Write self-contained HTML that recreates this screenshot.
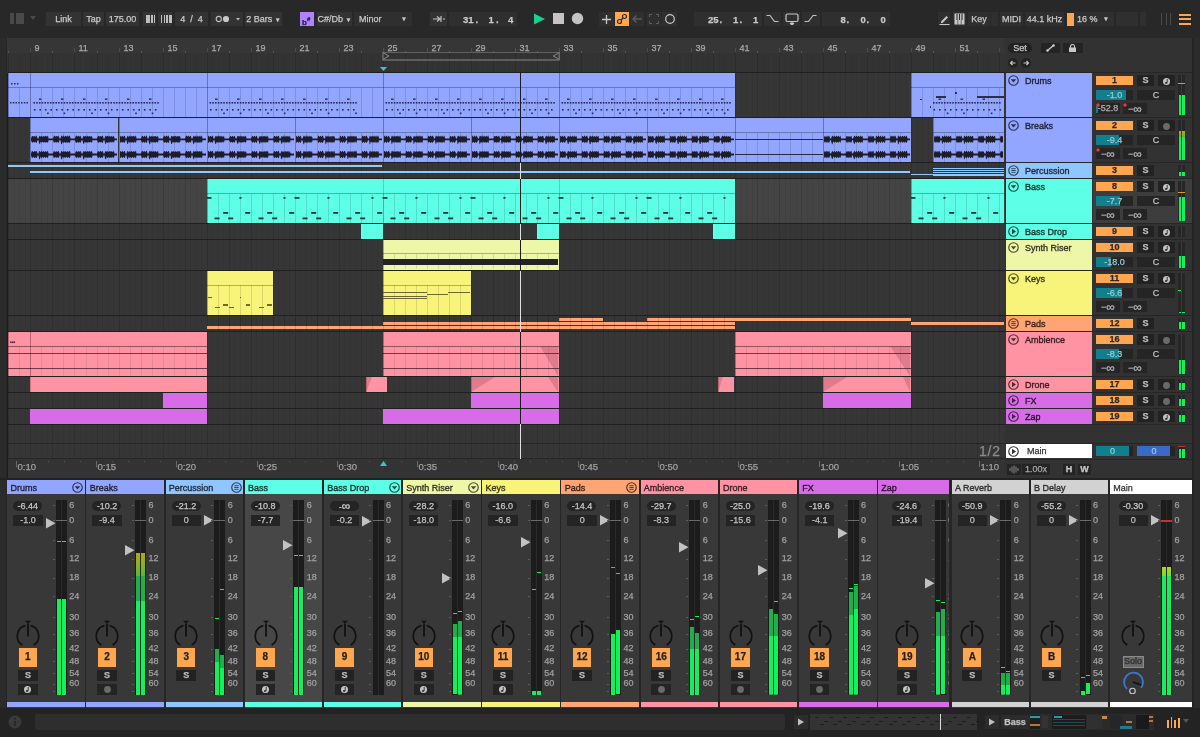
<!DOCTYPE html><html><head><meta charset="utf-8"><style>
html,body{margin:0;padding:0;width:1200px;height:737px;overflow:hidden;background:#1d1d1d;font-family:"Liberation Sans",sans-serif;}
#r{position:relative;width:1200px;height:737px;overflow:hidden}
#r>div,#r>span{position:absolute;box-sizing:border-box;white-space:nowrap}
#r>span{line-height:11px}
#r{-webkit-font-smoothing:antialiased;will-change:transform;-webkit-text-stroke:0.25px currentColor}
</style></head><body><div id="r">
<div style="left:0px;top:0px;width:1200px;height:38px;background:#282828;"></div>
<div style="left:10px;top:13px;width:4px;height:11px;background:#4a4a4a;"></div>
<div style="left:16px;top:13px;width:8px;height:11px;background:#4a4a4a;"></div>
<svg style="position:absolute;left:30px;top:16px" width="6" height="4"><path d="M0 0H6L3 4Z" fill="#4a4a4a"/></svg>
<div style="left:46px;top:12px;width:35px;height:14px;background:#333333;color:#c9c9c9;font-size:9px;line-height:14px;text-align:center;">Link</div>
<div style="left:83px;top:12px;width:21px;height:14px;background:#333333;color:#c9c9c9;font-size:9px;line-height:14px;text-align:center;">Tap</div>
<div style="left:106px;top:12px;width:33px;height:14px;background:#333333;color:#c9c9c9;font-size:9px;line-height:14px;text-align:center;">175.00</div>
<div style="left:143px;top:12px;width:13px;height:14px;background:#333333;color:#c9c9c9;font-size:9px;line-height:14px;text-align:center;"></div>
<div style="left:158px;top:12px;width:14px;height:14px;background:#333333;color:#c9c9c9;font-size:9px;line-height:14px;text-align:center;"></div>
<div style="left:146.0px;top:15px;width:3px;height:8px;background:#bdbdbd;"></div>
<div style="left:161.0px;top:15px;width:1.4px;height:8px;background:#bdbdbd;"></div>
<div style="left:148.6px;top:15px;width:1.4px;height:8px;background:#bdbdbd;"></div>
<div style="left:163.6px;top:15px;width:1.4px;height:8px;background:#bdbdbd;"></div>
<div style="left:151.2px;top:15px;width:1.4px;height:8px;background:#bdbdbd;"></div>
<div style="left:166.2px;top:15px;width:1.4px;height:8px;background:#bdbdbd;"></div>
<div style="left:153.8px;top:15px;width:1.4px;height:8px;background:#bdbdbd;"></div>
<div style="left:168.8px;top:15px;width:3px;height:8px;background:#bdbdbd;"></div>
<div style="left:175px;top:12px;width:33px;height:14px;background:#333333;color:#c9c9c9;font-size:9px;line-height:14px;text-align:center;">4 &nbsp;/ &nbsp;4</div>
<div style="left:211px;top:12px;width:32px;height:14px;background:#333333;color:#c9c9c9;font-size:9px;line-height:14px;text-align:center;"></div>
<svg style="position:absolute;left:215px;top:14px" width="26" height="10"><circle cx="3.8" cy="5" r="2.6" fill="none" stroke="#bdbdbd" stroke-width="1.1"/><circle cx="11" cy="5" r="3.1" fill="#c8c8c8"/><path d="M21 4H25L23 6.5Z" fill="#bdbdbd"/></svg>
<div style="left:245px;top:12px;width:37px;height:14px;background:#333333;color:#c9c9c9;font-size:9px;line-height:14px;text-align:center;">2 Bars <span style="font-size:6px">&#9660;</span></div>
<div style="left:300px;top:12px;width:14px;height:14px;background:#b084ff;"></div>
<span style="left:302px;top:14px;color:#2a1a40;font-size:8px;font-weight:bold;line-height:10px">b<sup style="font-size:6px">#</sup></span>
<div style="left:317px;top:12px;width:35px;height:14px;background:#333333;color:#c9c9c9;font-size:9px;line-height:14px;text-align:center;">C#/Db <span style="font-size:6px">&#9660;</span></div>
<div style="left:354px;top:12px;width:58px;height:14px;background:#2f2f2f;color:#c9c9c9;font-size:9px;line-height:14px;text-align:center;"><span style="position:absolute;left:5px">Minor</span><span style="position:absolute;right:5px;font-size:6px">&#9660;</span></div>
<div style="left:430px;top:12px;width:17px;height:14px;background:#333333;color:#c9c9c9;font-size:9px;line-height:14px;text-align:center;"></div>
<svg style="position:absolute;left:432px;top:15px" width="14" height="8"><path d="M1 4H7M5 1.5L8 4L5 6.5M9 1V7M11 4H13" stroke="#c0c0c0" stroke-width="1.2" fill="none"/></svg>
<div style="left:449px;top:12px;width:68px;height:14px;background:#2f2f2f;color:#c9c9c9;font-size:9px;line-height:14px;text-align:center;"></div>
<span style="left:463px;top:14px;color:#c9c9c9;font-size:9.5px;font-weight:bold;line-height:11px">31</span>
<span style="left:475.5px;top:14px;color:#c9c9c9;font-size:9.5px;font-weight:bold;line-height:11px">.</span>
<span style="left:488.5px;top:14px;color:#c9c9c9;font-size:9.5px;font-weight:bold;line-height:11px">1</span>
<span style="left:496px;top:14px;color:#c9c9c9;font-size:9.5px;font-weight:bold;line-height:11px">.</span>
<span style="left:508px;top:14px;color:#c9c9c9;font-size:9.5px;font-weight:bold;line-height:11px">4</span>
<svg style="position:absolute;left:533px;top:13px" width="13" height="12"><path d="M1 0.5L12 6L1 11.5Z" fill="#1bd08a"/></svg>
<div style="left:553px;top:13px;width:11px;height:11px;background:#c4c4c4;"></div>
<svg style="position:absolute;left:571px;top:12px" width="13" height="13"><circle cx="6.5" cy="6.5" r="5.7" fill="#c4c4c4"/></svg>
<div style="left:599px;top:12px;width:15px;height:14px;background:#2f2f2f;color:#c9c9c9;font-size:9px;line-height:14px;text-align:center;"></div>
<svg style="position:absolute;left:601px;top:14px" width="11" height="11"><path d="M5.5 1V10M1 5.5H10" stroke="#c8c8c8" stroke-width="1.3"/></svg>
<div style="left:615px;top:12px;width:14px;height:14px;background:#ffa64f;color:#c9c9c9;font-size:9px;line-height:14px;text-align:center;"></div>
<svg style="position:absolute;left:616px;top:13px" width="12" height="12"><circle cx="3.5" cy="8.5" r="2" fill="none" stroke="#2a2a2a" stroke-width="1.2"/><circle cx="8.5" cy="3.5" r="2" fill="none" stroke="#2a2a2a" stroke-width="1.2"/><path d="M5 7L7 5" stroke="#2a2a2a" stroke-width="1.2"/></svg>
<div style="left:630px;top:12px;width:14px;height:14px;background:#2f2f2f;color:#c9c9c9;font-size:9px;line-height:14px;text-align:center;"></div>
<svg style="position:absolute;left:632px;top:14px" width="11" height="10"><path d="M1 5H10M4.5 1.5L1 5L4.5 8.5" stroke="#5a5a5a" stroke-width="1.4" fill="none"/></svg>
<div style="left:647px;top:12px;width:14px;height:14px;background:#2f2f2f;color:#c9c9c9;font-size:9px;line-height:14px;text-align:center;"></div>
<svg style="position:absolute;left:649px;top:14px" width="10" height="10"><path d="M0.5 3V0.5H3M7 0.5H9.5V3M9.5 7V9.5H7M3 9.5H0.5V7" stroke="#5a5a5a" stroke-width="1.1" fill="none"/></svg>
<div style="left:662px;top:12px;width:15px;height:14px;background:#2f2f2f;color:#c9c9c9;font-size:9px;line-height:14px;text-align:center;"></div>
<svg style="position:absolute;left:664px;top:13px" width="12" height="12"><circle cx="6" cy="6" r="4.3" fill="none" stroke="#c8c8c8" stroke-width="1.2"/></svg>
<div style="left:694px;top:12px;width:68px;height:14px;background:#2f2f2f;color:#c9c9c9;font-size:9px;line-height:14px;text-align:center;"></div>
<span style="left:708px;top:14px;color:#c9c9c9;font-size:9.5px;font-weight:bold;line-height:11px">25</span>
<span style="left:719.5px;top:14px;color:#c9c9c9;font-size:9.5px;font-weight:bold;line-height:11px">.</span>
<span style="left:733px;top:14px;color:#c9c9c9;font-size:9.5px;font-weight:bold;line-height:11px">1</span>
<span style="left:739.5px;top:14px;color:#c9c9c9;font-size:9.5px;font-weight:bold;line-height:11px">.</span>
<span style="left:753px;top:14px;color:#c9c9c9;font-size:9.5px;font-weight:bold;line-height:11px">1</span>
<div style="left:764px;top:12px;width:17px;height:14px;background:#2f2f2f;color:#c9c9c9;font-size:9px;line-height:14px;text-align:center;"></div>
<svg style="position:absolute;left:766px;top:14px" width="13" height="9"><path d="M0.5 1.5H4L8.5 7.5H12.5" stroke="#c0c0c0" stroke-width="1.2" fill="none"/></svg>
<div style="left:783px;top:12px;width:17px;height:14px;background:#2f2f2f;color:#c9c9c9;font-size:9px;line-height:14px;text-align:center;"></div>
<svg style="position:absolute;left:785px;top:13px" width="14" height="12"><rect x="1" y="1" width="12" height="7.5" rx="1.5" fill="none" stroke="#c8c8c8" stroke-width="1.2"/><path d="M7 8V11.5M5 10L7 12L9 10" stroke="#c8c8c8" stroke-width="1.2" fill="#c8c8c8"/></svg>
<div style="left:802px;top:12px;width:18px;height:14px;background:#2f2f2f;color:#c9c9c9;font-size:9px;line-height:14px;text-align:center;"></div>
<svg style="position:absolute;left:804px;top:14px" width="13" height="9"><path d="M0.5 7.5H4.5L9 1.5H12.5" stroke="#c0c0c0" stroke-width="1.2" fill="none"/></svg>
<div style="left:822px;top:12px;width:68px;height:14px;background:#2f2f2f;color:#c9c9c9;font-size:9px;line-height:14px;text-align:center;"></div>
<span style="left:840.5px;top:14px;color:#c9c9c9;font-size:9.5px;font-weight:bold;line-height:11px">8</span>
<span style="left:846.5px;top:14px;color:#c9c9c9;font-size:9.5px;font-weight:bold;line-height:11px">.</span>
<span style="left:860.5px;top:14px;color:#c9c9c9;font-size:9.5px;font-weight:bold;line-height:11px">0</span>
<span style="left:866.5px;top:14px;color:#c9c9c9;font-size:9.5px;font-weight:bold;line-height:11px">.</span>
<span style="left:880.5px;top:14px;color:#c9c9c9;font-size:9.5px;font-weight:bold;line-height:11px">0</span>
<div style="left:938px;top:12px;width:12px;height:14px;background:#2f2f2f;color:#c9c9c9;font-size:9px;line-height:14px;text-align:center;"></div>
<svg style="position:absolute;left:939px;top:13px" width="11" height="12"><path d="M2 8.5L7.5 3L9 4.5L3.5 10H2Z" fill="#c8c8c8"/><path d="M0.5 11.5H10.5" stroke="#c8c8c8" stroke-width="1"/></svg>
<div style="left:953px;top:12px;width:13px;height:14px;background:#2f2f2f;color:#c9c9c9;font-size:9px;line-height:14px;text-align:center;"></div>
<svg style="position:absolute;left:954px;top:13px" width="11" height="12"><rect x="0.5" y="0.5" width="10" height="11" fill="#c8c8c8"/><path d="M3 1V7M5.5 1V7M8 1V7" stroke="#2a2a2a" stroke-width="1.1"/><path d="M3.8 7V11.5M7.2 7V11.5" stroke="#2a2a2a" stroke-width="0.6"/></svg>
<div style="left:968px;top:12px;width:22px;height:14px;background:#2f2f2f;color:#c9c9c9;font-size:9px;line-height:14px;text-align:center;">Key</div>
<div style="left:991px;top:12px;width:7px;height:14px;background:#2f2f2f;color:#c9c9c9;font-size:9px;line-height:14px;text-align:center;"></div>
<div style="left:1000px;top:12px;width:23px;height:14px;background:#2f2f2f;color:#c9c9c9;font-size:9px;line-height:14px;text-align:center;">MIDI</div>
<div style="left:1025px;top:12px;width:39px;height:14px;background:#2f2f2f;color:#c9c9c9;font-size:9px;line-height:14px;text-align:center;">44.1 kHz</div>
<div style="left:1067px;top:13px;width:6.5px;height:12.5px;background:#ffa64f;"></div>
<div style="left:1074px;top:12px;width:40px;height:14px;background:#2f2f2f;color:#c9c9c9;font-size:9px;line-height:14px;text-align:center;"><span style="position:absolute;left:3px">16 %</span><span style="position:absolute;right:5px;font-size:6px">&#9660;</span></div>
<div style="left:1116px;top:12px;width:22px;height:14px;background:#2f2f2f;color:#c9c9c9;font-size:9px;line-height:14px;text-align:center;"></div>
<div style="left:1140px;top:12px;width:6px;height:14px;background:#2f2f2f;color:#c9c9c9;font-size:9px;line-height:14px;text-align:center;"></div>
<div style="left:1161.0px;top:13px;width:1px;height:12px;background:#4a4a4a;"></div>
<div style="left:1165.5px;top:13px;width:1px;height:12px;background:#4a4a4a;"></div>
<div style="left:1170.0px;top:13px;width:1px;height:12px;background:#4a4a4a;"></div>
<div style="left:1179px;top:13.5px;width:12px;height:2px;background:#ffa64f;"></div>
<div style="left:1179px;top:18.3px;width:12px;height:2px;background:#ffa64f;"></div>
<div style="left:1179px;top:23.1px;width:12px;height:2px;background:#ffa64f;"></div>
<div style="left:0px;top:38px;width:7px;height:672px;background:#2b2b2b;"></div>
<div style="left:5.5px;top:38px;width:1.5px;height:672px;background:#262626;"></div>
<div style="left:0px;top:710px;width:1200px;height:27px;background:#232323;"></div>
<div style="left:7px;top:38px;width:998px;height:35px;background:#333333;"></div>
<div style="left:7px;top:38px;width:998px;height:15px;background:#363636;"></div>
<div style="left:8px;top:53px;width:1px;height:19px;background:#2c2c2c;"></div>
<div style="left:14px;top:53px;width:1px;height:19px;background:#313131;"></div>
<div style="left:19px;top:53px;width:1px;height:19px;background:#313131;"></div>
<div style="left:25px;top:53px;width:1px;height:19px;background:#313131;"></div>
<div style="left:30px;top:53px;width:1px;height:19px;background:#2c2c2c;"></div>
<div style="left:36px;top:53px;width:1px;height:19px;background:#313131;"></div>
<div style="left:41px;top:53px;width:1px;height:19px;background:#313131;"></div>
<div style="left:47px;top:53px;width:1px;height:19px;background:#313131;"></div>
<div style="left:52px;top:53px;width:1px;height:19px;background:#2c2c2c;"></div>
<div style="left:58px;top:53px;width:1px;height:19px;background:#313131;"></div>
<div style="left:63px;top:53px;width:1px;height:19px;background:#313131;"></div>
<div style="left:69px;top:53px;width:1px;height:19px;background:#313131;"></div>
<div style="left:74px;top:53px;width:1px;height:19px;background:#2c2c2c;"></div>
<div style="left:80px;top:53px;width:1px;height:19px;background:#313131;"></div>
<div style="left:86px;top:53px;width:1px;height:19px;background:#313131;"></div>
<div style="left:91px;top:53px;width:1px;height:19px;background:#313131;"></div>
<div style="left:97px;top:53px;width:1px;height:19px;background:#2c2c2c;"></div>
<div style="left:102px;top:53px;width:1px;height:19px;background:#313131;"></div>
<div style="left:108px;top:53px;width:1px;height:19px;background:#313131;"></div>
<div style="left:113px;top:53px;width:1px;height:19px;background:#313131;"></div>
<div style="left:119px;top:53px;width:1px;height:19px;background:#2c2c2c;"></div>
<div style="left:124px;top:53px;width:1px;height:19px;background:#313131;"></div>
<div style="left:130px;top:53px;width:1px;height:19px;background:#313131;"></div>
<div style="left:135px;top:53px;width:1px;height:19px;background:#313131;"></div>
<div style="left:141px;top:53px;width:1px;height:19px;background:#2c2c2c;"></div>
<div style="left:146px;top:53px;width:1px;height:19px;background:#313131;"></div>
<div style="left:152px;top:53px;width:1px;height:19px;background:#313131;"></div>
<div style="left:157px;top:53px;width:1px;height:19px;background:#313131;"></div>
<div style="left:163px;top:53px;width:1px;height:19px;background:#2c2c2c;"></div>
<div style="left:168px;top:53px;width:1px;height:19px;background:#313131;"></div>
<div style="left:174px;top:53px;width:1px;height:19px;background:#313131;"></div>
<div style="left:179px;top:53px;width:1px;height:19px;background:#313131;"></div>
<div style="left:185px;top:53px;width:1px;height:19px;background:#2c2c2c;"></div>
<div style="left:190px;top:53px;width:1px;height:19px;background:#313131;"></div>
<div style="left:196px;top:53px;width:1px;height:19px;background:#313131;"></div>
<div style="left:201px;top:53px;width:1px;height:19px;background:#313131;"></div>
<div style="left:207px;top:53px;width:1px;height:19px;background:#2c2c2c;"></div>
<div style="left:212px;top:53px;width:1px;height:19px;background:#313131;"></div>
<div style="left:218px;top:53px;width:1px;height:19px;background:#313131;"></div>
<div style="left:223px;top:53px;width:1px;height:19px;background:#313131;"></div>
<div style="left:229px;top:53px;width:1px;height:19px;background:#2c2c2c;"></div>
<div style="left:234px;top:53px;width:1px;height:19px;background:#313131;"></div>
<div style="left:240px;top:53px;width:1px;height:19px;background:#313131;"></div>
<div style="left:245px;top:53px;width:1px;height:19px;background:#313131;"></div>
<div style="left:251px;top:53px;width:1px;height:19px;background:#2c2c2c;"></div>
<div style="left:256px;top:53px;width:1px;height:19px;background:#313131;"></div>
<div style="left:262px;top:53px;width:1px;height:19px;background:#313131;"></div>
<div style="left:267px;top:53px;width:1px;height:19px;background:#313131;"></div>
<div style="left:273px;top:53px;width:1px;height:19px;background:#2c2c2c;"></div>
<div style="left:278px;top:53px;width:1px;height:19px;background:#313131;"></div>
<div style="left:284px;top:53px;width:1px;height:19px;background:#313131;"></div>
<div style="left:289px;top:53px;width:1px;height:19px;background:#313131;"></div>
<div style="left:295px;top:53px;width:1px;height:19px;background:#2c2c2c;"></div>
<div style="left:300px;top:53px;width:1px;height:19px;background:#313131;"></div>
<div style="left:306px;top:53px;width:1px;height:19px;background:#313131;"></div>
<div style="left:311px;top:53px;width:1px;height:19px;background:#313131;"></div>
<div style="left:317px;top:53px;width:1px;height:19px;background:#2c2c2c;"></div>
<div style="left:322px;top:53px;width:1px;height:19px;background:#313131;"></div>
<div style="left:328px;top:53px;width:1px;height:19px;background:#313131;"></div>
<div style="left:333px;top:53px;width:1px;height:19px;background:#313131;"></div>
<div style="left:339px;top:53px;width:1px;height:19px;background:#2c2c2c;"></div>
<div style="left:344px;top:53px;width:1px;height:19px;background:#313131;"></div>
<div style="left:350px;top:53px;width:1px;height:19px;background:#313131;"></div>
<div style="left:355px;top:53px;width:1px;height:19px;background:#313131;"></div>
<div style="left:361px;top:53px;width:1px;height:19px;background:#2c2c2c;"></div>
<div style="left:366px;top:53px;width:1px;height:19px;background:#313131;"></div>
<div style="left:372px;top:53px;width:1px;height:19px;background:#313131;"></div>
<div style="left:377px;top:53px;width:1px;height:19px;background:#313131;"></div>
<div style="left:383px;top:53px;width:1px;height:19px;background:#2c2c2c;"></div>
<div style="left:388px;top:53px;width:1px;height:19px;background:#313131;"></div>
<div style="left:394px;top:53px;width:1px;height:19px;background:#313131;"></div>
<div style="left:399px;top:53px;width:1px;height:19px;background:#313131;"></div>
<div style="left:405px;top:53px;width:1px;height:19px;background:#2c2c2c;"></div>
<div style="left:410px;top:53px;width:1px;height:19px;background:#313131;"></div>
<div style="left:416px;top:53px;width:1px;height:19px;background:#313131;"></div>
<div style="left:421px;top:53px;width:1px;height:19px;background:#313131;"></div>
<div style="left:427px;top:53px;width:1px;height:19px;background:#2c2c2c;"></div>
<div style="left:432px;top:53px;width:1px;height:19px;background:#313131;"></div>
<div style="left:438px;top:53px;width:1px;height:19px;background:#313131;"></div>
<div style="left:443px;top:53px;width:1px;height:19px;background:#313131;"></div>
<div style="left:449px;top:53px;width:1px;height:19px;background:#2c2c2c;"></div>
<div style="left:454px;top:53px;width:1px;height:19px;background:#313131;"></div>
<div style="left:460px;top:53px;width:1px;height:19px;background:#313131;"></div>
<div style="left:465px;top:53px;width:1px;height:19px;background:#313131;"></div>
<div style="left:471px;top:53px;width:1px;height:19px;background:#2c2c2c;"></div>
<div style="left:476px;top:53px;width:1px;height:19px;background:#313131;"></div>
<div style="left:482px;top:53px;width:1px;height:19px;background:#313131;"></div>
<div style="left:487px;top:53px;width:1px;height:19px;background:#313131;"></div>
<div style="left:493px;top:53px;width:1px;height:19px;background:#2c2c2c;"></div>
<div style="left:498px;top:53px;width:1px;height:19px;background:#313131;"></div>
<div style="left:504px;top:53px;width:1px;height:19px;background:#313131;"></div>
<div style="left:509px;top:53px;width:1px;height:19px;background:#313131;"></div>
<div style="left:515px;top:53px;width:1px;height:19px;background:#2c2c2c;"></div>
<div style="left:520px;top:53px;width:1px;height:19px;background:#313131;"></div>
<div style="left:526px;top:53px;width:1px;height:19px;background:#313131;"></div>
<div style="left:531px;top:53px;width:1px;height:19px;background:#313131;"></div>
<div style="left:537px;top:53px;width:1px;height:19px;background:#2c2c2c;"></div>
<div style="left:542px;top:53px;width:1px;height:19px;background:#313131;"></div>
<div style="left:548px;top:53px;width:1px;height:19px;background:#313131;"></div>
<div style="left:553px;top:53px;width:1px;height:19px;background:#313131;"></div>
<div style="left:559px;top:53px;width:1px;height:19px;background:#2c2c2c;"></div>
<div style="left:564px;top:53px;width:1px;height:19px;background:#313131;"></div>
<div style="left:570px;top:53px;width:1px;height:19px;background:#313131;"></div>
<div style="left:575px;top:53px;width:1px;height:19px;background:#313131;"></div>
<div style="left:581px;top:53px;width:1px;height:19px;background:#2c2c2c;"></div>
<div style="left:586px;top:53px;width:1px;height:19px;background:#313131;"></div>
<div style="left:592px;top:53px;width:1px;height:19px;background:#313131;"></div>
<div style="left:597px;top:53px;width:1px;height:19px;background:#313131;"></div>
<div style="left:603px;top:53px;width:1px;height:19px;background:#2c2c2c;"></div>
<div style="left:608px;top:53px;width:1px;height:19px;background:#313131;"></div>
<div style="left:614px;top:53px;width:1px;height:19px;background:#313131;"></div>
<div style="left:619px;top:53px;width:1px;height:19px;background:#313131;"></div>
<div style="left:625px;top:53px;width:1px;height:19px;background:#2c2c2c;"></div>
<div style="left:630px;top:53px;width:1px;height:19px;background:#313131;"></div>
<div style="left:636px;top:53px;width:1px;height:19px;background:#313131;"></div>
<div style="left:642px;top:53px;width:1px;height:19px;background:#313131;"></div>
<div style="left:647px;top:53px;width:1px;height:19px;background:#2c2c2c;"></div>
<div style="left:653px;top:53px;width:1px;height:19px;background:#313131;"></div>
<div style="left:658px;top:53px;width:1px;height:19px;background:#313131;"></div>
<div style="left:664px;top:53px;width:1px;height:19px;background:#313131;"></div>
<div style="left:669px;top:53px;width:1px;height:19px;background:#2c2c2c;"></div>
<div style="left:675px;top:53px;width:1px;height:19px;background:#313131;"></div>
<div style="left:680px;top:53px;width:1px;height:19px;background:#313131;"></div>
<div style="left:686px;top:53px;width:1px;height:19px;background:#313131;"></div>
<div style="left:691px;top:53px;width:1px;height:19px;background:#2c2c2c;"></div>
<div style="left:697px;top:53px;width:1px;height:19px;background:#313131;"></div>
<div style="left:702px;top:53px;width:1px;height:19px;background:#313131;"></div>
<div style="left:708px;top:53px;width:1px;height:19px;background:#313131;"></div>
<div style="left:713px;top:53px;width:1px;height:19px;background:#2c2c2c;"></div>
<div style="left:719px;top:53px;width:1px;height:19px;background:#313131;"></div>
<div style="left:724px;top:53px;width:1px;height:19px;background:#313131;"></div>
<div style="left:730px;top:53px;width:1px;height:19px;background:#313131;"></div>
<div style="left:735px;top:53px;width:1px;height:19px;background:#2c2c2c;"></div>
<div style="left:741px;top:53px;width:1px;height:19px;background:#313131;"></div>
<div style="left:746px;top:53px;width:1px;height:19px;background:#313131;"></div>
<div style="left:752px;top:53px;width:1px;height:19px;background:#313131;"></div>
<div style="left:757px;top:53px;width:1px;height:19px;background:#2c2c2c;"></div>
<div style="left:763px;top:53px;width:1px;height:19px;background:#313131;"></div>
<div style="left:768px;top:53px;width:1px;height:19px;background:#313131;"></div>
<div style="left:774px;top:53px;width:1px;height:19px;background:#313131;"></div>
<div style="left:779px;top:53px;width:1px;height:19px;background:#2c2c2c;"></div>
<div style="left:785px;top:53px;width:1px;height:19px;background:#313131;"></div>
<div style="left:790px;top:53px;width:1px;height:19px;background:#313131;"></div>
<div style="left:796px;top:53px;width:1px;height:19px;background:#313131;"></div>
<div style="left:801px;top:53px;width:1px;height:19px;background:#2c2c2c;"></div>
<div style="left:807px;top:53px;width:1px;height:19px;background:#313131;"></div>
<div style="left:812px;top:53px;width:1px;height:19px;background:#313131;"></div>
<div style="left:818px;top:53px;width:1px;height:19px;background:#313131;"></div>
<div style="left:823px;top:53px;width:1px;height:19px;background:#2c2c2c;"></div>
<div style="left:829px;top:53px;width:1px;height:19px;background:#313131;"></div>
<div style="left:834px;top:53px;width:1px;height:19px;background:#313131;"></div>
<div style="left:840px;top:53px;width:1px;height:19px;background:#313131;"></div>
<div style="left:845px;top:53px;width:1px;height:19px;background:#2c2c2c;"></div>
<div style="left:851px;top:53px;width:1px;height:19px;background:#313131;"></div>
<div style="left:856px;top:53px;width:1px;height:19px;background:#313131;"></div>
<div style="left:862px;top:53px;width:1px;height:19px;background:#313131;"></div>
<div style="left:867px;top:53px;width:1px;height:19px;background:#2c2c2c;"></div>
<div style="left:873px;top:53px;width:1px;height:19px;background:#313131;"></div>
<div style="left:878px;top:53px;width:1px;height:19px;background:#313131;"></div>
<div style="left:884px;top:53px;width:1px;height:19px;background:#313131;"></div>
<div style="left:889px;top:53px;width:1px;height:19px;background:#2c2c2c;"></div>
<div style="left:895px;top:53px;width:1px;height:19px;background:#313131;"></div>
<div style="left:900px;top:53px;width:1px;height:19px;background:#313131;"></div>
<div style="left:906px;top:53px;width:1px;height:19px;background:#313131;"></div>
<div style="left:911px;top:53px;width:1px;height:19px;background:#2c2c2c;"></div>
<div style="left:917px;top:53px;width:1px;height:19px;background:#313131;"></div>
<div style="left:922px;top:53px;width:1px;height:19px;background:#313131;"></div>
<div style="left:928px;top:53px;width:1px;height:19px;background:#313131;"></div>
<div style="left:933px;top:53px;width:1px;height:19px;background:#2c2c2c;"></div>
<div style="left:939px;top:53px;width:1px;height:19px;background:#313131;"></div>
<div style="left:944px;top:53px;width:1px;height:19px;background:#313131;"></div>
<div style="left:950px;top:53px;width:1px;height:19px;background:#313131;"></div>
<div style="left:955px;top:53px;width:1px;height:19px;background:#2c2c2c;"></div>
<div style="left:961px;top:53px;width:1px;height:19px;background:#313131;"></div>
<div style="left:966px;top:53px;width:1px;height:19px;background:#313131;"></div>
<div style="left:972px;top:53px;width:1px;height:19px;background:#313131;"></div>
<div style="left:977px;top:53px;width:1px;height:19px;background:#2c2c2c;"></div>
<div style="left:983px;top:53px;width:1px;height:19px;background:#313131;"></div>
<div style="left:988px;top:53px;width:1px;height:19px;background:#313131;"></div>
<div style="left:994px;top:53px;width:1px;height:19px;background:#313131;"></div>
<div style="left:999px;top:53px;width:1px;height:19px;background:#2c2c2c;"></div>
<div style="left:30px;top:47.5px;width:1px;height:4px;background:#4e4e4e;"></div>
<span style="left:34.5px;top:43px;color:#a8a8a8;font-size:9px;">9</span>
<div style="left:74px;top:47.5px;width:1px;height:4px;background:#4e4e4e;"></div>
<span style="left:78.5px;top:43px;color:#a8a8a8;font-size:9px;">11</span>
<div style="left:119px;top:47.5px;width:1px;height:4px;background:#4e4e4e;"></div>
<span style="left:123.5px;top:43px;color:#a8a8a8;font-size:9px;">13</span>
<div style="left:163px;top:47.5px;width:1px;height:4px;background:#4e4e4e;"></div>
<span style="left:167.5px;top:43px;color:#a8a8a8;font-size:9px;">15</span>
<div style="left:207px;top:47.5px;width:1px;height:4px;background:#4e4e4e;"></div>
<span style="left:211.5px;top:43px;color:#a8a8a8;font-size:9px;">17</span>
<div style="left:251px;top:47.5px;width:1px;height:4px;background:#4e4e4e;"></div>
<span style="left:255.5px;top:43px;color:#a8a8a8;font-size:9px;">19</span>
<div style="left:295px;top:47.5px;width:1px;height:4px;background:#4e4e4e;"></div>
<span style="left:299.5px;top:43px;color:#a8a8a8;font-size:9px;">21</span>
<div style="left:339px;top:47.5px;width:1px;height:4px;background:#4e4e4e;"></div>
<span style="left:343.5px;top:43px;color:#a8a8a8;font-size:9px;">23</span>
<div style="left:383px;top:47.5px;width:1px;height:4px;background:#4e4e4e;"></div>
<span style="left:387.5px;top:43px;color:#a8a8a8;font-size:9px;">25</span>
<div style="left:427px;top:47.5px;width:1px;height:4px;background:#4e4e4e;"></div>
<span style="left:431.5px;top:43px;color:#a8a8a8;font-size:9px;">27</span>
<div style="left:471px;top:47.5px;width:1px;height:4px;background:#4e4e4e;"></div>
<span style="left:475.5px;top:43px;color:#a8a8a8;font-size:9px;">29</span>
<div style="left:515px;top:47.5px;width:1px;height:4px;background:#4e4e4e;"></div>
<span style="left:519.5px;top:43px;color:#a8a8a8;font-size:9px;">31</span>
<div style="left:559px;top:47.5px;width:1px;height:4px;background:#4e4e4e;"></div>
<span style="left:563.5px;top:43px;color:#a8a8a8;font-size:9px;">33</span>
<div style="left:603px;top:47.5px;width:1px;height:4px;background:#4e4e4e;"></div>
<span style="left:607.5px;top:43px;color:#a8a8a8;font-size:9px;">35</span>
<div style="left:647px;top:47.5px;width:1px;height:4px;background:#4e4e4e;"></div>
<span style="left:651.5px;top:43px;color:#a8a8a8;font-size:9px;">37</span>
<div style="left:691px;top:47.5px;width:1px;height:4px;background:#4e4e4e;"></div>
<span style="left:695.5px;top:43px;color:#a8a8a8;font-size:9px;">39</span>
<div style="left:735px;top:47.5px;width:1px;height:4px;background:#4e4e4e;"></div>
<span style="left:739.5px;top:43px;color:#a8a8a8;font-size:9px;">41</span>
<div style="left:779px;top:47.5px;width:1px;height:4px;background:#4e4e4e;"></div>
<span style="left:783.5px;top:43px;color:#a8a8a8;font-size:9px;">43</span>
<div style="left:823px;top:47.5px;width:1px;height:4px;background:#4e4e4e;"></div>
<span style="left:827.5px;top:43px;color:#a8a8a8;font-size:9px;">45</span>
<div style="left:867px;top:47.5px;width:1px;height:4px;background:#4e4e4e;"></div>
<span style="left:871.5px;top:43px;color:#a8a8a8;font-size:9px;">47</span>
<div style="left:911px;top:47.5px;width:1px;height:4px;background:#4e4e4e;"></div>
<span style="left:915.5px;top:43px;color:#a8a8a8;font-size:9px;">49</span>
<div style="left:955px;top:47.5px;width:1px;height:4px;background:#4e4e4e;"></div>
<span style="left:959.5px;top:43px;color:#a8a8a8;font-size:9px;">51</span>
<div style="left:999px;top:47.5px;width:1px;height:4px;background:#4e4e4e;"></div>
<div style="left:8px;top:51px;width:1px;height:2px;background:#555555;"></div>
<div style="left:52px;top:51px;width:1px;height:2px;background:#555555;"></div>
<div style="left:97px;top:51px;width:1px;height:2px;background:#555555;"></div>
<div style="left:141px;top:51px;width:1px;height:2px;background:#555555;"></div>
<div style="left:185px;top:51px;width:1px;height:2px;background:#555555;"></div>
<div style="left:229px;top:51px;width:1px;height:2px;background:#555555;"></div>
<div style="left:273px;top:51px;width:1px;height:2px;background:#555555;"></div>
<div style="left:317px;top:51px;width:1px;height:2px;background:#555555;"></div>
<div style="left:361px;top:51px;width:1px;height:2px;background:#555555;"></div>
<div style="left:405px;top:51px;width:1px;height:2px;background:#555555;"></div>
<div style="left:449px;top:51px;width:1px;height:2px;background:#555555;"></div>
<div style="left:493px;top:51px;width:1px;height:2px;background:#555555;"></div>
<div style="left:537px;top:51px;width:1px;height:2px;background:#555555;"></div>
<div style="left:581px;top:51px;width:1px;height:2px;background:#555555;"></div>
<div style="left:625px;top:51px;width:1px;height:2px;background:#555555;"></div>
<div style="left:669px;top:51px;width:1px;height:2px;background:#555555;"></div>
<div style="left:713px;top:51px;width:1px;height:2px;background:#555555;"></div>
<div style="left:757px;top:51px;width:1px;height:2px;background:#555555;"></div>
<div style="left:801px;top:51px;width:1px;height:2px;background:#555555;"></div>
<div style="left:845px;top:51px;width:1px;height:2px;background:#555555;"></div>
<div style="left:889px;top:51px;width:1px;height:2px;background:#555555;"></div>
<div style="left:933px;top:51px;width:1px;height:2px;background:#555555;"></div>
<div style="left:977px;top:51px;width:1px;height:2px;background:#555555;"></div>
<svg style="position:absolute;left:381.77px;top:52px" width="179.16000000000008" height="10"><rect x="1" y="0" width="176.16000000000008" height="8" fill="none" stroke="#8a8a8a" stroke-width="1"/><path d="M1.5 1L7 4L1.5 7" fill="none" stroke="#8a8a8a" stroke-width="1"/><path d="M176.66000000000008 1L171.16000000000008 4L176.66000000000008 7" fill="none" stroke="#8a8a8a" stroke-width="1"/></svg>
<svg style="position:absolute;left:379.77px;top:67px" width="7" height="5"><path d="M0 0H7L3.5 4Z" fill="#39c6d0"/></svg>
<div style="left:8px;top:73px;width:997px;height:386px;background:#363636;"></div>
<div style="left:8px;top:179px;width:997px;height:44px;background:#444444;"></div>
<div style="left:8px;top:73px;width:1px;height:386px;background:rgba(0,0,0,0.13);"></div>
<div style="left:14px;top:73px;width:1px;height:386px;background:rgba(0,0,0,0.05);"></div>
<div style="left:19px;top:73px;width:1px;height:386px;background:rgba(0,0,0,0.05);"></div>
<div style="left:25px;top:73px;width:1px;height:386px;background:rgba(0,0,0,0.05);"></div>
<div style="left:30px;top:73px;width:1px;height:386px;background:rgba(0,0,0,0.13);"></div>
<div style="left:36px;top:73px;width:1px;height:386px;background:rgba(0,0,0,0.05);"></div>
<div style="left:41px;top:73px;width:1px;height:386px;background:rgba(0,0,0,0.05);"></div>
<div style="left:47px;top:73px;width:1px;height:386px;background:rgba(0,0,0,0.05);"></div>
<div style="left:52px;top:73px;width:1px;height:386px;background:rgba(0,0,0,0.13);"></div>
<div style="left:58px;top:73px;width:1px;height:386px;background:rgba(0,0,0,0.05);"></div>
<div style="left:63px;top:73px;width:1px;height:386px;background:rgba(0,0,0,0.05);"></div>
<div style="left:69px;top:73px;width:1px;height:386px;background:rgba(0,0,0,0.05);"></div>
<div style="left:74px;top:73px;width:1px;height:386px;background:rgba(0,0,0,0.13);"></div>
<div style="left:80px;top:73px;width:1px;height:386px;background:rgba(0,0,0,0.05);"></div>
<div style="left:86px;top:73px;width:1px;height:386px;background:rgba(0,0,0,0.05);"></div>
<div style="left:91px;top:73px;width:1px;height:386px;background:rgba(0,0,0,0.05);"></div>
<div style="left:97px;top:73px;width:1px;height:386px;background:rgba(0,0,0,0.13);"></div>
<div style="left:102px;top:73px;width:1px;height:386px;background:rgba(0,0,0,0.05);"></div>
<div style="left:108px;top:73px;width:1px;height:386px;background:rgba(0,0,0,0.05);"></div>
<div style="left:113px;top:73px;width:1px;height:386px;background:rgba(0,0,0,0.05);"></div>
<div style="left:119px;top:73px;width:1px;height:386px;background:rgba(0,0,0,0.13);"></div>
<div style="left:124px;top:73px;width:1px;height:386px;background:rgba(0,0,0,0.05);"></div>
<div style="left:130px;top:73px;width:1px;height:386px;background:rgba(0,0,0,0.05);"></div>
<div style="left:135px;top:73px;width:1px;height:386px;background:rgba(0,0,0,0.05);"></div>
<div style="left:141px;top:73px;width:1px;height:386px;background:rgba(0,0,0,0.13);"></div>
<div style="left:146px;top:73px;width:1px;height:386px;background:rgba(0,0,0,0.05);"></div>
<div style="left:152px;top:73px;width:1px;height:386px;background:rgba(0,0,0,0.05);"></div>
<div style="left:157px;top:73px;width:1px;height:386px;background:rgba(0,0,0,0.05);"></div>
<div style="left:163px;top:73px;width:1px;height:386px;background:rgba(0,0,0,0.13);"></div>
<div style="left:168px;top:73px;width:1px;height:386px;background:rgba(0,0,0,0.05);"></div>
<div style="left:174px;top:73px;width:1px;height:386px;background:rgba(0,0,0,0.05);"></div>
<div style="left:179px;top:73px;width:1px;height:386px;background:rgba(0,0,0,0.05);"></div>
<div style="left:185px;top:73px;width:1px;height:386px;background:rgba(0,0,0,0.13);"></div>
<div style="left:190px;top:73px;width:1px;height:386px;background:rgba(0,0,0,0.05);"></div>
<div style="left:196px;top:73px;width:1px;height:386px;background:rgba(0,0,0,0.05);"></div>
<div style="left:201px;top:73px;width:1px;height:386px;background:rgba(0,0,0,0.05);"></div>
<div style="left:207px;top:73px;width:1px;height:386px;background:rgba(0,0,0,0.13);"></div>
<div style="left:212px;top:73px;width:1px;height:386px;background:rgba(0,0,0,0.05);"></div>
<div style="left:218px;top:73px;width:1px;height:386px;background:rgba(0,0,0,0.05);"></div>
<div style="left:223px;top:73px;width:1px;height:386px;background:rgba(0,0,0,0.05);"></div>
<div style="left:229px;top:73px;width:1px;height:386px;background:rgba(0,0,0,0.13);"></div>
<div style="left:234px;top:73px;width:1px;height:386px;background:rgba(0,0,0,0.05);"></div>
<div style="left:240px;top:73px;width:1px;height:386px;background:rgba(0,0,0,0.05);"></div>
<div style="left:245px;top:73px;width:1px;height:386px;background:rgba(0,0,0,0.05);"></div>
<div style="left:251px;top:73px;width:1px;height:386px;background:rgba(0,0,0,0.13);"></div>
<div style="left:256px;top:73px;width:1px;height:386px;background:rgba(0,0,0,0.05);"></div>
<div style="left:262px;top:73px;width:1px;height:386px;background:rgba(0,0,0,0.05);"></div>
<div style="left:267px;top:73px;width:1px;height:386px;background:rgba(0,0,0,0.05);"></div>
<div style="left:273px;top:73px;width:1px;height:386px;background:rgba(0,0,0,0.13);"></div>
<div style="left:278px;top:73px;width:1px;height:386px;background:rgba(0,0,0,0.05);"></div>
<div style="left:284px;top:73px;width:1px;height:386px;background:rgba(0,0,0,0.05);"></div>
<div style="left:289px;top:73px;width:1px;height:386px;background:rgba(0,0,0,0.05);"></div>
<div style="left:295px;top:73px;width:1px;height:386px;background:rgba(0,0,0,0.13);"></div>
<div style="left:300px;top:73px;width:1px;height:386px;background:rgba(0,0,0,0.05);"></div>
<div style="left:306px;top:73px;width:1px;height:386px;background:rgba(0,0,0,0.05);"></div>
<div style="left:311px;top:73px;width:1px;height:386px;background:rgba(0,0,0,0.05);"></div>
<div style="left:317px;top:73px;width:1px;height:386px;background:rgba(0,0,0,0.13);"></div>
<div style="left:322px;top:73px;width:1px;height:386px;background:rgba(0,0,0,0.05);"></div>
<div style="left:328px;top:73px;width:1px;height:386px;background:rgba(0,0,0,0.05);"></div>
<div style="left:333px;top:73px;width:1px;height:386px;background:rgba(0,0,0,0.05);"></div>
<div style="left:339px;top:73px;width:1px;height:386px;background:rgba(0,0,0,0.13);"></div>
<div style="left:344px;top:73px;width:1px;height:386px;background:rgba(0,0,0,0.05);"></div>
<div style="left:350px;top:73px;width:1px;height:386px;background:rgba(0,0,0,0.05);"></div>
<div style="left:355px;top:73px;width:1px;height:386px;background:rgba(0,0,0,0.05);"></div>
<div style="left:361px;top:73px;width:1px;height:386px;background:rgba(0,0,0,0.13);"></div>
<div style="left:366px;top:73px;width:1px;height:386px;background:rgba(0,0,0,0.05);"></div>
<div style="left:372px;top:73px;width:1px;height:386px;background:rgba(0,0,0,0.05);"></div>
<div style="left:377px;top:73px;width:1px;height:386px;background:rgba(0,0,0,0.05);"></div>
<div style="left:383px;top:73px;width:1px;height:386px;background:rgba(0,0,0,0.13);"></div>
<div style="left:388px;top:73px;width:1px;height:386px;background:rgba(0,0,0,0.05);"></div>
<div style="left:394px;top:73px;width:1px;height:386px;background:rgba(0,0,0,0.05);"></div>
<div style="left:399px;top:73px;width:1px;height:386px;background:rgba(0,0,0,0.05);"></div>
<div style="left:405px;top:73px;width:1px;height:386px;background:rgba(0,0,0,0.13);"></div>
<div style="left:410px;top:73px;width:1px;height:386px;background:rgba(0,0,0,0.05);"></div>
<div style="left:416px;top:73px;width:1px;height:386px;background:rgba(0,0,0,0.05);"></div>
<div style="left:421px;top:73px;width:1px;height:386px;background:rgba(0,0,0,0.05);"></div>
<div style="left:427px;top:73px;width:1px;height:386px;background:rgba(0,0,0,0.13);"></div>
<div style="left:432px;top:73px;width:1px;height:386px;background:rgba(0,0,0,0.05);"></div>
<div style="left:438px;top:73px;width:1px;height:386px;background:rgba(0,0,0,0.05);"></div>
<div style="left:443px;top:73px;width:1px;height:386px;background:rgba(0,0,0,0.05);"></div>
<div style="left:449px;top:73px;width:1px;height:386px;background:rgba(0,0,0,0.13);"></div>
<div style="left:454px;top:73px;width:1px;height:386px;background:rgba(0,0,0,0.05);"></div>
<div style="left:460px;top:73px;width:1px;height:386px;background:rgba(0,0,0,0.05);"></div>
<div style="left:465px;top:73px;width:1px;height:386px;background:rgba(0,0,0,0.05);"></div>
<div style="left:471px;top:73px;width:1px;height:386px;background:rgba(0,0,0,0.13);"></div>
<div style="left:476px;top:73px;width:1px;height:386px;background:rgba(0,0,0,0.05);"></div>
<div style="left:482px;top:73px;width:1px;height:386px;background:rgba(0,0,0,0.05);"></div>
<div style="left:487px;top:73px;width:1px;height:386px;background:rgba(0,0,0,0.05);"></div>
<div style="left:493px;top:73px;width:1px;height:386px;background:rgba(0,0,0,0.13);"></div>
<div style="left:498px;top:73px;width:1px;height:386px;background:rgba(0,0,0,0.05);"></div>
<div style="left:504px;top:73px;width:1px;height:386px;background:rgba(0,0,0,0.05);"></div>
<div style="left:509px;top:73px;width:1px;height:386px;background:rgba(0,0,0,0.05);"></div>
<div style="left:515px;top:73px;width:1px;height:386px;background:rgba(0,0,0,0.13);"></div>
<div style="left:520px;top:73px;width:1px;height:386px;background:rgba(0,0,0,0.05);"></div>
<div style="left:526px;top:73px;width:1px;height:386px;background:rgba(0,0,0,0.05);"></div>
<div style="left:531px;top:73px;width:1px;height:386px;background:rgba(0,0,0,0.05);"></div>
<div style="left:537px;top:73px;width:1px;height:386px;background:rgba(0,0,0,0.13);"></div>
<div style="left:542px;top:73px;width:1px;height:386px;background:rgba(0,0,0,0.05);"></div>
<div style="left:548px;top:73px;width:1px;height:386px;background:rgba(0,0,0,0.05);"></div>
<div style="left:553px;top:73px;width:1px;height:386px;background:rgba(0,0,0,0.05);"></div>
<div style="left:559px;top:73px;width:1px;height:386px;background:rgba(0,0,0,0.13);"></div>
<div style="left:564px;top:73px;width:1px;height:386px;background:rgba(0,0,0,0.05);"></div>
<div style="left:570px;top:73px;width:1px;height:386px;background:rgba(0,0,0,0.05);"></div>
<div style="left:575px;top:73px;width:1px;height:386px;background:rgba(0,0,0,0.05);"></div>
<div style="left:581px;top:73px;width:1px;height:386px;background:rgba(0,0,0,0.13);"></div>
<div style="left:586px;top:73px;width:1px;height:386px;background:rgba(0,0,0,0.05);"></div>
<div style="left:592px;top:73px;width:1px;height:386px;background:rgba(0,0,0,0.05);"></div>
<div style="left:597px;top:73px;width:1px;height:386px;background:rgba(0,0,0,0.05);"></div>
<div style="left:603px;top:73px;width:1px;height:386px;background:rgba(0,0,0,0.13);"></div>
<div style="left:608px;top:73px;width:1px;height:386px;background:rgba(0,0,0,0.05);"></div>
<div style="left:614px;top:73px;width:1px;height:386px;background:rgba(0,0,0,0.05);"></div>
<div style="left:619px;top:73px;width:1px;height:386px;background:rgba(0,0,0,0.05);"></div>
<div style="left:625px;top:73px;width:1px;height:386px;background:rgba(0,0,0,0.13);"></div>
<div style="left:630px;top:73px;width:1px;height:386px;background:rgba(0,0,0,0.05);"></div>
<div style="left:636px;top:73px;width:1px;height:386px;background:rgba(0,0,0,0.05);"></div>
<div style="left:642px;top:73px;width:1px;height:386px;background:rgba(0,0,0,0.05);"></div>
<div style="left:647px;top:73px;width:1px;height:386px;background:rgba(0,0,0,0.13);"></div>
<div style="left:653px;top:73px;width:1px;height:386px;background:rgba(0,0,0,0.05);"></div>
<div style="left:658px;top:73px;width:1px;height:386px;background:rgba(0,0,0,0.05);"></div>
<div style="left:664px;top:73px;width:1px;height:386px;background:rgba(0,0,0,0.05);"></div>
<div style="left:669px;top:73px;width:1px;height:386px;background:rgba(0,0,0,0.13);"></div>
<div style="left:675px;top:73px;width:1px;height:386px;background:rgba(0,0,0,0.05);"></div>
<div style="left:680px;top:73px;width:1px;height:386px;background:rgba(0,0,0,0.05);"></div>
<div style="left:686px;top:73px;width:1px;height:386px;background:rgba(0,0,0,0.05);"></div>
<div style="left:691px;top:73px;width:1px;height:386px;background:rgba(0,0,0,0.13);"></div>
<div style="left:697px;top:73px;width:1px;height:386px;background:rgba(0,0,0,0.05);"></div>
<div style="left:702px;top:73px;width:1px;height:386px;background:rgba(0,0,0,0.05);"></div>
<div style="left:708px;top:73px;width:1px;height:386px;background:rgba(0,0,0,0.05);"></div>
<div style="left:713px;top:73px;width:1px;height:386px;background:rgba(0,0,0,0.13);"></div>
<div style="left:719px;top:73px;width:1px;height:386px;background:rgba(0,0,0,0.05);"></div>
<div style="left:724px;top:73px;width:1px;height:386px;background:rgba(0,0,0,0.05);"></div>
<div style="left:730px;top:73px;width:1px;height:386px;background:rgba(0,0,0,0.05);"></div>
<div style="left:735px;top:73px;width:1px;height:386px;background:rgba(0,0,0,0.13);"></div>
<div style="left:741px;top:73px;width:1px;height:386px;background:rgba(0,0,0,0.05);"></div>
<div style="left:746px;top:73px;width:1px;height:386px;background:rgba(0,0,0,0.05);"></div>
<div style="left:752px;top:73px;width:1px;height:386px;background:rgba(0,0,0,0.05);"></div>
<div style="left:757px;top:73px;width:1px;height:386px;background:rgba(0,0,0,0.13);"></div>
<div style="left:763px;top:73px;width:1px;height:386px;background:rgba(0,0,0,0.05);"></div>
<div style="left:768px;top:73px;width:1px;height:386px;background:rgba(0,0,0,0.05);"></div>
<div style="left:774px;top:73px;width:1px;height:386px;background:rgba(0,0,0,0.05);"></div>
<div style="left:779px;top:73px;width:1px;height:386px;background:rgba(0,0,0,0.13);"></div>
<div style="left:785px;top:73px;width:1px;height:386px;background:rgba(0,0,0,0.05);"></div>
<div style="left:790px;top:73px;width:1px;height:386px;background:rgba(0,0,0,0.05);"></div>
<div style="left:796px;top:73px;width:1px;height:386px;background:rgba(0,0,0,0.05);"></div>
<div style="left:801px;top:73px;width:1px;height:386px;background:rgba(0,0,0,0.13);"></div>
<div style="left:807px;top:73px;width:1px;height:386px;background:rgba(0,0,0,0.05);"></div>
<div style="left:812px;top:73px;width:1px;height:386px;background:rgba(0,0,0,0.05);"></div>
<div style="left:818px;top:73px;width:1px;height:386px;background:rgba(0,0,0,0.05);"></div>
<div style="left:823px;top:73px;width:1px;height:386px;background:rgba(0,0,0,0.13);"></div>
<div style="left:829px;top:73px;width:1px;height:386px;background:rgba(0,0,0,0.05);"></div>
<div style="left:834px;top:73px;width:1px;height:386px;background:rgba(0,0,0,0.05);"></div>
<div style="left:840px;top:73px;width:1px;height:386px;background:rgba(0,0,0,0.05);"></div>
<div style="left:845px;top:73px;width:1px;height:386px;background:rgba(0,0,0,0.13);"></div>
<div style="left:851px;top:73px;width:1px;height:386px;background:rgba(0,0,0,0.05);"></div>
<div style="left:856px;top:73px;width:1px;height:386px;background:rgba(0,0,0,0.05);"></div>
<div style="left:862px;top:73px;width:1px;height:386px;background:rgba(0,0,0,0.05);"></div>
<div style="left:867px;top:73px;width:1px;height:386px;background:rgba(0,0,0,0.13);"></div>
<div style="left:873px;top:73px;width:1px;height:386px;background:rgba(0,0,0,0.05);"></div>
<div style="left:878px;top:73px;width:1px;height:386px;background:rgba(0,0,0,0.05);"></div>
<div style="left:884px;top:73px;width:1px;height:386px;background:rgba(0,0,0,0.05);"></div>
<div style="left:889px;top:73px;width:1px;height:386px;background:rgba(0,0,0,0.13);"></div>
<div style="left:895px;top:73px;width:1px;height:386px;background:rgba(0,0,0,0.05);"></div>
<div style="left:900px;top:73px;width:1px;height:386px;background:rgba(0,0,0,0.05);"></div>
<div style="left:906px;top:73px;width:1px;height:386px;background:rgba(0,0,0,0.05);"></div>
<div style="left:911px;top:73px;width:1px;height:386px;background:rgba(0,0,0,0.13);"></div>
<div style="left:917px;top:73px;width:1px;height:386px;background:rgba(0,0,0,0.05);"></div>
<div style="left:922px;top:73px;width:1px;height:386px;background:rgba(0,0,0,0.05);"></div>
<div style="left:928px;top:73px;width:1px;height:386px;background:rgba(0,0,0,0.05);"></div>
<div style="left:933px;top:73px;width:1px;height:386px;background:rgba(0,0,0,0.13);"></div>
<div style="left:939px;top:73px;width:1px;height:386px;background:rgba(0,0,0,0.05);"></div>
<div style="left:944px;top:73px;width:1px;height:386px;background:rgba(0,0,0,0.05);"></div>
<div style="left:950px;top:73px;width:1px;height:386px;background:rgba(0,0,0,0.05);"></div>
<div style="left:955px;top:73px;width:1px;height:386px;background:rgba(0,0,0,0.13);"></div>
<div style="left:961px;top:73px;width:1px;height:386px;background:rgba(0,0,0,0.05);"></div>
<div style="left:966px;top:73px;width:1px;height:386px;background:rgba(0,0,0,0.05);"></div>
<div style="left:972px;top:73px;width:1px;height:386px;background:rgba(0,0,0,0.05);"></div>
<div style="left:977px;top:73px;width:1px;height:386px;background:rgba(0,0,0,0.13);"></div>
<div style="left:983px;top:73px;width:1px;height:386px;background:rgba(0,0,0,0.05);"></div>
<div style="left:988px;top:73px;width:1px;height:386px;background:rgba(0,0,0,0.05);"></div>
<div style="left:994px;top:73px;width:1px;height:386px;background:rgba(0,0,0,0.05);"></div>
<div style="left:999px;top:73px;width:1px;height:386px;background:rgba(0,0,0,0.13);"></div>
<div style="left:8px;top:117px;width:997px;height:1px;background:#262626;"></div>
<div style="left:8px;top:162px;width:997px;height:1px;background:#262626;"></div>
<div style="left:8px;top:178px;width:997px;height:1px;background:#262626;"></div>
<div style="left:8px;top:223px;width:997px;height:1px;background:#262626;"></div>
<div style="left:8px;top:239px;width:997px;height:1px;background:#262626;"></div>
<div style="left:8px;top:270px;width:997px;height:1px;background:#262626;"></div>
<div style="left:8px;top:315px;width:997px;height:1px;background:#262626;"></div>
<div style="left:8px;top:331px;width:997px;height:1px;background:#262626;"></div>
<div style="left:8px;top:376px;width:997px;height:1px;background:#262626;"></div>
<div style="left:8px;top:392px;width:997px;height:1px;background:#262626;"></div>
<div style="left:8px;top:408px;width:997px;height:1px;background:#262626;"></div>
<div style="left:8px;top:424px;width:997px;height:1px;background:#262626;"></div>
<div style="left:8px;top:72px;width:997px;height:1px;background:#262626;"></div>
<div style="left:8px;top:443px;width:997px;height:1px;background:#262626;"></div>
<div style="left:8px;top:458px;width:997px;height:1px;background:#262626;"></div>
<div style="left:8px;top:73px;width:22px;height:44px;background:#92a6ff;"></div>
<div style="left:8px;top:87px;width:22px;height:1px;background:rgba(0,0,0,0.28);"></div>
<div style="left:8px;top:73px;width:1px;height:44px;background:rgba(0,0,0,0.3);"></div>
<div style="left:19px;top:88px;width:1px;height:29px;background:rgba(0,0,0,0.13);"></div>
<svg style="position:absolute;left:8px;top:73px" width="22" height="44" fill="#2a2e4c"><rect x="2.0" y="29" width="1.5" height="1.5"/><rect x="4.8" y="29" width="1.5" height="1.5"/><rect x="7.5" y="29" width="1.5" height="1.5"/><rect x="10.2" y="29" width="1.5" height="1.5"/><rect x="13.0" y="29" width="1.5" height="1.5"/><rect x="15.8" y="29" width="1.5" height="1.5"/><rect x="18.5" y="29" width="1.5" height="1.5"/><rect x="3" y="10" width="1.5" height="1.5"/><rect x="6" y="10" width="1.5" height="1.5"/><rect x="9" y="10" width="1.5" height="1.5"/></svg>
<div style="left:30px;top:73px;width:177px;height:44px;background:#92a6ff;"></div>
<div style="left:30px;top:87px;width:177px;height:1px;background:rgba(0,0,0,0.28);"></div>
<div style="left:30px;top:73px;width:1px;height:44px;background:rgba(0,0,0,0.3);"></div>
<div style="left:41px;top:88px;width:1px;height:29px;background:rgba(0,0,0,0.13);"></div>
<div style="left:52px;top:88px;width:1px;height:29px;background:rgba(0,0,0,0.13);"></div>
<div style="left:63px;top:88px;width:1px;height:29px;background:rgba(0,0,0,0.13);"></div>
<div style="left:74px;top:88px;width:1px;height:29px;background:rgba(0,0,0,0.13);"></div>
<div style="left:86px;top:88px;width:1px;height:29px;background:rgba(0,0,0,0.13);"></div>
<div style="left:97px;top:88px;width:1px;height:29px;background:rgba(0,0,0,0.13);"></div>
<div style="left:108px;top:88px;width:1px;height:29px;background:rgba(0,0,0,0.13);"></div>
<div style="left:119px;top:88px;width:1px;height:29px;background:rgba(0,0,0,0.13);"></div>
<div style="left:130px;top:88px;width:1px;height:29px;background:rgba(0,0,0,0.13);"></div>
<div style="left:141px;top:88px;width:1px;height:29px;background:rgba(0,0,0,0.13);"></div>
<div style="left:152px;top:88px;width:1px;height:29px;background:rgba(0,0,0,0.13);"></div>
<div style="left:163px;top:88px;width:1px;height:29px;background:rgba(0,0,0,0.13);"></div>
<div style="left:174px;top:88px;width:1px;height:29px;background:rgba(0,0,0,0.13);"></div>
<div style="left:185px;top:88px;width:1px;height:29px;background:rgba(0,0,0,0.13);"></div>
<div style="left:196px;top:88px;width:1px;height:29px;background:rgba(0,0,0,0.13);"></div>
<svg style="position:absolute;left:30px;top:73px" width="177" height="44" fill="#2a2e4c"><rect x="3.4" y="29" width="1.6" height="1.6"/><rect x="3.9" y="36" width="1.6" height="1.6"/><rect x="6.1" y="29" width="1.6" height="1.6"/><rect x="8.9" y="29" width="1.6" height="1.6"/><rect x="9.4" y="36" width="1.6" height="1.6"/><rect x="8.9" y="25.5" width="2.6" height="1.4"/><rect x="11.6" y="29" width="1.6" height="1.6"/><rect x="14.4" y="29" width="1.6" height="1.6"/><rect x="14.9" y="36" width="1.6" height="1.6"/><rect x="17.1" y="29" width="1.6" height="1.6"/><rect x="17.1" y="39.5" width="1.6" height="1.6"/><rect x="19.9" y="29" width="1.6" height="1.6"/><rect x="20.4" y="36" width="1.6" height="1.6"/><rect x="22.6" y="29" width="1.6" height="1.6"/><rect x="25.4" y="29" width="1.6" height="1.6"/><rect x="25.9" y="36" width="1.6" height="1.6"/><rect x="28.1" y="29" width="1.6" height="1.6"/><rect x="30.9" y="29" width="1.6" height="1.6"/><rect x="31.4" y="36" width="1.6" height="1.6"/><rect x="30.9" y="25.5" width="2.6" height="1.4"/><rect x="33.6" y="29" width="1.6" height="1.6"/><rect x="33.6" y="39.5" width="1.6" height="1.6"/><rect x="36.4" y="29" width="1.6" height="1.6"/><rect x="36.9" y="36" width="1.6" height="1.6"/><rect x="39.2" y="29" width="1.6" height="1.6"/><rect x="41.9" y="29" width="1.6" height="1.6"/><rect x="42.4" y="36" width="1.6" height="1.6"/><rect x="44.7" y="29" width="1.6" height="1.6"/><rect x="47.4" y="29" width="1.6" height="1.6"/><rect x="47.9" y="36" width="1.6" height="1.6"/><rect x="50.2" y="29" width="1.6" height="1.6"/><rect x="52.9" y="29" width="1.6" height="1.6"/><rect x="53.4" y="36" width="1.6" height="1.6"/><rect x="52.9" y="25.5" width="2.6" height="1.4"/><rect x="55.7" y="29" width="1.6" height="1.6"/><rect x="58.4" y="29" width="1.6" height="1.6"/><rect x="58.9" y="36" width="1.6" height="1.6"/><rect x="61.2" y="29" width="1.6" height="1.6"/><rect x="61.2" y="39.5" width="1.6" height="1.6"/><rect x="63.9" y="29" width="1.6" height="1.6"/><rect x="64.4" y="36" width="1.6" height="1.6"/><rect x="66.7" y="29" width="1.6" height="1.6"/><rect x="69.4" y="29" width="1.6" height="1.6"/><rect x="69.9" y="36" width="1.6" height="1.6"/><rect x="72.2" y="29" width="1.6" height="1.6"/><rect x="74.9" y="29" width="1.6" height="1.6"/><rect x="75.4" y="36" width="1.6" height="1.6"/><rect x="74.9" y="25.5" width="2.6" height="1.4"/><rect x="77.7" y="29" width="1.6" height="1.6"/><rect x="77.7" y="39.5" width="1.6" height="1.6"/><rect x="80.4" y="29" width="1.6" height="1.6"/><rect x="80.9" y="36" width="1.6" height="1.6"/><rect x="83.2" y="29" width="1.6" height="1.6"/><rect x="85.9" y="29" width="1.6" height="1.6"/><rect x="86.4" y="36" width="1.6" height="1.6"/><rect x="88.7" y="29" width="1.6" height="1.6"/><rect x="91.4" y="29" width="1.6" height="1.6"/><rect x="91.9" y="36" width="1.6" height="1.6"/><rect x="94.2" y="29" width="1.6" height="1.6"/><rect x="96.9" y="29" width="1.6" height="1.6"/><rect x="97.4" y="36" width="1.6" height="1.6"/><rect x="96.9" y="25.5" width="2.6" height="1.4"/><rect x="99.7" y="29" width="1.6" height="1.6"/><rect x="102.4" y="29" width="1.6" height="1.6"/><rect x="102.9" y="36" width="1.6" height="1.6"/><rect x="105.2" y="29" width="1.6" height="1.6"/><rect x="105.2" y="39.5" width="1.6" height="1.6"/><rect x="107.9" y="29" width="1.6" height="1.6"/><rect x="108.4" y="36" width="1.6" height="1.6"/><rect x="110.7" y="29" width="1.6" height="1.6"/><rect x="113.4" y="29" width="1.6" height="1.6"/><rect x="113.9" y="36" width="1.6" height="1.6"/><rect x="116.2" y="29" width="1.6" height="1.6"/><rect x="118.9" y="29" width="1.6" height="1.6"/><rect x="119.4" y="36" width="1.6" height="1.6"/><rect x="118.9" y="25.5" width="2.6" height="1.4"/><rect x="121.7" y="29" width="1.6" height="1.6"/><rect x="121.7" y="39.5" width="1.6" height="1.6"/><rect x="124.4" y="29" width="1.6" height="1.6"/><rect x="124.9" y="36" width="1.6" height="1.6"/><rect x="127.2" y="29" width="1.6" height="1.6"/></svg>
<div style="left:207px;top:73px;width:176px;height:44px;background:#92a6ff;"></div>
<div style="left:207px;top:87px;width:176px;height:1px;background:rgba(0,0,0,0.28);"></div>
<div style="left:207px;top:73px;width:1px;height:44px;background:rgba(0,0,0,0.3);"></div>
<div style="left:218px;top:88px;width:1px;height:29px;background:rgba(0,0,0,0.13);"></div>
<div style="left:229px;top:88px;width:1px;height:29px;background:rgba(0,0,0,0.13);"></div>
<div style="left:240px;top:88px;width:1px;height:29px;background:rgba(0,0,0,0.13);"></div>
<div style="left:251px;top:88px;width:1px;height:29px;background:rgba(0,0,0,0.13);"></div>
<div style="left:262px;top:88px;width:1px;height:29px;background:rgba(0,0,0,0.13);"></div>
<div style="left:273px;top:88px;width:1px;height:29px;background:rgba(0,0,0,0.13);"></div>
<div style="left:284px;top:88px;width:1px;height:29px;background:rgba(0,0,0,0.13);"></div>
<div style="left:295px;top:88px;width:1px;height:29px;background:rgba(0,0,0,0.13);"></div>
<div style="left:306px;top:88px;width:1px;height:29px;background:rgba(0,0,0,0.13);"></div>
<div style="left:317px;top:88px;width:1px;height:29px;background:rgba(0,0,0,0.13);"></div>
<div style="left:328px;top:88px;width:1px;height:29px;background:rgba(0,0,0,0.13);"></div>
<div style="left:339px;top:88px;width:1px;height:29px;background:rgba(0,0,0,0.13);"></div>
<div style="left:350px;top:88px;width:1px;height:29px;background:rgba(0,0,0,0.13);"></div>
<div style="left:361px;top:88px;width:1px;height:29px;background:rgba(0,0,0,0.13);"></div>
<div style="left:372px;top:88px;width:1px;height:29px;background:rgba(0,0,0,0.13);"></div>
<svg style="position:absolute;left:207px;top:73px" width="176" height="44" fill="#2a2e4c"><rect x="2.5" y="29" width="1.6" height="1.6"/><rect x="3.0" y="36" width="1.6" height="1.6"/><rect x="5.2" y="29" width="1.6" height="1.6"/><rect x="8.0" y="29" width="1.6" height="1.6"/><rect x="8.5" y="36" width="1.6" height="1.6"/><rect x="8.0" y="25.5" width="2.6" height="1.4"/><rect x="10.8" y="29" width="1.6" height="1.6"/><rect x="13.5" y="29" width="1.6" height="1.6"/><rect x="14.0" y="36" width="1.6" height="1.6"/><rect x="16.2" y="29" width="1.6" height="1.6"/><rect x="16.2" y="39.5" width="1.6" height="1.6"/><rect x="19.0" y="29" width="1.6" height="1.6"/><rect x="19.5" y="36" width="1.6" height="1.6"/><rect x="21.8" y="29" width="1.6" height="1.6"/><rect x="24.5" y="29" width="1.6" height="1.6"/><rect x="25.0" y="36" width="1.6" height="1.6"/><rect x="27.2" y="29" width="1.6" height="1.6"/><rect x="30.0" y="29" width="1.6" height="1.6"/><rect x="30.5" y="36" width="1.6" height="1.6"/><rect x="30.0" y="25.5" width="2.6" height="1.4"/><rect x="32.8" y="29" width="1.6" height="1.6"/><rect x="32.8" y="39.5" width="1.6" height="1.6"/><rect x="35.5" y="29" width="1.6" height="1.6"/><rect x="36.0" y="36" width="1.6" height="1.6"/><rect x="38.2" y="29" width="1.6" height="1.6"/><rect x="41.0" y="29" width="1.6" height="1.6"/><rect x="41.5" y="36" width="1.6" height="1.6"/><rect x="43.8" y="29" width="1.6" height="1.6"/><rect x="46.5" y="29" width="1.6" height="1.6"/><rect x="47.0" y="36" width="1.6" height="1.6"/><rect x="49.2" y="29" width="1.6" height="1.6"/><rect x="52.0" y="29" width="1.6" height="1.6"/><rect x="52.5" y="36" width="1.6" height="1.6"/><rect x="52.0" y="25.5" width="2.6" height="1.4"/><rect x="54.8" y="29" width="1.6" height="1.6"/><rect x="57.5" y="29" width="1.6" height="1.6"/><rect x="58.0" y="36" width="1.6" height="1.6"/><rect x="60.2" y="29" width="1.6" height="1.6"/><rect x="60.2" y="39.5" width="1.6" height="1.6"/><rect x="63.0" y="29" width="1.6" height="1.6"/><rect x="63.5" y="36" width="1.6" height="1.6"/><rect x="65.8" y="29" width="1.6" height="1.6"/><rect x="68.5" y="29" width="1.6" height="1.6"/><rect x="69.0" y="36" width="1.6" height="1.6"/><rect x="71.2" y="29" width="1.6" height="1.6"/><rect x="74.0" y="29" width="1.6" height="1.6"/><rect x="74.5" y="36" width="1.6" height="1.6"/><rect x="74.0" y="25.5" width="2.6" height="1.4"/><rect x="76.8" y="29" width="1.6" height="1.6"/><rect x="76.8" y="39.5" width="1.6" height="1.6"/><rect x="79.5" y="29" width="1.6" height="1.6"/><rect x="80.0" y="36" width="1.6" height="1.6"/><rect x="82.2" y="29" width="1.6" height="1.6"/><rect x="85.0" y="29" width="1.6" height="1.6"/><rect x="85.5" y="36" width="1.6" height="1.6"/><rect x="87.8" y="29" width="1.6" height="1.6"/><rect x="90.5" y="29" width="1.6" height="1.6"/><rect x="91.0" y="36" width="1.6" height="1.6"/><rect x="93.2" y="29" width="1.6" height="1.6"/><rect x="96.0" y="29" width="1.6" height="1.6"/><rect x="96.5" y="36" width="1.6" height="1.6"/><rect x="96.0" y="25.5" width="2.6" height="1.4"/><rect x="98.8" y="29" width="1.6" height="1.6"/><rect x="101.5" y="29" width="1.6" height="1.6"/><rect x="102.0" y="36" width="1.6" height="1.6"/><rect x="104.2" y="29" width="1.6" height="1.6"/><rect x="104.2" y="39.5" width="1.6" height="1.6"/><rect x="107.0" y="29" width="1.6" height="1.6"/><rect x="107.5" y="36" width="1.6" height="1.6"/><rect x="109.8" y="29" width="1.6" height="1.6"/><rect x="112.5" y="29" width="1.6" height="1.6"/><rect x="113.0" y="36" width="1.6" height="1.6"/><rect x="115.2" y="29" width="1.6" height="1.6"/><rect x="118.0" y="29" width="1.6" height="1.6"/><rect x="118.5" y="36" width="1.6" height="1.6"/><rect x="118.0" y="25.5" width="2.6" height="1.4"/><rect x="120.8" y="29" width="1.6" height="1.6"/><rect x="120.8" y="39.5" width="1.6" height="1.6"/><rect x="123.5" y="29" width="1.6" height="1.6"/><rect x="124.0" y="36" width="1.6" height="1.6"/><rect x="126.2" y="29" width="1.6" height="1.6"/><rect x="129.0" y="29" width="1.6" height="1.6"/><rect x="129.5" y="36" width="1.6" height="1.6"/><rect x="131.8" y="29" width="1.6" height="1.6"/><rect x="134.5" y="29" width="1.6" height="1.6"/><rect x="135.0" y="36" width="1.6" height="1.6"/><rect x="137.2" y="29" width="1.6" height="1.6"/><rect x="140.0" y="29" width="1.6" height="1.6"/><rect x="140.5" y="36" width="1.6" height="1.6"/><rect x="140.0" y="25.5" width="2.6" height="1.4"/><rect x="142.8" y="29" width="1.6" height="1.6"/><rect x="145.5" y="29" width="1.6" height="1.6"/><rect x="146.0" y="36" width="1.6" height="1.6"/><rect x="148.2" y="29" width="1.6" height="1.6"/><rect x="148.2" y="39.5" width="1.6" height="1.6"/></svg>
<div style="left:383px;top:73px;width:176px;height:44px;background:#92a6ff;"></div>
<div style="left:383px;top:87px;width:176px;height:1px;background:rgba(0,0,0,0.28);"></div>
<div style="left:383px;top:73px;width:1px;height:44px;background:rgba(0,0,0,0.3);"></div>
<div style="left:394px;top:88px;width:1px;height:29px;background:rgba(0,0,0,0.13);"></div>
<div style="left:405px;top:88px;width:1px;height:29px;background:rgba(0,0,0,0.13);"></div>
<div style="left:416px;top:88px;width:1px;height:29px;background:rgba(0,0,0,0.13);"></div>
<div style="left:427px;top:88px;width:1px;height:29px;background:rgba(0,0,0,0.13);"></div>
<div style="left:438px;top:88px;width:1px;height:29px;background:rgba(0,0,0,0.13);"></div>
<div style="left:449px;top:88px;width:1px;height:29px;background:rgba(0,0,0,0.13);"></div>
<div style="left:460px;top:88px;width:1px;height:29px;background:rgba(0,0,0,0.13);"></div>
<div style="left:471px;top:88px;width:1px;height:29px;background:rgba(0,0,0,0.13);"></div>
<div style="left:482px;top:88px;width:1px;height:29px;background:rgba(0,0,0,0.13);"></div>
<div style="left:493px;top:88px;width:1px;height:29px;background:rgba(0,0,0,0.13);"></div>
<div style="left:504px;top:88px;width:1px;height:29px;background:rgba(0,0,0,0.13);"></div>
<div style="left:515px;top:88px;width:1px;height:29px;background:rgba(0,0,0,0.13);"></div>
<div style="left:526px;top:88px;width:1px;height:29px;background:rgba(0,0,0,0.13);"></div>
<div style="left:537px;top:88px;width:1px;height:29px;background:rgba(0,0,0,0.13);"></div>
<div style="left:548px;top:88px;width:1px;height:29px;background:rgba(0,0,0,0.13);"></div>
<svg style="position:absolute;left:383px;top:73px" width="176" height="44" fill="#2a2e4c"><rect x="2.5" y="29" width="1.6" height="1.6"/><rect x="3.0" y="36" width="1.6" height="1.6"/><rect x="5.2" y="29" width="1.6" height="1.6"/><rect x="8.0" y="29" width="1.6" height="1.6"/><rect x="8.5" y="36" width="1.6" height="1.6"/><rect x="8.0" y="25.5" width="2.6" height="1.4"/><rect x="10.8" y="29" width="1.6" height="1.6"/><rect x="13.5" y="29" width="1.6" height="1.6"/><rect x="14.0" y="36" width="1.6" height="1.6"/><rect x="16.2" y="29" width="1.6" height="1.6"/><rect x="16.2" y="39.5" width="1.6" height="1.6"/><rect x="19.0" y="29" width="1.6" height="1.6"/><rect x="19.5" y="36" width="1.6" height="1.6"/><rect x="21.8" y="29" width="1.6" height="1.6"/><rect x="24.5" y="29" width="1.6" height="1.6"/><rect x="25.0" y="36" width="1.6" height="1.6"/><rect x="27.2" y="29" width="1.6" height="1.6"/><rect x="30.0" y="29" width="1.6" height="1.6"/><rect x="30.5" y="36" width="1.6" height="1.6"/><rect x="30.0" y="25.5" width="2.6" height="1.4"/><rect x="32.8" y="29" width="1.6" height="1.6"/><rect x="32.8" y="39.5" width="1.6" height="1.6"/><rect x="35.5" y="29" width="1.6" height="1.6"/><rect x="36.0" y="36" width="1.6" height="1.6"/><rect x="38.2" y="29" width="1.6" height="1.6"/><rect x="41.0" y="29" width="1.6" height="1.6"/><rect x="41.5" y="36" width="1.6" height="1.6"/><rect x="43.8" y="29" width="1.6" height="1.6"/><rect x="46.5" y="29" width="1.6" height="1.6"/><rect x="47.0" y="36" width="1.6" height="1.6"/><rect x="49.2" y="29" width="1.6" height="1.6"/><rect x="52.0" y="29" width="1.6" height="1.6"/><rect x="52.5" y="36" width="1.6" height="1.6"/><rect x="52.0" y="25.5" width="2.6" height="1.4"/><rect x="54.8" y="29" width="1.6" height="1.6"/><rect x="57.5" y="29" width="1.6" height="1.6"/><rect x="58.0" y="36" width="1.6" height="1.6"/><rect x="60.2" y="29" width="1.6" height="1.6"/><rect x="60.2" y="39.5" width="1.6" height="1.6"/><rect x="63.0" y="29" width="1.6" height="1.6"/><rect x="63.5" y="36" width="1.6" height="1.6"/><rect x="65.8" y="29" width="1.6" height="1.6"/><rect x="68.5" y="29" width="1.6" height="1.6"/><rect x="69.0" y="36" width="1.6" height="1.6"/><rect x="71.2" y="29" width="1.6" height="1.6"/><rect x="74.0" y="29" width="1.6" height="1.6"/><rect x="74.5" y="36" width="1.6" height="1.6"/><rect x="74.0" y="25.5" width="2.6" height="1.4"/><rect x="76.8" y="29" width="1.6" height="1.6"/><rect x="76.8" y="39.5" width="1.6" height="1.6"/><rect x="79.5" y="29" width="1.6" height="1.6"/><rect x="80.0" y="36" width="1.6" height="1.6"/><rect x="82.2" y="29" width="1.6" height="1.6"/><rect x="85.0" y="29" width="1.6" height="1.6"/><rect x="85.5" y="36" width="1.6" height="1.6"/><rect x="87.8" y="29" width="1.6" height="1.6"/><rect x="90.5" y="29" width="1.6" height="1.6"/><rect x="91.0" y="36" width="1.6" height="1.6"/><rect x="93.2" y="29" width="1.6" height="1.6"/><rect x="96.0" y="29" width="1.6" height="1.6"/><rect x="96.5" y="36" width="1.6" height="1.6"/><rect x="96.0" y="25.5" width="2.6" height="1.4"/><rect x="98.8" y="29" width="1.6" height="1.6"/><rect x="101.5" y="29" width="1.6" height="1.6"/><rect x="102.0" y="36" width="1.6" height="1.6"/><rect x="104.2" y="29" width="1.6" height="1.6"/><rect x="104.2" y="39.5" width="1.6" height="1.6"/><rect x="107.0" y="29" width="1.6" height="1.6"/><rect x="107.5" y="36" width="1.6" height="1.6"/><rect x="109.8" y="29" width="1.6" height="1.6"/><rect x="112.5" y="29" width="1.6" height="1.6"/><rect x="113.0" y="36" width="1.6" height="1.6"/><rect x="115.2" y="29" width="1.6" height="1.6"/><rect x="118.0" y="29" width="1.6" height="1.6"/><rect x="118.5" y="36" width="1.6" height="1.6"/><rect x="118.0" y="25.5" width="2.6" height="1.4"/><rect x="120.8" y="29" width="1.6" height="1.6"/><rect x="120.8" y="39.5" width="1.6" height="1.6"/><rect x="123.5" y="29" width="1.6" height="1.6"/><rect x="124.0" y="36" width="1.6" height="1.6"/><rect x="126.2" y="29" width="1.6" height="1.6"/><rect x="129.0" y="29" width="1.6" height="1.6"/><rect x="129.5" y="36" width="1.6" height="1.6"/><rect x="131.8" y="29" width="1.6" height="1.6"/><rect x="134.5" y="29" width="1.6" height="1.6"/><rect x="135.0" y="36" width="1.6" height="1.6"/><rect x="137.2" y="29" width="1.6" height="1.6"/><rect x="140.0" y="29" width="1.6" height="1.6"/><rect x="140.5" y="36" width="1.6" height="1.6"/><rect x="140.0" y="25.5" width="2.6" height="1.4"/><rect x="142.8" y="29" width="1.6" height="1.6"/><rect x="145.5" y="29" width="1.6" height="1.6"/><rect x="146.0" y="36" width="1.6" height="1.6"/><rect x="148.2" y="29" width="1.6" height="1.6"/><rect x="148.2" y="39.5" width="1.6" height="1.6"/><rect x="151.0" y="29" width="1.6" height="1.6"/><rect x="151.5" y="36" width="1.6" height="1.6"/><rect x="153.8" y="29" width="1.6" height="1.6"/><rect x="156.5" y="29" width="1.6" height="1.6"/><rect x="157.0" y="36" width="1.6" height="1.6"/><rect x="159.2" y="29" width="1.6" height="1.6"/><rect x="162.0" y="29" width="1.6" height="1.6"/><rect x="162.5" y="36" width="1.6" height="1.6"/><rect x="162.0" y="25.5" width="2.6" height="1.4"/><rect x="164.8" y="29" width="1.6" height="1.6"/><rect x="164.8" y="39.5" width="1.6" height="1.6"/><rect x="167.5" y="29" width="1.6" height="1.6"/><rect x="168.0" y="36" width="1.6" height="1.6"/><rect x="170.2" y="29" width="1.6" height="1.6"/></svg>
<div style="left:559px;top:73px;width:176px;height:44px;background:#92a6ff;"></div>
<div style="left:559px;top:87px;width:176px;height:1px;background:rgba(0,0,0,0.28);"></div>
<div style="left:559px;top:73px;width:1px;height:44px;background:rgba(0,0,0,0.3);"></div>
<div style="left:570px;top:88px;width:1px;height:29px;background:rgba(0,0,0,0.13);"></div>
<div style="left:581px;top:88px;width:1px;height:29px;background:rgba(0,0,0,0.13);"></div>
<div style="left:592px;top:88px;width:1px;height:29px;background:rgba(0,0,0,0.13);"></div>
<div style="left:603px;top:88px;width:1px;height:29px;background:rgba(0,0,0,0.13);"></div>
<div style="left:614px;top:88px;width:1px;height:29px;background:rgba(0,0,0,0.13);"></div>
<div style="left:625px;top:88px;width:1px;height:29px;background:rgba(0,0,0,0.13);"></div>
<div style="left:636px;top:88px;width:1px;height:29px;background:rgba(0,0,0,0.13);"></div>
<div style="left:647px;top:88px;width:1px;height:29px;background:rgba(0,0,0,0.13);"></div>
<div style="left:658px;top:88px;width:1px;height:29px;background:rgba(0,0,0,0.13);"></div>
<div style="left:669px;top:88px;width:1px;height:29px;background:rgba(0,0,0,0.13);"></div>
<div style="left:680px;top:88px;width:1px;height:29px;background:rgba(0,0,0,0.13);"></div>
<div style="left:691px;top:88px;width:1px;height:29px;background:rgba(0,0,0,0.13);"></div>
<div style="left:702px;top:88px;width:1px;height:29px;background:rgba(0,0,0,0.13);"></div>
<div style="left:713px;top:88px;width:1px;height:29px;background:rgba(0,0,0,0.13);"></div>
<div style="left:724px;top:88px;width:1px;height:29px;background:rgba(0,0,0,0.13);"></div>
<svg style="position:absolute;left:559px;top:73px" width="176" height="44" fill="#2a2e4c"><rect x="2.5" y="29" width="1.6" height="1.6"/><rect x="3.0" y="36" width="1.6" height="1.6"/><rect x="5.2" y="29" width="1.6" height="1.6"/><rect x="8.0" y="29" width="1.6" height="1.6"/><rect x="8.5" y="36" width="1.6" height="1.6"/><rect x="8.0" y="25.5" width="2.6" height="1.4"/><rect x="10.8" y="29" width="1.6" height="1.6"/><rect x="13.5" y="29" width="1.6" height="1.6"/><rect x="14.0" y="36" width="1.6" height="1.6"/><rect x="16.2" y="29" width="1.6" height="1.6"/><rect x="16.2" y="39.5" width="1.6" height="1.6"/><rect x="19.0" y="29" width="1.6" height="1.6"/><rect x="19.5" y="36" width="1.6" height="1.6"/><rect x="21.8" y="29" width="1.6" height="1.6"/><rect x="24.5" y="29" width="1.6" height="1.6"/><rect x="25.0" y="36" width="1.6" height="1.6"/><rect x="27.2" y="29" width="1.6" height="1.6"/><rect x="30.0" y="29" width="1.6" height="1.6"/><rect x="30.5" y="36" width="1.6" height="1.6"/><rect x="30.0" y="25.5" width="2.6" height="1.4"/><rect x="32.8" y="29" width="1.6" height="1.6"/><rect x="32.8" y="39.5" width="1.6" height="1.6"/><rect x="35.5" y="29" width="1.6" height="1.6"/><rect x="36.0" y="36" width="1.6" height="1.6"/><rect x="38.2" y="29" width="1.6" height="1.6"/><rect x="41.0" y="29" width="1.6" height="1.6"/><rect x="41.5" y="36" width="1.6" height="1.6"/><rect x="43.8" y="29" width="1.6" height="1.6"/><rect x="46.5" y="29" width="1.6" height="1.6"/><rect x="47.0" y="36" width="1.6" height="1.6"/><rect x="49.2" y="29" width="1.6" height="1.6"/><rect x="52.0" y="29" width="1.6" height="1.6"/><rect x="52.5" y="36" width="1.6" height="1.6"/><rect x="52.0" y="25.5" width="2.6" height="1.4"/><rect x="54.8" y="29" width="1.6" height="1.6"/><rect x="57.5" y="29" width="1.6" height="1.6"/><rect x="58.0" y="36" width="1.6" height="1.6"/><rect x="60.2" y="29" width="1.6" height="1.6"/><rect x="60.2" y="39.5" width="1.6" height="1.6"/><rect x="63.0" y="29" width="1.6" height="1.6"/><rect x="63.5" y="36" width="1.6" height="1.6"/><rect x="65.8" y="29" width="1.6" height="1.6"/><rect x="68.5" y="29" width="1.6" height="1.6"/><rect x="69.0" y="36" width="1.6" height="1.6"/><rect x="71.2" y="29" width="1.6" height="1.6"/><rect x="74.0" y="29" width="1.6" height="1.6"/><rect x="74.5" y="36" width="1.6" height="1.6"/><rect x="74.0" y="25.5" width="2.6" height="1.4"/><rect x="76.8" y="29" width="1.6" height="1.6"/><rect x="76.8" y="39.5" width="1.6" height="1.6"/><rect x="79.5" y="29" width="1.6" height="1.6"/><rect x="80.0" y="36" width="1.6" height="1.6"/><rect x="82.2" y="29" width="1.6" height="1.6"/><rect x="85.0" y="29" width="1.6" height="1.6"/><rect x="85.5" y="36" width="1.6" height="1.6"/><rect x="87.8" y="29" width="1.6" height="1.6"/><rect x="90.5" y="29" width="1.6" height="1.6"/><rect x="91.0" y="36" width="1.6" height="1.6"/><rect x="93.2" y="29" width="1.6" height="1.6"/><rect x="96.0" y="29" width="1.6" height="1.6"/><rect x="96.5" y="36" width="1.6" height="1.6"/><rect x="96.0" y="25.5" width="2.6" height="1.4"/><rect x="98.8" y="29" width="1.6" height="1.6"/><rect x="101.5" y="29" width="1.6" height="1.6"/><rect x="102.0" y="36" width="1.6" height="1.6"/><rect x="104.2" y="29" width="1.6" height="1.6"/><rect x="104.2" y="39.5" width="1.6" height="1.6"/><rect x="107.0" y="29" width="1.6" height="1.6"/><rect x="107.5" y="36" width="1.6" height="1.6"/><rect x="109.8" y="29" width="1.6" height="1.6"/><rect x="112.5" y="29" width="1.6" height="1.6"/><rect x="113.0" y="36" width="1.6" height="1.6"/><rect x="115.2" y="29" width="1.6" height="1.6"/><rect x="118.0" y="29" width="1.6" height="1.6"/><rect x="118.5" y="36" width="1.6" height="1.6"/><rect x="118.0" y="25.5" width="2.6" height="1.4"/><rect x="120.8" y="29" width="1.6" height="1.6"/><rect x="120.8" y="39.5" width="1.6" height="1.6"/><rect x="123.5" y="29" width="1.6" height="1.6"/><rect x="124.0" y="36" width="1.6" height="1.6"/><rect x="126.2" y="29" width="1.6" height="1.6"/><rect x="129.0" y="29" width="1.6" height="1.6"/><rect x="129.5" y="36" width="1.6" height="1.6"/><rect x="131.8" y="29" width="1.6" height="1.6"/><rect x="134.5" y="29" width="1.6" height="1.6"/><rect x="135.0" y="36" width="1.6" height="1.6"/><rect x="137.2" y="29" width="1.6" height="1.6"/><rect x="140.0" y="29" width="1.6" height="1.6"/><rect x="140.5" y="36" width="1.6" height="1.6"/><rect x="140.0" y="25.5" width="2.6" height="1.4"/><rect x="142.8" y="29" width="1.6" height="1.6"/><rect x="145.5" y="29" width="1.6" height="1.6"/><rect x="146.0" y="36" width="1.6" height="1.6"/><rect x="148.2" y="29" width="1.6" height="1.6"/><rect x="148.2" y="39.5" width="1.6" height="1.6"/><rect x="151.0" y="29" width="1.6" height="1.6"/><rect x="151.5" y="36" width="1.6" height="1.6"/><rect x="153.8" y="29" width="1.6" height="1.6"/><rect x="156.5" y="29" width="1.6" height="1.6"/><rect x="157.0" y="36" width="1.6" height="1.6"/><rect x="159.2" y="29" width="1.6" height="1.6"/><rect x="162.0" y="29" width="1.6" height="1.6"/><rect x="162.5" y="36" width="1.6" height="1.6"/><rect x="162.0" y="25.5" width="2.6" height="1.4"/><rect x="164.8" y="29" width="1.6" height="1.6"/><rect x="164.8" y="39.5" width="1.6" height="1.6"/><rect x="167.5" y="29" width="1.6" height="1.6"/><rect x="168.0" y="36" width="1.6" height="1.6"/><rect x="170.2" y="29" width="1.6" height="1.6"/></svg>
<div style="left:911px;top:73px;width:93px;height:44px;background:#92a6ff;"></div>
<div style="left:911px;top:87px;width:93px;height:1px;background:rgba(0,0,0,0.28);"></div>
<div style="left:911px;top:73px;width:1px;height:44px;background:rgba(0,0,0,0.3);"></div>
<div style="left:922px;top:88px;width:1px;height:29px;background:rgba(0,0,0,0.13);"></div>
<div style="left:933px;top:88px;width:1px;height:29px;background:rgba(0,0,0,0.13);"></div>
<div style="left:944px;top:88px;width:1px;height:29px;background:rgba(0,0,0,0.13);"></div>
<div style="left:955px;top:88px;width:1px;height:29px;background:rgba(0,0,0,0.13);"></div>
<div style="left:966px;top:88px;width:1px;height:29px;background:rgba(0,0,0,0.13);"></div>
<div style="left:977px;top:88px;width:1px;height:29px;background:rgba(0,0,0,0.13);"></div>
<div style="left:988px;top:88px;width:1px;height:29px;background:rgba(0,0,0,0.13);"></div>
<div style="left:999px;top:88px;width:1px;height:29px;background:rgba(0,0,0,0.13);"></div>
<svg style="position:absolute;left:911px;top:73px" width="93" height="44" fill="#2a2e4c"><rect x="22.0" y="29" width="1.6" height="1.6"/><rect x="22.5" y="36" width="1.6" height="1.6"/><rect x="24.8" y="29" width="1.6" height="1.6"/><rect x="27.5" y="29" width="1.6" height="1.6"/><rect x="28.0" y="36" width="1.6" height="1.6"/><rect x="27.5" y="25.5" width="2.6" height="1.4"/><rect x="30.2" y="29" width="1.6" height="1.6"/><rect x="33.0" y="29" width="1.6" height="1.6"/><rect x="33.5" y="36" width="1.6" height="1.6"/><rect x="35.8" y="29" width="1.6" height="1.6"/><rect x="35.8" y="39.5" width="1.6" height="1.6"/><rect x="38.5" y="29" width="1.6" height="1.6"/><rect x="39.0" y="36" width="1.6" height="1.6"/><rect x="41.2" y="29" width="1.6" height="1.6"/><rect x="44.0" y="29" width="1.6" height="1.6"/><rect x="44.5" y="36" width="1.6" height="1.6"/><rect x="46.8" y="29" width="1.6" height="1.6"/><rect x="49.5" y="29" width="1.6" height="1.6"/><rect x="50.0" y="36" width="1.6" height="1.6"/><rect x="49.5" y="25.5" width="2.6" height="1.4"/><rect x="52.2" y="29" width="1.6" height="1.6"/><rect x="52.2" y="39.5" width="1.6" height="1.6"/><rect x="55.0" y="29" width="1.6" height="1.6"/><rect x="55.5" y="36" width="1.6" height="1.6"/><rect x="57.8" y="29" width="1.6" height="1.6"/><rect x="60.5" y="29" width="1.6" height="1.6"/><rect x="61.0" y="36" width="1.6" height="1.6"/><rect x="63.2" y="29" width="1.6" height="1.6"/><rect x="66.0" y="29" width="1.6" height="1.6"/><rect x="66.5" y="36" width="1.6" height="1.6"/><rect x="68.8" y="29" width="1.6" height="1.6"/><rect x="71.5" y="29" width="1.6" height="1.6"/><rect x="72.0" y="36" width="1.6" height="1.6"/><rect x="71.5" y="25.5" width="2.6" height="1.4"/><rect x="74.2" y="29" width="1.6" height="1.6"/><rect x="77.0" y="29" width="1.6" height="1.6"/><rect x="77.5" y="36" width="1.6" height="1.6"/><rect x="79.8" y="29" width="1.6" height="1.6"/><rect x="79.8" y="39.5" width="1.6" height="1.6"/><rect x="82.5" y="29" width="1.6" height="1.6"/><rect x="83.0" y="36" width="1.6" height="1.6"/><rect x="85.2" y="29" width="1.6" height="1.6"/><rect x="88.0" y="29" width="1.6" height="1.6"/><rect x="88.5" y="36" width="1.6" height="1.6"/></svg>
<div style="left:936px;top:96px;width:10px;height:1.6px;background:#2a2e4c;"></div>
<div style="left:977px;top:96px;width:27px;height:1.6px;background:#2a2e4c;"></div>
<div style="left:955px;top:92px;width:1.6px;height:1.6px;background:#2a2e4c;"></div>
<div style="left:919.5px;top:98.5px;width:2px;height:1.4px;background:#2a2e4c;"></div>
<div style="left:930px;top:105.5px;width:1px;height:2px;background:#2a2e4c;"></div>
<div style="left:30px;top:118px;width:88px;height:44px;background:#92a6ff;"></div>
<div style="left:30px;top:132px;width:88px;height:1px;background:rgba(0,0,0,0.28);"></div>
<div style="left:30px;top:118px;width:1px;height:44px;background:rgba(0,0,0,0.3);"></div>
<div style="left:41px;top:133px;width:1px;height:29px;background:rgba(0,0,0,0.13);"></div>
<div style="left:52px;top:133px;width:1px;height:29px;background:rgba(0,0,0,0.13);"></div>
<div style="left:63px;top:133px;width:1px;height:29px;background:rgba(0,0,0,0.13);"></div>
<div style="left:74px;top:133px;width:1px;height:29px;background:rgba(0,0,0,0.13);"></div>
<div style="left:86px;top:133px;width:1px;height:29px;background:rgba(0,0,0,0.13);"></div>
<div style="left:97px;top:133px;width:1px;height:29px;background:rgba(0,0,0,0.13);"></div>
<div style="left:108px;top:133px;width:1px;height:29px;background:rgba(0,0,0,0.13);"></div>
<svg style="position:absolute;left:31px;top:118px" width="86" height="44" fill="#1c1c2a"><path d="M0.0 20.4 L0.5 18.9 L1.0 18.0 L1.5 17.9 L2.0 18.6 L2.5 18.6 L3.0 18.0 L3.5 18.1 L4.0 18.8 L4.5 18.7 L5.0 17.8 L5.5 17.6 L6.0 18.7 L6.5 20.4 L7.0 20.4 L7.5 20.4 L8.0 18.8 L8.5 18.1 L9.0 17.7 L9.5 18.8 L10.0 18.8 L10.5 17.9 L11.0 18.0 L11.5 18.8 L12.0 18.9 L12.5 18.1 L13.0 17.7 L13.5 18.7 L14.0 18.6 L14.5 18.1 L15.0 17.8 L15.5 18.5 L16.0 18.7 L16.5 18.0 L17.0 17.6 L17.5 20.4 L18.0 20.4 L18.5 20.4 L19.0 20.4 L19.5 20.4 L20.0 20.4 L20.5 20.4 L21.0 20.4 L21.5 20.4 L22.0 20.4 L22.5 19.0 L23.0 17.6 L23.5 17.8 L24.0 18.8 L24.5 18.5 L25.0 17.9 L25.5 18.1 L26.0 18.6 L26.5 18.6 L27.0 18.1 L27.5 17.5 L28.0 18.9 L28.5 20.4 L29.0 20.4 L29.5 20.4 L30.0 18.5 L30.5 17.6 L31.0 17.6 L31.5 18.7 L32.0 18.8 L32.5 17.5 L33.0 17.7 L33.5 18.9 L34.0 18.6 L34.5 17.7 L35.0 17.8 L35.5 18.4 L36.0 18.8 L36.5 17.8 L37.0 17.6 L37.5 18.4 L38.0 18.7 L38.5 17.6 L39.0 17.7 L39.5 20.4 L40.0 20.4 L40.5 20.4 L41.0 20.4 L41.5 20.4 L42.0 20.4 L42.5 20.4 L43.0 20.4 L43.5 20.4 L44.0 20.4 L44.5 18.6 L45.0 17.6 L45.5 17.5 L46.0 18.6 L46.5 18.6 L47.0 17.8 L47.5 17.8 L48.0 18.6 L48.5 18.7 L49.0 17.7 L49.5 18.0 L50.0 18.8 L50.5 20.4 L51.0 20.4 L51.5 20.4 L52.0 19.1 L52.5 18.1 L53.0 17.8 L53.5 18.6 L54.0 18.6 L54.5 18.1 L55.0 17.7 L55.5 18.7 L56.0 18.8 L56.5 17.6 L57.0 17.9 L57.5 18.4 L58.0 18.8 L58.5 18.0 L59.0 18.0 L59.5 18.5 L60.0 19.0 L60.5 17.9 L61.0 17.9 L61.5 20.4 L62.0 20.4 L62.5 20.4 L63.0 20.4 L63.5 20.4 L64.0 20.4 L64.5 20.4 L65.0 20.4 L65.5 20.4 L66.0 20.4 L66.5 18.9 L67.0 17.8 L67.5 17.9 L68.0 18.3 L68.5 18.8 L69.0 18.0 L69.5 18.0 L70.0 18.8 L70.5 18.6 L71.0 17.9 L71.5 17.6 L72.0 18.3 L72.5 20.4 L73.0 20.4 L73.5 20.4 L74.0 19.1 L74.5 17.9 L75.0 17.6 L75.5 18.6 L76.0 18.6 L76.5 17.7 L77.0 17.9 L77.5 18.4 L78.0 18.9 L78.5 18.0 L79.0 17.8 L79.5 18.5 L80.0 19.0 L80.5 18.1 L81.0 17.9 L81.5 18.7 L82.0 19.1 L82.5 18.1 L83.0 17.9 L83.5 20.4 L84.0 20.4 L84.5 20.4 L85.0 20.4 L85.5 20.4 L86.0 20.4 L86.0 22.2 L85.5 22.2 L85.0 22.2 L84.5 22.2 L84.0 22.2 L83.5 22.2 L83.0 24.7 L82.5 24.5 L82.0 23.5 L81.5 23.9 L81.0 24.7 L80.5 24.5 L80.0 23.6 L79.5 24.1 L79.0 24.8 L78.5 24.6 L78.0 23.7 L77.5 24.2 L77.0 24.7 L76.5 24.9 L76.0 24.0 L75.5 24.0 L75.0 26.3 L74.5 26.0 L74.0 24.8 L73.5 22.2 L73.0 22.2 L72.5 22.2 L72.0 24.3 L71.5 25.0 L71.0 24.7 L70.5 24.0 L70.0 23.8 L69.5 24.6 L69.0 24.6 L68.5 23.8 L68.0 24.3 L67.5 24.7 L67.0 24.8 L66.5 23.7 L66.0 22.2 L65.5 22.2 L65.0 22.2 L64.5 22.2 L64.0 22.2 L63.5 22.2 L63.0 22.2 L62.5 22.2 L62.0 22.2 L61.5 22.2 L61.0 24.7 L60.5 24.7 L60.0 23.6 L59.5 24.1 L59.0 24.6 L58.5 24.6 L58.0 23.8 L57.5 24.2 L57.0 24.7 L56.5 25.0 L56.0 23.8 L55.5 23.9 L55.0 24.9 L54.5 24.5 L54.0 24.0 L53.5 24.0 L53.0 26.1 L52.5 25.8 L52.0 24.8 L51.5 22.2 L51.0 22.2 L50.5 22.2 L50.0 23.8 L49.5 24.6 L49.0 24.9 L48.5 23.9 L48.0 24.0 L47.5 24.8 L47.0 24.8 L46.5 24.0 L46.0 24.0 L45.5 25.1 L45.0 25.0 L44.5 24.0 L44.0 22.2 L43.5 22.2 L43.0 22.2 L42.5 22.2 L42.0 22.2 L41.5 22.2 L41.0 22.2 L40.5 22.2 L40.0 22.2 L39.5 22.2 L39.0 24.9 L38.5 25.0 L38.0 23.9 L37.5 24.2 L37.0 25.0 L36.5 24.8 L36.0 23.8 L35.5 24.2 L35.0 24.8 L34.5 24.9 L34.0 24.0 L33.5 23.7 L33.0 24.9 L32.5 25.1 L32.0 23.8 L31.5 23.9 L31.0 26.3 L30.5 26.3 L30.0 25.4 L29.5 22.2 L29.0 22.2 L28.5 22.2 L28.0 23.7 L27.5 25.1 L27.0 24.5 L26.5 24.0 L26.0 24.0 L25.5 24.5 L25.0 24.7 L24.5 24.1 L24.0 23.8 L23.5 24.8 L23.0 25.0 L22.5 23.6 L22.0 22.2 L21.5 22.2 L21.0 22.2 L20.5 22.2 L20.0 22.2 L19.5 22.2 L19.0 22.2 L18.5 22.2 L18.0 22.2 L17.5 22.2 L17.0 25.0 L16.5 24.6 L16.0 23.9 L15.5 24.1 L15.0 24.8 L14.5 24.5 L14.0 24.0 L13.5 23.9 L13.0 24.9 L12.5 24.5 L12.0 23.7 L11.5 23.8 L11.0 24.6 L10.5 24.7 L10.0 23.8 L9.5 23.8 L9.0 26.2 L8.5 25.8 L8.0 25.1 L7.5 22.2 L7.0 22.2 L6.5 22.2 L6.0 23.9 L5.5 25.0 L5.0 24.8 L4.5 23.9 L4.0 23.8 L3.5 24.5 L3.0 24.6 L2.5 24.0 L2.0 24.0 L1.5 24.7 L1.0 24.6 L0.5 23.7 L0.0 22.2Z"/><path d="M0.0 35.6 L0.5 34.0 L1.0 33.0 L1.5 33.0 L2.0 34.0 L2.5 34.0 L3.0 33.2 L3.5 33.1 L4.0 33.7 L4.5 33.6 L5.0 33.1 L5.5 32.9 L6.0 33.7 L6.5 35.6 L7.0 35.6 L7.5 35.6 L8.0 33.7 L8.5 33.1 L9.0 33.0 L9.5 34.2 L10.0 34.0 L10.5 32.8 L11.0 32.8 L11.5 34.1 L12.0 34.1 L12.5 33.0 L13.0 33.3 L13.5 34.2 L14.0 33.7 L14.5 32.9 L15.0 33.2 L15.5 34.0 L16.0 33.9 L16.5 32.7 L17.0 33.3 L17.5 35.6 L18.0 35.6 L18.5 35.6 L19.0 35.6 L19.5 35.6 L20.0 35.6 L20.5 35.6 L21.0 35.6 L21.5 35.6 L22.0 35.6 L22.5 33.8 L23.0 32.9 L23.5 33.2 L24.0 34.0 L24.5 33.9 L25.0 32.9 L25.5 33.2 L26.0 33.7 L26.5 33.9 L27.0 33.2 L27.5 33.0 L28.0 33.8 L28.5 35.6 L29.0 35.6 L29.5 35.6 L30.0 33.9 L30.5 33.0 L31.0 32.8 L31.5 34.0 L32.0 33.9 L32.5 33.2 L33.0 33.0 L33.5 33.7 L34.0 33.8 L34.5 33.3 L35.0 33.2 L35.5 34.0 L36.0 34.0 L36.5 33.2 L37.0 33.0 L37.5 34.0 L38.0 33.8 L38.5 33.1 L39.0 32.8 L39.5 35.6 L40.0 35.6 L40.5 35.6 L41.0 35.6 L41.5 35.6 L42.0 35.6 L42.5 35.6 L43.0 35.6 L43.5 35.6 L44.0 35.6 L44.5 34.1 L45.0 33.2 L45.5 32.8 L46.0 34.0 L46.5 34.2 L47.0 33.0 L47.5 33.2 L48.0 33.6 L48.5 34.0 L49.0 32.9 L49.5 33.2 L50.0 33.7 L50.5 35.6 L51.0 35.6 L51.5 35.6 L52.0 34.3 L52.5 32.9 L53.0 32.9 L53.5 33.6 L54.0 34.2 L54.5 33.1 L55.0 33.2 L55.5 34.1 L56.0 33.8 L56.5 32.9 L57.0 33.1 L57.5 33.6 L58.0 33.9 L58.5 33.0 L59.0 32.9 L59.5 33.8 L60.0 34.0 L60.5 32.9 L61.0 33.1 L61.5 35.6 L62.0 35.6 L62.5 35.6 L63.0 35.6 L63.5 35.6 L64.0 35.6 L64.5 35.6 L65.0 35.6 L65.5 35.6 L66.0 35.6 L66.5 33.8 L67.0 33.3 L67.5 33.1 L68.0 33.7 L68.5 34.0 L69.0 33.0 L69.5 32.8 L70.0 33.8 L70.5 34.1 L71.0 33.0 L71.5 32.9 L72.0 33.8 L72.5 35.6 L73.0 35.6 L73.5 35.6 L74.0 33.9 L74.5 33.2 L75.0 33.0 L75.5 33.6 L76.0 34.3 L76.5 32.9 L77.0 33.0 L77.5 33.9 L78.0 34.0 L78.5 33.1 L79.0 32.9 L79.5 33.5 L80.0 33.9 L80.5 33.3 L81.0 33.0 L81.5 33.9 L82.0 34.2 L82.5 32.8 L83.0 33.2 L83.5 35.6 L84.0 35.6 L84.5 35.6 L85.0 35.6 L85.5 35.6 L86.0 35.6 L86.0 37.4 L85.5 37.4 L85.0 37.4 L84.5 37.4 L84.0 37.4 L83.5 37.4 L83.0 39.8 L82.5 40.2 L82.0 38.8 L81.5 39.1 L81.0 40.0 L80.5 39.7 L80.0 39.1 L79.5 39.5 L79.0 40.1 L78.5 39.9 L78.0 39.0 L77.5 39.1 L77.0 40.0 L76.5 40.1 L76.0 38.7 L75.5 39.4 L75.0 41.3 L74.5 41.1 L74.0 40.4 L73.5 37.4 L73.0 37.4 L72.5 37.4 L72.0 39.2 L71.5 40.1 L71.0 40.0 L70.5 38.9 L70.0 39.2 L69.5 40.2 L69.0 40.0 L68.5 39.0 L68.0 39.3 L67.5 39.9 L67.0 39.7 L66.5 39.2 L66.0 37.4 L65.5 37.4 L65.0 37.4 L64.5 37.4 L64.0 37.4 L63.5 37.4 L63.0 37.4 L62.5 37.4 L62.0 37.4 L61.5 37.4 L61.0 39.9 L60.5 40.1 L60.0 39.0 L59.5 39.2 L59.0 40.1 L58.5 40.0 L58.0 39.1 L57.5 39.4 L57.0 39.9 L56.5 40.1 L56.0 39.2 L55.5 38.9 L55.0 39.8 L54.5 39.9 L54.0 38.8 L53.5 39.4 L53.0 41.4 L52.5 41.4 L52.0 40.0 L51.5 37.4 L51.0 37.4 L50.5 37.4 L50.0 39.3 L49.5 39.8 L49.0 40.1 L48.5 39.0 L48.0 39.4 L47.5 39.8 L47.0 40.0 L46.5 38.8 L46.0 39.0 L45.5 40.2 L45.0 39.8 L44.5 38.9 L44.0 37.4 L43.5 37.4 L43.0 37.4 L42.5 37.4 L42.0 37.4 L41.5 37.4 L41.0 37.4 L40.5 37.4 L40.0 37.4 L39.5 37.4 L39.0 40.2 L38.5 39.9 L38.0 39.2 L37.5 39.0 L37.0 40.0 L36.5 39.8 L36.0 39.0 L35.5 39.0 L35.0 39.8 L34.5 39.7 L34.0 39.2 L33.5 39.3 L33.0 40.0 L32.5 39.8 L32.0 39.1 L31.5 39.0 L31.0 41.5 L30.5 41.3 L30.0 40.4 L29.5 37.4 L29.0 37.4 L28.5 37.4 L28.0 39.2 L27.5 40.0 L27.0 39.8 L26.5 39.1 L26.0 39.3 L25.5 39.8 L25.0 40.1 L24.5 39.1 L24.0 39.0 L23.5 39.8 L23.0 40.1 L22.5 39.2 L22.0 37.4 L21.5 37.4 L21.0 37.4 L20.5 37.4 L20.0 37.4 L19.5 37.4 L19.0 37.4 L18.5 37.4 L18.0 37.4 L17.5 37.4 L17.0 39.7 L16.5 40.3 L16.0 39.1 L15.5 39.0 L15.0 39.8 L14.5 40.1 L14.0 39.3 L13.5 38.8 L13.0 39.7 L12.5 40.0 L12.0 38.9 L11.5 38.9 L11.0 40.2 L10.5 40.2 L10.0 39.0 L9.5 38.8 L9.0 41.3 L8.5 41.2 L8.0 40.6 L7.5 37.4 L7.0 37.4 L6.5 37.4 L6.0 39.3 L5.5 40.1 L5.0 39.9 L4.5 39.4 L4.0 39.3 L3.5 39.9 L3.0 39.8 L2.5 39.0 L2.0 39.0 L1.5 40.0 L1.0 40.0 L0.5 39.0 L0.0 37.4Z"/></svg>
<div style="left:119px;top:118px;width:88px;height:44px;background:#92a6ff;"></div>
<div style="left:119px;top:132px;width:88px;height:1px;background:rgba(0,0,0,0.28);"></div>
<div style="left:119px;top:118px;width:1px;height:44px;background:rgba(0,0,0,0.3);"></div>
<div style="left:130px;top:133px;width:1px;height:29px;background:rgba(0,0,0,0.13);"></div>
<div style="left:141px;top:133px;width:1px;height:29px;background:rgba(0,0,0,0.13);"></div>
<div style="left:152px;top:133px;width:1px;height:29px;background:rgba(0,0,0,0.13);"></div>
<div style="left:163px;top:133px;width:1px;height:29px;background:rgba(0,0,0,0.13);"></div>
<div style="left:174px;top:133px;width:1px;height:29px;background:rgba(0,0,0,0.13);"></div>
<div style="left:185px;top:133px;width:1px;height:29px;background:rgba(0,0,0,0.13);"></div>
<div style="left:196px;top:133px;width:1px;height:29px;background:rgba(0,0,0,0.13);"></div>
<svg style="position:absolute;left:120px;top:118px" width="86" height="44" fill="#1c1c2a"><path d="M0.0 17.8 L0.5 17.9 L1.0 18.8 L1.5 18.7 L2.0 18.0 L2.5 17.9 L3.0 18.6 L3.5 18.9 L4.0 17.8 L4.5 17.8 L5.0 18.2 L5.5 20.4 L6.0 20.4 L6.5 20.4 L7.0 18.9 L7.5 17.8 L8.0 18.0 L8.5 18.8 L9.0 19.1 L9.5 17.8 L10.0 17.6 L10.5 18.4 L11.0 19.0 L11.5 17.7 L12.0 18.0 L12.5 18.4 L13.0 18.6 L13.5 17.7 L14.0 17.9 L14.5 18.6 L15.0 19.1 L15.5 17.8 L16.0 17.5 L16.5 20.4 L17.0 20.4 L17.5 20.4 L18.0 20.4 L18.5 20.4 L19.0 20.4 L19.5 20.4 L20.0 20.4 L20.5 20.4 L21.0 20.4 L21.5 18.9 L22.0 18.2 L22.5 17.8 L23.0 18.2 L23.5 19.2 L24.0 18.2 L24.5 17.5 L25.0 18.4 L25.5 19.2 L26.0 17.8 L26.5 17.6 L27.0 18.4 L27.5 20.4 L28.0 20.4 L28.5 20.4 L29.0 18.7 L29.5 17.8 L30.0 17.5 L30.5 18.8 L31.0 19.0 L31.5 17.9 L32.0 17.9 L32.5 18.5 L33.0 18.8 L33.5 18.2 L34.0 18.0 L34.5 18.2 L35.0 18.7 L35.5 17.9 L36.0 18.0 L36.5 18.7 L37.0 19.1 L37.5 18.2 L38.0 17.7 L38.5 20.4 L39.0 20.4 L39.5 20.4 L40.0 20.4 L40.5 20.4 L41.0 20.4 L41.5 20.4 L42.0 20.4 L42.5 20.4 L43.0 20.4 L43.5 18.8 L44.0 17.7 L44.5 17.8 L45.0 18.5 L45.5 18.9 L46.0 17.8 L46.5 17.6 L47.0 18.2 L47.5 18.8 L48.0 17.7 L48.5 17.6 L49.0 18.6 L49.5 20.4 L50.0 20.4 L50.5 20.4 L51.0 18.7 L51.5 17.9 L52.0 17.8 L52.5 18.4 L53.0 19.1 L53.5 18.0 L54.0 17.9 L54.5 18.1 L55.0 18.8 L55.5 18.1 L56.0 17.8 L56.5 18.7 L57.0 18.8 L57.5 17.9 L58.0 17.9 L58.5 18.2 L59.0 18.8 L59.5 18.1 L60.0 17.8 L60.5 20.4 L61.0 20.4 L61.5 20.4 L62.0 20.4 L62.5 20.4 L63.0 20.4 L63.5 20.4 L64.0 20.4 L64.5 20.4 L65.0 20.4 L65.5 19.0 L66.0 18.1 L66.5 17.5 L67.0 18.1 L67.5 18.8 L68.0 17.9 L68.5 17.5 L69.0 18.5 L69.5 18.9 L70.0 18.1 L70.5 17.8 L71.0 18.6 L71.5 20.4 L72.0 20.4 L72.5 20.4 L73.0 19.0 L73.5 18.0 L74.0 17.6 L74.5 18.4 L75.0 19.1 L75.5 18.1 L76.0 17.5 L76.5 18.3 L77.0 19.2 L77.5 17.9 L78.0 17.4 L78.5 18.2 L79.0 19.2 L79.5 17.9 L80.0 17.6 L80.5 18.4 L81.0 19.0 L81.5 18.1 L82.0 17.5 L82.5 20.4 L83.0 20.4 L83.5 20.4 L84.0 20.4 L84.5 20.4 L85.0 20.4 L85.5 20.4 L86.0 20.4 L86.0 22.2 L85.5 22.2 L85.0 22.2 L84.5 22.2 L84.0 22.2 L83.5 22.2 L83.0 22.2 L82.5 22.2 L82.0 25.1 L81.5 24.5 L81.0 23.6 L80.5 24.2 L80.0 25.0 L79.5 24.7 L79.0 23.4 L78.5 24.4 L78.0 25.2 L77.5 24.7 L77.0 23.4 L76.5 24.3 L76.0 25.1 L75.5 24.5 L75.0 23.5 L74.5 24.2 L74.0 26.3 L73.5 25.9 L73.0 24.9 L72.5 22.2 L72.0 22.2 L71.5 22.2 L71.0 24.0 L70.5 24.8 L70.0 24.5 L69.5 23.7 L69.0 24.1 L68.5 25.1 L68.0 24.7 L67.5 23.8 L67.0 24.5 L66.5 25.1 L66.0 24.5 L65.5 23.6 L65.0 22.2 L64.5 22.2 L64.0 22.2 L63.5 22.2 L63.0 22.2 L62.5 22.2 L62.0 22.2 L61.5 22.2 L61.0 22.2 L60.5 22.2 L60.0 24.8 L59.5 24.5 L59.0 23.8 L58.5 24.4 L58.0 24.7 L57.5 24.7 L57.0 23.8 L56.5 23.9 L56.0 24.8 L55.5 24.5 L55.0 23.8 L54.5 24.5 L54.0 24.7 L53.5 24.6 L53.0 23.5 L52.5 24.2 L52.0 26.1 L51.5 26.0 L51.0 25.2 L50.5 22.2 L50.0 22.2 L49.5 22.2 L49.0 24.0 L48.5 25.0 L48.0 24.9 L47.5 23.8 L47.0 24.4 L46.5 25.0 L46.0 24.8 L45.5 23.7 L45.0 24.1 L44.5 24.8 L44.0 24.9 L43.5 23.8 L43.0 22.2 L42.5 22.2 L42.0 22.2 L41.5 22.2 L41.0 22.2 L40.5 22.2 L40.0 22.2 L39.5 22.2 L39.0 22.2 L38.5 22.2 L38.0 24.9 L37.5 24.4 L37.0 23.5 L36.5 23.9 L36.0 24.6 L35.5 24.7 L35.0 23.9 L34.5 24.4 L34.0 24.6 L33.5 24.4 L33.0 23.8 L32.5 24.1 L32.0 24.7 L31.5 24.7 L31.0 23.6 L30.5 23.8 L30.0 26.4 L29.5 26.1 L29.0 25.2 L28.5 22.2 L28.0 22.2 L27.5 22.2 L27.0 24.2 L26.5 25.0 L26.0 24.8 L25.5 23.4 L25.0 24.2 L24.5 25.1 L24.0 24.4 L23.5 23.4 L23.0 24.4 L22.5 24.8 L22.0 24.4 L21.5 23.7 L21.0 22.2 L20.5 22.2 L20.0 22.2 L19.5 22.2 L19.0 22.2 L18.5 22.2 L18.0 22.2 L17.5 22.2 L17.0 22.2 L16.5 22.2 L16.0 25.1 L15.5 24.8 L15.0 23.5 L14.5 24.0 L14.0 24.7 L13.5 24.9 L13.0 24.0 L12.5 24.2 L12.0 24.6 L11.5 24.9 L11.0 23.6 L10.5 24.2 L10.0 25.0 L9.5 24.8 L9.0 23.5 L8.5 23.8 L8.0 25.9 L7.5 26.1 L7.0 25.0 L6.5 22.2 L6.0 22.2 L5.5 22.2 L5.0 24.4 L4.5 24.8 L4.0 24.8 L3.5 23.7 L3.0 24.0 L2.5 24.7 L2.0 24.6 L1.5 23.9 L1.0 23.8 L0.5 24.7 L0.0 24.8Z"/><path d="M0.0 33.1 L0.5 33.2 L1.0 33.4 L1.5 34.3 L2.0 33.3 L2.5 32.9 L3.0 33.7 L3.5 34.3 L4.0 33.1 L4.5 33.1 L5.0 33.6 L5.5 35.6 L6.0 35.6 L6.5 35.6 L7.0 34.1 L7.5 33.0 L8.0 33.1 L8.5 33.9 L9.0 34.3 L9.5 32.9 L10.0 33.2 L10.5 33.8 L11.0 34.3 L11.5 32.8 L12.0 33.1 L12.5 34.0 L13.0 33.9 L13.5 33.1 L14.0 33.2 L14.5 33.8 L15.0 34.0 L15.5 32.9 L16.0 32.7 L16.5 35.6 L17.0 35.6 L17.5 35.6 L18.0 35.6 L18.5 35.6 L19.0 35.6 L19.5 35.6 L20.0 35.6 L20.5 35.6 L21.0 35.6 L21.5 34.1 L22.0 33.1 L22.5 32.7 L23.0 33.8 L23.5 33.8 L24.0 33.0 L24.5 32.9 L25.0 33.9 L25.5 34.3 L26.0 32.8 L26.5 32.7 L27.0 33.6 L27.5 35.6 L28.0 35.6 L28.5 35.6 L29.0 33.9 L29.5 33.3 L30.0 32.6 L30.5 33.6 L31.0 33.9 L31.5 33.0 L32.0 32.8 L32.5 33.9 L33.0 34.0 L33.5 32.9 L34.0 32.8 L34.5 33.7 L35.0 33.9 L35.5 33.0 L36.0 33.0 L36.5 34.0 L37.0 34.2 L37.5 33.3 L38.0 32.8 L38.5 35.6 L39.0 35.6 L39.5 35.6 L40.0 35.6 L40.5 35.6 L41.0 35.6 L41.5 35.6 L42.0 35.6 L42.5 35.6 L43.0 35.6 L43.5 34.5 L44.0 32.9 L44.5 32.9 L45.0 33.5 L45.5 34.0 L46.0 33.3 L46.5 33.1 L47.0 33.8 L47.5 34.3 L48.0 32.9 L48.5 32.9 L49.0 33.6 L49.5 35.6 L50.0 35.6 L50.5 35.6 L51.0 34.0 L51.5 33.2 L52.0 33.2 L52.5 33.4 L53.0 33.9 L53.5 32.9 L54.0 33.2 L54.5 33.7 L55.0 34.2 L55.5 33.0 L56.0 33.2 L56.5 33.7 L57.0 34.2 L57.5 33.2 L58.0 32.8 L58.5 33.3 L59.0 34.2 L59.5 33.0 L60.0 33.1 L60.5 35.6 L61.0 35.6 L61.5 35.6 L62.0 35.6 L62.5 35.6 L63.0 35.6 L63.5 35.6 L64.0 35.6 L64.5 35.6 L65.0 35.6 L65.5 34.0 L66.0 33.0 L66.5 32.7 L67.0 33.6 L67.5 34.0 L68.0 33.0 L68.5 33.0 L69.0 33.4 L69.5 34.0 L70.0 33.0 L70.5 32.8 L71.0 33.5 L71.5 35.6 L72.0 35.6 L72.5 35.6 L73.0 34.2 L73.5 33.1 L74.0 33.0 L74.5 33.8 L75.0 34.0 L75.5 33.3 L76.0 32.7 L76.5 33.6 L77.0 34.1 L77.5 33.0 L78.0 32.8 L78.5 33.6 L79.0 34.2 L79.5 33.1 L80.0 33.0 L80.5 33.6 L81.0 34.3 L81.5 32.9 L82.0 32.8 L82.5 35.6 L83.0 35.6 L83.5 35.6 L84.0 35.6 L84.5 35.6 L85.0 35.6 L85.5 35.6 L86.0 35.6 L86.0 37.4 L85.5 37.4 L85.0 37.4 L84.5 37.4 L84.0 37.4 L83.5 37.4 L83.0 37.4 L82.5 37.4 L82.0 40.2 L81.5 40.1 L81.0 38.7 L80.5 39.4 L80.0 40.0 L79.5 39.9 L79.0 38.8 L78.5 39.4 L78.0 40.2 L77.5 40.0 L77.0 38.9 L76.5 39.4 L76.0 40.3 L75.5 39.7 L75.0 39.0 L74.5 39.2 L74.0 41.3 L73.5 41.2 L73.0 40.1 L72.5 37.4 L72.0 37.4 L71.5 37.4 L71.0 39.5 L70.5 40.2 L70.0 40.0 L69.5 39.0 L69.0 39.6 L68.5 40.0 L68.0 40.0 L67.5 39.0 L67.0 39.4 L66.5 40.3 L66.0 40.0 L65.5 39.0 L65.0 37.4 L64.5 37.4 L64.0 37.4 L63.5 37.4 L63.0 37.4 L62.5 37.4 L62.0 37.4 L61.5 37.4 L61.0 37.4 L60.5 37.4 L60.0 39.9 L59.5 40.0 L59.0 38.8 L58.5 39.7 L58.0 40.2 L57.5 39.8 L57.0 38.8 L56.5 39.3 L56.0 39.8 L55.5 40.0 L55.0 38.8 L54.5 39.3 L54.0 39.8 L53.5 40.1 L53.0 39.1 L52.5 39.6 L52.0 41.1 L51.5 41.1 L51.0 40.3 L50.5 37.4 L50.0 37.4 L49.5 37.4 L49.0 39.4 L48.5 40.1 L48.0 40.1 L47.5 38.7 L47.0 39.2 L46.5 39.9 L46.0 39.7 L45.5 39.0 L45.0 39.5 L44.5 40.1 L44.0 40.1 L43.5 38.5 L43.0 37.4 L42.5 37.4 L42.0 37.4 L41.5 37.4 L41.0 37.4 L40.5 37.4 L40.0 37.4 L39.5 37.4 L39.0 37.4 L38.5 37.4 L38.0 40.2 L37.5 39.7 L37.0 38.8 L36.5 39.0 L36.0 40.0 L35.5 40.0 L35.0 39.1 L34.5 39.3 L34.0 40.2 L33.5 40.1 L33.0 39.0 L32.5 39.1 L32.0 40.2 L31.5 40.0 L31.0 39.1 L30.5 39.4 L30.0 41.7 L29.5 41.0 L29.0 40.4 L28.5 37.4 L28.0 37.4 L27.5 37.4 L27.0 39.4 L26.5 40.3 L26.0 40.2 L25.5 38.7 L25.0 39.1 L24.5 40.1 L24.0 40.0 L23.5 39.2 L23.0 39.2 L22.5 40.3 L22.0 39.9 L21.5 38.9 L21.0 37.4 L20.5 37.4 L20.0 37.4 L19.5 37.4 L19.0 37.4 L18.5 37.4 L18.0 37.4 L17.5 37.4 L17.0 37.4 L16.5 37.4 L16.0 40.3 L15.5 40.1 L15.0 39.0 L14.5 39.2 L14.0 39.8 L13.5 39.9 L13.0 39.1 L12.5 39.0 L12.0 39.9 L11.5 40.2 L11.0 38.7 L10.5 39.2 L10.0 39.8 L9.5 40.1 L9.0 38.7 L8.5 39.1 L8.0 41.2 L7.5 41.3 L7.0 40.2 L6.5 37.4 L6.0 37.4 L5.5 37.4 L5.0 39.4 L4.5 39.9 L4.0 39.9 L3.5 38.7 L3.0 39.3 L2.5 40.1 L2.0 39.7 L1.5 38.7 L1.0 39.6 L0.5 39.8 L0.0 39.9Z"/></svg>
<div style="left:207px;top:118px;width:88px;height:44px;background:#92a6ff;"></div>
<div style="left:207px;top:132px;width:88px;height:1px;background:rgba(0,0,0,0.28);"></div>
<div style="left:207px;top:118px;width:1px;height:44px;background:rgba(0,0,0,0.3);"></div>
<div style="left:218px;top:133px;width:1px;height:29px;background:rgba(0,0,0,0.13);"></div>
<div style="left:229px;top:133px;width:1px;height:29px;background:rgba(0,0,0,0.13);"></div>
<div style="left:240px;top:133px;width:1px;height:29px;background:rgba(0,0,0,0.13);"></div>
<div style="left:251px;top:133px;width:1px;height:29px;background:rgba(0,0,0,0.13);"></div>
<div style="left:262px;top:133px;width:1px;height:29px;background:rgba(0,0,0,0.13);"></div>
<div style="left:273px;top:133px;width:1px;height:29px;background:rgba(0,0,0,0.13);"></div>
<div style="left:284px;top:133px;width:1px;height:29px;background:rgba(0,0,0,0.13);"></div>
<svg style="position:absolute;left:208px;top:118px" width="86" height="44" fill="#1c1c2a"><path d="M0.0 17.9 L0.5 17.5 L1.0 18.5 L1.5 19.3 L2.0 17.9 L2.5 18.0 L3.0 18.4 L3.5 19.0 L4.0 18.1 L4.5 17.5 L5.0 18.4 L5.5 20.4 L6.0 20.4 L6.5 20.4 L7.0 19.1 L7.5 18.0 L8.0 17.8 L8.5 18.3 L9.0 18.9 L9.5 18.2 L10.0 17.6 L10.5 18.1 L11.0 19.0 L11.5 18.0 L12.0 17.8 L12.5 18.1 L13.0 19.2 L13.5 17.9 L14.0 17.9 L14.5 18.6 L15.0 19.3 L15.5 18.3 L16.0 17.7 L16.5 20.4 L17.0 20.4 L17.5 20.4 L18.0 20.4 L18.5 20.4 L19.0 20.4 L19.5 20.4 L20.0 20.4 L20.5 20.4 L21.0 20.4 L21.5 19.4 L22.0 18.3 L22.5 18.0 L23.0 18.2 L23.5 19.2 L24.0 18.1 L24.5 17.9 L25.0 18.4 L25.5 18.9 L26.0 18.3 L26.5 17.8 L27.0 18.5 L27.5 20.4 L28.0 20.4 L28.5 20.4 L29.0 19.2 L29.5 18.1 L30.0 17.9 L30.5 18.0 L31.0 19.0 L31.5 18.3 L32.0 17.8 L32.5 18.1 L33.0 18.9 L33.5 17.9 L34.0 17.7 L34.5 18.4 L35.0 18.9 L35.5 18.3 L36.0 18.0 L36.5 18.6 L37.0 18.9 L37.5 17.8 L38.0 17.8 L38.5 20.4 L39.0 20.4 L39.5 20.4 L40.0 20.4 L40.5 20.4 L41.0 20.4 L41.5 20.4 L42.0 20.4 L42.5 20.4 L43.0 20.4 L43.5 19.0 L44.0 18.3 L44.5 17.7 L45.0 18.5 L45.5 19.2 L46.0 17.8 L46.5 17.9 L47.0 18.1 L47.5 19.3 L48.0 18.2 L48.5 17.7 L49.0 18.0 L49.5 20.4 L50.0 20.4 L50.5 20.4 L51.0 19.4 L51.5 18.2 L52.0 18.0 L52.5 18.3 L53.0 19.2 L53.5 17.9 L54.0 17.7 L54.5 18.4 L55.0 19.1 L55.5 18.0 L56.0 17.9 L56.5 18.1 L57.0 19.0 L57.5 18.2 L58.0 17.5 L58.5 18.6 L59.0 18.9 L59.5 18.3 L60.0 17.5 L60.5 20.4 L61.0 20.4 L61.5 20.4 L62.0 20.4 L62.5 20.4 L63.0 20.4 L63.5 20.4 L64.0 20.4 L64.5 20.4 L65.0 20.4 L65.5 19.4 L66.0 18.0 L66.5 17.9 L67.0 18.1 L67.5 19.0 L68.0 18.4 L68.5 17.8 L69.0 18.1 L69.5 19.2 L70.0 17.9 L70.5 17.8 L71.0 18.2 L71.5 20.4 L72.0 20.4 L72.5 20.4 L73.0 19.5 L73.5 18.2 L74.0 18.0 L74.5 18.5 L75.0 19.4 L75.5 18.0 L76.0 17.5 L76.5 18.1 L77.0 19.4 L77.5 18.1 L78.0 17.7 L78.5 18.2 L79.0 19.1 L79.5 18.3 L80.0 17.7 L80.5 18.2 L81.0 19.3 L81.5 18.3 L82.0 17.4 L82.5 20.4 L83.0 20.4 L83.5 20.4 L84.0 20.4 L84.5 20.4 L85.0 20.4 L85.5 20.4 L86.0 20.4 L86.0 22.2 L85.5 22.2 L85.0 22.2 L84.5 22.2 L84.0 22.2 L83.5 22.2 L83.0 22.2 L82.5 22.2 L82.0 25.2 L81.5 24.3 L81.0 23.3 L80.5 24.4 L80.0 24.9 L79.5 24.3 L79.0 23.5 L78.5 24.4 L78.0 24.9 L77.5 24.5 L77.0 23.2 L76.5 24.5 L76.0 25.1 L75.5 24.6 L75.0 23.2 L74.5 24.1 L74.0 25.9 L73.5 25.7 L73.0 24.4 L72.5 22.2 L72.0 22.2 L71.5 22.2 L71.0 24.4 L70.5 24.8 L70.0 24.7 L69.5 23.4 L69.0 24.5 L68.5 24.8 L68.0 24.2 L67.5 23.6 L67.0 24.5 L66.5 24.7 L66.0 24.6 L65.5 23.2 L65.0 22.2 L64.5 22.2 L64.0 22.2 L63.5 22.2 L63.0 22.2 L62.5 22.2 L62.0 22.2 L61.5 22.2 L61.0 22.2 L60.5 22.2 L60.0 25.1 L59.5 24.3 L59.0 23.7 L58.5 24.0 L58.0 25.1 L57.5 24.4 L57.0 23.6 L56.5 24.5 L56.0 24.7 L55.5 24.6 L55.0 23.5 L54.5 24.2 L54.0 24.9 L53.5 24.7 L53.0 23.4 L52.5 24.3 L52.0 25.9 L51.5 25.7 L51.0 24.5 L50.5 22.2 L50.0 22.2 L49.5 22.2 L49.0 24.6 L48.5 24.9 L48.0 24.4 L47.5 23.3 L47.0 24.5 L46.5 24.7 L46.0 24.8 L45.5 23.4 L45.0 24.1 L44.5 24.9 L44.0 24.3 L43.5 23.6 L43.0 22.2 L42.5 22.2 L42.0 22.2 L41.5 22.2 L41.0 22.2 L40.5 22.2 L40.0 22.2 L39.5 22.2 L39.0 22.2 L38.5 22.2 L38.0 24.8 L37.5 24.8 L37.0 23.7 L36.5 24.0 L36.0 24.6 L35.5 24.3 L35.0 23.7 L34.5 24.2 L34.0 24.9 L33.5 24.7 L33.0 23.7 L32.5 24.5 L32.0 24.8 L31.5 24.3 L31.0 23.6 L30.5 24.6 L30.0 26.0 L29.5 25.8 L29.0 24.7 L28.5 22.2 L28.0 22.2 L27.5 22.2 L27.0 24.1 L26.5 24.8 L26.0 24.3 L25.5 23.7 L25.0 24.2 L24.5 24.7 L24.0 24.5 L23.5 23.4 L23.0 24.4 L22.5 24.6 L22.0 24.3 L21.5 23.2 L21.0 22.2 L20.5 22.2 L20.0 22.2 L19.5 22.2 L19.0 22.2 L18.5 22.2 L18.0 22.2 L17.5 22.2 L17.0 22.2 L16.5 22.2 L16.0 24.9 L15.5 24.3 L15.0 23.3 L14.5 24.0 L14.0 24.7 L13.5 24.7 L13.0 23.4 L12.5 24.5 L12.0 24.8 L11.5 24.6 L11.0 23.6 L10.5 24.5 L10.0 25.0 L9.5 24.4 L9.0 23.7 L8.5 24.3 L8.0 26.1 L7.5 25.9 L7.0 24.8 L6.5 22.2 L6.0 22.2 L5.5 22.2 L5.0 24.2 L4.5 25.1 L4.0 24.5 L3.5 23.6 L3.0 24.2 L2.5 24.6 L2.0 24.7 L1.5 23.3 L1.0 24.1 L0.5 25.1 L0.0 24.7Z"/><path d="M0.0 33.0 L0.5 32.7 L1.0 33.8 L1.5 34.3 L2.0 33.2 L2.5 32.8 L3.0 33.4 L3.5 34.1 L4.0 33.1 L4.5 32.7 L5.0 33.6 L5.5 35.6 L6.0 35.6 L6.5 35.6 L7.0 34.3 L7.5 33.2 L8.0 33.0 L8.5 33.4 L9.0 34.1 L9.5 33.0 L10.0 32.7 L10.5 33.8 L11.0 34.1 L11.5 33.5 L12.0 32.7 L12.5 33.5 L13.0 34.2 L13.5 33.0 L14.0 32.6 L14.5 33.8 L15.0 34.0 L15.5 33.5 L16.0 33.1 L16.5 35.6 L17.0 35.6 L17.5 35.6 L18.0 35.6 L18.5 35.6 L19.0 35.6 L19.5 35.6 L20.0 35.6 L20.5 35.6 L21.0 35.6 L21.5 34.4 L22.0 33.3 L22.5 33.0 L23.0 33.4 L23.5 34.5 L24.0 33.1 L24.5 32.7 L25.0 33.8 L25.5 34.5 L26.0 33.4 L26.5 32.8 L27.0 33.4 L27.5 35.6 L28.0 35.6 L28.5 35.6 L29.0 34.4 L29.5 33.0 L30.0 32.9 L30.5 33.3 L31.0 34.2 L31.5 33.5 L32.0 33.0 L32.5 33.2 L33.0 34.3 L33.5 33.1 L34.0 32.9 L34.5 33.4 L35.0 34.5 L35.5 33.1 L36.0 32.7 L36.5 33.6 L37.0 34.6 L37.5 33.4 L38.0 33.2 L38.5 35.6 L39.0 35.6 L39.5 35.6 L40.0 35.6 L40.5 35.6 L41.0 35.6 L41.5 35.6 L42.0 35.6 L42.5 35.6 L43.0 35.6 L43.5 34.7 L44.0 33.5 L44.5 33.0 L45.0 33.3 L45.5 34.1 L46.0 33.2 L46.5 33.0 L47.0 33.6 L47.5 34.5 L48.0 33.4 L48.5 32.8 L49.0 33.6 L49.5 35.6 L50.0 35.6 L50.5 35.6 L51.0 34.5 L51.5 33.1 L52.0 33.0 L52.5 33.4 L53.0 34.3 L53.5 33.2 L54.0 33.2 L54.5 33.6 L55.0 34.5 L55.5 33.6 L56.0 33.1 L56.5 33.2 L57.0 34.1 L57.5 33.5 L58.0 32.7 L58.5 33.3 L59.0 34.3 L59.5 33.1 L60.0 33.0 L60.5 35.6 L61.0 35.6 L61.5 35.6 L62.0 35.6 L62.5 35.6 L63.0 35.6 L63.5 35.6 L64.0 35.6 L64.5 35.6 L65.0 35.6 L65.5 34.7 L66.0 33.1 L66.5 32.9 L67.0 33.7 L67.5 34.2 L68.0 33.0 L68.5 33.1 L69.0 33.4 L69.5 34.1 L70.0 33.1 L70.5 32.7 L71.0 33.4 L71.5 35.6 L72.0 35.6 L72.5 35.6 L73.0 34.1 L73.5 33.2 L74.0 33.1 L74.5 33.6 L75.0 34.5 L75.5 33.6 L76.0 33.2 L76.5 33.3 L77.0 34.4 L77.5 33.1 L78.0 32.9 L78.5 33.4 L79.0 34.3 L79.5 33.2 L80.0 32.7 L80.5 33.6 L81.0 34.7 L81.5 33.4 L82.0 32.9 L82.5 35.6 L83.0 35.6 L83.5 35.6 L84.0 35.6 L84.5 35.6 L85.0 35.6 L85.5 35.6 L86.0 35.6 L86.0 37.4 L85.5 37.4 L85.0 37.4 L84.5 37.4 L84.0 37.4 L83.5 37.4 L83.0 37.4 L82.5 37.4 L82.0 40.1 L81.5 39.6 L81.0 38.3 L80.5 39.4 L80.0 40.3 L79.5 39.8 L79.0 38.7 L78.5 39.6 L78.0 40.1 L77.5 39.9 L77.0 38.6 L76.5 39.7 L76.0 39.8 L75.5 39.4 L75.0 38.5 L74.5 39.4 L74.0 41.2 L73.5 41.1 L73.0 40.2 L72.5 37.4 L72.0 37.4 L71.5 37.4 L71.0 39.6 L70.5 40.3 L70.0 39.9 L69.5 38.9 L69.0 39.6 L68.5 39.9 L68.0 40.0 L67.5 38.8 L67.0 39.3 L66.5 40.1 L66.0 39.9 L65.5 38.3 L65.0 37.4 L64.5 37.4 L64.0 37.4 L63.5 37.4 L63.0 37.4 L62.5 37.4 L62.0 37.4 L61.5 37.4 L61.0 37.4 L60.5 37.4 L60.0 40.0 L59.5 39.9 L59.0 38.7 L58.5 39.7 L58.0 40.3 L57.5 39.5 L57.0 38.9 L56.5 39.8 L56.0 39.9 L55.5 39.4 L55.0 38.5 L54.5 39.4 L54.0 39.8 L53.5 39.8 L53.0 38.7 L52.5 39.6 L52.0 41.3 L51.5 41.2 L51.0 39.8 L50.5 37.4 L50.0 37.4 L49.5 37.4 L49.0 39.4 L48.5 40.2 L48.0 39.6 L47.5 38.5 L47.0 39.4 L46.5 40.0 L46.0 39.8 L45.5 38.9 L45.0 39.7 L44.5 40.0 L44.0 39.5 L43.5 38.3 L43.0 37.4 L42.5 37.4 L42.0 37.4 L41.5 37.4 L41.0 37.4 L40.5 37.4 L40.0 37.4 L39.5 37.4 L39.0 37.4 L38.5 37.4 L38.0 39.8 L37.5 39.6 L37.0 38.4 L36.5 39.4 L36.0 40.3 L35.5 39.9 L35.0 38.5 L34.5 39.6 L34.0 40.1 L33.5 39.9 L33.0 38.7 L32.5 39.8 L32.0 40.0 L31.5 39.5 L31.0 38.8 L30.5 39.7 L30.0 41.4 L29.5 41.3 L29.0 39.9 L28.5 37.4 L28.0 37.4 L27.5 37.4 L27.0 39.6 L26.5 40.2 L26.0 39.6 L25.5 38.5 L25.0 39.2 L24.5 40.3 L24.0 39.9 L23.5 38.5 L23.0 39.6 L22.5 40.0 L22.0 39.7 L21.5 38.6 L21.0 37.4 L20.5 37.4 L20.0 37.4 L19.5 37.4 L19.0 37.4 L18.5 37.4 L18.0 37.4 L17.5 37.4 L17.0 37.4 L16.5 37.4 L16.0 39.9 L15.5 39.5 L15.0 39.0 L14.5 39.2 L14.0 40.4 L13.5 40.0 L13.0 38.8 L12.5 39.5 L12.0 40.3 L11.5 39.5 L11.0 38.9 L10.5 39.2 L10.0 40.3 L9.5 40.0 L9.0 38.9 L8.5 39.6 L8.0 41.3 L7.5 41.1 L7.0 40.0 L6.5 37.4 L6.0 37.4 L5.5 37.4 L5.0 39.4 L4.5 40.3 L4.0 39.9 L3.5 38.9 L3.0 39.6 L2.5 40.2 L2.0 39.8 L1.5 38.7 L1.0 39.2 L0.5 40.3 L0.0 40.0Z"/></svg>
<div style="left:295px;top:118px;width:88px;height:44px;background:#92a6ff;"></div>
<div style="left:295px;top:132px;width:88px;height:1px;background:rgba(0,0,0,0.28);"></div>
<div style="left:295px;top:118px;width:1px;height:44px;background:rgba(0,0,0,0.3);"></div>
<div style="left:306px;top:133px;width:1px;height:29px;background:rgba(0,0,0,0.13);"></div>
<div style="left:317px;top:133px;width:1px;height:29px;background:rgba(0,0,0,0.13);"></div>
<div style="left:328px;top:133px;width:1px;height:29px;background:rgba(0,0,0,0.13);"></div>
<div style="left:339px;top:133px;width:1px;height:29px;background:rgba(0,0,0,0.13);"></div>
<div style="left:350px;top:133px;width:1px;height:29px;background:rgba(0,0,0,0.13);"></div>
<div style="left:361px;top:133px;width:1px;height:29px;background:rgba(0,0,0,0.13);"></div>
<div style="left:372px;top:133px;width:1px;height:29px;background:rgba(0,0,0,0.13);"></div>
<svg style="position:absolute;left:296px;top:118px" width="86" height="44" fill="#1c1c2a"><path d="M0.0 18.4 L0.5 17.7 L1.0 18.4 L1.5 19.4 L2.0 18.1 L2.5 17.5 L3.0 18.4 L3.5 19.1 L4.0 18.3 L4.5 17.5 L5.0 18.2 L5.5 20.4 L6.0 20.4 L6.5 20.4 L7.0 19.4 L7.5 17.9 L8.0 17.5 L8.5 18.1 L9.0 19.2 L9.5 18.2 L10.0 17.4 L10.5 17.9 L11.0 19.2 L11.5 17.9 L12.0 17.4 L12.5 18.5 L13.0 19.3 L13.5 18.0 L14.0 17.7 L14.5 18.2 L15.0 19.0 L15.5 18.4 L16.0 17.9 L16.5 20.4 L17.0 20.4 L17.5 20.4 L18.0 20.4 L18.5 20.4 L19.0 20.4 L19.5 20.4 L20.0 20.4 L20.5 20.4 L21.0 20.4 L21.5 20.4 L22.0 18.1 L22.5 17.5 L23.0 18.0 L23.5 19.1 L24.0 18.3 L24.5 17.7 L25.0 18.2 L25.5 19.0 L26.0 17.9 L26.5 17.5 L27.0 18.0 L27.5 19.5 L28.0 20.4 L28.5 20.4 L29.0 20.4 L29.5 17.9 L30.0 17.5 L30.5 18.3 L31.0 19.2 L31.5 18.1 L32.0 17.7 L32.5 18.3 L33.0 19.0 L33.5 18.4 L34.0 17.9 L34.5 18.2 L35.0 19.2 L35.5 18.2 L36.0 17.9 L36.5 17.9 L37.0 19.0 L37.5 18.1 L38.0 17.9 L38.5 18.4 L39.0 20.4 L39.5 20.4 L40.0 20.4 L40.5 20.4 L41.0 20.4 L41.5 20.4 L42.0 20.4 L42.5 20.4 L43.0 20.4 L43.5 20.4 L44.0 18.3 L44.5 17.5 L45.0 18.2 L45.5 19.5 L46.0 18.2 L46.5 17.8 L47.0 17.9 L47.5 19.4 L48.0 18.3 L48.5 17.8 L49.0 18.2 L49.5 19.1 L50.0 20.4 L50.5 20.4 L51.0 20.4 L51.5 18.2 L52.0 17.8 L52.5 18.2 L53.0 19.2 L53.5 18.2 L54.0 17.9 L54.5 18.1 L55.0 19.0 L55.5 18.1 L56.0 17.6 L56.5 18.2 L57.0 19.1 L57.5 18.1 L58.0 17.9 L58.5 18.0 L59.0 19.5 L59.5 18.3 L60.0 17.9 L60.5 18.1 L61.0 20.4 L61.5 20.4 L62.0 20.4 L62.5 20.4 L63.0 20.4 L63.5 20.4 L64.0 20.4 L64.5 20.4 L65.0 20.4 L65.5 20.4 L66.0 18.2 L66.5 17.4 L67.0 18.0 L67.5 19.1 L68.0 18.0 L68.5 17.9 L69.0 17.9 L69.5 19.1 L70.0 18.1 L70.5 17.6 L71.0 18.3 L71.5 19.2 L72.0 20.4 L72.5 20.4 L73.0 20.4 L73.5 18.4 L74.0 17.4 L74.5 18.2 L75.0 19.3 L75.5 18.3 L76.0 17.9 L76.5 17.9 L77.0 18.9 L77.5 18.3 L78.0 17.5 L78.5 18.1 L79.0 19.3 L79.5 18.2 L80.0 17.6 L80.5 17.9 L81.0 19.2 L81.5 18.2 L82.0 17.6 L82.5 18.0 L83.0 20.4 L83.5 20.4 L84.0 20.4 L84.5 20.4 L85.0 20.4 L85.5 20.4 L86.0 20.4 L86.0 22.2 L85.5 22.2 L85.0 22.2 L84.5 22.2 L84.0 22.2 L83.5 22.2 L83.0 22.2 L82.5 24.6 L82.0 25.0 L81.5 24.4 L81.0 23.4 L80.5 24.7 L80.0 25.0 L79.5 24.4 L79.0 23.3 L78.5 24.5 L78.0 25.1 L77.5 24.3 L77.0 23.7 L76.5 24.7 L76.0 24.7 L75.5 24.3 L75.0 23.3 L74.5 24.4 L74.0 26.5 L73.5 25.5 L73.0 22.2 L72.5 22.2 L72.0 22.2 L71.5 23.4 L71.0 24.3 L70.5 25.0 L70.0 24.5 L69.5 23.5 L69.0 24.7 L68.5 24.7 L68.0 24.6 L67.5 23.5 L67.0 24.6 L66.5 25.2 L66.0 24.4 L65.5 22.2 L65.0 22.2 L64.5 22.2 L64.0 22.2 L63.5 22.2 L63.0 22.2 L62.5 22.2 L62.0 22.2 L61.5 22.2 L61.0 22.2 L60.5 24.5 L60.0 24.7 L59.5 24.3 L59.0 23.1 L58.5 24.6 L58.0 24.7 L57.5 24.5 L57.0 23.5 L56.5 24.4 L56.0 25.0 L55.5 24.5 L55.0 23.6 L54.5 24.5 L54.0 24.7 L53.5 24.4 L53.0 23.4 L52.5 24.4 L52.0 26.1 L51.5 25.7 L51.0 22.2 L50.5 22.2 L50.0 22.2 L49.5 23.5 L49.0 24.4 L48.5 24.8 L48.0 24.3 L47.5 23.2 L47.0 24.7 L46.5 24.8 L46.0 24.4 L45.5 23.1 L45.0 24.4 L44.5 25.1 L44.0 24.3 L43.5 22.2 L43.0 22.2 L42.5 22.2 L42.0 22.2 L41.5 22.2 L41.0 22.2 L40.5 22.2 L40.0 22.2 L39.5 22.2 L39.0 22.2 L38.5 24.2 L38.0 24.7 L37.5 24.5 L37.0 23.6 L36.5 24.7 L36.0 24.7 L35.5 24.4 L35.0 23.4 L34.5 24.4 L34.0 24.7 L33.5 24.2 L33.0 23.6 L32.5 24.3 L32.0 24.9 L31.5 24.5 L31.0 23.4 L30.5 24.3 L30.0 26.4 L29.5 26.0 L29.0 22.2 L28.5 22.2 L28.0 22.2 L27.5 23.1 L27.0 24.6 L26.5 25.1 L26.0 24.7 L25.5 23.6 L25.0 24.4 L24.5 24.9 L24.0 24.3 L23.5 23.5 L23.0 24.6 L22.5 25.1 L22.0 24.5 L21.5 22.2 L21.0 22.2 L20.5 22.2 L20.0 22.2 L19.5 22.2 L19.0 22.2 L18.5 22.2 L18.0 22.2 L17.5 22.2 L17.0 22.2 L16.5 22.2 L16.0 24.7 L15.5 24.2 L15.0 23.6 L14.5 24.4 L14.0 24.9 L13.5 24.6 L13.0 23.3 L12.5 24.1 L12.0 25.2 L11.5 24.7 L11.0 23.4 L10.5 24.7 L10.0 25.2 L9.5 24.4 L9.0 23.4 L8.5 24.5 L8.0 26.4 L7.5 26.0 L7.0 24.5 L6.5 22.2 L6.0 22.2 L5.5 22.2 L5.0 24.4 L4.5 25.1 L4.0 24.3 L3.5 23.5 L3.0 24.2 L2.5 25.1 L2.0 24.5 L1.5 23.2 L1.0 24.2 L0.5 24.9 L0.0 24.2Z"/><path d="M0.0 33.5 L0.5 32.9 L1.0 33.2 L1.5 34.4 L2.0 33.1 L2.5 33.0 L3.0 33.4 L3.5 34.3 L4.0 33.5 L4.5 32.7 L5.0 33.1 L5.5 35.6 L6.0 35.6 L6.5 35.6 L7.0 34.7 L7.5 33.3 L8.0 33.0 L8.5 33.2 L9.0 34.3 L9.5 33.5 L10.0 33.0 L10.5 33.5 L11.0 34.7 L11.5 33.4 L12.0 33.0 L12.5 33.1 L13.0 34.6 L13.5 33.1 L14.0 32.9 L14.5 33.6 L15.0 34.6 L15.5 33.4 L16.0 32.9 L16.5 35.6 L17.0 35.6 L17.5 35.6 L18.0 35.6 L18.5 35.6 L19.0 35.6 L19.5 35.6 L20.0 35.6 L20.5 35.6 L21.0 35.6 L21.5 35.6 L22.0 33.1 L22.5 32.8 L23.0 33.6 L23.5 34.6 L24.0 33.5 L24.5 33.0 L25.0 33.1 L25.5 34.5 L26.0 33.2 L26.5 32.7 L27.0 33.1 L27.5 34.5 L28.0 35.6 L28.5 35.6 L29.0 35.6 L29.5 33.5 L30.0 32.8 L30.5 33.5 L31.0 34.4 L31.5 33.5 L32.0 32.7 L32.5 33.2 L33.0 34.6 L33.5 33.3 L34.0 33.2 L34.5 33.4 L35.0 34.7 L35.5 33.2 L36.0 32.8 L36.5 33.6 L37.0 34.7 L37.5 33.4 L38.0 32.9 L38.5 33.3 L39.0 35.6 L39.5 35.6 L40.0 35.6 L40.5 35.6 L41.0 35.6 L41.5 35.6 L42.0 35.6 L42.5 35.6 L43.0 35.6 L43.5 35.6 L44.0 33.3 L44.5 33.1 L45.0 33.3 L45.5 34.3 L46.0 33.4 L46.5 32.7 L47.0 33.3 L47.5 34.5 L48.0 33.3 L48.5 32.9 L49.0 33.1 L49.5 34.4 L50.0 35.6 L50.5 35.6 L51.0 35.6 L51.5 33.4 L52.0 33.2 L52.5 33.2 L53.0 34.5 L53.5 33.6 L54.0 32.7 L54.5 33.4 L55.0 34.4 L55.5 33.6 L56.0 33.1 L56.5 33.3 L57.0 34.7 L57.5 33.7 L58.0 32.6 L58.5 33.2 L59.0 34.2 L59.5 33.2 L60.0 32.8 L60.5 33.1 L61.0 35.6 L61.5 35.6 L62.0 35.6 L62.5 35.6 L63.0 35.6 L63.5 35.6 L64.0 35.6 L64.5 35.6 L65.0 35.6 L65.5 35.6 L66.0 33.8 L66.5 33.1 L67.0 33.3 L67.5 34.4 L68.0 33.2 L68.5 32.8 L69.0 33.1 L69.5 34.5 L70.0 33.3 L70.5 32.8 L71.0 33.2 L71.5 34.6 L72.0 35.6 L72.5 35.6 L73.0 35.6 L73.5 33.6 L74.0 32.7 L74.5 33.1 L75.0 34.4 L75.5 33.7 L76.0 32.7 L76.5 33.2 L77.0 34.4 L77.5 33.2 L78.0 33.1 L78.5 33.1 L79.0 34.6 L79.5 33.6 L80.0 33.2 L80.5 33.0 L81.0 34.5 L81.5 33.6 L82.0 33.0 L82.5 33.4 L83.0 35.6 L83.5 35.6 L84.0 35.6 L84.5 35.6 L85.0 35.6 L85.5 35.6 L86.0 35.6 L86.0 37.4 L85.5 37.4 L85.0 37.4 L84.5 37.4 L84.0 37.4 L83.5 37.4 L83.0 37.4 L82.5 39.6 L82.0 40.0 L81.5 39.4 L81.0 38.5 L80.5 40.0 L80.0 39.8 L79.5 39.4 L79.0 38.4 L78.5 39.9 L78.0 39.9 L77.5 39.8 L77.0 38.6 L76.5 39.8 L76.0 40.3 L75.5 39.3 L75.0 38.6 L74.5 39.9 L74.0 41.6 L73.5 40.7 L73.0 37.4 L72.5 37.4 L72.0 37.4 L71.5 38.4 L71.0 39.8 L70.5 40.2 L70.0 39.7 L69.5 38.5 L69.0 39.9 L68.5 40.2 L68.0 39.8 L67.5 38.6 L67.0 39.7 L66.5 39.9 L66.0 39.2 L65.5 37.4 L65.0 37.4 L64.5 37.4 L64.0 37.4 L63.5 37.4 L63.0 37.4 L62.5 37.4 L62.0 37.4 L61.5 37.4 L61.0 37.4 L60.5 39.9 L60.0 40.2 L59.5 39.8 L59.0 38.8 L58.5 39.8 L58.0 40.4 L57.5 39.3 L57.0 38.3 L56.5 39.7 L56.0 39.9 L55.5 39.4 L55.0 38.6 L54.5 39.6 L54.0 40.3 L53.5 39.4 L53.0 38.5 L52.5 39.8 L52.0 41.1 L51.5 40.9 L51.0 37.4 L50.5 37.4 L50.0 37.4 L49.5 38.6 L49.0 39.9 L48.5 40.1 L48.0 39.7 L47.5 38.5 L47.0 39.7 L46.5 40.3 L46.0 39.6 L45.5 38.7 L45.0 39.7 L44.5 39.9 L44.0 39.7 L43.5 37.4 L43.0 37.4 L42.5 37.4 L42.0 37.4 L41.5 37.4 L41.0 37.4 L40.5 37.4 L40.0 37.4 L39.5 37.4 L39.0 37.4 L38.5 39.7 L38.0 40.1 L37.5 39.6 L37.0 38.3 L36.5 39.4 L36.0 40.2 L35.5 39.8 L35.0 38.3 L34.5 39.6 L34.0 39.8 L33.5 39.7 L33.0 38.4 L32.5 39.8 L32.0 40.3 L31.5 39.5 L31.0 38.6 L30.5 39.5 L30.0 41.5 L29.5 40.8 L29.0 37.4 L28.5 37.4 L28.0 37.4 L27.5 38.5 L27.0 39.9 L26.5 40.3 L26.0 39.8 L25.5 38.5 L25.0 39.9 L24.5 40.0 L24.0 39.5 L23.5 38.4 L23.0 39.4 L22.5 40.2 L22.0 39.9 L21.5 37.4 L21.0 37.4 L20.5 37.4 L20.0 37.4 L19.5 37.4 L19.0 37.4 L18.5 37.4 L18.0 37.4 L17.5 37.4 L17.0 37.4 L16.5 37.4 L16.0 40.1 L15.5 39.6 L15.0 38.4 L14.5 39.4 L14.0 40.1 L13.5 39.9 L13.0 38.4 L12.5 39.9 L12.0 40.0 L11.5 39.6 L11.0 38.3 L10.5 39.5 L10.0 40.0 L9.5 39.5 L9.0 38.7 L8.5 39.8 L8.0 41.3 L7.5 41.0 L7.0 39.6 L6.5 37.4 L6.0 37.4 L5.5 37.4 L5.0 39.9 L4.5 40.3 L4.0 39.5 L3.5 38.7 L3.0 39.6 L2.5 40.0 L2.0 39.9 L1.5 38.6 L1.0 39.8 L0.5 40.1 L0.0 39.5Z"/></svg>
<div style="left:383px;top:118px;width:88px;height:44px;background:#92a6ff;"></div>
<div style="left:383px;top:132px;width:88px;height:1px;background:rgba(0,0,0,0.28);"></div>
<div style="left:383px;top:118px;width:1px;height:44px;background:rgba(0,0,0,0.3);"></div>
<div style="left:394px;top:133px;width:1px;height:29px;background:rgba(0,0,0,0.13);"></div>
<div style="left:405px;top:133px;width:1px;height:29px;background:rgba(0,0,0,0.13);"></div>
<div style="left:416px;top:133px;width:1px;height:29px;background:rgba(0,0,0,0.13);"></div>
<div style="left:427px;top:133px;width:1px;height:29px;background:rgba(0,0,0,0.13);"></div>
<div style="left:438px;top:133px;width:1px;height:29px;background:rgba(0,0,0,0.13);"></div>
<div style="left:449px;top:133px;width:1px;height:29px;background:rgba(0,0,0,0.13);"></div>
<div style="left:460px;top:133px;width:1px;height:29px;background:rgba(0,0,0,0.13);"></div>
<svg style="position:absolute;left:384px;top:118px" width="86" height="44" fill="#1c1c2a"><path d="M0.0 18.4 L0.5 17.6 L1.0 18.0 L1.5 19.2 L2.0 18.3 L2.5 17.5 L3.0 17.9 L3.5 19.4 L4.0 18.5 L4.5 17.8 L5.0 18.3 L5.5 18.9 L6.0 20.4 L6.5 20.4 L7.0 20.4 L7.5 18.2 L8.0 17.6 L8.5 18.0 L9.0 19.2 L9.5 18.2 L10.0 17.8 L10.5 18.2 L11.0 19.0 L11.5 18.3 L12.0 17.9 L12.5 18.0 L13.0 18.8 L13.5 18.0 L14.0 17.6 L14.5 18.2 L15.0 18.9 L15.5 18.3 L16.0 17.4 L16.5 18.1 L17.0 20.4 L17.5 20.4 L18.0 20.4 L18.5 20.4 L19.0 20.4 L19.5 20.4 L20.0 20.4 L20.5 20.4 L21.0 20.4 L21.5 20.4 L22.0 18.5 L22.5 17.8 L23.0 17.9 L23.5 18.8 L24.0 18.3 L24.5 17.8 L25.0 17.8 L25.5 19.2 L26.0 18.5 L26.5 17.8 L27.0 18.2 L27.5 19.0 L28.0 20.4 L28.5 20.4 L29.0 20.4 L29.5 18.4 L30.0 17.7 L30.5 18.2 L31.0 19.0 L31.5 18.5 L32.0 17.8 L32.5 17.9 L33.0 18.8 L33.5 18.3 L34.0 17.5 L34.5 17.8 L35.0 18.9 L35.5 18.1 L36.0 17.5 L36.5 18.2 L37.0 19.1 L37.5 18.2 L38.0 17.7 L38.5 18.1 L39.0 20.4 L39.5 20.4 L40.0 20.4 L40.5 20.4 L41.0 20.4 L41.5 20.4 L42.0 20.4 L42.5 20.4 L43.0 20.4 L43.5 20.4 L44.0 18.6 L44.5 17.8 L45.0 18.0 L45.5 18.8 L46.0 18.3 L46.5 17.6 L47.0 17.8 L47.5 18.7 L48.0 18.3 L48.5 17.6 L49.0 18.1 L49.5 18.9 L50.0 20.4 L50.5 20.4 L51.0 20.4 L51.5 18.6 L52.0 17.6 L52.5 17.9 L53.0 19.1 L53.5 18.3 L54.0 17.8 L54.5 18.1 L55.0 18.8 L55.5 18.4 L56.0 17.8 L56.5 18.0 L57.0 19.2 L57.5 18.2 L58.0 17.6 L58.5 17.8 L59.0 19.3 L59.5 18.5 L60.0 17.8 L60.5 17.8 L61.0 20.4 L61.5 20.4 L62.0 20.4 L62.5 20.4 L63.0 20.4 L63.5 20.4 L64.0 20.4 L64.5 20.4 L65.0 20.4 L65.5 20.4 L66.0 18.3 L66.5 18.0 L67.0 18.1 L67.5 19.3 L68.0 18.4 L68.5 17.9 L69.0 18.1 L69.5 19.0 L70.0 18.5 L70.5 17.6 L71.0 18.1 L71.5 19.1 L72.0 20.4 L72.5 20.4 L73.0 20.4 L73.5 18.1 L74.0 17.7 L74.5 17.9 L75.0 18.7 L75.5 18.7 L76.0 17.6 L76.5 17.9 L77.0 19.1 L77.5 18.6 L78.0 17.5 L78.5 17.9 L79.0 19.2 L79.5 18.2 L80.0 17.9 L80.5 17.9 L81.0 19.2 L81.5 18.7 L82.0 17.6 L82.5 17.7 L83.0 20.4 L83.5 20.4 L84.0 20.4 L84.5 20.4 L85.0 20.4 L85.5 20.4 L86.0 20.4 L86.0 22.2 L85.5 22.2 L85.0 22.2 L84.5 22.2 L84.0 22.2 L83.5 22.2 L83.0 22.2 L82.5 24.9 L82.0 25.0 L81.5 23.9 L81.0 23.4 L80.5 24.7 L80.0 24.7 L79.5 24.4 L79.0 23.4 L78.5 24.7 L78.0 25.1 L77.5 24.0 L77.0 23.5 L76.5 24.7 L76.0 25.0 L75.5 23.9 L75.0 23.9 L74.5 24.7 L74.0 26.2 L73.5 25.8 L73.0 22.2 L72.5 22.2 L72.0 22.2 L71.5 23.5 L71.0 24.5 L70.5 25.0 L70.0 24.1 L69.5 23.6 L69.0 24.5 L68.5 24.7 L68.0 24.2 L67.5 23.3 L67.0 24.5 L66.5 24.6 L66.0 24.3 L65.5 22.2 L65.0 22.2 L64.5 22.2 L64.0 22.2 L63.5 22.2 L63.0 22.2 L62.5 22.2 L62.0 22.2 L61.5 22.2 L61.0 22.2 L60.5 24.8 L60.0 24.8 L59.5 24.1 L59.0 23.3 L58.5 24.8 L58.0 25.0 L57.5 24.4 L57.0 23.4 L56.5 24.6 L56.0 24.8 L55.5 24.2 L55.0 23.8 L54.5 24.5 L54.0 24.8 L53.5 24.3 L53.0 23.5 L52.5 24.7 L52.0 26.3 L51.5 25.3 L51.0 22.2 L50.5 22.2 L50.0 22.2 L49.5 23.7 L49.0 24.5 L48.5 25.0 L48.0 24.3 L47.5 23.9 L47.0 24.8 L46.5 25.0 L46.0 24.3 L45.5 23.8 L45.0 24.6 L44.5 24.8 L44.0 24.0 L43.5 22.2 L43.0 22.2 L42.5 22.2 L42.0 22.2 L41.5 22.2 L41.0 22.2 L40.5 22.2 L40.0 22.2 L39.5 22.2 L39.0 22.2 L38.5 24.5 L38.0 24.9 L37.5 24.4 L37.0 23.5 L36.5 24.4 L36.0 25.1 L35.5 24.5 L35.0 23.7 L34.5 24.8 L34.0 25.1 L33.5 24.3 L33.0 23.8 L32.5 24.7 L32.0 24.8 L31.5 24.1 L31.0 23.6 L30.5 24.4 L30.0 26.2 L29.5 25.5 L29.0 22.2 L28.5 22.2 L28.0 22.2 L27.5 23.6 L27.0 24.4 L26.5 24.8 L26.0 24.1 L25.5 23.4 L25.0 24.8 L24.5 24.8 L24.0 24.3 L23.5 23.8 L23.0 24.7 L22.5 24.8 L22.0 24.1 L21.5 22.2 L21.0 22.2 L20.5 22.2 L20.0 22.2 L19.5 22.2 L19.0 22.2 L18.5 22.2 L18.0 22.2 L17.5 22.2 L17.0 22.2 L16.5 24.5 L16.0 25.2 L15.5 24.3 L15.0 23.7 L14.5 24.4 L14.0 25.0 L13.5 24.6 L13.0 23.8 L12.5 24.6 L12.0 24.7 L11.5 24.3 L11.0 23.6 L10.5 24.4 L10.0 24.8 L9.5 24.4 L9.0 23.4 L8.5 24.6 L8.0 26.3 L7.5 25.7 L7.0 22.2 L6.5 22.2 L6.0 22.2 L5.5 23.7 L5.0 24.3 L4.5 24.8 L4.0 24.1 L3.5 23.2 L3.0 24.7 L2.5 25.1 L2.0 24.3 L1.5 23.4 L1.0 24.6 L0.5 25.0 L0.0 24.2Z"/><path d="M0.0 33.6 L0.5 33.1 L1.0 33.1 L1.5 34.4 L2.0 33.6 L2.5 33.2 L3.0 33.0 L3.5 34.5 L4.0 33.5 L4.5 32.7 L5.0 33.2 L5.5 34.1 L6.0 35.6 L6.5 35.6 L7.0 35.6 L7.5 33.5 L8.0 32.7 L8.5 33.0 L9.0 34.2 L9.5 33.4 L10.0 32.8 L10.5 33.4 L11.0 34.2 L11.5 33.8 L12.0 33.0 L12.5 33.3 L13.0 34.2 L13.5 33.2 L14.0 33.1 L14.5 33.2 L15.0 34.4 L15.5 33.8 L16.0 33.0 L16.5 33.1 L17.0 35.6 L17.5 35.6 L18.0 35.6 L18.5 35.6 L19.0 35.6 L19.5 35.6 L20.0 35.6 L20.5 35.6 L21.0 35.6 L21.5 35.6 L22.0 33.6 L22.5 33.0 L23.0 33.0 L23.5 34.0 L24.0 33.7 L24.5 33.2 L25.0 33.3 L25.5 34.0 L26.0 33.8 L26.5 33.1 L27.0 33.3 L27.5 34.3 L28.0 35.6 L28.5 35.6 L29.0 35.6 L29.5 33.5 L30.0 32.8 L30.5 33.3 L31.0 34.6 L31.5 33.8 L32.0 33.0 L32.5 33.0 L33.0 34.2 L33.5 33.7 L34.0 33.1 L34.5 33.1 L35.0 34.3 L35.5 33.3 L36.0 32.8 L36.5 33.5 L37.0 34.2 L37.5 33.4 L38.0 33.1 L38.5 33.4 L39.0 35.6 L39.5 35.6 L40.0 35.6 L40.5 35.6 L41.0 35.6 L41.5 35.6 L42.0 35.6 L42.5 35.6 L43.0 35.6 L43.5 35.6 L44.0 33.3 L44.5 33.1 L45.0 33.5 L45.5 34.2 L46.0 33.7 L46.5 33.0 L47.0 33.2 L47.5 34.5 L48.0 33.7 L48.5 32.8 L49.0 32.9 L49.5 34.3 L50.0 35.6 L50.5 35.6 L51.0 35.6 L51.5 33.8 L52.0 32.7 L52.5 33.1 L53.0 34.3 L53.5 33.3 L54.0 33.2 L54.5 33.0 L55.0 34.4 L55.5 33.4 L56.0 32.7 L56.5 33.5 L57.0 34.0 L57.5 33.6 L58.0 32.9 L58.5 33.4 L59.0 34.2 L59.5 33.9 L60.0 32.8 L60.5 32.9 L61.0 35.6 L61.5 35.6 L62.0 35.6 L62.5 35.6 L63.0 35.6 L63.5 35.6 L64.0 35.6 L64.5 35.6 L65.0 35.6 L65.5 35.6 L66.0 33.8 L66.5 33.1 L67.0 33.4 L67.5 34.2 L68.0 33.9 L68.5 33.0 L69.0 32.9 L69.5 34.0 L70.0 33.6 L70.5 32.8 L71.0 33.4 L71.5 34.3 L72.0 35.6 L72.5 35.6 L73.0 35.6 L73.5 33.9 L74.0 32.8 L74.5 33.1 L75.0 34.0 L75.5 33.8 L76.0 32.9 L76.5 33.1 L77.0 34.4 L77.5 33.8 L78.0 33.2 L78.5 33.1 L79.0 34.3 L79.5 33.8 L80.0 33.2 L80.5 33.4 L81.0 34.1 L81.5 33.7 L82.0 33.0 L82.5 33.0 L83.0 35.6 L83.5 35.6 L84.0 35.6 L84.5 35.6 L85.0 35.6 L85.5 35.6 L86.0 35.6 L86.0 37.4 L85.5 37.4 L85.0 37.4 L84.5 37.4 L84.0 37.4 L83.5 37.4 L83.0 37.4 L82.5 40.0 L82.0 40.0 L81.5 39.3 L81.0 38.9 L80.5 39.6 L80.0 39.8 L79.5 39.2 L79.0 38.7 L78.5 39.9 L78.0 39.8 L77.5 39.2 L77.0 38.6 L76.5 39.9 L76.0 40.1 L75.5 39.2 L75.0 39.0 L74.5 39.9 L74.0 41.5 L73.5 40.4 L73.0 37.4 L72.5 37.4 L72.0 37.4 L71.5 38.7 L71.0 39.6 L70.5 40.2 L70.0 39.4 L69.5 39.0 L69.0 40.1 L68.5 40.0 L68.0 39.1 L67.5 38.8 L67.0 39.6 L66.5 39.9 L66.0 39.2 L65.5 37.4 L65.0 37.4 L64.5 37.4 L64.0 37.4 L63.5 37.4 L63.0 37.4 L62.5 37.4 L62.0 37.4 L61.5 37.4 L61.0 37.4 L60.5 40.1 L60.0 40.2 L59.5 39.1 L59.0 38.8 L58.5 39.6 L58.0 40.1 L57.5 39.4 L57.0 39.0 L56.5 39.5 L56.0 40.3 L55.5 39.6 L55.0 38.6 L54.5 40.0 L54.0 39.8 L53.5 39.7 L53.0 38.7 L52.5 39.9 L52.0 41.6 L51.5 40.5 L51.0 37.4 L50.5 37.4 L50.0 37.4 L49.5 38.7 L49.0 40.1 L48.5 40.2 L48.0 39.3 L47.5 38.5 L47.0 39.8 L46.5 40.0 L46.0 39.3 L45.5 38.8 L45.0 39.5 L44.5 39.9 L44.0 39.7 L43.5 37.4 L43.0 37.4 L42.5 37.4 L42.0 37.4 L41.5 37.4 L41.0 37.4 L40.5 37.4 L40.0 37.4 L39.5 37.4 L39.0 37.4 L38.5 39.6 L38.0 39.9 L37.5 39.6 L37.0 38.8 L36.5 39.5 L36.0 40.2 L35.5 39.7 L35.0 38.7 L34.5 39.9 L34.0 39.9 L33.5 39.3 L33.0 38.8 L32.5 40.0 L32.0 40.0 L31.5 39.2 L31.0 38.4 L30.5 39.7 L30.0 41.5 L29.5 40.8 L29.0 37.4 L28.5 37.4 L28.0 37.4 L27.5 38.7 L27.0 39.7 L26.5 39.9 L26.0 39.2 L25.5 39.0 L25.0 39.7 L24.5 39.8 L24.0 39.3 L23.5 39.0 L23.0 40.0 L22.5 40.0 L22.0 39.4 L21.5 37.4 L21.0 37.4 L20.5 37.4 L20.0 37.4 L19.5 37.4 L19.0 37.4 L18.5 37.4 L18.0 37.4 L17.5 37.4 L17.0 37.4 L16.5 39.9 L16.0 40.0 L15.5 39.2 L15.0 38.6 L14.5 39.8 L14.0 39.9 L13.5 39.8 L13.0 38.8 L12.5 39.7 L12.0 40.0 L11.5 39.2 L11.0 38.8 L10.5 39.6 L10.0 40.2 L9.5 39.6 L9.0 38.8 L8.5 40.0 L8.0 41.6 L7.5 40.8 L7.0 37.4 L6.5 37.4 L6.0 37.4 L5.5 38.9 L5.0 39.8 L4.5 40.3 L4.0 39.5 L3.5 38.5 L3.0 40.0 L2.5 39.8 L2.0 39.4 L1.5 38.6 L1.0 39.9 L0.5 39.9 L0.0 39.4Z"/></svg>
<div style="left:471px;top:118px;width:88px;height:44px;background:#92a6ff;"></div>
<div style="left:471px;top:132px;width:88px;height:1px;background:rgba(0,0,0,0.28);"></div>
<div style="left:471px;top:118px;width:1px;height:44px;background:rgba(0,0,0,0.3);"></div>
<div style="left:482px;top:133px;width:1px;height:29px;background:rgba(0,0,0,0.13);"></div>
<div style="left:493px;top:133px;width:1px;height:29px;background:rgba(0,0,0,0.13);"></div>
<div style="left:504px;top:133px;width:1px;height:29px;background:rgba(0,0,0,0.13);"></div>
<div style="left:515px;top:133px;width:1px;height:29px;background:rgba(0,0,0,0.13);"></div>
<div style="left:526px;top:133px;width:1px;height:29px;background:rgba(0,0,0,0.13);"></div>
<div style="left:537px;top:133px;width:1px;height:29px;background:rgba(0,0,0,0.13);"></div>
<div style="left:548px;top:133px;width:1px;height:29px;background:rgba(0,0,0,0.13);"></div>
<svg style="position:absolute;left:472px;top:118px" width="86" height="44" fill="#1c1c2a"><path d="M0.0 18.7 L0.5 17.5 L1.0 17.8 L1.5 19.2 L2.0 18.4 L2.5 17.6 L3.0 17.7 L3.5 18.7 L4.0 18.7 L4.5 17.5 L5.0 17.9 L5.5 19.2 L6.0 20.4 L6.5 20.4 L7.0 20.4 L7.5 18.2 L8.0 17.6 L8.5 18.0 L9.0 18.8 L9.5 18.2 L10.0 17.5 L10.5 18.2 L11.0 19.1 L11.5 18.5 L12.0 17.5 L12.5 18.1 L13.0 18.9 L13.5 18.4 L14.0 17.9 L14.5 17.7 L15.0 18.9 L15.5 18.5 L16.0 17.5 L16.5 17.7 L17.0 20.4 L17.5 20.4 L18.0 20.4 L18.5 20.4 L19.0 20.4 L19.5 20.4 L20.0 20.4 L20.5 20.4 L21.0 20.4 L21.5 20.4 L22.0 18.5 L22.5 17.9 L23.0 18.0 L23.5 18.6 L24.0 18.3 L24.5 17.8 L25.0 17.9 L25.5 18.8 L26.0 18.7 L26.5 18.0 L27.0 17.6 L27.5 18.8 L28.0 20.4 L28.5 20.4 L29.0 20.4 L29.5 18.8 L30.0 17.8 L30.5 17.7 L31.0 19.1 L31.5 18.4 L32.0 17.9 L32.5 18.0 L33.0 18.9 L33.5 18.4 L34.0 17.5 L34.5 17.8 L35.0 18.8 L35.5 18.7 L36.0 17.5 L36.5 18.1 L37.0 18.9 L37.5 18.2 L38.0 17.9 L38.5 18.0 L39.0 20.4 L39.5 20.4 L40.0 20.4 L40.5 20.4 L41.0 20.4 L41.5 20.4 L42.0 20.4 L42.5 20.4 L43.0 20.4 L43.5 20.4 L44.0 18.7 L44.5 17.9 L45.0 17.9 L45.5 19.1 L46.0 18.3 L46.5 17.6 L47.0 18.1 L47.5 18.7 L48.0 18.3 L48.5 17.9 L49.0 18.1 L49.5 19.0 L50.0 20.4 L50.5 20.4 L51.0 20.4 L51.5 18.5 L52.0 17.6 L52.5 17.9 L53.0 18.6 L53.5 18.3 L54.0 17.9 L54.5 17.7 L55.0 18.6 L55.5 18.5 L56.0 17.5 L56.5 18.1 L57.0 19.0 L57.5 18.7 L58.0 17.8 L58.5 18.2 L59.0 19.1 L59.5 18.5 L60.0 17.9 L60.5 17.6 L61.0 20.4 L61.5 20.4 L62.0 20.4 L62.5 20.4 L63.0 20.4 L63.5 20.4 L64.0 20.4 L64.5 20.4 L65.0 20.4 L65.5 20.4 L66.0 18.7 L66.5 17.8 L67.0 17.9 L67.5 18.8 L68.0 18.9 L68.5 18.0 L69.0 18.0 L69.5 18.7 L70.0 18.5 L70.5 18.0 L71.0 17.7 L71.5 18.7 L72.0 20.4 L72.5 20.4 L73.0 20.4 L73.5 18.7 L74.0 17.8 L74.5 17.7 L75.0 18.8 L75.5 18.6 L76.0 17.8 L76.5 17.8 L77.0 19.0 L77.5 18.8 L78.0 17.9 L78.5 17.6 L79.0 18.7 L79.5 18.8 L80.0 17.9 L80.5 17.7 L81.0 18.6 L81.5 18.7 L82.0 18.1 L82.5 17.9 L83.0 20.4 L83.5 20.4 L84.0 20.4 L84.5 20.4 L85.0 20.4 L85.5 20.4 L86.0 20.4 L86.0 22.2 L85.5 22.2 L85.0 22.2 L84.5 22.2 L84.0 22.2 L83.5 22.2 L83.0 22.2 L82.5 24.7 L82.0 24.5 L81.5 23.9 L81.0 24.0 L80.5 24.9 L80.0 24.7 L79.5 23.8 L79.0 23.9 L78.5 25.0 L78.0 24.7 L77.5 23.8 L77.0 23.6 L76.5 24.8 L76.0 24.8 L75.5 24.0 L75.0 23.8 L74.5 26.2 L74.0 26.1 L73.5 25.2 L73.0 22.2 L72.5 22.2 L72.0 22.2 L71.5 23.9 L71.0 24.9 L70.5 24.6 L70.0 24.1 L69.5 23.9 L69.0 24.6 L68.5 24.6 L68.0 23.7 L67.5 23.8 L67.0 24.7 L66.5 24.8 L66.0 23.9 L65.5 22.2 L65.0 22.2 L64.5 22.2 L64.0 22.2 L63.5 22.2 L63.0 22.2 L62.5 22.2 L62.0 22.2 L61.5 22.2 L61.0 22.2 L60.5 25.0 L60.0 24.7 L59.5 24.1 L59.0 23.5 L58.5 24.4 L58.0 24.8 L57.5 23.9 L57.0 23.6 L56.5 24.5 L56.0 25.1 L55.5 24.1 L55.0 24.0 L54.5 24.9 L54.0 24.7 L53.5 24.3 L53.0 24.0 L52.5 24.7 L52.0 26.3 L51.5 25.4 L51.0 22.2 L50.5 22.2 L50.0 22.2 L49.5 23.6 L49.0 24.5 L48.5 24.7 L48.0 24.3 L47.5 23.9 L47.0 24.5 L46.5 25.0 L46.0 24.3 L45.5 23.5 L45.0 24.7 L44.5 24.7 L44.0 23.9 L43.5 22.2 L43.0 22.2 L42.5 22.2 L42.0 22.2 L41.5 22.2 L41.0 22.2 L40.5 22.2 L40.0 22.2 L39.5 22.2 L39.0 22.2 L38.5 24.6 L38.0 24.7 L37.5 24.4 L37.0 23.7 L36.5 24.5 L36.0 25.1 L35.5 23.9 L35.0 23.8 L34.5 24.8 L34.0 25.1 L33.5 24.2 L33.0 23.7 L32.5 24.6 L32.0 24.7 L31.5 24.2 L31.0 23.5 L30.5 24.9 L30.0 26.1 L29.5 25.1 L29.0 22.2 L28.5 22.2 L28.0 22.2 L27.5 23.8 L27.0 25.0 L26.5 24.6 L26.0 23.9 L25.5 23.8 L25.0 24.7 L24.5 24.8 L24.0 24.3 L23.5 24.0 L23.0 24.6 L22.5 24.7 L22.0 24.1 L21.5 22.2 L21.0 22.2 L20.5 22.2 L20.0 22.2 L19.5 22.2 L19.0 22.2 L18.5 22.2 L18.0 22.2 L17.5 22.2 L17.0 22.2 L16.5 24.9 L16.0 25.1 L15.5 24.1 L15.0 23.7 L14.5 24.9 L14.0 24.7 L13.5 24.2 L13.0 23.7 L12.5 24.5 L12.0 25.1 L11.5 24.1 L11.0 23.5 L10.5 24.4 L10.0 25.1 L9.5 24.4 L9.0 23.8 L8.5 24.6 L8.0 26.3 L7.5 25.7 L7.0 22.2 L6.5 22.2 L6.0 22.2 L5.5 23.4 L5.0 24.7 L4.5 25.1 L4.0 23.9 L3.5 23.9 L3.0 24.9 L2.5 25.0 L2.0 24.2 L1.5 23.4 L1.0 24.8 L0.5 25.1 L0.0 23.9Z"/><path d="M0.0 33.5 L0.5 33.2 L1.0 32.9 L1.5 34.3 L2.0 33.6 L2.5 33.0 L3.0 33.1 L3.5 33.9 L4.0 33.5 L4.5 33.0 L5.0 33.0 L5.5 34.2 L6.0 35.6 L6.5 35.6 L7.0 35.6 L7.5 33.6 L8.0 32.7 L8.5 33.4 L9.0 34.3 L9.5 33.4 L10.0 32.9 L10.5 33.2 L11.0 34.0 L11.5 33.4 L12.0 32.8 L12.5 32.9 L13.0 34.2 L13.5 33.7 L14.0 33.1 L14.5 33.2 L15.0 34.0 L15.5 33.4 L16.0 32.9 L16.5 33.4 L17.0 35.6 L17.5 35.6 L18.0 35.6 L18.5 35.6 L19.0 35.6 L19.5 35.6 L20.0 35.6 L20.5 35.6 L21.0 35.6 L21.5 35.6 L22.0 33.8 L22.5 33.1 L23.0 32.9 L23.5 34.2 L24.0 33.7 L24.5 33.0 L25.0 33.3 L25.5 34.1 L26.0 33.9 L26.5 32.7 L27.0 33.1 L27.5 33.9 L28.0 35.6 L28.5 35.6 L29.0 35.6 L29.5 33.5 L30.0 32.8 L30.5 33.3 L31.0 34.0 L31.5 33.5 L32.0 32.8 L32.5 33.3 L33.0 33.8 L33.5 33.9 L34.0 32.9 L34.5 33.3 L35.0 34.2 L35.5 33.8 L36.0 33.1 L36.5 33.3 L37.0 34.3 L37.5 33.8 L38.0 33.2 L38.5 33.0 L39.0 35.6 L39.5 35.6 L40.0 35.6 L40.5 35.6 L41.0 35.6 L41.5 35.6 L42.0 35.6 L42.5 35.6 L43.0 35.6 L43.5 35.6 L44.0 33.8 L44.5 33.2 L45.0 33.3 L45.5 34.2 L46.0 34.0 L46.5 33.2 L47.0 32.9 L47.5 34.2 L48.0 33.6 L48.5 32.8 L49.0 33.3 L49.5 34.3 L50.0 35.6 L50.5 35.6 L51.0 35.6 L51.5 33.5 L52.0 33.2 L52.5 32.9 L53.0 34.0 L53.5 33.6 L54.0 33.1 L54.5 33.1 L55.0 34.0 L55.5 33.8 L56.0 33.0 L56.5 33.2 L57.0 33.9 L57.5 33.9 L58.0 33.1 L58.5 33.1 L59.0 34.1 L59.5 33.9 L60.0 33.1 L60.5 33.3 L61.0 35.6 L61.5 35.6 L62.0 35.6 L62.5 35.6 L63.0 35.6 L63.5 35.6 L64.0 35.6 L64.5 35.6 L65.0 35.6 L65.5 35.6 L66.0 33.9 L66.5 32.8 L67.0 33.3 L67.5 33.8 L68.0 33.7 L68.5 32.9 L69.0 32.9 L69.5 34.3 L70.0 33.6 L70.5 33.1 L71.0 32.8 L71.5 34.2 L72.0 35.6 L72.5 35.6 L73.0 35.6 L73.5 33.9 L74.0 33.2 L74.5 33.2 L75.0 33.9 L75.5 33.9 L76.0 33.2 L76.5 32.9 L77.0 34.1 L77.5 33.8 L78.0 33.1 L78.5 32.9 L79.0 34.0 L79.5 33.8 L80.0 32.9 L80.5 33.2 L81.0 33.8 L81.5 33.7 L82.0 32.9 L82.5 32.8 L83.0 35.6 L83.5 35.6 L84.0 35.6 L84.5 35.6 L85.0 35.6 L85.5 35.6 L86.0 35.6 L86.0 37.4 L85.5 37.4 L85.0 37.4 L84.5 37.4 L84.0 37.4 L83.5 37.4 L83.0 37.4 L82.5 40.2 L82.0 40.1 L81.5 39.3 L81.0 39.2 L80.5 39.8 L80.0 40.1 L79.5 39.2 L79.0 39.0 L78.5 40.1 L78.0 39.9 L77.5 39.2 L77.0 38.9 L76.5 40.1 L76.0 39.8 L75.5 39.1 L75.0 39.1 L74.5 41.1 L74.0 41.1 L73.5 40.4 L73.0 37.4 L72.5 37.4 L72.0 37.4 L71.5 38.8 L71.0 40.2 L70.5 39.9 L70.0 39.4 L69.5 38.7 L69.0 40.1 L68.5 40.1 L68.0 39.3 L67.5 39.2 L67.0 39.7 L66.5 40.2 L66.0 39.1 L65.5 37.4 L65.0 37.4 L64.5 37.4 L64.0 37.4 L63.5 37.4 L63.0 37.4 L62.5 37.4 L62.0 37.4 L61.5 37.4 L61.0 37.4 L60.5 39.7 L60.0 39.9 L59.5 39.1 L59.0 38.9 L58.5 39.9 L58.0 39.9 L57.5 39.1 L57.0 39.1 L56.5 39.8 L56.0 40.0 L55.5 39.2 L55.0 39.0 L54.5 39.9 L54.0 39.9 L53.5 39.4 L53.0 39.0 L52.5 40.1 L52.0 41.1 L51.5 40.8 L51.0 37.4 L50.5 37.4 L50.0 37.4 L49.5 38.7 L49.0 39.7 L48.5 40.2 L48.0 39.4 L47.5 38.8 L47.0 40.1 L46.5 39.8 L46.0 39.0 L45.5 38.8 L45.0 39.7 L44.5 39.8 L44.0 39.2 L43.5 37.4 L43.0 37.4 L42.5 37.4 L42.0 37.4 L41.5 37.4 L41.0 37.4 L40.5 37.4 L40.0 37.4 L39.5 37.4 L39.0 37.4 L38.5 40.0 L38.0 39.8 L37.5 39.2 L37.0 38.7 L36.5 39.7 L36.0 39.9 L35.5 39.2 L35.0 38.8 L34.5 39.7 L34.0 40.1 L33.5 39.1 L33.0 39.2 L32.5 39.7 L32.0 40.2 L31.5 39.5 L31.0 39.0 L30.5 39.7 L30.0 41.5 L29.5 40.8 L29.0 37.4 L28.5 37.4 L28.0 37.4 L27.5 39.1 L27.0 39.9 L26.5 40.3 L26.0 39.1 L25.5 38.9 L25.0 39.7 L24.5 40.0 L24.0 39.3 L23.5 38.8 L23.0 40.1 L22.5 39.9 L22.0 39.2 L21.5 37.4 L21.0 37.4 L20.5 37.4 L20.0 37.4 L19.5 37.4 L19.0 37.4 L18.5 37.4 L18.0 37.4 L17.5 37.4 L17.0 37.4 L16.5 39.6 L16.0 40.1 L15.5 39.6 L15.0 39.0 L14.5 39.8 L14.0 39.9 L13.5 39.3 L13.0 38.8 L12.5 40.1 L12.0 40.2 L11.5 39.6 L11.0 39.0 L10.5 39.8 L10.0 40.1 L9.5 39.6 L9.0 38.7 L8.5 39.6 L8.0 41.6 L7.5 40.7 L7.0 37.4 L6.5 37.4 L6.0 37.4 L5.5 38.8 L5.0 40.0 L4.5 40.0 L4.0 39.5 L3.5 39.1 L3.0 39.9 L2.5 40.0 L2.0 39.4 L1.5 38.7 L1.0 40.1 L0.5 39.8 L0.0 39.5Z"/></svg>
<div style="left:559px;top:118px;width:88px;height:44px;background:#92a6ff;"></div>
<div style="left:559px;top:132px;width:88px;height:1px;background:rgba(0,0,0,0.28);"></div>
<div style="left:559px;top:118px;width:1px;height:44px;background:rgba(0,0,0,0.3);"></div>
<div style="left:570px;top:133px;width:1px;height:29px;background:rgba(0,0,0,0.13);"></div>
<div style="left:581px;top:133px;width:1px;height:29px;background:rgba(0,0,0,0.13);"></div>
<div style="left:592px;top:133px;width:1px;height:29px;background:rgba(0,0,0,0.13);"></div>
<div style="left:603px;top:133px;width:1px;height:29px;background:rgba(0,0,0,0.13);"></div>
<div style="left:614px;top:133px;width:1px;height:29px;background:rgba(0,0,0,0.13);"></div>
<div style="left:625px;top:133px;width:1px;height:29px;background:rgba(0,0,0,0.13);"></div>
<div style="left:636px;top:133px;width:1px;height:29px;background:rgba(0,0,0,0.13);"></div>
<svg style="position:absolute;left:560px;top:118px" width="86" height="44" fill="#1c1c2a"><path d="M0.0 18.9 L0.5 17.7 L1.0 18.0 L1.5 18.8 L2.0 18.5 L2.5 17.9 L3.0 17.7 L3.5 19.0 L4.0 18.8 L4.5 17.8 L5.0 17.7 L5.5 18.9 L6.0 20.4 L6.5 20.4 L7.0 20.4 L7.5 18.8 L8.0 17.9 L8.5 18.0 L9.0 18.9 L9.5 18.8 L10.0 17.8 L10.5 18.1 L11.0 19.0 L11.5 18.8 L12.0 18.1 L12.5 17.8 L13.0 18.9 L13.5 18.7 L14.0 17.6 L14.5 17.7 L15.0 19.0 L15.5 18.6 L16.0 17.9 L16.5 18.1 L17.0 20.4 L17.5 20.4 L18.0 20.4 L18.5 20.4 L19.0 20.4 L19.5 20.4 L20.0 20.4 L20.5 20.4 L21.0 20.4 L21.5 20.4 L22.0 18.6 L22.5 18.0 L23.0 18.0 L23.5 18.9 L24.0 18.6 L24.5 17.5 L25.0 17.7 L25.5 18.9 L26.0 18.5 L26.5 18.0 L27.0 17.6 L27.5 18.6 L28.0 20.4 L28.5 20.4 L29.0 20.4 L29.5 18.5 L30.0 17.6 L30.5 17.9 L31.0 18.5 L31.5 18.9 L32.0 18.0 L32.5 17.7 L33.0 18.7 L33.5 18.7 L34.0 17.9 L34.5 18.0 L35.0 18.9 L35.5 18.9 L36.0 17.8 L36.5 17.8 L37.0 18.9 L37.5 18.6 L38.0 18.0 L38.5 18.0 L39.0 20.4 L39.5 20.4 L40.0 20.4 L40.5 20.4 L41.0 20.4 L41.5 20.4 L42.0 20.4 L42.5 20.4 L43.0 20.4 L43.5 20.4 L44.0 18.7 L44.5 17.7 L45.0 18.1 L45.5 18.5 L46.0 18.7 L46.5 17.5 L47.0 17.7 L47.5 18.4 L48.0 19.0 L48.5 17.7 L49.0 17.5 L49.5 18.9 L50.0 20.4 L50.5 20.4 L51.0 20.4 L51.5 18.5 L52.0 18.1 L52.5 18.1 L53.0 18.7 L53.5 18.8 L54.0 17.7 L54.5 18.0 L55.0 18.4 L55.5 19.0 L56.0 18.1 L56.5 17.9 L57.0 18.9 L57.5 18.6 L58.0 18.0 L58.5 18.0 L59.0 18.5 L59.5 18.8 L60.0 17.5 L60.5 17.5 L61.0 20.4 L61.5 20.4 L62.0 20.4 L62.5 20.4 L63.0 20.4 L63.5 20.4 L64.0 20.4 L64.5 20.4 L65.0 20.4 L65.5 20.4 L66.0 18.7 L66.5 18.1 L67.0 17.6 L67.5 18.6 L68.0 18.9 L68.5 17.8 L69.0 17.5 L69.5 18.6 L70.0 18.9 L70.5 17.7 L71.0 17.8 L71.5 18.6 L72.0 20.4 L72.5 20.4 L73.0 20.4 L73.5 18.9 L74.0 17.7 L74.5 18.1 L75.0 18.4 L75.5 18.8 L76.0 17.9 L76.5 17.8 L77.0 18.8 L77.5 19.0 L78.0 18.0 L78.5 17.5 L79.0 18.5 L79.5 18.8 L80.0 17.9 L80.5 17.9 L81.0 18.6 L81.5 18.7 L82.0 18.0 L82.5 17.7 L83.0 20.4 L83.5 20.4 L84.0 20.4 L84.5 20.4 L85.0 20.4 L85.5 20.4 L86.0 20.4 L86.0 22.2 L85.5 22.2 L85.0 22.2 L84.5 22.2 L84.0 22.2 L83.5 22.2 L83.0 22.2 L82.5 24.9 L82.0 24.6 L81.5 23.9 L81.0 24.0 L80.5 24.7 L80.0 24.7 L79.5 23.8 L79.0 24.1 L78.5 25.1 L78.0 24.6 L77.5 23.6 L77.0 23.8 L76.5 24.8 L76.0 24.7 L75.5 23.8 L75.0 24.2 L74.5 25.8 L74.0 26.2 L73.5 25.0 L73.0 22.2 L72.5 22.2 L72.0 22.2 L71.5 24.0 L71.0 24.8 L70.5 24.9 L70.0 23.7 L69.5 24.0 L69.0 25.1 L68.5 24.8 L68.0 23.7 L67.5 24.0 L67.0 25.0 L66.5 24.5 L66.0 23.9 L65.5 22.2 L65.0 22.2 L64.5 22.2 L64.0 22.2 L63.5 22.2 L63.0 22.2 L62.5 22.2 L62.0 22.2 L61.5 22.2 L61.0 22.2 L60.5 25.1 L60.0 25.1 L59.5 23.8 L59.0 24.1 L58.5 24.6 L58.0 24.6 L57.5 24.0 L57.0 23.7 L56.5 24.7 L56.0 24.5 L55.5 23.6 L55.0 24.2 L54.5 24.6 L54.0 24.9 L53.5 23.8 L53.0 23.9 L52.5 25.8 L52.0 25.8 L51.5 25.4 L51.0 22.2 L50.5 22.2 L50.0 22.2 L49.5 23.7 L49.0 25.1 L48.5 24.9 L48.0 23.6 L47.5 24.2 L47.0 24.9 L46.5 25.1 L46.0 23.9 L45.5 24.1 L45.0 24.5 L44.5 24.9 L44.0 23.9 L43.5 22.2 L43.0 22.2 L42.5 22.2 L42.0 22.2 L41.5 22.2 L41.0 22.2 L40.5 22.2 L40.0 22.2 L39.5 22.2 L39.0 22.2 L38.5 24.6 L38.0 24.6 L37.5 24.0 L37.0 23.7 L36.5 24.8 L36.0 24.8 L35.5 23.7 L35.0 23.7 L34.5 24.6 L34.0 24.7 L33.5 23.9 L33.0 23.9 L32.5 24.9 L32.0 24.6 L31.5 23.7 L31.0 24.1 L30.5 26.0 L30.0 26.3 L29.5 25.4 L29.0 22.2 L28.5 22.2 L28.0 22.2 L27.5 24.0 L27.0 25.0 L26.5 24.6 L26.0 24.1 L25.5 23.7 L25.0 24.9 L24.5 25.1 L24.0 24.0 L23.5 23.7 L23.0 24.6 L22.5 24.6 L22.0 24.0 L21.5 22.2 L21.0 22.2 L20.5 22.2 L20.0 22.2 L19.5 22.2 L19.0 22.2 L18.5 22.2 L18.0 22.2 L17.5 22.2 L17.0 22.2 L16.5 24.5 L16.0 24.7 L15.5 24.0 L15.0 23.6 L14.5 24.9 L14.0 25.0 L13.5 23.9 L13.0 23.7 L12.5 24.8 L12.0 24.5 L11.5 23.8 L11.0 23.6 L10.5 24.5 L10.0 24.8 L9.5 23.8 L9.0 23.7 L8.5 25.9 L8.0 26.0 L7.5 25.1 L7.0 22.2 L6.5 22.2 L6.0 22.2 L5.5 23.7 L5.0 24.9 L4.5 24.8 L4.0 23.8 L3.5 23.6 L3.0 24.9 L2.5 24.7 L2.0 24.1 L1.5 23.8 L1.0 24.6 L0.5 24.9 L0.0 23.7Z"/><path d="M0.0 34.0 L0.5 33.1 L1.0 33.2 L1.5 33.8 L2.0 33.9 L2.5 33.1 L3.0 32.9 L3.5 34.1 L4.0 33.8 L4.5 33.2 L5.0 33.2 L5.5 33.7 L6.0 35.6 L6.5 35.6 L7.0 35.6 L7.5 33.9 L8.0 33.1 L8.5 33.0 L9.0 33.7 L9.5 34.0 L10.0 33.0 L10.5 33.3 L11.0 33.9 L11.5 34.1 L12.0 32.9 L12.5 33.2 L13.0 33.8 L13.5 34.0 L14.0 32.7 L14.5 32.8 L15.0 34.2 L15.5 33.9 L16.0 33.0 L16.5 32.8 L17.0 35.6 L17.5 35.6 L18.0 35.6 L18.5 35.6 L19.0 35.6 L19.5 35.6 L20.0 35.6 L20.5 35.6 L21.0 35.6 L21.5 35.6 L22.0 34.0 L22.5 33.1 L23.0 32.7 L23.5 33.9 L24.0 34.1 L24.5 33.1 L25.0 32.8 L25.5 33.8 L26.0 33.9 L26.5 32.9 L27.0 32.8 L27.5 33.9 L28.0 35.6 L28.5 35.6 L29.0 35.6 L29.5 34.0 L30.0 32.8 L30.5 33.1 L31.0 34.0 L31.5 34.1 L32.0 33.0 L32.5 32.8 L33.0 33.9 L33.5 33.8 L34.0 33.0 L34.5 33.2 L35.0 33.8 L35.5 33.8 L36.0 32.8 L36.5 33.2 L37.0 33.6 L37.5 33.9 L38.0 33.3 L38.5 32.9 L39.0 35.6 L39.5 35.6 L40.0 35.6 L40.5 35.6 L41.0 35.6 L41.5 35.6 L42.0 35.6 L42.5 35.6 L43.0 35.6 L43.5 35.6 L44.0 33.6 L44.5 33.1 L45.0 32.8 L45.5 33.8 L46.0 34.2 L46.5 33.0 L47.0 32.9 L47.5 33.8 L48.0 34.0 L48.5 33.0 L49.0 32.8 L49.5 33.9 L50.0 35.6 L50.5 35.6 L51.0 35.6 L51.5 33.7 L52.0 32.9 L52.5 33.2 L53.0 33.6 L53.5 34.2 L54.0 33.2 L54.5 32.9 L55.0 33.8 L55.5 34.1 L56.0 33.0 L56.5 32.9 L57.0 34.0 L57.5 34.2 L58.0 33.0 L58.5 32.9 L59.0 34.1 L59.5 33.8 L60.0 32.9 L60.5 33.0 L61.0 35.6 L61.5 35.6 L62.0 35.6 L62.5 35.6 L63.0 35.6 L63.5 35.6 L64.0 35.6 L64.5 35.6 L65.0 35.6 L65.5 35.6 L66.0 33.9 L66.5 33.1 L67.0 33.0 L67.5 33.6 L68.0 34.0 L68.5 32.8 L69.0 32.8 L69.5 33.5 L70.0 34.1 L70.5 33.3 L71.0 32.8 L71.5 33.9 L72.0 35.6 L72.5 35.6 L73.0 35.6 L73.5 34.2 L74.0 33.1 L74.5 32.9 L75.0 33.6 L75.5 33.8 L76.0 33.3 L76.5 33.3 L77.0 33.5 L77.5 34.2 L78.0 33.2 L78.5 33.0 L79.0 33.8 L79.5 33.8 L80.0 33.3 L80.5 33.0 L81.0 34.0 L81.5 33.8 L82.0 33.3 L82.5 33.0 L83.0 35.6 L83.5 35.6 L84.0 35.6 L84.5 35.6 L85.0 35.6 L85.5 35.6 L86.0 35.6 L86.0 37.4 L85.5 37.4 L85.0 37.4 L84.5 37.4 L84.0 37.4 L83.5 37.4 L83.0 37.4 L82.5 40.0 L82.0 39.7 L81.5 39.2 L81.0 39.0 L80.5 40.0 L80.0 39.7 L79.5 39.2 L79.0 39.2 L78.5 40.0 L78.0 39.8 L77.5 38.8 L77.0 39.5 L76.5 39.7 L76.0 39.7 L75.5 39.2 L75.0 39.4 L74.5 41.4 L74.0 41.2 L73.5 40.1 L73.0 37.4 L72.5 37.4 L72.0 37.4 L71.5 39.1 L71.0 40.2 L70.5 39.7 L70.0 38.9 L69.5 39.5 L69.0 40.2 L68.5 40.2 L68.0 39.0 L67.5 39.4 L67.0 40.0 L66.5 39.9 L66.0 39.1 L65.5 37.4 L65.0 37.4 L64.5 37.4 L64.0 37.4 L63.5 37.4 L63.0 37.4 L62.5 37.4 L62.0 37.4 L61.5 37.4 L61.0 37.4 L60.5 40.0 L60.0 40.1 L59.5 39.2 L59.0 38.9 L58.5 40.1 L58.0 40.0 L57.5 38.8 L57.0 39.0 L56.5 40.1 L56.0 40.0 L55.5 38.9 L55.0 39.2 L54.5 40.1 L54.0 39.8 L53.5 38.8 L53.0 39.4 L52.5 41.1 L52.0 41.4 L51.5 40.6 L51.0 37.4 L50.5 37.4 L50.0 37.4 L49.5 39.1 L49.0 40.2 L48.5 40.0 L48.0 39.0 L47.5 39.2 L47.0 40.1 L46.5 40.0 L46.0 38.8 L45.5 39.2 L45.0 40.2 L44.5 39.9 L44.0 39.4 L43.5 37.4 L43.0 37.4 L42.5 37.4 L42.0 37.4 L41.5 37.4 L41.0 37.4 L40.5 37.4 L40.0 37.4 L39.5 37.4 L39.0 37.4 L38.5 40.1 L38.0 39.7 L37.5 39.1 L37.0 39.4 L36.5 39.8 L36.0 40.2 L35.5 39.2 L35.0 39.2 L34.5 39.8 L34.0 40.0 L33.5 39.2 L33.0 39.1 L32.5 40.2 L32.0 40.0 L31.5 38.9 L31.0 39.0 L30.5 41.2 L30.0 41.5 L29.5 40.3 L29.0 37.4 L28.5 37.4 L28.0 37.4 L27.5 39.1 L27.0 40.2 L26.5 40.1 L26.0 39.1 L25.5 39.2 L25.0 40.2 L24.5 39.9 L24.0 38.9 L23.5 39.1 L23.0 40.3 L22.5 39.9 L22.0 39.0 L21.5 37.4 L21.0 37.4 L20.5 37.4 L20.0 37.4 L19.5 37.4 L19.0 37.4 L18.5 37.4 L18.0 37.4 L17.5 37.4 L17.0 37.4 L16.5 40.2 L16.0 40.0 L15.5 39.1 L15.0 38.8 L14.5 40.2 L14.0 40.3 L13.5 39.0 L13.0 39.2 L12.5 39.8 L12.0 40.1 L11.5 38.9 L11.0 39.1 L10.5 39.7 L10.0 40.0 L9.5 39.0 L9.0 39.3 L8.5 41.3 L8.0 41.2 L7.5 40.4 L7.0 37.4 L6.5 37.4 L6.0 37.4 L5.5 39.3 L5.0 39.8 L4.5 39.8 L4.0 39.2 L3.5 38.9 L3.0 40.1 L2.5 39.9 L2.0 39.1 L1.5 39.2 L1.0 39.8 L0.5 39.9 L0.0 39.0Z"/></svg>
<div style="left:647px;top:118px;width:88px;height:44px;background:#92a6ff;"></div>
<div style="left:647px;top:132px;width:88px;height:1px;background:rgba(0,0,0,0.28);"></div>
<div style="left:647px;top:118px;width:1px;height:44px;background:rgba(0,0,0,0.3);"></div>
<div style="left:658px;top:133px;width:1px;height:29px;background:rgba(0,0,0,0.13);"></div>
<div style="left:669px;top:133px;width:1px;height:29px;background:rgba(0,0,0,0.13);"></div>
<div style="left:680px;top:133px;width:1px;height:29px;background:rgba(0,0,0,0.13);"></div>
<div style="left:691px;top:133px;width:1px;height:29px;background:rgba(0,0,0,0.13);"></div>
<div style="left:702px;top:133px;width:1px;height:29px;background:rgba(0,0,0,0.13);"></div>
<div style="left:713px;top:133px;width:1px;height:29px;background:rgba(0,0,0,0.13);"></div>
<div style="left:724px;top:133px;width:1px;height:29px;background:rgba(0,0,0,0.13);"></div>
<svg style="position:absolute;left:648px;top:118px" width="86" height="44" fill="#1c1c2a"><path d="M0.0 18.6 L0.5 17.7 L1.0 17.7 L1.5 18.4 L2.0 18.9 L2.5 17.9 L3.0 17.7 L3.5 18.8 L4.0 18.7 L4.5 18.0 L5.0 17.9 L5.5 18.6 L6.0 20.4 L6.5 20.4 L7.0 20.4 L7.5 19.0 L8.0 18.2 L8.5 17.6 L9.0 18.5 L9.5 19.0 L10.0 17.8 L10.5 17.6 L11.0 18.7 L11.5 18.7 L12.0 18.1 L12.5 17.6 L13.0 18.5 L13.5 18.7 L14.0 17.8 L14.5 17.9 L15.0 18.3 L15.5 18.8 L16.0 17.6 L16.5 17.6 L17.0 20.4 L17.5 20.4 L18.0 20.4 L18.5 20.4 L19.0 20.4 L19.5 20.4 L20.0 20.4 L20.5 20.4 L21.0 20.4 L21.5 20.4 L22.0 19.0 L22.5 17.7 L23.0 17.9 L23.5 18.5 L24.0 19.2 L24.5 17.9 L25.0 17.9 L25.5 18.4 L26.0 19.0 L26.5 17.6 L27.0 17.9 L27.5 18.3 L28.0 20.4 L28.5 20.4 L29.0 20.4 L29.5 18.7 L30.0 18.1 L30.5 18.0 L31.0 18.4 L31.5 18.8 L32.0 18.0 L32.5 17.6 L33.0 18.6 L33.5 19.0 L34.0 17.8 L34.5 17.6 L35.0 18.5 L35.5 18.7 L36.0 17.9 L36.5 17.6 L37.0 18.8 L37.5 19.1 L38.0 18.0 L38.5 17.8 L39.0 20.4 L39.5 20.4 L40.0 20.4 L40.5 20.4 L41.0 20.4 L41.5 20.4 L42.0 20.4 L42.5 20.4 L43.0 20.4 L43.5 20.4 L44.0 18.9 L44.5 17.7 L45.0 17.6 L45.5 18.3 L46.0 19.2 L46.5 18.0 L47.0 17.5 L47.5 18.7 L48.0 18.7 L48.5 17.7 L49.0 17.6 L49.5 18.3 L50.0 20.4 L50.5 20.4 L51.0 20.4 L51.5 18.6 L52.0 17.9 L52.5 17.8 L53.0 18.7 L53.5 19.2 L54.0 18.1 L54.5 17.7 L55.0 18.4 L55.5 18.6 L56.0 17.7 L56.5 18.0 L57.0 18.4 L57.5 18.6 L58.0 17.7 L58.5 17.9 L59.0 18.7 L59.5 18.8 L60.0 17.9 L60.5 17.8 L61.0 20.4 L61.5 20.4 L62.0 20.4 L62.5 20.4 L63.0 20.4 L63.5 20.4 L64.0 20.4 L64.5 20.4 L65.0 20.4 L65.5 20.4 L66.0 19.0 L66.5 17.9 L67.0 18.0 L67.5 18.7 L68.0 19.1 L68.5 18.1 L69.0 17.7 L69.5 18.2 L70.0 18.7 L70.5 18.0 L71.0 18.0 L71.5 18.5 L72.0 20.4 L72.5 20.4 L73.0 20.4 L73.5 19.2 L74.0 18.0 L74.5 17.6 L75.0 18.3 L75.5 18.7 L76.0 17.9 L76.5 18.0 L77.0 18.1 L77.5 19.2 L78.0 18.1 L78.5 17.5 L79.0 18.7 L79.5 18.8 L80.0 18.2 L80.5 17.9 L81.0 18.7 L81.5 18.9 L82.0 17.8 L82.5 17.9 L83.0 20.4 L83.5 20.4 L84.0 20.4 L84.5 20.4 L85.0 20.4 L85.5 20.4 L86.0 20.4 L86.0 22.2 L85.5 22.2 L85.0 22.2 L84.5 22.2 L84.0 22.2 L83.5 22.2 L83.0 22.2 L82.5 24.7 L82.0 24.8 L81.5 23.7 L81.0 23.9 L80.5 24.7 L80.0 24.4 L79.5 23.8 L79.0 23.9 L78.5 25.1 L78.0 24.5 L77.5 23.4 L77.0 24.5 L76.5 24.6 L76.0 24.7 L75.5 23.9 L75.0 24.3 L74.5 26.3 L74.0 25.9 L73.5 24.7 L73.0 22.2 L72.5 22.2 L72.0 22.2 L71.5 24.1 L71.0 24.6 L70.5 24.6 L70.0 23.9 L69.5 24.4 L69.0 24.9 L68.5 24.5 L68.0 23.5 L67.5 23.9 L67.0 24.6 L66.5 24.7 L66.0 23.6 L65.5 22.2 L65.0 22.2 L64.5 22.2 L64.0 22.2 L63.5 22.2 L63.0 22.2 L62.5 22.2 L62.0 22.2 L61.5 22.2 L61.0 22.2 L60.5 24.8 L60.0 24.7 L59.5 23.8 L59.0 23.9 L58.5 24.7 L58.0 24.9 L57.5 24.0 L57.0 24.2 L56.5 24.6 L56.0 24.9 L55.5 24.0 L55.0 24.2 L54.5 24.9 L54.0 24.5 L53.5 23.4 L53.0 23.9 L52.5 26.1 L52.0 26.0 L51.5 25.3 L51.0 22.2 L50.5 22.2 L50.0 22.2 L49.5 24.3 L49.0 25.0 L48.5 24.9 L48.0 23.9 L47.5 23.9 L47.0 25.1 L46.5 24.6 L46.0 23.4 L45.5 24.3 L45.0 25.0 L44.5 24.9 L44.0 23.7 L43.5 22.2 L43.0 22.2 L42.5 22.2 L42.0 22.2 L41.5 22.2 L41.0 22.2 L40.5 22.2 L40.0 22.2 L39.5 22.2 L39.0 22.2 L38.5 24.8 L38.0 24.6 L37.5 23.5 L37.0 23.8 L36.5 25.0 L36.0 24.7 L35.5 23.9 L35.0 24.1 L34.5 25.0 L34.0 24.8 L33.5 23.6 L33.0 24.0 L32.5 25.0 L32.0 24.6 L31.5 23.8 L31.0 24.2 L30.5 25.9 L30.0 25.8 L29.5 25.2 L29.0 22.2 L28.5 22.2 L28.0 22.2 L27.5 24.3 L27.0 24.7 L26.5 25.0 L26.0 23.6 L25.5 24.2 L25.0 24.7 L24.5 24.7 L24.0 23.4 L23.5 24.1 L23.0 24.7 L22.5 24.9 L22.0 23.6 L21.5 22.2 L21.0 22.2 L20.5 22.2 L20.0 22.2 L19.5 22.2 L19.0 22.2 L18.5 22.2 L18.0 22.2 L17.5 22.2 L17.0 22.2 L16.5 25.0 L16.0 25.0 L15.5 23.8 L15.0 24.3 L14.5 24.7 L14.0 24.8 L13.5 23.9 L13.0 24.1 L12.5 25.0 L12.0 24.5 L11.5 23.9 L11.0 23.9 L10.5 25.0 L10.0 24.8 L9.5 23.6 L9.0 24.1 L8.5 26.3 L8.0 25.7 L7.5 24.9 L7.0 22.2 L6.5 22.2 L6.0 22.2 L5.5 24.0 L5.0 24.7 L4.5 24.6 L4.0 23.9 L3.5 23.8 L3.0 24.9 L2.5 24.7 L2.0 23.7 L1.5 24.2 L1.0 24.9 L0.5 24.9 L0.0 24.0Z"/><path d="M0.0 34.0 L0.5 33.2 L1.0 33.2 L1.5 33.8 L2.0 33.8 L2.5 33.0 L3.0 32.8 L3.5 34.0 L4.0 33.8 L4.5 32.9 L5.0 32.9 L5.5 33.5 L6.0 35.6 L6.5 35.6 L7.0 35.6 L7.5 34.0 L8.0 33.2 L8.5 33.0 L9.0 33.7 L9.5 34.0 L10.0 33.3 L10.5 32.7 L11.0 33.5 L11.5 33.8 L12.0 33.2 L12.5 33.2 L13.0 33.7 L13.5 33.8 L14.0 33.1 L14.5 32.8 L15.0 33.7 L15.5 34.0 L16.0 33.4 L16.5 33.1 L17.0 35.6 L17.5 35.6 L18.0 35.6 L18.5 35.6 L19.0 35.6 L19.5 35.6 L20.0 35.6 L20.5 35.6 L21.0 35.6 L21.5 35.6 L22.0 34.1 L22.5 33.0 L23.0 32.9 L23.5 33.7 L24.0 34.2 L24.5 33.3 L25.0 33.1 L25.5 33.6 L26.0 34.4 L26.5 33.4 L27.0 32.8 L27.5 33.8 L28.0 35.6 L28.5 35.6 L29.0 35.6 L29.5 33.9 L30.0 33.1 L30.5 33.1 L31.0 34.0 L31.5 33.8 L32.0 33.3 L32.5 32.7 L33.0 33.7 L33.5 33.9 L34.0 33.3 L34.5 33.1 L35.0 33.8 L35.5 34.2 L36.0 33.2 L36.5 33.1 L37.0 33.6 L37.5 34.1 L38.0 32.9 L38.5 33.1 L39.0 35.6 L39.5 35.6 L40.0 35.6 L40.5 35.6 L41.0 35.6 L41.5 35.6 L42.0 35.6 L42.5 35.6 L43.0 35.6 L43.5 35.6 L44.0 34.2 L44.5 32.9 L45.0 32.8 L45.5 33.7 L46.0 34.3 L46.5 33.0 L47.0 32.9 L47.5 33.5 L48.0 34.2 L48.5 33.3 L49.0 32.8 L49.5 33.7 L50.0 35.6 L50.5 35.6 L51.0 35.6 L51.5 33.9 L52.0 33.0 L52.5 32.7 L53.0 33.4 L53.5 34.0 L54.0 33.3 L54.5 32.7 L55.0 33.9 L55.5 34.4 L56.0 33.2 L56.5 33.0 L57.0 33.9 L57.5 34.4 L58.0 33.2 L58.5 33.2 L59.0 33.8 L59.5 34.4 L60.0 33.2 L60.5 33.1 L61.0 35.6 L61.5 35.6 L62.0 35.6 L62.5 35.6 L63.0 35.6 L63.5 35.6 L64.0 35.6 L64.5 35.6 L65.0 35.6 L65.5 35.6 L66.0 34.1 L66.5 33.2 L67.0 32.9 L67.5 33.8 L68.0 34.1 L68.5 33.3 L69.0 32.9 L69.5 33.9 L70.0 34.5 L70.5 33.1 L71.0 32.9 L71.5 33.5 L72.0 35.6 L72.5 35.6 L73.0 35.6 L73.5 34.1 L74.0 33.3 L74.5 32.8 L75.0 33.6 L75.5 34.3 L76.0 33.5 L76.5 33.1 L77.0 33.4 L77.5 34.0 L78.0 33.1 L78.5 32.8 L79.0 33.7 L79.5 33.9 L80.0 33.2 L80.5 32.9 L81.0 33.6 L81.5 34.2 L82.0 33.3 L82.5 33.2 L83.0 35.6 L83.5 35.6 L84.0 35.6 L84.5 35.6 L85.0 35.6 L85.5 35.6 L86.0 35.6 L86.0 37.4 L85.5 37.4 L85.0 37.4 L84.5 37.4 L84.0 37.4 L83.5 37.4 L83.0 37.4 L82.5 39.8 L82.0 39.7 L81.5 38.8 L81.0 39.4 L80.5 40.1 L80.0 39.8 L79.5 39.1 L79.0 39.3 L78.5 40.2 L78.0 39.9 L77.5 39.0 L77.0 39.6 L76.5 39.9 L76.0 39.5 L75.5 38.7 L75.0 39.4 L74.5 41.5 L74.0 41.0 L73.5 40.2 L73.0 37.4 L72.5 37.4 L72.0 37.4 L71.5 39.5 L71.0 40.1 L70.5 39.9 L70.0 38.5 L69.5 39.1 L69.0 40.1 L68.5 39.7 L68.0 38.9 L67.5 39.2 L67.0 40.1 L66.5 39.8 L66.0 38.9 L65.5 37.4 L65.0 37.4 L64.5 37.4 L64.0 37.4 L63.5 37.4 L63.0 37.4 L62.5 37.4 L62.0 37.4 L61.5 37.4 L61.0 37.4 L60.5 39.9 L60.0 39.8 L59.5 38.6 L59.0 39.2 L58.5 39.8 L58.0 39.8 L57.5 38.6 L57.0 39.1 L56.5 40.0 L56.0 39.8 L55.5 38.6 L55.0 39.1 L54.5 40.3 L54.0 39.7 L53.5 39.0 L53.0 39.6 L52.5 41.6 L52.0 41.3 L51.5 40.4 L51.0 37.4 L50.5 37.4 L50.0 37.4 L49.5 39.3 L49.0 40.2 L48.5 39.7 L48.0 38.8 L47.5 39.5 L47.0 40.1 L46.5 40.0 L46.0 38.7 L45.5 39.3 L45.0 40.2 L44.5 40.1 L44.0 38.8 L43.5 37.4 L43.0 37.4 L42.5 37.4 L42.0 37.4 L41.5 37.4 L41.0 37.4 L40.5 37.4 L40.0 37.4 L39.5 37.4 L39.0 37.4 L38.5 39.9 L38.0 40.1 L37.5 38.9 L37.0 39.4 L36.5 39.9 L36.0 39.8 L35.5 38.8 L35.0 39.2 L34.5 39.9 L34.0 39.7 L33.5 39.1 L33.0 39.3 L32.5 40.3 L32.0 39.7 L31.5 39.2 L31.0 39.0 L30.5 41.2 L30.0 41.2 L29.5 40.4 L29.0 37.4 L28.5 37.4 L28.0 37.4 L27.5 39.2 L27.0 40.2 L26.5 39.6 L26.0 38.6 L25.5 39.4 L25.0 39.9 L24.5 39.7 L24.0 38.8 L23.5 39.3 L23.0 40.1 L22.5 40.0 L22.0 38.9 L21.5 37.4 L21.0 37.4 L20.5 37.4 L20.0 37.4 L19.5 37.4 L19.0 37.4 L18.5 37.4 L18.0 37.4 L17.5 37.4 L17.0 37.4 L16.5 39.9 L16.0 39.6 L15.5 39.0 L15.0 39.3 L14.5 40.2 L14.0 39.9 L13.5 39.2 L13.0 39.3 L12.5 39.8 L12.0 39.8 L11.5 39.2 L11.0 39.5 L10.5 40.3 L10.0 39.7 L9.5 39.0 L9.0 39.3 L8.5 41.3 L8.0 41.1 L7.5 40.3 L7.0 37.4 L6.5 37.4 L6.0 37.4 L5.5 39.5 L5.0 40.1 L4.5 40.1 L4.0 39.2 L3.5 39.0 L3.0 40.2 L2.5 40.0 L2.0 39.2 L1.5 39.2 L1.0 39.8 L0.5 39.8 L0.0 39.0Z"/></svg>
<div style="left:823px;top:118px;width:88px;height:44px;background:#92a6ff;"></div>
<div style="left:823px;top:132px;width:88px;height:1px;background:rgba(0,0,0,0.28);"></div>
<div style="left:823px;top:118px;width:1px;height:44px;background:rgba(0,0,0,0.3);"></div>
<div style="left:834px;top:133px;width:1px;height:29px;background:rgba(0,0,0,0.13);"></div>
<div style="left:845px;top:133px;width:1px;height:29px;background:rgba(0,0,0,0.13);"></div>
<div style="left:856px;top:133px;width:1px;height:29px;background:rgba(0,0,0,0.13);"></div>
<div style="left:867px;top:133px;width:1px;height:29px;background:rgba(0,0,0,0.13);"></div>
<div style="left:878px;top:133px;width:1px;height:29px;background:rgba(0,0,0,0.13);"></div>
<div style="left:889px;top:133px;width:1px;height:29px;background:rgba(0,0,0,0.13);"></div>
<div style="left:900px;top:133px;width:1px;height:29px;background:rgba(0,0,0,0.13);"></div>
<svg style="position:absolute;left:824px;top:118px" width="86" height="44" fill="#1c1c2a"><path d="M0.0 19.4 L0.5 18.3 L1.0 17.8 L1.5 18.4 L2.0 19.4 L2.5 18.4 L3.0 17.4 L3.5 18.3 L4.0 19.3 L4.5 17.9 L5.0 17.5 L5.5 18.5 L6.0 20.4 L6.5 20.4 L7.0 20.4 L7.5 19.2 L8.0 17.9 L8.5 17.5 L9.0 18.5 L9.5 19.0 L10.0 18.1 L10.5 17.9 L11.0 18.5 L11.5 19.1 L12.0 18.0 L12.5 17.8 L13.0 18.1 L13.5 19.0 L14.0 18.4 L14.5 17.5 L15.0 18.5 L15.5 19.3 L16.0 18.3 L16.5 17.6 L17.0 20.4 L17.5 20.4 L18.0 20.4 L18.5 20.4 L19.0 20.4 L19.5 20.4 L20.0 20.4 L20.5 20.4 L21.0 20.4 L21.5 20.4 L22.0 19.5 L22.5 18.0 L23.0 17.9 L23.5 17.9 L24.0 19.5 L24.5 18.3 L25.0 18.0 L25.5 18.4 L26.0 19.0 L26.5 18.4 L27.0 17.9 L27.5 18.0 L28.0 20.4 L28.5 20.4 L29.0 20.4 L29.5 19.5 L30.0 18.4 L30.5 17.6 L31.0 17.9 L31.5 19.2 L32.0 18.0 L32.5 18.0 L33.0 18.0 L33.5 19.1 L34.0 18.4 L34.5 17.7 L35.0 18.2 L35.5 19.0 L36.0 18.4 L36.5 17.6 L37.0 17.9 L37.5 19.0 L38.0 18.3 L38.5 17.7 L39.0 20.4 L39.5 20.4 L40.0 20.4 L40.5 20.4 L41.0 20.4 L41.5 20.4 L42.0 20.4 L42.5 20.4 L43.0 20.4 L43.5 20.4 L44.0 20.4 L44.5 18.0 L45.0 17.7 L45.5 17.9 L46.0 19.4 L46.5 18.1 L47.0 17.6 L47.5 18.4 L48.0 19.4 L48.5 18.1 L49.0 17.9 L49.5 18.0 L50.0 19.2 L50.5 20.4 L51.0 20.4 L51.5 20.4 L52.0 18.2 L52.5 17.5 L53.0 18.3 L53.5 19.1 L54.0 18.2 L54.5 17.8 L55.0 18.0 L55.5 19.2 L56.0 18.2 L56.5 17.5 L57.0 18.2 L57.5 19.5 L58.0 18.4 L58.5 17.6 L59.0 18.4 L59.5 19.3 L60.0 18.3 L60.5 17.7 L61.0 18.1 L61.5 20.4 L62.0 20.4 L62.5 20.4 L63.0 20.4 L63.5 20.4 L64.0 20.4 L64.5 20.4 L65.0 20.4 L65.5 20.4 L66.0 20.4 L66.5 18.1 L67.0 17.4 L67.5 18.0 L68.0 19.1 L68.5 18.0 L69.0 17.7 L69.5 18.1 L70.0 19.3 L70.5 18.1 L71.0 17.4 L71.5 18.0 L72.0 19.3 L72.5 20.4 L73.0 20.4 L73.5 20.4 L74.0 17.9 L74.5 17.4 L75.0 17.9 L75.5 19.3 L76.0 18.3 L76.5 18.0 L77.0 18.2 L77.5 19.4 L78.0 18.2 L78.5 17.9 L79.0 18.1 L79.5 19.1 L80.0 18.3 L80.5 18.0 L81.0 17.8 L81.5 19.2 L82.0 18.2 L82.5 17.6 L83.0 18.4 L83.5 20.4 L84.0 20.4 L84.5 20.4 L85.0 20.4 L85.5 20.4 L86.0 20.4 L86.0 22.2 L85.5 22.2 L85.0 22.2 L84.5 22.2 L84.0 22.2 L83.5 22.2 L83.0 24.2 L82.5 25.0 L82.0 24.4 L81.5 23.4 L81.0 24.8 L80.5 24.6 L80.0 24.3 L79.5 23.5 L79.0 24.5 L78.5 24.7 L78.0 24.4 L77.5 23.2 L77.0 24.4 L76.5 24.6 L76.0 24.3 L75.5 23.3 L75.0 24.7 L74.5 26.5 L74.0 26.0 L73.5 22.2 L73.0 22.2 L72.5 22.2 L72.0 23.3 L71.5 24.6 L71.0 25.2 L70.5 24.5 L70.0 23.3 L69.5 24.5 L69.0 24.9 L68.5 24.6 L68.0 23.5 L67.5 24.6 L67.0 25.2 L66.5 24.5 L66.0 22.2 L65.5 22.2 L65.0 22.2 L64.5 22.2 L64.0 22.2 L63.5 22.2 L63.0 22.2 L62.5 22.2 L62.0 22.2 L61.5 22.2 L61.0 24.5 L60.5 24.9 L60.0 24.3 L59.5 23.3 L59.0 24.2 L58.5 25.0 L58.0 24.2 L57.5 23.1 L57.0 24.4 L56.5 25.1 L56.0 24.4 L55.5 23.4 L55.0 24.6 L54.5 24.8 L54.0 24.4 L53.5 23.5 L53.0 24.3 L52.5 26.4 L52.0 25.7 L51.5 22.2 L51.0 22.2 L50.5 22.2 L50.0 23.4 L49.5 24.6 L49.0 24.7 L48.5 24.5 L48.0 23.2 L47.5 24.2 L47.0 25.0 L46.5 24.5 L46.0 23.2 L45.5 24.7 L45.0 24.9 L44.5 24.6 L44.0 22.2 L43.5 22.2 L43.0 22.2 L42.5 22.2 L42.0 22.2 L41.5 22.2 L41.0 22.2 L40.5 22.2 L40.0 22.2 L39.5 22.2 L39.0 22.2 L38.5 24.9 L38.0 24.3 L37.5 23.6 L37.0 24.7 L36.5 25.0 L36.0 24.2 L35.5 23.6 L35.0 24.4 L34.5 24.9 L34.0 24.2 L33.5 23.5 L33.0 24.6 L32.5 24.6 L32.0 24.6 L31.5 23.4 L31.0 24.7 L30.5 26.3 L30.0 25.5 L29.5 24.4 L29.0 22.2 L28.5 22.2 L28.0 22.2 L27.5 24.6 L27.0 24.7 L26.5 24.2 L26.0 23.6 L25.5 24.2 L25.0 24.6 L24.5 24.3 L24.0 23.1 L23.5 24.7 L23.0 24.7 L22.5 24.6 L22.0 23.1 L21.5 22.2 L21.0 22.2 L20.5 22.2 L20.0 22.2 L19.5 22.2 L19.0 22.2 L18.5 22.2 L18.0 22.2 L17.5 22.2 L17.0 22.2 L16.5 25.0 L16.0 24.3 L15.5 23.3 L15.0 24.1 L14.5 25.1 L14.0 24.2 L13.5 23.6 L13.0 24.5 L12.5 24.8 L12.0 24.6 L11.5 23.5 L11.0 24.1 L10.5 24.7 L10.0 24.5 L9.5 23.6 L9.0 24.1 L8.5 26.4 L8.0 26.0 L7.5 24.7 L7.0 22.2 L6.5 22.2 L6.0 22.2 L5.5 24.1 L5.0 25.1 L4.5 24.7 L4.0 23.3 L3.5 24.3 L3.0 25.2 L2.5 24.2 L2.0 23.2 L1.5 24.2 L1.0 24.8 L0.5 24.3 L0.0 23.2Z"/><path d="M0.0 34.6 L0.5 33.3 L1.0 33.0 L1.5 33.4 L2.0 34.5 L2.5 33.1 L3.0 32.7 L3.5 33.6 L4.0 34.5 L4.5 33.3 L5.0 32.8 L5.5 33.4 L6.0 35.6 L6.5 35.6 L7.0 35.6 L7.5 34.6 L8.0 33.5 L8.5 33.0 L9.0 33.6 L9.5 34.4 L10.0 33.4 L10.5 33.1 L11.0 33.4 L11.5 34.4 L12.0 33.4 L12.5 32.7 L13.0 33.2 L13.5 34.5 L14.0 33.2 L14.5 33.0 L15.0 33.3 L15.5 34.3 L16.0 33.5 L16.5 32.9 L17.0 35.6 L17.5 35.6 L18.0 35.6 L18.5 35.6 L19.0 35.6 L19.5 35.6 L20.0 35.6 L20.5 35.6 L21.0 35.6 L21.5 35.6 L22.0 34.6 L22.5 33.5 L23.0 32.8 L23.5 33.4 L24.0 34.3 L24.5 33.3 L25.0 32.9 L25.5 33.4 L26.0 34.3 L26.5 33.6 L27.0 32.8 L27.5 33.3 L28.0 35.6 L28.5 35.6 L29.0 35.6 L29.5 34.2 L30.0 33.5 L30.5 32.9 L31.0 33.4 L31.5 34.4 L32.0 33.6 L32.5 32.8 L33.0 33.5 L33.5 34.8 L34.0 33.1 L34.5 32.7 L35.0 33.1 L35.5 34.6 L36.0 33.5 L36.5 33.1 L37.0 33.6 L37.5 34.6 L38.0 33.5 L38.5 33.1 L39.0 35.6 L39.5 35.6 L40.0 35.6 L40.5 35.6 L41.0 35.6 L41.5 35.6 L42.0 35.6 L42.5 35.6 L43.0 35.6 L43.5 35.6 L44.0 35.6 L44.5 33.6 L45.0 33.1 L45.5 33.6 L46.0 34.5 L46.5 33.2 L47.0 32.7 L47.5 33.4 L48.0 34.8 L48.5 33.2 L49.0 33.0 L49.5 33.1 L50.0 34.8 L50.5 35.6 L51.0 35.6 L51.5 35.6 L52.0 33.3 L52.5 33.2 L53.0 33.6 L53.5 34.4 L54.0 33.3 L54.5 32.8 L55.0 33.4 L55.5 34.7 L56.0 33.4 L56.5 32.7 L57.0 33.3 L57.5 34.4 L58.0 33.4 L58.5 32.7 L59.0 33.4 L59.5 34.6 L60.0 33.7 L60.5 32.9 L61.0 33.5 L61.5 35.6 L62.0 35.6 L62.5 35.6 L63.0 35.6 L63.5 35.6 L64.0 35.6 L64.5 35.6 L65.0 35.6 L65.5 35.6 L66.0 35.6 L66.5 33.2 L67.0 32.8 L67.5 33.3 L68.0 34.2 L68.5 33.4 L69.0 32.7 L69.5 33.0 L70.0 34.2 L70.5 33.6 L71.0 32.7 L71.5 33.2 L72.0 34.7 L72.5 35.6 L73.0 35.6 L73.5 35.6 L74.0 33.3 L74.5 32.7 L75.0 33.2 L75.5 34.7 L76.0 33.6 L76.5 32.8 L77.0 33.6 L77.5 34.7 L78.0 33.3 L78.5 33.1 L79.0 33.1 L79.5 34.7 L80.0 33.5 L80.5 33.1 L81.0 33.1 L81.5 34.5 L82.0 33.3 L82.5 32.7 L83.0 33.1 L83.5 35.6 L84.0 35.6 L84.5 35.6 L85.0 35.6 L85.5 35.6 L86.0 35.6 L86.0 37.4 L85.5 37.4 L85.0 37.4 L84.5 37.4 L84.0 37.4 L83.5 37.4 L83.0 39.9 L82.5 40.3 L82.0 39.7 L81.5 38.5 L81.0 39.9 L80.5 39.9 L80.0 39.5 L79.5 38.3 L79.0 39.9 L78.5 39.9 L78.0 39.7 L77.5 38.3 L77.0 39.4 L76.5 40.2 L76.0 39.4 L75.5 38.3 L75.0 39.8 L74.5 41.6 L74.0 41.0 L73.5 37.4 L73.0 37.4 L72.5 37.4 L72.0 38.3 L71.5 39.8 L71.0 40.3 L70.5 39.4 L70.0 38.8 L69.5 40.0 L69.0 40.3 L68.5 39.6 L68.0 38.8 L67.5 39.7 L67.0 40.2 L66.5 39.8 L66.0 37.4 L65.5 37.4 L65.0 37.4 L64.5 37.4 L64.0 37.4 L63.5 37.4 L63.0 37.4 L62.5 37.4 L62.0 37.4 L61.5 37.4 L61.0 39.5 L60.5 40.1 L60.0 39.3 L59.5 38.4 L59.0 39.6 L58.5 40.3 L58.0 39.6 L57.5 38.6 L57.0 39.7 L56.5 40.3 L56.0 39.6 L55.5 38.3 L55.0 39.6 L54.5 40.2 L54.0 39.7 L53.5 38.6 L53.0 39.4 L52.5 41.1 L52.0 41.0 L51.5 37.4 L51.0 37.4 L50.5 37.4 L50.0 38.2 L49.5 39.9 L49.0 40.0 L48.5 39.8 L48.0 38.2 L47.5 39.6 L47.0 40.3 L46.5 39.8 L46.0 38.5 L45.5 39.4 L45.0 39.9 L44.5 39.4 L44.0 37.4 L43.5 37.4 L43.0 37.4 L42.5 37.4 L42.0 37.4 L41.5 37.4 L41.0 37.4 L40.5 37.4 L40.0 37.4 L39.5 37.4 L39.0 37.4 L38.5 39.9 L38.0 39.5 L37.5 38.4 L37.0 39.4 L36.5 39.9 L36.0 39.5 L35.5 38.4 L35.0 39.9 L34.5 40.3 L34.0 39.9 L33.5 38.2 L33.0 39.5 L32.5 40.2 L32.0 39.4 L31.5 38.6 L31.0 39.6 L30.5 41.4 L30.0 40.8 L29.5 40.1 L29.0 37.4 L28.5 37.4 L28.0 37.4 L27.5 39.7 L27.0 40.2 L26.5 39.4 L26.0 38.7 L25.5 39.6 L25.0 40.1 L24.5 39.7 L24.0 38.7 L23.5 39.6 L23.0 40.2 L22.5 39.5 L22.0 38.4 L21.5 37.4 L21.0 37.4 L20.5 37.4 L20.0 37.4 L19.5 37.4 L19.0 37.4 L18.5 37.4 L18.0 37.4 L17.5 37.4 L17.0 37.4 L16.5 40.1 L16.0 39.5 L15.5 38.7 L15.0 39.7 L14.5 40.0 L14.0 39.8 L13.5 38.5 L13.0 39.8 L12.5 40.3 L12.0 39.6 L11.5 38.6 L11.0 39.6 L10.5 39.9 L10.0 39.6 L9.5 38.6 L9.0 39.4 L8.5 41.3 L8.0 40.8 L7.5 39.7 L7.0 37.4 L6.5 37.4 L6.0 37.4 L5.5 39.6 L5.0 40.2 L4.5 39.7 L4.0 38.5 L3.5 39.4 L3.0 40.3 L2.5 39.9 L2.0 38.5 L1.5 39.6 L1.0 40.0 L0.5 39.7 L0.0 38.4Z"/></svg>
<div style="left:735px;top:118px;width:88px;height:44px;background:#92a6ff;"></div>
<div style="left:735px;top:132px;width:88px;height:1px;background:rgba(0,0,0,0.28);"></div>
<div style="left:735px;top:118px;width:1px;height:44px;background:rgba(0,0,0,0.3);"></div>
<div style="left:746px;top:133px;width:1px;height:29px;background:rgba(0,0,0,0.13);"></div>
<div style="left:757px;top:133px;width:1px;height:29px;background:rgba(0,0,0,0.13);"></div>
<div style="left:768px;top:133px;width:1px;height:29px;background:rgba(0,0,0,0.13);"></div>
<div style="left:779px;top:133px;width:1px;height:29px;background:rgba(0,0,0,0.13);"></div>
<div style="left:790px;top:133px;width:1px;height:29px;background:rgba(0,0,0,0.13);"></div>
<div style="left:801px;top:133px;width:1px;height:29px;background:rgba(0,0,0,0.13);"></div>
<div style="left:812px;top:133px;width:1px;height:29px;background:rgba(0,0,0,0.13);"></div>
<div style="left:735px;top:139px;width:88px;height:1px;background:#262a3a;"></div>
<div style="left:735px;top:154px;width:88px;height:1px;background:#262a3a;"></div>
<div style="left:933px;top:118px;width:71px;height:44px;background:#92a6ff;"></div>
<div style="left:933px;top:132px;width:71px;height:1px;background:rgba(0,0,0,0.28);"></div>
<div style="left:933px;top:118px;width:1px;height:44px;background:rgba(0,0,0,0.3);"></div>
<div style="left:944px;top:133px;width:1px;height:29px;background:rgba(0,0,0,0.13);"></div>
<div style="left:955px;top:133px;width:1px;height:29px;background:rgba(0,0,0,0.13);"></div>
<div style="left:966px;top:133px;width:1px;height:29px;background:rgba(0,0,0,0.13);"></div>
<div style="left:977px;top:133px;width:1px;height:29px;background:rgba(0,0,0,0.13);"></div>
<div style="left:988px;top:133px;width:1px;height:29px;background:rgba(0,0,0,0.13);"></div>
<div style="left:999px;top:133px;width:1px;height:29px;background:rgba(0,0,0,0.13);"></div>
<svg style="position:absolute;left:934px;top:118px" width="69" height="44" fill="#1c1c2a"><path d="M0.0 20.4 L0.5 18.2 L1.0 17.9 L1.5 18.2 L2.0 19.0 L2.5 18.5 L3.0 17.5 L3.5 18.1 L4.0 19.0 L4.5 18.4 L5.0 17.6 L5.5 18.3 L6.0 18.9 L6.5 20.4 L7.0 20.4 L7.5 20.4 L8.0 18.6 L8.5 17.9 L9.0 18.2 L9.5 18.9 L10.0 18.6 L10.5 17.5 L11.0 18.2 L11.5 19.3 L12.0 18.0 L12.5 17.6 L13.0 18.2 L13.5 19.0 L14.0 18.4 L14.5 17.7 L15.0 18.0 L15.5 19.3 L16.0 18.3 L16.5 18.0 L17.0 18.1 L17.5 20.4 L18.0 20.4 L18.5 20.4 L19.0 20.4 L19.5 20.4 L20.0 20.4 L20.5 20.4 L21.0 20.4 L21.5 20.4 L22.0 20.4 L22.5 18.2 L23.0 17.8 L23.5 18.0 L24.0 18.9 L24.5 18.2 L25.0 17.7 L25.5 18.0 L26.0 19.2 L26.5 18.4 L27.0 17.6 L27.5 18.3 L28.0 19.0 L28.5 20.4 L29.0 20.4 L29.5 20.4 L30.0 18.3 L30.5 17.5 L31.0 18.1 L31.5 19.2 L32.0 18.3 L32.5 17.9 L33.0 17.9 L33.5 19.1 L34.0 18.3 L34.5 17.7 L35.0 17.8 L35.5 19.3 L36.0 18.5 L36.5 18.0 L37.0 17.8 L37.5 19.2 L38.0 18.1 L38.5 18.0 L39.0 18.0 L39.5 20.4 L40.0 20.4 L40.5 20.4 L41.0 20.4 L41.5 20.4 L42.0 20.4 L42.5 20.4 L43.0 20.4 L43.5 20.4 L44.0 20.4 L44.5 18.6 L45.0 17.7 L45.5 18.1 L46.0 19.3 L46.5 18.2 L47.0 17.5 L47.5 17.9 L48.0 18.7 L48.5 18.2 L49.0 17.6 L49.5 18.1 L50.0 19.0 L50.5 20.4 L51.0 20.4 L51.5 20.4 L52.0 18.2 L52.5 18.0 L53.0 18.1 L53.5 19.0 L54.0 18.2 L54.5 17.8 L55.0 18.0 L55.5 19.0 L56.0 18.2 L56.5 17.6 L57.0 17.8 L57.5 19.1 L58.0 18.3 L58.5 17.6 L59.0 18.3 L59.5 19.0 L60.0 18.2 L60.5 17.8 L61.0 18.1 L61.5 20.4 L62.0 20.4 L62.5 20.4 L63.0 20.4 L63.5 20.4 L64.0 20.4 L64.5 20.4 L65.0 20.4 L65.5 20.4 L66.0 20.4 L66.5 18.3 L67.0 17.8 L67.5 17.8 L68.0 18.7 L68.5 18.3 L69.0 17.9 L69.0 24.7 L68.5 24.3 L68.0 23.9 L67.5 24.8 L67.0 24.8 L66.5 24.3 L66.0 22.2 L65.5 22.2 L65.0 22.2 L64.5 22.2 L64.0 22.2 L63.5 22.2 L63.0 22.2 L62.5 22.2 L62.0 22.2 L61.5 22.2 L61.0 24.5 L60.5 24.8 L60.0 24.4 L59.5 23.6 L59.0 24.3 L58.5 25.0 L58.0 24.3 L57.5 23.5 L57.0 24.8 L56.5 25.0 L56.0 24.4 L55.5 23.6 L55.0 24.6 L54.5 24.8 L54.0 24.4 L53.5 23.6 L53.0 24.5 L52.5 25.9 L52.0 25.7 L51.5 22.2 L51.0 22.2 L50.5 22.2 L50.0 23.6 L49.5 24.5 L49.0 25.0 L48.5 24.4 L48.0 23.9 L47.5 24.7 L47.0 25.1 L46.5 24.4 L46.0 23.3 L45.5 24.5 L45.0 24.9 L44.5 24.0 L44.0 22.2 L43.5 22.2 L43.0 22.2 L42.5 22.2 L42.0 22.2 L41.5 22.2 L41.0 22.2 L40.5 22.2 L40.0 22.2 L39.5 22.2 L39.0 24.6 L38.5 24.6 L38.0 24.5 L37.5 23.4 L37.0 24.8 L36.5 24.6 L36.0 24.1 L35.5 23.3 L35.0 24.8 L34.5 24.9 L34.0 24.3 L33.5 23.5 L33.0 24.7 L32.5 24.7 L32.0 24.3 L31.5 23.4 L31.0 24.5 L30.5 26.4 L30.0 25.6 L29.5 22.2 L29.0 22.2 L28.5 22.2 L28.0 23.6 L27.5 24.3 L27.0 25.0 L26.5 24.2 L26.0 23.4 L25.5 24.6 L25.0 24.9 L24.5 24.4 L24.0 23.7 L23.5 24.6 L23.0 24.8 L22.5 24.4 L22.0 22.2 L21.5 22.2 L21.0 22.2 L20.5 22.2 L20.0 22.2 L19.5 22.2 L19.0 22.2 L18.5 22.2 L18.0 22.2 L17.5 22.2 L17.0 24.5 L16.5 24.6 L16.0 24.3 L15.5 23.3 L15.0 24.6 L14.5 24.9 L14.0 24.2 L13.5 23.6 L13.0 24.4 L12.5 25.0 L12.0 24.6 L11.5 23.3 L11.0 24.4 L10.5 25.1 L10.0 24.0 L9.5 23.7 L9.0 24.4 L8.5 26.0 L8.0 25.3 L7.5 22.2 L7.0 22.2 L6.5 22.2 L6.0 23.7 L5.5 24.3 L5.0 25.0 L4.5 24.2 L4.0 23.6 L3.5 24.5 L3.0 25.1 L2.5 24.1 L2.0 23.6 L1.5 24.4 L1.0 24.7 L0.5 24.4 L0.0 22.2Z"/><path d="M0.0 35.6 L0.5 33.4 L1.0 32.7 L1.5 33.3 L2.0 34.6 L2.5 33.8 L3.0 33.1 L3.5 33.3 L4.0 34.6 L4.5 33.5 L5.0 32.8 L5.5 33.2 L6.0 34.1 L6.5 35.6 L7.0 35.6 L7.5 35.6 L8.0 33.7 L8.5 32.8 L9.0 33.1 L9.5 34.1 L10.0 33.3 L10.5 33.0 L11.0 33.2 L11.5 34.2 L12.0 33.5 L12.5 32.6 L13.0 33.4 L13.5 34.5 L14.0 33.7 L14.5 32.8 L15.0 33.0 L15.5 34.3 L16.0 33.3 L16.5 33.2 L17.0 33.3 L17.5 35.6 L18.0 35.6 L18.5 35.6 L19.0 35.6 L19.5 35.6 L20.0 35.6 L20.5 35.6 L21.0 35.6 L21.5 35.6 L22.0 35.6 L22.5 33.6 L23.0 33.0 L23.5 33.5 L24.0 34.3 L24.5 33.3 L25.0 32.8 L25.5 33.3 L26.0 34.2 L26.5 33.7 L27.0 32.6 L27.5 33.3 L28.0 34.1 L28.5 35.6 L29.0 35.6 L29.5 35.6 L30.0 33.4 L30.5 33.1 L31.0 33.0 L31.5 34.1 L32.0 33.5 L32.5 32.7 L33.0 32.9 L33.5 34.6 L34.0 33.6 L34.5 32.7 L35.0 33.5 L35.5 34.6 L36.0 33.5 L36.5 32.8 L37.0 33.1 L37.5 34.3 L38.0 33.5 L38.5 33.1 L39.0 33.4 L39.5 35.6 L40.0 35.6 L40.5 35.6 L41.0 35.6 L41.5 35.6 L42.0 35.6 L42.5 35.6 L43.0 35.6 L43.5 35.6 L44.0 35.6 L44.5 33.5 L45.0 32.8 L45.5 33.0 L46.0 34.5 L46.5 33.6 L47.0 33.1 L47.5 33.3 L48.0 34.0 L48.5 33.5 L49.0 33.1 L49.5 33.4 L50.0 34.3 L50.5 35.6 L51.0 35.6 L51.5 35.6 L52.0 33.4 L52.5 32.8 L53.0 33.1 L53.5 34.0 L54.0 33.6 L54.5 33.1 L55.0 33.5 L55.5 33.9 L56.0 33.7 L56.5 33.1 L57.0 33.4 L57.5 34.5 L58.0 33.7 L58.5 33.1 L59.0 33.3 L59.5 34.0 L60.0 33.7 L60.5 32.8 L61.0 33.2 L61.5 35.6 L62.0 35.6 L62.5 35.6 L63.0 35.6 L63.5 35.6 L64.0 35.6 L64.5 35.6 L65.0 35.6 L65.5 35.6 L66.0 35.6 L66.5 33.7 L67.0 32.9 L67.5 33.1 L68.0 34.0 L68.5 33.6 L69.0 32.8 L69.0 40.2 L68.5 39.4 L68.0 39.0 L67.5 39.9 L67.0 40.1 L66.5 39.3 L66.0 37.4 L65.5 37.4 L65.0 37.4 L64.5 37.4 L64.0 37.4 L63.5 37.4 L63.0 37.4 L62.5 37.4 L62.0 37.4 L61.5 37.4 L61.0 39.8 L60.5 40.2 L60.0 39.3 L59.5 39.0 L59.0 39.7 L58.5 39.9 L58.0 39.3 L57.5 38.5 L57.0 39.6 L56.5 39.9 L56.0 39.3 L55.5 39.1 L55.0 39.5 L54.5 39.9 L54.0 39.4 L53.5 39.0 L53.0 39.9 L52.5 41.5 L52.0 40.9 L51.5 37.4 L51.0 37.4 L50.5 37.4 L50.0 38.7 L49.5 39.6 L49.0 39.9 L48.5 39.5 L48.0 39.0 L47.5 39.7 L47.0 39.9 L46.5 39.4 L46.0 38.5 L45.5 40.0 L45.0 40.2 L44.5 39.5 L44.0 37.4 L43.5 37.4 L43.0 37.4 L42.5 37.4 L42.0 37.4 L41.5 37.4 L41.0 37.4 L40.5 37.4 L40.0 37.4 L39.5 37.4 L39.0 39.6 L38.5 39.9 L38.0 39.5 L37.5 38.7 L37.0 39.9 L36.5 40.2 L36.0 39.5 L35.5 38.4 L35.0 39.5 L34.5 40.3 L34.0 39.4 L33.5 38.4 L33.0 40.1 L32.5 40.3 L32.0 39.5 L31.5 38.9 L31.0 40.0 L30.5 41.2 L30.0 40.9 L29.5 37.4 L29.0 37.4 L28.5 37.4 L28.0 38.9 L27.5 39.7 L27.0 40.4 L26.5 39.3 L26.0 38.8 L25.5 39.7 L25.0 40.2 L24.5 39.7 L24.0 38.7 L23.5 39.5 L23.0 40.0 L22.5 39.4 L22.0 37.4 L21.5 37.4 L21.0 37.4 L20.5 37.4 L20.0 37.4 L19.5 37.4 L19.0 37.4 L18.5 37.4 L18.0 37.4 L17.5 37.4 L17.0 39.7 L16.5 39.8 L16.0 39.7 L15.5 38.7 L15.0 40.0 L14.5 40.2 L14.0 39.3 L13.5 38.5 L13.0 39.6 L12.5 40.4 L12.0 39.5 L11.5 38.8 L11.0 39.8 L10.5 40.0 L10.0 39.7 L9.5 38.9 L9.0 39.9 L8.5 41.5 L8.0 40.6 L7.5 37.4 L7.0 37.4 L6.5 37.4 L6.0 38.9 L5.5 39.8 L5.0 40.2 L4.5 39.5 L4.0 38.4 L3.5 39.7 L3.0 39.9 L2.5 39.2 L2.0 38.4 L1.5 39.7 L1.0 40.3 L0.5 39.6 L0.0 37.4Z"/></svg>
<div style="left:8px;top:165px;width:374px;height:2px;background:#8ccaff;"></div>
<div style="left:30px;top:171px;width:880px;height:1.5px;background:#8ccaff;"></div>
<div style="left:911px;top:173.8px;width:22px;height:1.5px;background:#8ccaff;"></div>
<div style="left:933px;top:168.3px;width:71px;height:1px;background:#8ccaff;"></div>
<div style="left:933px;top:170.3px;width:71px;height:1px;background:#8ccaff;"></div>
<div style="left:933px;top:172.3px;width:71px;height:1px;background:#8ccaff;"></div>
<div style="left:933px;top:174px;width:71px;height:1.5px;background:#8ccaff;"></div>
<div style="left:207px;top:179px;width:528px;height:44px;background:#5dffe6;"></div>
<div style="left:207px;top:193px;width:528px;height:1px;background:rgba(0,0,0,0.28);"></div>
<div style="left:207px;top:179px;width:1px;height:44px;background:rgba(0,0,0,0.3);"></div>
<div style="left:218px;top:194px;width:1px;height:29px;background:rgba(0,0,0,0.13);"></div>
<div style="left:229px;top:194px;width:1px;height:29px;background:rgba(0,0,0,0.13);"></div>
<div style="left:240px;top:194px;width:1px;height:29px;background:rgba(0,0,0,0.13);"></div>
<div style="left:251px;top:194px;width:1px;height:29px;background:rgba(0,0,0,0.13);"></div>
<div style="left:262px;top:194px;width:1px;height:29px;background:rgba(0,0,0,0.13);"></div>
<div style="left:273px;top:194px;width:1px;height:29px;background:rgba(0,0,0,0.13);"></div>
<div style="left:284px;top:194px;width:1px;height:29px;background:rgba(0,0,0,0.13);"></div>
<div style="left:295px;top:194px;width:1px;height:29px;background:rgba(0,0,0,0.13);"></div>
<div style="left:306px;top:194px;width:1px;height:29px;background:rgba(0,0,0,0.13);"></div>
<div style="left:317px;top:194px;width:1px;height:29px;background:rgba(0,0,0,0.13);"></div>
<div style="left:328px;top:194px;width:1px;height:29px;background:rgba(0,0,0,0.13);"></div>
<div style="left:339px;top:194px;width:1px;height:29px;background:rgba(0,0,0,0.13);"></div>
<div style="left:350px;top:194px;width:1px;height:29px;background:rgba(0,0,0,0.13);"></div>
<div style="left:361px;top:194px;width:1px;height:29px;background:rgba(0,0,0,0.13);"></div>
<div style="left:372px;top:194px;width:1px;height:29px;background:rgba(0,0,0,0.13);"></div>
<div style="left:383px;top:194px;width:1px;height:29px;background:rgba(0,0,0,0.13);"></div>
<div style="left:394px;top:194px;width:1px;height:29px;background:rgba(0,0,0,0.13);"></div>
<div style="left:405px;top:194px;width:1px;height:29px;background:rgba(0,0,0,0.13);"></div>
<div style="left:416px;top:194px;width:1px;height:29px;background:rgba(0,0,0,0.13);"></div>
<div style="left:427px;top:194px;width:1px;height:29px;background:rgba(0,0,0,0.13);"></div>
<div style="left:438px;top:194px;width:1px;height:29px;background:rgba(0,0,0,0.13);"></div>
<div style="left:449px;top:194px;width:1px;height:29px;background:rgba(0,0,0,0.13);"></div>
<div style="left:460px;top:194px;width:1px;height:29px;background:rgba(0,0,0,0.13);"></div>
<div style="left:471px;top:194px;width:1px;height:29px;background:rgba(0,0,0,0.13);"></div>
<div style="left:482px;top:194px;width:1px;height:29px;background:rgba(0,0,0,0.13);"></div>
<div style="left:493px;top:194px;width:1px;height:29px;background:rgba(0,0,0,0.13);"></div>
<div style="left:504px;top:194px;width:1px;height:29px;background:rgba(0,0,0,0.13);"></div>
<div style="left:515px;top:194px;width:1px;height:29px;background:rgba(0,0,0,0.13);"></div>
<div style="left:526px;top:194px;width:1px;height:29px;background:rgba(0,0,0,0.13);"></div>
<div style="left:537px;top:194px;width:1px;height:29px;background:rgba(0,0,0,0.13);"></div>
<div style="left:548px;top:194px;width:1px;height:29px;background:rgba(0,0,0,0.13);"></div>
<div style="left:559px;top:194px;width:1px;height:29px;background:rgba(0,0,0,0.13);"></div>
<div style="left:570px;top:194px;width:1px;height:29px;background:rgba(0,0,0,0.13);"></div>
<div style="left:581px;top:194px;width:1px;height:29px;background:rgba(0,0,0,0.13);"></div>
<div style="left:592px;top:194px;width:1px;height:29px;background:rgba(0,0,0,0.13);"></div>
<div style="left:603px;top:194px;width:1px;height:29px;background:rgba(0,0,0,0.13);"></div>
<div style="left:614px;top:194px;width:1px;height:29px;background:rgba(0,0,0,0.13);"></div>
<div style="left:625px;top:194px;width:1px;height:29px;background:rgba(0,0,0,0.13);"></div>
<div style="left:636px;top:194px;width:1px;height:29px;background:rgba(0,0,0,0.13);"></div>
<div style="left:647px;top:194px;width:1px;height:29px;background:rgba(0,0,0,0.13);"></div>
<div style="left:658px;top:194px;width:1px;height:29px;background:rgba(0,0,0,0.13);"></div>
<div style="left:669px;top:194px;width:1px;height:29px;background:rgba(0,0,0,0.13);"></div>
<div style="left:680px;top:194px;width:1px;height:29px;background:rgba(0,0,0,0.13);"></div>
<div style="left:691px;top:194px;width:1px;height:29px;background:rgba(0,0,0,0.13);"></div>
<div style="left:702px;top:194px;width:1px;height:29px;background:rgba(0,0,0,0.13);"></div>
<div style="left:713px;top:194px;width:1px;height:29px;background:rgba(0,0,0,0.13);"></div>
<div style="left:724px;top:194px;width:1px;height:29px;background:rgba(0,0,0,0.13);"></div>
<svg style="position:absolute;left:207px;top:179px" width="528" height="44" fill="#173a34"><rect x="16.2" y="33" width="5" height="1.8"/><rect x="38.2" y="33" width="5" height="1.8"/><rect x="60.2" y="33" width="5" height="1.8"/><rect x="82.2" y="33" width="5" height="1.8"/><rect x="7.5" y="38.5" width="5" height="1.8"/><rect x="21.2" y="38.5" width="5" height="1.8"/><rect x="51.5" y="38.5" width="5" height="1.8"/><rect x="65.2" y="38.5" width="5" height="1.8"/><rect x="32.5" y="18" width="2" height="1.8"/><rect x="76.5" y="18" width="2" height="1.8"/><rect x="-0.5" y="18" width="5" height="1.8"/><rect x="104.2" y="33" width="5" height="1.8"/><rect x="126.2" y="33" width="5" height="1.8"/><rect x="148.2" y="33" width="5" height="1.8"/><rect x="170.2" y="33" width="5" height="1.8"/><rect x="95.5" y="38.5" width="5" height="1.8"/><rect x="109.2" y="38.5" width="5" height="1.8"/><rect x="139.5" y="38.5" width="5" height="1.8"/><rect x="153.2" y="38.5" width="5" height="1.8"/><rect x="120.5" y="18" width="2" height="1.8"/><rect x="164.5" y="18" width="2" height="1.8"/><rect x="87.5" y="18" width="5" height="1.8"/><rect x="192.2" y="33" width="5" height="1.8"/><rect x="214.2" y="33" width="5" height="1.8"/><rect x="236.2" y="33" width="5" height="1.8"/><rect x="258.2" y="33" width="5" height="1.8"/><rect x="183.5" y="38.5" width="5" height="1.8"/><rect x="197.2" y="38.5" width="5" height="1.8"/><rect x="227.5" y="38.5" width="5" height="1.8"/><rect x="241.2" y="38.5" width="5" height="1.8"/><rect x="208.5" y="18" width="2" height="1.8"/><rect x="252.5" y="18" width="2" height="1.8"/><rect x="175.5" y="18" width="5" height="1.8"/><rect x="280.2" y="33" width="5" height="1.8"/><rect x="302.2" y="33" width="5" height="1.8"/><rect x="324.2" y="33" width="5" height="1.8"/><rect x="346.2" y="33" width="5" height="1.8"/><rect x="271.5" y="38.5" width="5" height="1.8"/><rect x="285.2" y="38.5" width="5" height="1.8"/><rect x="315.5" y="38.5" width="5" height="1.8"/><rect x="329.2" y="38.5" width="5" height="1.8"/><rect x="296.5" y="18" width="2" height="1.8"/><rect x="340.5" y="18" width="2" height="1.8"/><rect x="263.5" y="18" width="5" height="1.8"/><rect x="368.2" y="33" width="5" height="1.8"/><rect x="390.2" y="33" width="5" height="1.8"/><rect x="412.2" y="33" width="5" height="1.8"/><rect x="434.2" y="33" width="5" height="1.8"/><rect x="359.5" y="38.5" width="5" height="1.8"/><rect x="373.2" y="38.5" width="5" height="1.8"/><rect x="403.5" y="38.5" width="5" height="1.8"/><rect x="417.2" y="38.5" width="5" height="1.8"/><rect x="384.5" y="18" width="2" height="1.8"/><rect x="428.5" y="18" width="2" height="1.8"/><rect x="351.5" y="18" width="5" height="1.8"/><rect x="456.2" y="33" width="5" height="1.8"/><rect x="478.2" y="33" width="5" height="1.8"/><rect x="500.2" y="33" width="5" height="1.8"/><rect x="447.5" y="38.5" width="5" height="1.8"/><rect x="461.2" y="38.5" width="5" height="1.8"/><rect x="491.5" y="38.5" width="5" height="1.8"/><rect x="505.2" y="38.5" width="5" height="1.8"/><rect x="472.5" y="18" width="2" height="1.8"/><rect x="516.5" y="18" width="2" height="1.8"/><rect x="439.5" y="18" width="5" height="1.8"/></svg>
<div style="left:383px;top:179px;width:1px;height:44px;background:rgba(0,0,0,0.18);"></div>
<div style="left:559px;top:179px;width:1px;height:44px;background:rgba(0,0,0,0.18);"></div>
<div style="left:911px;top:179px;width:93px;height:44px;background:#5dffe6;"></div>
<div style="left:911px;top:193px;width:93px;height:1px;background:rgba(0,0,0,0.28);"></div>
<div style="left:911px;top:179px;width:1px;height:44px;background:rgba(0,0,0,0.3);"></div>
<div style="left:922px;top:194px;width:1px;height:29px;background:rgba(0,0,0,0.13);"></div>
<div style="left:933px;top:194px;width:1px;height:29px;background:rgba(0,0,0,0.13);"></div>
<div style="left:944px;top:194px;width:1px;height:29px;background:rgba(0,0,0,0.13);"></div>
<div style="left:955px;top:194px;width:1px;height:29px;background:rgba(0,0,0,0.13);"></div>
<div style="left:966px;top:194px;width:1px;height:29px;background:rgba(0,0,0,0.13);"></div>
<div style="left:977px;top:194px;width:1px;height:29px;background:rgba(0,0,0,0.13);"></div>
<div style="left:988px;top:194px;width:1px;height:29px;background:rgba(0,0,0,0.13);"></div>
<div style="left:999px;top:194px;width:1px;height:29px;background:rgba(0,0,0,0.13);"></div>
<svg style="position:absolute;left:911px;top:179px" width="93" height="44" fill="#173a34"><rect x="16.2" y="33" width="5" height="1.8"/><rect x="38.2" y="33" width="5" height="1.8"/><rect x="60.2" y="33" width="5" height="1.8"/><rect x="82.2" y="33" width="5" height="1.8"/><rect x="7.5" y="38.5" width="5" height="1.8"/><rect x="21.2" y="38.5" width="5" height="1.8"/><rect x="51.5" y="38.5" width="5" height="1.8"/><rect x="65.2" y="38.5" width="5" height="1.8"/><rect x="32.5" y="18" width="2" height="1.8"/><rect x="76.5" y="18" width="2" height="1.8"/><rect x="-0.5" y="18" width="5" height="1.8"/></svg>
<div style="left:361px;top:224px;width:22px;height:15px;background:#5dffe6;"></div>
<div style="left:537px;top:224px;width:22px;height:15px;background:#5dffe6;"></div>
<div style="left:713px;top:224px;width:22px;height:15px;background:#5dffe6;"></div>
<div style="left:383px;top:240px;width:176px;height:30px;background:#eef6a8;"></div>
<div style="left:383px;top:253px;width:176px;height:1px;background:rgba(0,0,0,0.28);"></div>
<div style="left:383px;top:240px;width:1px;height:30px;background:rgba(0,0,0,0.3);"></div>
<div style="left:394px;top:254px;width:1px;height:15px;background:rgba(0,0,0,0.1);"></div>
<div style="left:405px;top:254px;width:1px;height:15px;background:rgba(0,0,0,0.1);"></div>
<div style="left:416px;top:254px;width:1px;height:15px;background:rgba(0,0,0,0.1);"></div>
<div style="left:427px;top:254px;width:1px;height:15px;background:rgba(0,0,0,0.1);"></div>
<div style="left:438px;top:254px;width:1px;height:15px;background:rgba(0,0,0,0.1);"></div>
<div style="left:449px;top:254px;width:1px;height:15px;background:rgba(0,0,0,0.1);"></div>
<div style="left:460px;top:254px;width:1px;height:15px;background:rgba(0,0,0,0.1);"></div>
<div style="left:471px;top:254px;width:1px;height:15px;background:rgba(0,0,0,0.1);"></div>
<div style="left:482px;top:254px;width:1px;height:15px;background:rgba(0,0,0,0.1);"></div>
<div style="left:493px;top:254px;width:1px;height:15px;background:rgba(0,0,0,0.1);"></div>
<div style="left:504px;top:254px;width:1px;height:15px;background:rgba(0,0,0,0.1);"></div>
<div style="left:515px;top:254px;width:1px;height:15px;background:rgba(0,0,0,0.1);"></div>
<div style="left:526px;top:254px;width:1px;height:15px;background:rgba(0,0,0,0.1);"></div>
<div style="left:537px;top:254px;width:1px;height:15px;background:rgba(0,0,0,0.1);"></div>
<div style="left:548px;top:254px;width:1px;height:15px;background:rgba(0,0,0,0.1);"></div>
<div style="left:383px;top:258.5px;width:175px;height:6px;background:#232323;"></div>
<div style="left:207px;top:271px;width:66px;height:44px;background:#f8f47a;"></div>
<div style="left:207px;top:284.5px;width:66px;height:1px;background:rgba(0,0,0,0.28);"></div>
<div style="left:207px;top:271px;width:1px;height:44px;background:rgba(0,0,0,0.3);"></div>
<div style="left:218px;top:285px;width:1px;height:30px;background:rgba(0,0,0,0.12);"></div>
<div style="left:229px;top:285px;width:1px;height:30px;background:rgba(0,0,0,0.12);"></div>
<div style="left:240px;top:285px;width:1px;height:30px;background:rgba(0,0,0,0.12);"></div>
<div style="left:251px;top:285px;width:1px;height:30px;background:rgba(0,0,0,0.12);"></div>
<div style="left:262px;top:285px;width:1px;height:30px;background:rgba(0,0,0,0.12);"></div>
<div style="left:207.5px;top:297px;width:4.0px;height:1.3px;background:#6e6830;"></div>
<div style="left:214.5px;top:306.8px;width:5.5px;height:1.3px;background:#6e6830;"></div>
<div style="left:223px;top:304.3px;width:5px;height:1.3px;background:#6e6830;"></div>
<div style="left:229px;top:306.8px;width:5px;height:1.3px;background:#6e6830;"></div>
<div style="left:239.5px;top:297px;width:1.5px;height:1.3px;background:#6e6830;"></div>
<div style="left:245.5px;top:304.3px;width:4.5px;height:1.3px;background:#6e6830;"></div>
<div style="left:258.5px;top:306.8px;width:5.5px;height:1.3px;background:#6e6830;"></div>
<div style="left:267px;top:304.3px;width:5px;height:1.3px;background:#6e6830;"></div>
<div style="left:383px;top:271px;width:88px;height:44px;background:#f8f47a;"></div>
<div style="left:383px;top:284.5px;width:88px;height:1px;background:rgba(0,0,0,0.28);"></div>
<div style="left:383px;top:271px;width:1px;height:44px;background:rgba(0,0,0,0.3);"></div>
<div style="left:394px;top:285px;width:1px;height:30px;background:rgba(0,0,0,0.12);"></div>
<div style="left:405px;top:285px;width:1px;height:30px;background:rgba(0,0,0,0.12);"></div>
<div style="left:416px;top:285px;width:1px;height:30px;background:rgba(0,0,0,0.12);"></div>
<div style="left:427px;top:285px;width:1px;height:30px;background:rgba(0,0,0,0.12);"></div>
<div style="left:438px;top:285px;width:1px;height:30px;background:rgba(0,0,0,0.12);"></div>
<div style="left:449px;top:285px;width:1px;height:30px;background:rgba(0,0,0,0.12);"></div>
<div style="left:460px;top:285px;width:1px;height:30px;background:rgba(0,0,0,0.12);"></div>
<div style="left:383px;top:292.2px;width:44px;height:1.3px;background:#6e6830;"></div>
<div style="left:383px;top:295.7px;width:44px;height:1.3px;background:#6e6830;"></div>
<div style="left:383px;top:298px;width:44px;height:1.3px;background:#6e6830;"></div>
<div style="left:427px;top:294px;width:21px;height:1.3px;background:#6e6830;"></div>
<div style="left:448px;top:291.6px;width:22px;height:1.3px;background:#6e6830;"></div>
<div style="left:559px;top:317.5px;width:44px;height:3.2px;background:#ffa472;"></div>
<div style="left:647px;top:317.5px;width:264px;height:3.2px;background:#ffa472;"></div>
<div style="left:383px;top:321.8px;width:352px;height:3.2px;background:#ffa472;"></div>
<div style="left:911px;top:321.8px;width:93px;height:3.2px;background:#ffa472;"></div>
<div style="left:207px;top:326.1px;width:528px;height:3.2px;background:#ffa472;"></div>
<div style="left:218px;top:317px;width:1px;height:13px;background:rgba(0,0,0,0.12);"></div>
<div style="left:229px;top:317px;width:1px;height:13px;background:rgba(0,0,0,0.12);"></div>
<div style="left:240px;top:317px;width:1px;height:13px;background:rgba(0,0,0,0.12);"></div>
<div style="left:251px;top:317px;width:1px;height:13px;background:rgba(0,0,0,0.12);"></div>
<div style="left:262px;top:317px;width:1px;height:13px;background:rgba(0,0,0,0.12);"></div>
<div style="left:273px;top:317px;width:1px;height:13px;background:rgba(0,0,0,0.12);"></div>
<div style="left:284px;top:317px;width:1px;height:13px;background:rgba(0,0,0,0.12);"></div>
<div style="left:295px;top:317px;width:1px;height:13px;background:rgba(0,0,0,0.12);"></div>
<div style="left:306px;top:317px;width:1px;height:13px;background:rgba(0,0,0,0.12);"></div>
<div style="left:317px;top:317px;width:1px;height:13px;background:rgba(0,0,0,0.12);"></div>
<div style="left:328px;top:317px;width:1px;height:13px;background:rgba(0,0,0,0.12);"></div>
<div style="left:339px;top:317px;width:1px;height:13px;background:rgba(0,0,0,0.12);"></div>
<div style="left:350px;top:317px;width:1px;height:13px;background:rgba(0,0,0,0.12);"></div>
<div style="left:361px;top:317px;width:1px;height:13px;background:rgba(0,0,0,0.12);"></div>
<div style="left:372px;top:317px;width:1px;height:13px;background:rgba(0,0,0,0.12);"></div>
<div style="left:383px;top:317px;width:1px;height:13px;background:rgba(0,0,0,0.12);"></div>
<div style="left:394px;top:317px;width:1px;height:13px;background:rgba(0,0,0,0.12);"></div>
<div style="left:405px;top:317px;width:1px;height:13px;background:rgba(0,0,0,0.12);"></div>
<div style="left:416px;top:317px;width:1px;height:13px;background:rgba(0,0,0,0.12);"></div>
<div style="left:427px;top:317px;width:1px;height:13px;background:rgba(0,0,0,0.12);"></div>
<div style="left:438px;top:317px;width:1px;height:13px;background:rgba(0,0,0,0.12);"></div>
<div style="left:449px;top:317px;width:1px;height:13px;background:rgba(0,0,0,0.12);"></div>
<div style="left:460px;top:317px;width:1px;height:13px;background:rgba(0,0,0,0.12);"></div>
<div style="left:471px;top:317px;width:1px;height:13px;background:rgba(0,0,0,0.12);"></div>
<div style="left:482px;top:317px;width:1px;height:13px;background:rgba(0,0,0,0.12);"></div>
<div style="left:493px;top:317px;width:1px;height:13px;background:rgba(0,0,0,0.12);"></div>
<div style="left:504px;top:317px;width:1px;height:13px;background:rgba(0,0,0,0.12);"></div>
<div style="left:515px;top:317px;width:1px;height:13px;background:rgba(0,0,0,0.12);"></div>
<div style="left:526px;top:317px;width:1px;height:13px;background:rgba(0,0,0,0.12);"></div>
<div style="left:537px;top:317px;width:1px;height:13px;background:rgba(0,0,0,0.12);"></div>
<div style="left:548px;top:317px;width:1px;height:13px;background:rgba(0,0,0,0.12);"></div>
<div style="left:559px;top:317px;width:1px;height:13px;background:rgba(0,0,0,0.12);"></div>
<div style="left:570px;top:317px;width:1px;height:13px;background:rgba(0,0,0,0.12);"></div>
<div style="left:581px;top:317px;width:1px;height:13px;background:rgba(0,0,0,0.12);"></div>
<div style="left:592px;top:317px;width:1px;height:13px;background:rgba(0,0,0,0.12);"></div>
<div style="left:603px;top:317px;width:1px;height:13px;background:rgba(0,0,0,0.12);"></div>
<div style="left:614px;top:317px;width:1px;height:13px;background:rgba(0,0,0,0.12);"></div>
<div style="left:625px;top:317px;width:1px;height:13px;background:rgba(0,0,0,0.12);"></div>
<div style="left:636px;top:317px;width:1px;height:13px;background:rgba(0,0,0,0.12);"></div>
<div style="left:647px;top:317px;width:1px;height:13px;background:rgba(0,0,0,0.12);"></div>
<div style="left:658px;top:317px;width:1px;height:13px;background:rgba(0,0,0,0.12);"></div>
<div style="left:669px;top:317px;width:1px;height:13px;background:rgba(0,0,0,0.12);"></div>
<div style="left:680px;top:317px;width:1px;height:13px;background:rgba(0,0,0,0.12);"></div>
<div style="left:691px;top:317px;width:1px;height:13px;background:rgba(0,0,0,0.12);"></div>
<div style="left:702px;top:317px;width:1px;height:13px;background:rgba(0,0,0,0.12);"></div>
<div style="left:713px;top:317px;width:1px;height:13px;background:rgba(0,0,0,0.12);"></div>
<div style="left:724px;top:317px;width:1px;height:13px;background:rgba(0,0,0,0.12);"></div>
<div style="left:8px;top:332px;width:22px;height:44px;background:#ff93a4;"></div>
<div style="left:8px;top:346px;width:22px;height:1px;background:rgba(0,0,0,0.28);"></div>
<div style="left:8px;top:332px;width:1px;height:44px;background:rgba(0,0,0,0.3);"></div>
<div style="left:19px;top:346px;width:1px;height:30px;background:rgba(0,0,0,0.08);"></div>
<div style="left:8px;top:346px;width:22px;height:1px;background:rgba(0,0,0,0.2);"></div>
<div style="left:8px;top:353px;width:22px;height:1.3px;background:rgba(50,15,25,0.7);"></div>
<div style="left:8px;top:368px;width:22px;height:1.3px;background:rgba(50,15,25,0.7);"></div>
<span style="left:10px;top:337px;color:#40202a;font-size:5px;">&bull;&bull;&bull;</span>
<div style="left:30px;top:332px;width:177px;height:44px;background:#ff93a4;"></div>
<div style="left:30px;top:346px;width:177px;height:1px;background:rgba(0,0,0,0.28);"></div>
<div style="left:30px;top:332px;width:1px;height:44px;background:rgba(0,0,0,0.3);"></div>
<div style="left:41px;top:346px;width:1px;height:30px;background:rgba(0,0,0,0.08);"></div>
<div style="left:52px;top:346px;width:1px;height:30px;background:rgba(0,0,0,0.08);"></div>
<div style="left:63px;top:346px;width:1px;height:30px;background:rgba(0,0,0,0.08);"></div>
<div style="left:74px;top:346px;width:1px;height:30px;background:rgba(0,0,0,0.08);"></div>
<div style="left:86px;top:346px;width:1px;height:30px;background:rgba(0,0,0,0.08);"></div>
<div style="left:97px;top:346px;width:1px;height:30px;background:rgba(0,0,0,0.08);"></div>
<div style="left:108px;top:346px;width:1px;height:30px;background:rgba(0,0,0,0.08);"></div>
<div style="left:119px;top:346px;width:1px;height:30px;background:rgba(0,0,0,0.08);"></div>
<div style="left:130px;top:346px;width:1px;height:30px;background:rgba(0,0,0,0.08);"></div>
<div style="left:141px;top:346px;width:1px;height:30px;background:rgba(0,0,0,0.08);"></div>
<div style="left:152px;top:346px;width:1px;height:30px;background:rgba(0,0,0,0.08);"></div>
<div style="left:163px;top:346px;width:1px;height:30px;background:rgba(0,0,0,0.08);"></div>
<div style="left:174px;top:346px;width:1px;height:30px;background:rgba(0,0,0,0.08);"></div>
<div style="left:185px;top:346px;width:1px;height:30px;background:rgba(0,0,0,0.08);"></div>
<div style="left:196px;top:346px;width:1px;height:30px;background:rgba(0,0,0,0.08);"></div>
<div style="left:30px;top:346px;width:177px;height:1px;background:rgba(0,0,0,0.2);"></div>
<div style="left:30px;top:353px;width:177px;height:1.3px;background:rgba(50,15,25,0.7);"></div>
<div style="left:30px;top:368px;width:177px;height:1.3px;background:rgba(50,15,25,0.7);"></div>
<div style="left:383px;top:332px;width:176px;height:44px;background:#ff93a4;"></div>
<div style="left:383px;top:346px;width:176px;height:1px;background:rgba(0,0,0,0.28);"></div>
<div style="left:383px;top:332px;width:1px;height:44px;background:rgba(0,0,0,0.3);"></div>
<div style="left:394px;top:346px;width:1px;height:30px;background:rgba(0,0,0,0.08);"></div>
<div style="left:405px;top:346px;width:1px;height:30px;background:rgba(0,0,0,0.08);"></div>
<div style="left:416px;top:346px;width:1px;height:30px;background:rgba(0,0,0,0.08);"></div>
<div style="left:427px;top:346px;width:1px;height:30px;background:rgba(0,0,0,0.08);"></div>
<div style="left:438px;top:346px;width:1px;height:30px;background:rgba(0,0,0,0.08);"></div>
<div style="left:449px;top:346px;width:1px;height:30px;background:rgba(0,0,0,0.08);"></div>
<div style="left:460px;top:346px;width:1px;height:30px;background:rgba(0,0,0,0.08);"></div>
<div style="left:471px;top:346px;width:1px;height:30px;background:rgba(0,0,0,0.08);"></div>
<div style="left:482px;top:346px;width:1px;height:30px;background:rgba(0,0,0,0.08);"></div>
<div style="left:493px;top:346px;width:1px;height:30px;background:rgba(0,0,0,0.08);"></div>
<div style="left:504px;top:346px;width:1px;height:30px;background:rgba(0,0,0,0.08);"></div>
<div style="left:515px;top:346px;width:1px;height:30px;background:rgba(0,0,0,0.08);"></div>
<div style="left:526px;top:346px;width:1px;height:30px;background:rgba(0,0,0,0.08);"></div>
<div style="left:537px;top:346px;width:1px;height:30px;background:rgba(0,0,0,0.08);"></div>
<div style="left:548px;top:346px;width:1px;height:30px;background:rgba(0,0,0,0.08);"></div>
<div style="left:383px;top:346px;width:176px;height:1px;background:rgba(0,0,0,0.2);"></div>
<div style="left:383px;top:353px;width:176px;height:1.3px;background:rgba(50,15,25,0.7);"></div>
<div style="left:383px;top:368px;width:176px;height:1.3px;background:rgba(50,15,25,0.7);"></div>
<div style="left:735px;top:332px;width:176px;height:44px;background:#ff93a4;"></div>
<div style="left:735px;top:346px;width:176px;height:1px;background:rgba(0,0,0,0.28);"></div>
<div style="left:735px;top:332px;width:1px;height:44px;background:rgba(0,0,0,0.3);"></div>
<div style="left:746px;top:346px;width:1px;height:30px;background:rgba(0,0,0,0.08);"></div>
<div style="left:757px;top:346px;width:1px;height:30px;background:rgba(0,0,0,0.08);"></div>
<div style="left:768px;top:346px;width:1px;height:30px;background:rgba(0,0,0,0.08);"></div>
<div style="left:779px;top:346px;width:1px;height:30px;background:rgba(0,0,0,0.08);"></div>
<div style="left:790px;top:346px;width:1px;height:30px;background:rgba(0,0,0,0.08);"></div>
<div style="left:801px;top:346px;width:1px;height:30px;background:rgba(0,0,0,0.08);"></div>
<div style="left:812px;top:346px;width:1px;height:30px;background:rgba(0,0,0,0.08);"></div>
<div style="left:823px;top:346px;width:1px;height:30px;background:rgba(0,0,0,0.08);"></div>
<div style="left:834px;top:346px;width:1px;height:30px;background:rgba(0,0,0,0.08);"></div>
<div style="left:845px;top:346px;width:1px;height:30px;background:rgba(0,0,0,0.08);"></div>
<div style="left:856px;top:346px;width:1px;height:30px;background:rgba(0,0,0,0.08);"></div>
<div style="left:867px;top:346px;width:1px;height:30px;background:rgba(0,0,0,0.08);"></div>
<div style="left:878px;top:346px;width:1px;height:30px;background:rgba(0,0,0,0.08);"></div>
<div style="left:889px;top:346px;width:1px;height:30px;background:rgba(0,0,0,0.08);"></div>
<div style="left:900px;top:346px;width:1px;height:30px;background:rgba(0,0,0,0.08);"></div>
<div style="left:735px;top:346px;width:176px;height:1px;background:rgba(0,0,0,0.2);"></div>
<div style="left:735px;top:353px;width:176px;height:1.3px;background:rgba(50,15,25,0.7);"></div>
<div style="left:735px;top:368px;width:176px;height:1.3px;background:rgba(50,15,25,0.7);"></div>
<div style="left:30px;top:377px;width:177px;height:15px;background:#ff93a4;"></div>
<div style="left:30px;top:377px;width:1px;height:15px;background:rgba(0,0,0,0.2);"></div>
<div style="left:366px;top:377px;width:21px;height:15px;background:#ff93a4;"></div>
<div style="left:366px;top:377px;width:1px;height:15px;background:rgba(0,0,0,0.2);"></div>
<div style="left:471px;top:377px;width:88px;height:15px;background:#ff93a4;"></div>
<div style="left:471px;top:377px;width:1px;height:15px;background:rgba(0,0,0,0.2);"></div>
<div style="left:718px;top:377px;width:16px;height:15px;background:#ff93a4;"></div>
<div style="left:718px;top:377px;width:1px;height:15px;background:rgba(0,0,0,0.2);"></div>
<div style="left:823px;top:377px;width:88px;height:15px;background:#ff93a4;"></div>
<div style="left:823px;top:377px;width:1px;height:15px;background:rgba(0,0,0,0.2);"></div>
<svg style="position:absolute;left:540px;top:346px" width="18" height="30"><path d="M0 0H18V30Z" fill="rgba(110,40,55,0.22)"/></svg>
<svg style="position:absolute;left:890px;top:346px" width="20" height="30"><path d="M0 0H20V30Z" fill="rgba(110,40,55,0.22)"/></svg>
<svg style="position:absolute;left:366px;top:377px" width="6" height="15"><path d="M0 0H6L0 15Z" fill="rgba(110,40,55,0.22)"/></svg>
<svg style="position:absolute;left:471px;top:377px" width="24" height="15"><path d="M0 0H24L0 15Z" fill="rgba(110,40,55,0.22)"/></svg>
<svg style="position:absolute;left:548px;top:377px" width="10" height="15"><path d="M0 0H10V15Z" fill="rgba(110,40,55,0.22)"/></svg>
<svg style="position:absolute;left:718px;top:377px" width="5" height="15"><path d="M0 0H5L0 15Z" fill="rgba(110,40,55,0.22)"/></svg>
<svg style="position:absolute;left:823px;top:377px" width="24" height="15"><path d="M0 0H24L0 15Z" fill="rgba(110,40,55,0.22)"/></svg>
<svg style="position:absolute;left:903px;top:377px" width="7" height="15"><path d="M0 0H7V15Z" fill="rgba(110,40,55,0.22)"/></svg>
<div style="left:163px;top:393px;width:44px;height:15px;background:#d86ce8;"></div>
<div style="left:471px;top:393px;width:88px;height:15px;background:#d86ce8;"></div>
<div style="left:823px;top:393px;width:88px;height:15px;background:#d86ce8;"></div>
<div style="left:30px;top:409px;width:177px;height:15px;background:#d86ce8;"></div>
<div style="left:383px;top:409px;width:176px;height:15px;background:#d86ce8;"></div>
<div style="left:8px;top:116.7px;width:997px;height:1.6px;background:#1e1e1e;opacity:0.85"></div>
<div style="left:8px;top:161.7px;width:997px;height:1.6px;background:#1e1e1e;opacity:0.85"></div>
<div style="left:8px;top:177.7px;width:997px;height:1.6px;background:#1e1e1e;opacity:0.85"></div>
<div style="left:8px;top:222.7px;width:997px;height:1.6px;background:#1e1e1e;opacity:0.85"></div>
<div style="left:8px;top:238.7px;width:997px;height:1.6px;background:#1e1e1e;opacity:0.85"></div>
<div style="left:8px;top:269.7px;width:997px;height:1.6px;background:#1e1e1e;opacity:0.85"></div>
<div style="left:8px;top:314.7px;width:997px;height:1.6px;background:#1e1e1e;opacity:0.85"></div>
<div style="left:8px;top:330.7px;width:997px;height:1.6px;background:#1e1e1e;opacity:0.85"></div>
<div style="left:8px;top:375.7px;width:997px;height:1.6px;background:#1e1e1e;opacity:0.85"></div>
<div style="left:8px;top:391.7px;width:997px;height:1.6px;background:#1e1e1e;opacity:0.85"></div>
<div style="left:8px;top:407.7px;width:997px;height:1.6px;background:#1e1e1e;opacity:0.85"></div>
<div style="left:8px;top:423.7px;width:997px;height:1.6px;background:#1e1e1e;opacity:0.85"></div>
<div style="left:8px;top:72.2px;width:997px;height:1.2px;background:#1e1e1e;opacity:0.85"></div>
<div style="left:520px;top:73px;width:1px;height:386px;background:#1c1c1c;"></div>
<div style="left:520px;top:163px;width:1px;height:16px;background:#e0e0e0;"></div>
<div style="left:520px;top:224px;width:1px;height:16px;background:#e0e0e0;"></div>
<div style="left:520px;top:271px;width:1px;height:45px;background:#e0e0e0;"></div>
<div style="left:520px;top:316px;width:1px;height:16px;background:#e0e0e0;"></div>
<div style="left:520px;top:424px;width:1px;height:35px;background:#e0e0e0;"></div>
<span style="left:979px;top:444.5px;color:#8a8a8a;font-size:14px;letter-spacing:0.8px;line-height:13px">1/2</span>
<div style="left:8px;top:459px;width:997px;height:19px;background:#333333;"></div>
<div style="left:0px;top:478px;width:1200px;height:2px;background:#222222;"></div>
<div style="left:15.5px;top:460.5px;width:1px;height:6px;background:#6a6a6a;"></div>
<span style="left:17.5px;top:460.5px;color:#a0a0a0;font-size:9.5px;">0:10</span>
<div style="left:31.5px;top:460.5px;width:1px;height:1.5px;background:#555555;"></div>
<div style="left:47.5px;top:460.5px;width:1px;height:1.5px;background:#555555;"></div>
<div style="left:63.5px;top:460.5px;width:1px;height:1.5px;background:#555555;"></div>
<div style="left:79.5px;top:460.5px;width:1px;height:1.5px;background:#555555;"></div>
<div style="left:95.5px;top:460.5px;width:1px;height:6px;background:#6a6a6a;"></div>
<span style="left:97.5px;top:460.5px;color:#a0a0a0;font-size:9.5px;">0:15</span>
<div style="left:111.5px;top:460.5px;width:1px;height:1.5px;background:#555555;"></div>
<div style="left:127.5px;top:460.5px;width:1px;height:1.5px;background:#555555;"></div>
<div style="left:143.5px;top:460.5px;width:1px;height:1.5px;background:#555555;"></div>
<div style="left:159.5px;top:460.5px;width:1px;height:1.5px;background:#555555;"></div>
<div style="left:175.5px;top:460.5px;width:1px;height:6px;background:#6a6a6a;"></div>
<span style="left:177.5px;top:460.5px;color:#a0a0a0;font-size:9.5px;">0:20</span>
<div style="left:191.5px;top:460.5px;width:1px;height:1.5px;background:#555555;"></div>
<div style="left:208.5px;top:460.5px;width:1px;height:1.5px;background:#555555;"></div>
<div style="left:224.5px;top:460.5px;width:1px;height:1.5px;background:#555555;"></div>
<div style="left:240.5px;top:460.5px;width:1px;height:1.5px;background:#555555;"></div>
<div style="left:256.5px;top:460.5px;width:1px;height:6px;background:#6a6a6a;"></div>
<span style="left:258.5px;top:460.5px;color:#a0a0a0;font-size:9.5px;">0:25</span>
<div style="left:272.5px;top:460.5px;width:1px;height:1.5px;background:#555555;"></div>
<div style="left:288.5px;top:460.5px;width:1px;height:1.5px;background:#555555;"></div>
<div style="left:304.5px;top:460.5px;width:1px;height:1.5px;background:#555555;"></div>
<div style="left:320.5px;top:460.5px;width:1px;height:1.5px;background:#555555;"></div>
<div style="left:336.5px;top:460.5px;width:1px;height:6px;background:#6a6a6a;"></div>
<span style="left:338.5px;top:460.5px;color:#a0a0a0;font-size:9.5px;">0:30</span>
<div style="left:352.5px;top:460.5px;width:1px;height:1.5px;background:#555555;"></div>
<div style="left:368.5px;top:460.5px;width:1px;height:1.5px;background:#555555;"></div>
<div style="left:384.5px;top:460.5px;width:1px;height:1.5px;background:#555555;"></div>
<div style="left:400.5px;top:460.5px;width:1px;height:1.5px;background:#555555;"></div>
<div style="left:416.5px;top:460.5px;width:1px;height:6px;background:#6a6a6a;"></div>
<span style="left:418.5px;top:460.5px;color:#a0a0a0;font-size:9.5px;">0:35</span>
<div style="left:432.5px;top:460.5px;width:1px;height:1.5px;background:#555555;"></div>
<div style="left:448.5px;top:460.5px;width:1px;height:1.5px;background:#555555;"></div>
<div style="left:464.5px;top:460.5px;width:1px;height:1.5px;background:#555555;"></div>
<div style="left:480.5px;top:460.5px;width:1px;height:1.5px;background:#555555;"></div>
<div style="left:497.5px;top:460.5px;width:1px;height:6px;background:#6a6a6a;"></div>
<span style="left:499.5px;top:460.5px;color:#a0a0a0;font-size:9.5px;">0:40</span>
<div style="left:513.5px;top:460.5px;width:1px;height:1.5px;background:#555555;"></div>
<div style="left:529.5px;top:460.5px;width:1px;height:1.5px;background:#555555;"></div>
<div style="left:545.5px;top:460.5px;width:1px;height:1.5px;background:#555555;"></div>
<div style="left:561.5px;top:460.5px;width:1px;height:1.5px;background:#555555;"></div>
<div style="left:577.5px;top:460.5px;width:1px;height:6px;background:#6a6a6a;"></div>
<span style="left:579.5px;top:460.5px;color:#a0a0a0;font-size:9.5px;">0:45</span>
<div style="left:593.5px;top:460.5px;width:1px;height:1.5px;background:#555555;"></div>
<div style="left:609.5px;top:460.5px;width:1px;height:1.5px;background:#555555;"></div>
<div style="left:625.5px;top:460.5px;width:1px;height:1.5px;background:#555555;"></div>
<div style="left:641.5px;top:460.5px;width:1px;height:1.5px;background:#555555;"></div>
<div style="left:657.5px;top:460.5px;width:1px;height:6px;background:#6a6a6a;"></div>
<span style="left:659.5px;top:460.5px;color:#a0a0a0;font-size:9.5px;">0:50</span>
<div style="left:673.5px;top:460.5px;width:1px;height:1.5px;background:#555555;"></div>
<div style="left:689.5px;top:460.5px;width:1px;height:1.5px;background:#555555;"></div>
<div style="left:705.5px;top:460.5px;width:1px;height:1.5px;background:#555555;"></div>
<div style="left:721.5px;top:460.5px;width:1px;height:1.5px;background:#555555;"></div>
<div style="left:737.5px;top:460.5px;width:1px;height:6px;background:#6a6a6a;"></div>
<span style="left:739.5px;top:460.5px;color:#a0a0a0;font-size:9.5px;">0:55</span>
<div style="left:753.5px;top:460.5px;width:1px;height:1.5px;background:#555555;"></div>
<div style="left:769.5px;top:460.5px;width:1px;height:1.5px;background:#555555;"></div>
<div style="left:786.5px;top:460.5px;width:1px;height:1.5px;background:#555555;"></div>
<div style="left:802.5px;top:460.5px;width:1px;height:1.5px;background:#555555;"></div>
<div style="left:818.5px;top:460.5px;width:1px;height:6px;background:#6a6a6a;"></div>
<span style="left:820.5px;top:460.5px;color:#a0a0a0;font-size:9.5px;">1:00</span>
<div style="left:834.5px;top:460.5px;width:1px;height:1.5px;background:#555555;"></div>
<div style="left:850.5px;top:460.5px;width:1px;height:1.5px;background:#555555;"></div>
<div style="left:866.5px;top:460.5px;width:1px;height:1.5px;background:#555555;"></div>
<div style="left:882.5px;top:460.5px;width:1px;height:1.5px;background:#555555;"></div>
<div style="left:898.5px;top:460.5px;width:1px;height:6px;background:#6a6a6a;"></div>
<span style="left:900.5px;top:460.5px;color:#a0a0a0;font-size:9.5px;">1:05</span>
<div style="left:914.5px;top:460.5px;width:1px;height:1.5px;background:#555555;"></div>
<div style="left:930.5px;top:460.5px;width:1px;height:1.5px;background:#555555;"></div>
<div style="left:946.5px;top:460.5px;width:1px;height:1.5px;background:#555555;"></div>
<div style="left:962.5px;top:460.5px;width:1px;height:1.5px;background:#555555;"></div>
<div style="left:978.5px;top:460.5px;width:1px;height:6px;background:#6a6a6a;"></div>
<span style="left:980.5px;top:460.5px;color:#a0a0a0;font-size:9.5px;">1:10</span>
<div style="left:994.5px;top:460.5px;width:1px;height:1.5px;background:#555555;"></div>
<svg style="position:absolute;left:380px;top:460.5px" width="7" height="5"><path d="M0 5H7L3.5 0Z" fill="#39c6d0"/></svg>
<div style="left:1005px;top:38px;width:187px;height:440px;background:#323232;"></div>
<div style="left:1192px;top:38px;width:8px;height:672px;background:#2b2b2b;"></div>
<div style="left:1192px;top:38px;width:1.5px;height:672px;background:#242424;"></div>
<div style="left:1005px;top:72px;width:187px;height:1px;background:#262626;"></div>
<div style="left:1008px;top:43px;width:24px;height:10px;background:#222;border-radius:5px;color:#c8c8c8;font-size:9px;line-height:10px;text-align:center">Set</div>
<div style="left:1041px;top:43px;width:19px;height:10px;background:#242424;"></div>
<div style="left:1063px;top:43px;width:19.5px;height:10px;background:#242424;"></div>
<svg style="position:absolute;left:1046px;top:44px" width="9" height="8"><path d="M1 7L8 1" stroke="#c8c8c8" stroke-width="1.4"/><circle cx="7.5" cy="1.5" r="1.3" fill="#c8c8c8"/><circle cx="1.5" cy="6.5" r="1.3" fill="#c8c8c8"/></svg>
<svg style="position:absolute;left:1068px;top:44px" width="9" height="8"><rect x="1" y="3.5" width="7" height="4.5" fill="#c8c8c8"/><path d="M2.5 4V2.5A2 2 0 0 1 6.5 2.5V4" stroke="#c8c8c8" stroke-width="1.1" fill="none"/></svg>
<svg style="position:absolute;left:1008px;top:58px" width="10" height="10"><circle cx="5" cy="5" r="5" fill="#222"/><path d="M7.5 5H2.5M4.5 3L2.5 5L4.5 7" stroke="#c8c8c8" stroke-width="1.2" fill="none"/></svg>
<svg style="position:absolute;left:1021px;top:58px" width="10" height="10"><circle cx="5" cy="5" r="5" fill="#222"/><path d="M2.5 5H7.5M5.5 3L7.5 5L5.5 7" stroke="#c8c8c8" stroke-width="1.2" fill="none"/></svg>
<div style="left:1093px;top:179px;width:99px;height:44px;background:#3d3d3d;"></div>
<div style="left:1006px;top:73px;width:86px;height:44px;background:#92a6ff;"></div>
<svg style="position:absolute;left:1008px;top:75px" width="11" height="11"><circle cx="5.5" cy="5.5" r="4.75" fill="none" stroke="rgba(0,0,0,0.7)" stroke-width="1.15"/><path d="M2.7 4.2H8.3L5.5 7.5Z" fill="rgba(0,0,0,0.7)"/></svg>
<span style="left:1025px;top:75.5px;color:rgba(0,0,0,0.66);font-size:9px;line-height:11px;-webkit-text-stroke:0.45px currentColor">Drums</span>
<div style="left:1096px;top:76px;width:37px;height:9px;background:#ffa64f;color:#2a2a2a;font-size:9px;line-height:9px;text-align:center;font-weight:bold">1</div>
<div style="left:1137px;top:75px;width:17px;height:11px;background:#222222;color:#bdbdbd;font-size:9px;line-height:11px;text-align:center;font-weight:bold">S</div>
<div style="left:1158px;top:75px;width:17px;height:11px;background:#222222;"></div>
<svg style="position:absolute;left:1162px;top:76.5px" width="9" height="9"><circle cx="4.5" cy="4.5" r="3.5" fill="#c4c4c4"/><path d="M5.2 2V5.8" stroke="#2a2a2a" stroke-width="0.9"/><ellipse cx="4.1" cy="5.9" rx="1.2" ry="0.9" fill="#2a2a2a"/></svg>
<div style="left:1096px;top:90px;width:37px;height:10px;background:#252525;"></div>
<div style="left:1096px;top:90px;width:30px;height:10px;background:#10808f;"></div>
<div style="left:1096px;top:90px;width:37px;height:10px;background:transparent;color:#9fc8d0;font-size:9px;line-height:10px;text-align:center;">-1.0</div>
<div style="left:1137px;top:90px;width:38px;height:10px;background:#252525;color:#bdbdbd;font-size:9px;line-height:10px;text-align:center;">C</div>
<div style="left:1096px;top:103px;width:24px;height:11px;background:#252525;color:#b0b0b0;font-size:9px;line-height:11px;text-align:center;">-52.8</div>
<div style="left:1123px;top:103px;width:24px;height:11px;background:#252525;color:#b0b0b0;font-size:9px;line-height:11px;text-align:center;">&minus;<span style="font-size:12px;position:relative;top:0.5px">&infin;</span></div>
<div style="left:1178px;top:75px;width:7px;height:40px;background:#262626;"></div>
<div style="left:1181px;top:75px;width:0.8px;height:40px;background:#3a3a3a;"></div>
<div style="left:1005px;top:117px;width:187px;height:1px;background:#262626;"></div>
<div style="left:1006px;top:118px;width:86px;height:44px;background:#92a6ff;"></div>
<svg style="position:absolute;left:1008px;top:120px" width="11" height="11"><circle cx="5.5" cy="5.5" r="4.75" fill="none" stroke="rgba(0,0,0,0.7)" stroke-width="1.15"/><path d="M2.7 4.2H8.3L5.5 7.5Z" fill="rgba(0,0,0,0.7)"/></svg>
<span style="left:1025px;top:120.5px;color:rgba(0,0,0,0.66);font-size:9px;line-height:11px;-webkit-text-stroke:0.45px currentColor">Breaks</span>
<div style="left:1096px;top:121px;width:37px;height:9px;background:#ffa64f;color:#2a2a2a;font-size:9px;line-height:9px;text-align:center;font-weight:bold">2</div>
<div style="left:1137px;top:120px;width:17px;height:11px;background:#222222;color:#bdbdbd;font-size:9px;line-height:11px;text-align:center;font-weight:bold">S</div>
<div style="left:1158px;top:120px;width:17px;height:11px;background:#222222;"></div>
<svg style="position:absolute;left:1162px;top:121.5px" width="9" height="9"><circle cx="4.5" cy="4.5" r="3.4" fill="#6a6a6a"/></svg>
<div style="left:1096px;top:135px;width:37px;height:10px;background:#252525;"></div>
<div style="left:1096px;top:135px;width:23px;height:10px;background:#10808f;"></div>
<div style="left:1096px;top:135px;width:37px;height:10px;background:transparent;color:#9fc8d0;font-size:9px;line-height:10px;text-align:center;">-9.4</div>
<div style="left:1137px;top:135px;width:38px;height:10px;background:#252525;color:#bdbdbd;font-size:9px;line-height:10px;text-align:center;">C</div>
<div style="left:1096px;top:148px;width:24px;height:11px;background:#252525;color:#b0b0b0;font-size:9px;line-height:11px;text-align:center;">&minus;<span style="font-size:12px;position:relative;top:0.5px">&infin;</span></div>
<div style="left:1123px;top:148px;width:24px;height:11px;background:#252525;color:#b0b0b0;font-size:9px;line-height:11px;text-align:center;">&minus;<span style="font-size:12px;position:relative;top:0.5px">&infin;</span></div>
<div style="left:1178px;top:120px;width:7px;height:40px;background:#262626;"></div>
<div style="left:1181px;top:120px;width:0.8px;height:40px;background:#3a3a3a;"></div>
<div style="left:1005px;top:162px;width:187px;height:1px;background:#262626;"></div>
<div style="left:1006px;top:163px;width:86px;height:15px;background:#8fc6ff;"></div>
<svg style="position:absolute;left:1008px;top:165px" width="11" height="11"><circle cx="5.5" cy="5.5" r="4.75" fill="none" stroke="rgba(0,0,0,0.7)" stroke-width="1.15"/><path d="M3.3 3.7H7.7M3.3 5.5H7.7M3.3 7.3H7.7" stroke="rgba(0,0,0,0.7)" stroke-width="0.9"/></svg>
<span style="left:1025px;top:165.5px;color:rgba(0,0,0,0.66);font-size:9px;line-height:11px;-webkit-text-stroke:0.45px currentColor">Percussion</span>
<div style="left:1096px;top:166px;width:37px;height:9px;background:#ffa64f;color:#2a2a2a;font-size:9px;line-height:9px;text-align:center;font-weight:bold">3</div>
<div style="left:1137px;top:165px;width:17px;height:11px;background:#222222;color:#bdbdbd;font-size:9px;line-height:11px;text-align:center;font-weight:bold">S</div>
<div style="left:1178px;top:165px;width:7px;height:11px;background:#262626;"></div>
<div style="left:1181px;top:165px;width:0.8px;height:11px;background:#3a3a3a;"></div>
<div style="left:1005px;top:178px;width:187px;height:1px;background:#262626;"></div>
<div style="left:1006px;top:179px;width:86px;height:44px;background:#5dffe6;"></div>
<svg style="position:absolute;left:1008px;top:181px" width="11" height="11"><circle cx="5.5" cy="5.5" r="4.75" fill="none" stroke="rgba(0,0,0,0.7)" stroke-width="1.15"/><path d="M2.7 4.2H8.3L5.5 7.5Z" fill="rgba(0,0,0,0.7)"/></svg>
<span style="left:1025px;top:181.5px;color:rgba(0,0,0,0.66);font-size:9px;line-height:11px;-webkit-text-stroke:0.45px currentColor">Bass</span>
<div style="left:1096px;top:182px;width:37px;height:9px;background:#ffa64f;color:#2a2a2a;font-size:9px;line-height:9px;text-align:center;font-weight:bold">8</div>
<div style="left:1137px;top:181px;width:17px;height:11px;background:#222222;color:#bdbdbd;font-size:9px;line-height:11px;text-align:center;font-weight:bold">S</div>
<div style="left:1158px;top:181px;width:17px;height:11px;background:#222222;"></div>
<svg style="position:absolute;left:1162px;top:182.5px" width="9" height="9"><circle cx="4.5" cy="4.5" r="3.5" fill="#c4c4c4"/><path d="M5.2 2V5.8" stroke="#2a2a2a" stroke-width="0.9"/><ellipse cx="4.1" cy="5.9" rx="1.2" ry="0.9" fill="#2a2a2a"/></svg>
<div style="left:1096px;top:196px;width:37px;height:10px;background:#252525;"></div>
<div style="left:1096px;top:196px;width:24px;height:10px;background:#10808f;"></div>
<div style="left:1096px;top:196px;width:37px;height:10px;background:transparent;color:#9fc8d0;font-size:9px;line-height:10px;text-align:center;">-7.7</div>
<div style="left:1137px;top:196px;width:38px;height:10px;background:#252525;color:#bdbdbd;font-size:9px;line-height:10px;text-align:center;">C</div>
<div style="left:1096px;top:209px;width:24px;height:11px;background:#252525;color:#b0b0b0;font-size:9px;line-height:11px;text-align:center;">&minus;<span style="font-size:12px;position:relative;top:0.5px">&infin;</span></div>
<div style="left:1123px;top:209px;width:24px;height:11px;background:#252525;color:#b0b0b0;font-size:9px;line-height:11px;text-align:center;">&minus;<span style="font-size:12px;position:relative;top:0.5px">&infin;</span></div>
<div style="left:1178px;top:181px;width:7px;height:40px;background:#262626;"></div>
<div style="left:1181px;top:181px;width:0.8px;height:40px;background:#3a3a3a;"></div>
<div style="left:1005px;top:223px;width:187px;height:1px;background:#262626;"></div>
<div style="left:1006px;top:224px;width:86px;height:15px;background:#5dffe6;"></div>
<svg style="position:absolute;left:1008px;top:226px" width="11" height="11"><circle cx="5.5" cy="5.5" r="4.75" fill="none" stroke="rgba(0,0,0,0.7)" stroke-width="1.15"/><path d="M4.0 2.7V8.3L8.0 5.5Z" fill="rgba(0,0,0,0.7)"/></svg>
<span style="left:1025px;top:226.5px;color:rgba(0,0,0,0.66);font-size:9px;line-height:11px;-webkit-text-stroke:0.45px currentColor">Bass Drop</span>
<div style="left:1096px;top:227px;width:37px;height:9px;background:#ffa64f;color:#2a2a2a;font-size:9px;line-height:9px;text-align:center;font-weight:bold">9</div>
<div style="left:1137px;top:226px;width:17px;height:11px;background:#222222;color:#bdbdbd;font-size:9px;line-height:11px;text-align:center;font-weight:bold">S</div>
<div style="left:1158px;top:226px;width:17px;height:11px;background:#222222;"></div>
<svg style="position:absolute;left:1162px;top:227.5px" width="9" height="9"><circle cx="4.5" cy="4.5" r="3.5" fill="#c4c4c4"/><path d="M5.2 2V5.8" stroke="#2a2a2a" stroke-width="0.9"/><ellipse cx="4.1" cy="5.9" rx="1.2" ry="0.9" fill="#2a2a2a"/></svg>
<div style="left:1178px;top:226px;width:7px;height:11px;background:#262626;"></div>
<div style="left:1181px;top:226px;width:0.8px;height:11px;background:#3a3a3a;"></div>
<div style="left:1005px;top:239px;width:187px;height:1px;background:#262626;"></div>
<div style="left:1006px;top:240px;width:86px;height:30px;background:#eef6a8;"></div>
<svg style="position:absolute;left:1008px;top:242px" width="11" height="11"><circle cx="5.5" cy="5.5" r="4.75" fill="none" stroke="rgba(0,0,0,0.7)" stroke-width="1.15"/><path d="M2.7 4.2H8.3L5.5 7.5Z" fill="rgba(0,0,0,0.7)"/></svg>
<span style="left:1025px;top:242.5px;color:rgba(0,0,0,0.66);font-size:9px;line-height:11px;-webkit-text-stroke:0.45px currentColor">Synth Riser</span>
<div style="left:1096px;top:243px;width:37px;height:9px;background:#ffa64f;color:#2a2a2a;font-size:9px;line-height:9px;text-align:center;font-weight:bold">10</div>
<div style="left:1137px;top:242px;width:17px;height:11px;background:#222222;color:#bdbdbd;font-size:9px;line-height:11px;text-align:center;font-weight:bold">S</div>
<div style="left:1158px;top:242px;width:17px;height:11px;background:#222222;"></div>
<svg style="position:absolute;left:1162px;top:243.5px" width="9" height="9"><circle cx="4.5" cy="4.5" r="3.5" fill="#c4c4c4"/><path d="M5.2 2V5.8" stroke="#2a2a2a" stroke-width="0.9"/><ellipse cx="4.1" cy="5.9" rx="1.2" ry="0.9" fill="#2a2a2a"/></svg>
<div style="left:1096px;top:257px;width:37px;height:10px;background:#252525;"></div>
<div style="left:1096px;top:257px;width:15px;height:10px;background:#10808f;"></div>
<div style="left:1096px;top:257px;width:37px;height:10px;background:transparent;color:#9fc8d0;font-size:9px;line-height:10px;text-align:center;">-18.0</div>
<div style="left:1137px;top:257px;width:38px;height:10px;background:#252525;color:#bdbdbd;font-size:9px;line-height:10px;text-align:center;">C</div>
<div style="left:1178px;top:242px;width:7px;height:26px;background:#262626;"></div>
<div style="left:1181px;top:242px;width:0.8px;height:26px;background:#3a3a3a;"></div>
<div style="left:1005px;top:270px;width:187px;height:1px;background:#262626;"></div>
<div style="left:1006px;top:271px;width:86px;height:44px;background:#f8f47a;"></div>
<svg style="position:absolute;left:1008px;top:273px" width="11" height="11"><circle cx="5.5" cy="5.5" r="4.75" fill="none" stroke="rgba(0,0,0,0.7)" stroke-width="1.15"/><path d="M2.7 4.2H8.3L5.5 7.5Z" fill="rgba(0,0,0,0.7)"/></svg>
<span style="left:1025px;top:273.5px;color:rgba(0,0,0,0.66);font-size:9px;line-height:11px;-webkit-text-stroke:0.45px currentColor">Keys</span>
<div style="left:1096px;top:274px;width:37px;height:9px;background:#ffa64f;color:#2a2a2a;font-size:9px;line-height:9px;text-align:center;font-weight:bold">11</div>
<div style="left:1137px;top:273px;width:17px;height:11px;background:#222222;color:#bdbdbd;font-size:9px;line-height:11px;text-align:center;font-weight:bold">S</div>
<div style="left:1158px;top:273px;width:17px;height:11px;background:#222222;"></div>
<svg style="position:absolute;left:1162px;top:274.5px" width="9" height="9"><circle cx="4.5" cy="4.5" r="3.5" fill="#c4c4c4"/><path d="M5.2 2V5.8" stroke="#2a2a2a" stroke-width="0.9"/><ellipse cx="4.1" cy="5.9" rx="1.2" ry="0.9" fill="#2a2a2a"/></svg>
<div style="left:1096px;top:288px;width:37px;height:10px;background:#252525;"></div>
<div style="left:1096px;top:288px;width:26px;height:10px;background:#10808f;"></div>
<div style="left:1096px;top:288px;width:37px;height:10px;background:transparent;color:#9fc8d0;font-size:9px;line-height:10px;text-align:center;">-6.6</div>
<div style="left:1137px;top:288px;width:38px;height:10px;background:#252525;color:#bdbdbd;font-size:9px;line-height:10px;text-align:center;">C</div>
<div style="left:1096px;top:301px;width:24px;height:11px;background:#252525;color:#b0b0b0;font-size:9px;line-height:11px;text-align:center;">&minus;<span style="font-size:12px;position:relative;top:0.5px">&infin;</span></div>
<div style="left:1123px;top:301px;width:24px;height:11px;background:#252525;color:#b0b0b0;font-size:9px;line-height:11px;text-align:center;">&minus;<span style="font-size:12px;position:relative;top:0.5px">&infin;</span></div>
<div style="left:1178px;top:273px;width:7px;height:40px;background:#262626;"></div>
<div style="left:1181px;top:273px;width:0.8px;height:40px;background:#3a3a3a;"></div>
<div style="left:1005px;top:315px;width:187px;height:1px;background:#262626;"></div>
<div style="left:1006px;top:316px;width:86px;height:15px;background:#ffa472;"></div>
<svg style="position:absolute;left:1008px;top:318px" width="11" height="11"><circle cx="5.5" cy="5.5" r="4.75" fill="none" stroke="rgba(0,0,0,0.7)" stroke-width="1.15"/><path d="M3.3 3.7H7.7M3.3 5.5H7.7M3.3 7.3H7.7" stroke="rgba(0,0,0,0.7)" stroke-width="0.9"/></svg>
<span style="left:1025px;top:318.5px;color:rgba(0,0,0,0.66);font-size:9px;line-height:11px;-webkit-text-stroke:0.45px currentColor">Pads</span>
<div style="left:1096px;top:319px;width:37px;height:9px;background:#ffa64f;color:#2a2a2a;font-size:9px;line-height:9px;text-align:center;font-weight:bold">12</div>
<div style="left:1137px;top:318px;width:17px;height:11px;background:#222222;color:#bdbdbd;font-size:9px;line-height:11px;text-align:center;font-weight:bold">S</div>
<div style="left:1178px;top:318px;width:7px;height:11px;background:#262626;"></div>
<div style="left:1181px;top:318px;width:0.8px;height:11px;background:#3a3a3a;"></div>
<div style="left:1005px;top:331px;width:187px;height:1px;background:#262626;"></div>
<div style="left:1006px;top:332px;width:86px;height:44px;background:#ff93a4;"></div>
<svg style="position:absolute;left:1008px;top:334px" width="11" height="11"><circle cx="5.5" cy="5.5" r="4.75" fill="none" stroke="rgba(0,0,0,0.7)" stroke-width="1.15"/><path d="M2.7 4.2H8.3L5.5 7.5Z" fill="rgba(0,0,0,0.7)"/></svg>
<span style="left:1025px;top:334.5px;color:rgba(0,0,0,0.66);font-size:9px;line-height:11px;-webkit-text-stroke:0.45px currentColor">Ambience</span>
<div style="left:1096px;top:335px;width:37px;height:9px;background:#ffa64f;color:#2a2a2a;font-size:9px;line-height:9px;text-align:center;font-weight:bold">16</div>
<div style="left:1137px;top:334px;width:17px;height:11px;background:#222222;color:#bdbdbd;font-size:9px;line-height:11px;text-align:center;font-weight:bold">S</div>
<div style="left:1158px;top:334px;width:17px;height:11px;background:#222222;"></div>
<svg style="position:absolute;left:1162px;top:335.5px" width="9" height="9"><circle cx="4.5" cy="4.5" r="3.4" fill="#6a6a6a"/></svg>
<div style="left:1096px;top:349px;width:37px;height:10px;background:#252525;"></div>
<div style="left:1096px;top:349px;width:23px;height:10px;background:#10808f;"></div>
<div style="left:1096px;top:349px;width:37px;height:10px;background:transparent;color:#9fc8d0;font-size:9px;line-height:10px;text-align:center;">-8.3</div>
<div style="left:1137px;top:349px;width:38px;height:10px;background:#252525;color:#bdbdbd;font-size:9px;line-height:10px;text-align:center;">C</div>
<div style="left:1096px;top:362px;width:24px;height:11px;background:#252525;color:#b0b0b0;font-size:9px;line-height:11px;text-align:center;">&minus;<span style="font-size:12px;position:relative;top:0.5px">&infin;</span></div>
<div style="left:1123px;top:362px;width:24px;height:11px;background:#252525;color:#b0b0b0;font-size:9px;line-height:11px;text-align:center;">&minus;<span style="font-size:12px;position:relative;top:0.5px">&infin;</span></div>
<div style="left:1178px;top:334px;width:7px;height:40px;background:#262626;"></div>
<div style="left:1181px;top:334px;width:0.8px;height:40px;background:#3a3a3a;"></div>
<div style="left:1005px;top:376px;width:187px;height:1px;background:#262626;"></div>
<div style="left:1006px;top:377px;width:86px;height:15px;background:#ff93a4;"></div>
<svg style="position:absolute;left:1008px;top:379px" width="11" height="11"><circle cx="5.5" cy="5.5" r="4.75" fill="none" stroke="rgba(0,0,0,0.7)" stroke-width="1.15"/><path d="M4.0 2.7V8.3L8.0 5.5Z" fill="rgba(0,0,0,0.7)"/></svg>
<span style="left:1025px;top:379.5px;color:rgba(0,0,0,0.66);font-size:9px;line-height:11px;-webkit-text-stroke:0.45px currentColor">Drone</span>
<div style="left:1096px;top:380px;width:37px;height:9px;background:#ffa64f;color:#2a2a2a;font-size:9px;line-height:9px;text-align:center;font-weight:bold">17</div>
<div style="left:1137px;top:379px;width:17px;height:11px;background:#222222;color:#bdbdbd;font-size:9px;line-height:11px;text-align:center;font-weight:bold">S</div>
<div style="left:1158px;top:379px;width:17px;height:11px;background:#222222;"></div>
<svg style="position:absolute;left:1162px;top:380.5px" width="9" height="9"><circle cx="4.5" cy="4.5" r="3.4" fill="#6a6a6a"/></svg>
<div style="left:1178px;top:379px;width:7px;height:11px;background:#262626;"></div>
<div style="left:1181px;top:379px;width:0.8px;height:11px;background:#3a3a3a;"></div>
<div style="left:1005px;top:392px;width:187px;height:1px;background:#262626;"></div>
<div style="left:1006px;top:393px;width:86px;height:15px;background:#d86ce8;"></div>
<svg style="position:absolute;left:1008px;top:395px" width="11" height="11"><circle cx="5.5" cy="5.5" r="4.75" fill="none" stroke="rgba(0,0,0,0.7)" stroke-width="1.15"/><path d="M4.0 2.7V8.3L8.0 5.5Z" fill="rgba(0,0,0,0.7)"/></svg>
<span style="left:1025px;top:395.5px;color:rgba(0,0,0,0.66);font-size:9px;line-height:11px;-webkit-text-stroke:0.45px currentColor">FX</span>
<div style="left:1096px;top:396px;width:37px;height:9px;background:#ffa64f;color:#2a2a2a;font-size:9px;line-height:9px;text-align:center;font-weight:bold">18</div>
<div style="left:1137px;top:395px;width:17px;height:11px;background:#222222;color:#bdbdbd;font-size:9px;line-height:11px;text-align:center;font-weight:bold">S</div>
<div style="left:1158px;top:395px;width:17px;height:11px;background:#222222;"></div>
<svg style="position:absolute;left:1162px;top:396.5px" width="9" height="9"><circle cx="4.5" cy="4.5" r="3.4" fill="#6a6a6a"/></svg>
<div style="left:1178px;top:395px;width:7px;height:11px;background:#262626;"></div>
<div style="left:1181px;top:395px;width:0.8px;height:11px;background:#3a3a3a;"></div>
<div style="left:1005px;top:408px;width:187px;height:1px;background:#262626;"></div>
<div style="left:1006px;top:409px;width:86px;height:15px;background:#d86ce8;"></div>
<svg style="position:absolute;left:1008px;top:411px" width="11" height="11"><circle cx="5.5" cy="5.5" r="4.75" fill="none" stroke="rgba(0,0,0,0.7)" stroke-width="1.15"/><path d="M4.0 2.7V8.3L8.0 5.5Z" fill="rgba(0,0,0,0.7)"/></svg>
<span style="left:1025px;top:411.5px;color:rgba(0,0,0,0.66);font-size:9px;line-height:11px;-webkit-text-stroke:0.45px currentColor">Zap</span>
<div style="left:1096px;top:412px;width:37px;height:9px;background:#ffa64f;color:#2a2a2a;font-size:9px;line-height:9px;text-align:center;font-weight:bold">19</div>
<div style="left:1137px;top:411px;width:17px;height:11px;background:#222222;color:#bdbdbd;font-size:9px;line-height:11px;text-align:center;font-weight:bold">S</div>
<div style="left:1158px;top:411px;width:17px;height:11px;background:#222222;"></div>
<svg style="position:absolute;left:1162px;top:412.5px" width="9" height="9"><circle cx="4.5" cy="4.5" r="3.5" fill="#c4c4c4"/><path d="M5.2 2V5.8" stroke="#2a2a2a" stroke-width="0.9"/><ellipse cx="4.1" cy="5.9" rx="1.2" ry="0.9" fill="#2a2a2a"/></svg>
<div style="left:1178px;top:411px;width:7px;height:11px;background:#262626;"></div>
<div style="left:1181px;top:411px;width:0.8px;height:11px;background:#3a3a3a;"></div>
<div style="left:1005px;top:424px;width:187px;height:1px;background:#262626;"></div>
<svg style="position:absolute;left:1095.5px;top:102.5px" width="4" height="4"><circle cx="2" cy="2" r="1.7" fill="#f03838"/></svg>
<svg style="position:absolute;left:1122.5px;top:102.5px" width="4" height="4"><circle cx="2" cy="2" r="1.7" fill="#f03838"/></svg>
<svg style="position:absolute;left:1095.5px;top:147.5px" width="4" height="4"><circle cx="2" cy="2" r="1.7" fill="#f03838"/></svg>
<div style="left:1096px;top:106px;width:2px;height:7px;background:#10808f;"></div>
<div style="left:1178.5px;top:95.0px;width:2.5px;height:20.0px;background:#12f05c;"></div>
<div style="left:1182px;top:95.0px;width:2.5px;height:20.0px;background:#12f05c;"></div>
<div style="left:1178px;top:83px;width:7px;height:1px;background:#d0a020;"></div>
<div style="left:1178.5px;top:135.2px;width:2.5px;height:24.80000000000001px;background:#12f05c;"></div>
<div style="left:1182px;top:135.2px;width:2.5px;height:24.80000000000001px;background:#12f05c;"></div>
<div style="left:1178.5px;top:131px;width:2.5px;height:6px;background:linear-gradient(#b8a818,#58b830);"></div>
<div style="left:1182px;top:131px;width:2.5px;height:6px;background:linear-gradient(#b8a818,#58b830);"></div>
<div style="left:1178.5px;top:172.15px;width:2.5px;height:3.8499999999999943px;background:#12f05c;"></div>
<div style="left:1182px;top:172.15px;width:2.5px;height:3.8499999999999943px;background:#12f05c;"></div>
<div style="left:1178.5px;top:197.0px;width:2.5px;height:24.0px;background:#12f05c;"></div>
<div style="left:1182px;top:197.0px;width:2.5px;height:24.0px;background:#12f05c;"></div>
<div style="left:1178px;top:192px;width:7px;height:1px;background:#d0a020;"></div>
<div style="left:1178.5px;top:256.3px;width:2.5px;height:11.699999999999989px;background:#12f05c;"></div>
<div style="left:1182px;top:256.3px;width:2.5px;height:11.699999999999989px;background:#12f05c;"></div>
<div style="left:1178.5px;top:311.8px;width:2.5px;height:1.1999999999999886px;background:#12f05c;"></div>
<div style="left:1182px;top:311.8px;width:2.5px;height:1.1999999999999886px;background:#12f05c;"></div>
<div style="left:1178px;top:290px;width:3px;height:1px;background:#12f05c;"></div>
<div style="left:1178.5px;top:322.4px;width:2.5px;height:6.600000000000023px;background:#12f05c;"></div>
<div style="left:1182px;top:322.4px;width:2.5px;height:6.600000000000023px;background:#12f05c;"></div>
<div style="left:1178.5px;top:360.0px;width:2.5px;height:14.0px;background:#12f05c;"></div>
<div style="left:1182px;top:360.0px;width:2.5px;height:14.0px;background:#12f05c;"></div>
<div style="left:1178.5px;top:383.4px;width:2.5px;height:6.600000000000023px;background:#12f05c;"></div>
<div style="left:1182px;top:383.4px;width:2.5px;height:6.600000000000023px;background:#12f05c;"></div>
<div style="left:1178.5px;top:399.4px;width:2.5px;height:6.600000000000023px;background:#12f05c;"></div>
<div style="left:1182px;top:399.4px;width:2.5px;height:6.600000000000023px;background:#12f05c;"></div>
<div style="left:1178.5px;top:415.4px;width:2.5px;height:6.600000000000023px;background:#12f05c;"></div>
<div style="left:1182px;top:415.4px;width:2.5px;height:6.600000000000023px;background:#12f05c;"></div>
<div style="left:1006px;top:444px;width:86px;height:14px;background:#ffffff;"></div>
<svg style="position:absolute;left:1008px;top:446px" width="11" height="11"><circle cx="5.5" cy="5.5" r="4.75" fill="none" stroke="#333333" stroke-width="1.15"/><path d="M4.0 2.7V8.3L8.0 5.5Z" fill="#333333"/></svg>
<span style="left:1027px;top:446px;color:#333;font-size:9px;line-height:11px">Main</span>
<div style="left:1096px;top:446px;width:37px;height:10px;background:#252525;"></div>
<div style="left:1096px;top:446px;width:33px;height:10px;background:#10808f;"></div>
<div style="left:1096px;top:446px;width:33px;height:10px;background:transparent;color:#9fc8d0;font-size:9px;line-height:10px;text-align:center;">0</div>
<div style="left:1137px;top:446px;width:38px;height:10px;background:#252525;"></div>
<div style="left:1137px;top:446px;width:33px;height:10px;background:#3a6ac8;"></div>
<div style="left:1137px;top:446px;width:34px;height:10px;background:transparent;color:#a8c0f0;font-size:9px;line-height:10px;text-align:center;">0</div>
<div style="left:1178px;top:446px;width:7px;height:12px;background:#262626;"></div>
<div style="left:1178.5px;top:449px;width:2.5px;height:9px;background:#12f05c;"></div>
<div style="left:1182px;top:449px;width:2.5px;height:9px;background:#12f05c;"></div>
<div style="left:1178px;top:446px;width:7px;height:1px;background:#c03030;"></div>
<div style="left:1005px;top:459px;width:187px;height:19px;background:#323232;"></div>
<div style="left:1005px;top:443px;width:187px;height:1px;background:#262626;"></div>
<div style="left:1005px;top:459px;width:187px;height:1px;background:#262626;"></div>
<div style="left:1007px;top:464px;width:14px;height:11px;background:#242424;"></div>
<svg style="position:absolute;left:1009px;top:465px" width="10" height="9"><path d="M1 3V6M3 1.5V7.5M5 0.5V8.5M7 1.5V7.5M9 3V6" stroke="#777" stroke-width="1.2"/></svg>
<div style="left:1022px;top:464px;width:28px;height:11px;background:#242424;color:#a8a8a8;font-size:9px;line-height:11px;text-align:center;">1.00x</div>
<div style="left:1063px;top:464px;width:12px;height:11px;background:#242424;color:#c8c8c8;font-size:9px;line-height:11px;text-align:center;font-weight:bold">H</div>
<div style="left:1078px;top:464px;width:13px;height:11px;background:#242424;color:#c8c8c8;font-size:9px;line-height:11px;text-align:center;font-weight:bold">W</div>
<div style="left:7px;top:480px;width:1185px;height:230px;background:#262626;"></div>
<div style="left:7.3px;top:480px;width:77.5px;height:228px;background:#383838;"></div>
<div style="left:7.3px;top:480px;width:77.5px;height:14px;background:#92a6ff;"></div>
<span style="left:10.5px;top:481.5px;color:rgba(0,0,0,0.66);font-size:9px;line-height:12px;-webkit-text-stroke:0.45px currentColor">Drums</span>
<svg style="position:absolute;left:72.3px;top:482px" width="11" height="11"><circle cx="5.5" cy="5.5" r="4.75" fill="none" stroke="rgba(0,0,0,0.7)" stroke-width="1.15"/><path d="M2.7 4.2H8.3L5.5 7.5Z" fill="rgba(0,0,0,0.7)"/></svg>
<div style="left:13.3px;top:500.5px;width:29px;height:10.5px;background:#242424;border-radius:5.5px;color:#c8c8c8;font-size:9px;line-height:11px;text-align:center">-6.44</div>
<div style="left:13.3px;top:515.3px;width:29.3px;height:10.6px;background:#242424;color:#c0c0c0;font-size:9px;line-height:10.6px;text-align:center;">-1.0</div>
<svg style="position:absolute;left:45.8px;top:518.4000000000001px" width="10" height="11"><path d="M0 0L9.5 5.3L0 10.6Z" fill="#c2c2c2"/></svg>
<div style="left:52.8px;top:505px;width:2px;height:1px;background:#5c5c5c;"></div>
<div style="left:52.8px;top:520px;width:2px;height:1px;background:#5c5c5c;"></div>
<div style="left:52.8px;top:540px;width:2px;height:1px;background:#5c5c5c;"></div>
<div style="left:52.8px;top:558.5px;width:2px;height:1px;background:#5c5c5c;"></div>
<div style="left:52.8px;top:577.5px;width:2px;height:1px;background:#5c5c5c;"></div>
<div style="left:52.8px;top:596px;width:2px;height:1px;background:#5c5c5c;"></div>
<div style="left:52.8px;top:617px;width:2px;height:1px;background:#5c5c5c;"></div>
<div style="left:52.8px;top:633.5px;width:2px;height:1px;background:#5c5c5c;"></div>
<div style="left:52.8px;top:648.5px;width:2px;height:1px;background:#5c5c5c;"></div>
<div style="left:52.8px;top:661px;width:2px;height:1px;background:#5c5c5c;"></div>
<div style="left:52.8px;top:673px;width:2px;height:1px;background:#5c5c5c;"></div>
<div style="left:52.8px;top:683.5px;width:2px;height:1px;background:#5c5c5c;"></div>
<div style="left:52.8px;top:691px;width:2px;height:1px;background:#5c5c5c;"></div>
<div style="left:56px;top:500px;width:11px;height:194.5px;background:#1c1c1c;"></div>
<div style="left:61px;top:500px;width:1px;height:194.5px;background:#2a2a2a;"></div>
<div style="left:56px;top:520px;width:11px;height:1px;background:#6a6a6a;"></div>
<div style="left:57px;top:599px;width:4px;height:95.5px;background:#12f05c;"></div>
<div style="left:62px;top:599px;width:4px;height:95.5px;background:#12f05c;"></div>
<div style="left:57px;top:541px;width:4px;height:1px;background:#d0a020;"></div>
<div style="left:62px;top:541px;width:4px;height:1px;background:#d0a020;"></div>
<span style="left:69.3px;top:499.5px;color:#a0a0a0;font-size:9px;line-height:11px">6</span>
<span style="left:69.3px;top:514.5px;color:#a0a0a0;font-size:9px;line-height:11px">0</span>
<span style="left:69.3px;top:534.5px;color:#a0a0a0;font-size:9px;line-height:11px">6</span>
<span style="left:69.3px;top:553.0px;color:#a0a0a0;font-size:9px;line-height:11px">12</span>
<span style="left:69.3px;top:572.0px;color:#a0a0a0;font-size:9px;line-height:11px">18</span>
<span style="left:69.3px;top:590.5px;color:#a0a0a0;font-size:9px;line-height:11px">24</span>
<span style="left:69.3px;top:611.5px;color:#a0a0a0;font-size:9px;line-height:11px">30</span>
<span style="left:69.3px;top:628.0px;color:#a0a0a0;font-size:9px;line-height:11px">36</span>
<span style="left:69.3px;top:643.0px;color:#a0a0a0;font-size:9px;line-height:11px">42</span>
<span style="left:69.3px;top:655.5px;color:#a0a0a0;font-size:9px;line-height:11px">48</span>
<span style="left:69.3px;top:667.5px;color:#a0a0a0;font-size:9px;line-height:11px">54</span>
<span style="left:69.3px;top:678.0px;color:#a0a0a0;font-size:9px;line-height:11px">60</span>
<svg style="position:absolute;left:16.0px;top:619.5px" width="24" height="28"><path d="M6.33 25.07A10.7 10.7 0 0 1 9.4 5.62M14.6 5.62A10.7 10.7 0 0 1 17.67 25.07" fill="none" stroke="#111" stroke-width="1.7"/><path d="M12 3.5V16.5" stroke="#111" stroke-width="1.8"/><path d="M9 0.7H15L12 3.4Z" fill="#111"/></svg>
<div style="left:18.7px;top:648.4px;width:18.4px;height:18.4px;background:#ffa64f;color:#222;font-size:10px;line-height:18.4px;text-align:center;font-weight:bold">1</div>
<div style="left:18.0px;top:670px;width:19.8px;height:11px;background:#222222;color:#bdbdbd;font-size:9px;line-height:11px;text-align:center;font-weight:bold">S</div>
<div style="left:18.0px;top:684.4px;width:19.8px;height:11px;background:#242424;"></div>
<svg style="position:absolute;left:23.400000000000002px;top:685.4px" width="9" height="9"><circle cx="4.5" cy="4.5" r="3.5" fill="#c4c4c4"/><path d="M5.2 2V5.8" stroke="#2a2a2a" stroke-width="0.9"/><ellipse cx="4.1" cy="5.9" rx="1.2" ry="0.9" fill="#2a2a2a"/></svg>
<div style="left:7.3px;top:701.8px;width:77.5px;height:5.4px;background:#92a6ff;"></div>
<div style="left:86.47px;top:480px;width:77.5px;height:228px;background:#383838;"></div>
<div style="left:86.47px;top:480px;width:77.5px;height:14px;background:#92a6ff;"></div>
<span style="left:89.67px;top:481.5px;color:rgba(0,0,0,0.66);font-size:9px;line-height:12px;-webkit-text-stroke:0.45px currentColor">Breaks</span>
<div style="left:92.47px;top:500.5px;width:29px;height:10.5px;background:#242424;border-radius:5.5px;color:#c8c8c8;font-size:9px;line-height:11px;text-align:center">-10.2</div>
<div style="left:92.47px;top:515.3px;width:29.3px;height:10.6px;background:#242424;color:#c0c0c0;font-size:9px;line-height:10.6px;text-align:center;">-9.4</div>
<svg style="position:absolute;left:124.97px;top:545.4000000000001px" width="10" height="11"><path d="M0 0L9.5 5.3L0 10.6Z" fill="#c2c2c2"/></svg>
<div style="left:131.97px;top:505px;width:2px;height:1px;background:#5c5c5c;"></div>
<div style="left:131.97px;top:520px;width:2px;height:1px;background:#5c5c5c;"></div>
<div style="left:131.97px;top:540px;width:2px;height:1px;background:#5c5c5c;"></div>
<div style="left:131.97px;top:558.5px;width:2px;height:1px;background:#5c5c5c;"></div>
<div style="left:131.97px;top:577.5px;width:2px;height:1px;background:#5c5c5c;"></div>
<div style="left:131.97px;top:596px;width:2px;height:1px;background:#5c5c5c;"></div>
<div style="left:131.97px;top:617px;width:2px;height:1px;background:#5c5c5c;"></div>
<div style="left:131.97px;top:633.5px;width:2px;height:1px;background:#5c5c5c;"></div>
<div style="left:131.97px;top:648.5px;width:2px;height:1px;background:#5c5c5c;"></div>
<div style="left:131.97px;top:661px;width:2px;height:1px;background:#5c5c5c;"></div>
<div style="left:131.97px;top:673px;width:2px;height:1px;background:#5c5c5c;"></div>
<div style="left:131.97px;top:683.5px;width:2px;height:1px;background:#5c5c5c;"></div>
<div style="left:131.97px;top:691px;width:2px;height:1px;background:#5c5c5c;"></div>
<div style="left:135px;top:500px;width:11px;height:194.5px;background:#1c1c1c;"></div>
<div style="left:140px;top:500px;width:1px;height:194.5px;background:#2a2a2a;"></div>
<div style="left:135px;top:520px;width:11px;height:1px;background:#6a6a6a;"></div>
<div style="left:136px;top:552.8px;width:4px;height:141.70000000000005px;background:#1fb04c;"></div>
<div style="left:136px;top:552.8px;width:4px;height:23px;background:linear-gradient(#b8a818,#58b830);"></div>
<div style="left:141px;top:552.8px;width:4px;height:141.70000000000005px;background:#1fb04c;"></div>
<div style="left:141px;top:552.8px;width:4px;height:23px;background:linear-gradient(#b8a818,#58b830);"></div>
<div style="left:136px;top:601px;width:4px;height:93.5px;background:#12f05c;"></div>
<div style="left:141px;top:601px;width:4px;height:93.5px;background:#12f05c;"></div>
<span style="left:148.47px;top:499.5px;color:#a0a0a0;font-size:9px;line-height:11px">6</span>
<span style="left:148.47px;top:514.5px;color:#a0a0a0;font-size:9px;line-height:11px">0</span>
<span style="left:148.47px;top:534.5px;color:#a0a0a0;font-size:9px;line-height:11px">6</span>
<span style="left:148.47px;top:553.0px;color:#a0a0a0;font-size:9px;line-height:11px">12</span>
<span style="left:148.47px;top:572.0px;color:#a0a0a0;font-size:9px;line-height:11px">18</span>
<span style="left:148.47px;top:590.5px;color:#a0a0a0;font-size:9px;line-height:11px">24</span>
<span style="left:148.47px;top:611.5px;color:#a0a0a0;font-size:9px;line-height:11px">30</span>
<span style="left:148.47px;top:628.0px;color:#a0a0a0;font-size:9px;line-height:11px">36</span>
<span style="left:148.47px;top:643.0px;color:#a0a0a0;font-size:9px;line-height:11px">42</span>
<span style="left:148.47px;top:655.5px;color:#a0a0a0;font-size:9px;line-height:11px">48</span>
<span style="left:148.47px;top:667.5px;color:#a0a0a0;font-size:9px;line-height:11px">54</span>
<span style="left:148.47px;top:678.0px;color:#a0a0a0;font-size:9px;line-height:11px">60</span>
<svg style="position:absolute;left:95.17px;top:619.5px" width="24" height="28"><path d="M6.33 25.07A10.7 10.7 0 0 1 9.4 5.62M14.6 5.62A10.7 10.7 0 0 1 17.67 25.07" fill="none" stroke="#111" stroke-width="1.7"/><path d="M12 3.5V16.5" stroke="#111" stroke-width="1.8"/><path d="M9 0.7H15L12 3.4Z" fill="#111"/></svg>
<div style="left:97.87px;top:648.4px;width:18.4px;height:18.4px;background:#ffa64f;color:#222;font-size:10px;line-height:18.4px;text-align:center;font-weight:bold">2</div>
<div style="left:97.17px;top:670px;width:19.8px;height:11px;background:#222222;color:#bdbdbd;font-size:9px;line-height:11px;text-align:center;font-weight:bold">S</div>
<div style="left:97.17px;top:684.4px;width:19.8px;height:11px;background:#242424;"></div>
<svg style="position:absolute;left:102.57px;top:685.4px" width="9" height="9"><circle cx="4.5" cy="4.5" r="3.4" fill="#6a6a6a"/></svg>
<div style="left:86.47px;top:701.8px;width:77.5px;height:5.4px;background:#92a6ff;"></div>
<div style="left:165.64000000000001px;top:480px;width:77.5px;height:228px;background:#383838;"></div>
<div style="left:165.64000000000001px;top:480px;width:77.5px;height:14px;background:#8fc6ff;"></div>
<span style="left:168.84px;top:481.5px;color:rgba(0,0,0,0.66);font-size:9px;line-height:12px;-webkit-text-stroke:0.45px currentColor">Percussion</span>
<svg style="position:absolute;left:230.64000000000001px;top:482px" width="11" height="11"><circle cx="5.5" cy="5.5" r="4.75" fill="none" stroke="rgba(0,0,0,0.7)" stroke-width="1.15"/><path d="M3.3 3.7H7.7M3.3 5.5H7.7M3.3 7.3H7.7" stroke="rgba(0,0,0,0.7)" stroke-width="0.9"/></svg>
<div style="left:171.64000000000001px;top:500.5px;width:29px;height:10.5px;background:#242424;border-radius:5.5px;color:#c8c8c8;font-size:9px;line-height:11px;text-align:center">-21.2</div>
<div style="left:171.64000000000001px;top:515.3px;width:29.3px;height:10.6px;background:#242424;color:#c0c0c0;font-size:9px;line-height:10.6px;text-align:center;">0</div>
<svg style="position:absolute;left:204.14000000000001px;top:515.2px" width="10" height="11"><path d="M0 0L9.5 5.3L0 10.6Z" fill="#c2c2c2"/></svg>
<div style="left:211.14000000000001px;top:505px;width:2px;height:1px;background:#5c5c5c;"></div>
<div style="left:211.14000000000001px;top:520px;width:2px;height:1px;background:#5c5c5c;"></div>
<div style="left:211.14000000000001px;top:540px;width:2px;height:1px;background:#5c5c5c;"></div>
<div style="left:211.14000000000001px;top:558.5px;width:2px;height:1px;background:#5c5c5c;"></div>
<div style="left:211.14000000000001px;top:577.5px;width:2px;height:1px;background:#5c5c5c;"></div>
<div style="left:211.14000000000001px;top:596px;width:2px;height:1px;background:#5c5c5c;"></div>
<div style="left:211.14000000000001px;top:617px;width:2px;height:1px;background:#5c5c5c;"></div>
<div style="left:211.14000000000001px;top:633.5px;width:2px;height:1px;background:#5c5c5c;"></div>
<div style="left:211.14000000000001px;top:648.5px;width:2px;height:1px;background:#5c5c5c;"></div>
<div style="left:211.14000000000001px;top:661px;width:2px;height:1px;background:#5c5c5c;"></div>
<div style="left:211.14000000000001px;top:673px;width:2px;height:1px;background:#5c5c5c;"></div>
<div style="left:211.14000000000001px;top:683.5px;width:2px;height:1px;background:#5c5c5c;"></div>
<div style="left:211.14000000000001px;top:691px;width:2px;height:1px;background:#5c5c5c;"></div>
<div style="left:214px;top:500px;width:11px;height:194.5px;background:#1c1c1c;"></div>
<div style="left:219px;top:500px;width:1px;height:194.5px;background:#2a2a2a;"></div>
<div style="left:214px;top:520px;width:11px;height:1px;background:#6a6a6a;"></div>
<div style="left:215px;top:649px;width:4px;height:45.5px;background:#1fae4c;"></div>
<div style="left:220px;top:655px;width:4px;height:39.5px;background:#1fae4c;"></div>
<div style="left:215px;top:661.5px;width:4px;height:33.0px;background:#12f05c;"></div>
<div style="left:220px;top:668px;width:4px;height:26.5px;background:#12f05c;"></div>
<div style="left:215px;top:617.5px;width:4px;height:1px;background:#12f05c;"></div>
<div style="left:220px;top:589px;width:4px;height:1px;background:#12f05c;"></div>
<span style="left:227.64000000000001px;top:499.5px;color:#a0a0a0;font-size:9px;line-height:11px">6</span>
<span style="left:227.64000000000001px;top:514.5px;color:#a0a0a0;font-size:9px;line-height:11px">0</span>
<span style="left:227.64000000000001px;top:534.5px;color:#a0a0a0;font-size:9px;line-height:11px">6</span>
<span style="left:227.64000000000001px;top:553.0px;color:#a0a0a0;font-size:9px;line-height:11px">12</span>
<span style="left:227.64000000000001px;top:572.0px;color:#a0a0a0;font-size:9px;line-height:11px">18</span>
<span style="left:227.64000000000001px;top:590.5px;color:#a0a0a0;font-size:9px;line-height:11px">24</span>
<span style="left:227.64000000000001px;top:611.5px;color:#a0a0a0;font-size:9px;line-height:11px">30</span>
<span style="left:227.64000000000001px;top:628.0px;color:#a0a0a0;font-size:9px;line-height:11px">36</span>
<span style="left:227.64000000000001px;top:643.0px;color:#a0a0a0;font-size:9px;line-height:11px">42</span>
<span style="left:227.64000000000001px;top:655.5px;color:#a0a0a0;font-size:9px;line-height:11px">48</span>
<span style="left:227.64000000000001px;top:667.5px;color:#a0a0a0;font-size:9px;line-height:11px">54</span>
<span style="left:227.64000000000001px;top:678.0px;color:#a0a0a0;font-size:9px;line-height:11px">60</span>
<svg style="position:absolute;left:174.34px;top:619.5px" width="24" height="28"><path d="M6.33 25.07A10.7 10.7 0 0 1 9.4 5.62M14.6 5.62A10.7 10.7 0 0 1 17.67 25.07" fill="none" stroke="#111" stroke-width="1.7"/><path d="M12 3.5V16.5" stroke="#111" stroke-width="1.8"/><path d="M9 0.7H15L12 3.4Z" fill="#111"/></svg>
<div style="left:177.04000000000002px;top:648.4px;width:18.4px;height:18.4px;background:#ffa64f;color:#222;font-size:10px;line-height:18.4px;text-align:center;font-weight:bold">3</div>
<div style="left:176.34px;top:670px;width:19.8px;height:11px;background:#222222;color:#bdbdbd;font-size:9px;line-height:11px;text-align:center;font-weight:bold">S</div>
<div style="left:165.64000000000001px;top:701.8px;width:77.5px;height:5.4px;background:#8fc6ff;"></div>
<div style="left:244.81px;top:480px;width:77.5px;height:228px;background:#474747;"></div>
<div style="left:244.81px;top:480px;width:77.5px;height:14px;background:#5dffe6;"></div>
<span style="left:248.01px;top:481.5px;color:rgba(0,0,0,0.66);font-size:9px;line-height:12px;-webkit-text-stroke:0.45px currentColor">Bass</span>
<div style="left:250.81px;top:500.5px;width:29px;height:10.5px;background:#242424;border-radius:5.5px;color:#c8c8c8;font-size:9px;line-height:11px;text-align:center">-10.8</div>
<div style="left:250.81px;top:515.3px;width:29.3px;height:10.6px;background:#242424;color:#c0c0c0;font-size:9px;line-height:10.6px;text-align:center;">-7.7</div>
<svg style="position:absolute;left:283.31px;top:539.9000000000001px" width="10" height="11"><path d="M0 0L9.5 5.3L0 10.6Z" fill="#c2c2c2"/></svg>
<div style="left:290.31px;top:505px;width:2px;height:1px;background:#5c5c5c;"></div>
<div style="left:290.31px;top:520px;width:2px;height:1px;background:#5c5c5c;"></div>
<div style="left:290.31px;top:540px;width:2px;height:1px;background:#5c5c5c;"></div>
<div style="left:290.31px;top:558.5px;width:2px;height:1px;background:#5c5c5c;"></div>
<div style="left:290.31px;top:577.5px;width:2px;height:1px;background:#5c5c5c;"></div>
<div style="left:290.31px;top:596px;width:2px;height:1px;background:#5c5c5c;"></div>
<div style="left:290.31px;top:617px;width:2px;height:1px;background:#5c5c5c;"></div>
<div style="left:290.31px;top:633.5px;width:2px;height:1px;background:#5c5c5c;"></div>
<div style="left:290.31px;top:648.5px;width:2px;height:1px;background:#5c5c5c;"></div>
<div style="left:290.31px;top:661px;width:2px;height:1px;background:#5c5c5c;"></div>
<div style="left:290.31px;top:673px;width:2px;height:1px;background:#5c5c5c;"></div>
<div style="left:290.31px;top:683.5px;width:2px;height:1px;background:#5c5c5c;"></div>
<div style="left:290.31px;top:691px;width:2px;height:1px;background:#5c5c5c;"></div>
<div style="left:293px;top:500px;width:11px;height:194.5px;background:#1c1c1c;"></div>
<div style="left:298px;top:500px;width:1px;height:194.5px;background:#2a2a2a;"></div>
<div style="left:293px;top:520px;width:11px;height:1px;background:#6a6a6a;"></div>
<div style="left:294px;top:587px;width:4px;height:107.5px;background:#12f05c;"></div>
<div style="left:299px;top:587px;width:4px;height:107.5px;background:#12f05c;"></div>
<div style="left:294px;top:555.4px;width:4px;height:1px;background:#d0a020;"></div>
<div style="left:299px;top:555.4px;width:4px;height:1px;background:#d0a020;"></div>
<span style="left:306.81px;top:499.5px;color:#a0a0a0;font-size:9px;line-height:11px">6</span>
<span style="left:306.81px;top:514.5px;color:#a0a0a0;font-size:9px;line-height:11px">0</span>
<span style="left:306.81px;top:534.5px;color:#a0a0a0;font-size:9px;line-height:11px">6</span>
<span style="left:306.81px;top:553.0px;color:#a0a0a0;font-size:9px;line-height:11px">12</span>
<span style="left:306.81px;top:572.0px;color:#a0a0a0;font-size:9px;line-height:11px">18</span>
<span style="left:306.81px;top:590.5px;color:#a0a0a0;font-size:9px;line-height:11px">24</span>
<span style="left:306.81px;top:611.5px;color:#a0a0a0;font-size:9px;line-height:11px">30</span>
<span style="left:306.81px;top:628.0px;color:#a0a0a0;font-size:9px;line-height:11px">36</span>
<span style="left:306.81px;top:643.0px;color:#a0a0a0;font-size:9px;line-height:11px">42</span>
<span style="left:306.81px;top:655.5px;color:#a0a0a0;font-size:9px;line-height:11px">48</span>
<span style="left:306.81px;top:667.5px;color:#a0a0a0;font-size:9px;line-height:11px">54</span>
<span style="left:306.81px;top:678.0px;color:#a0a0a0;font-size:9px;line-height:11px">60</span>
<svg style="position:absolute;left:253.51px;top:619.5px" width="24" height="28"><path d="M6.33 25.07A10.7 10.7 0 0 1 9.4 5.62M14.6 5.62A10.7 10.7 0 0 1 17.67 25.07" fill="none" stroke="#111" stroke-width="1.7"/><path d="M12 3.5V16.5" stroke="#111" stroke-width="1.8"/><path d="M9 0.7H15L12 3.4Z" fill="#111"/></svg>
<div style="left:256.21px;top:648.4px;width:18.4px;height:18.4px;background:#ffa64f;color:#222;font-size:10px;line-height:18.4px;text-align:center;font-weight:bold">8</div>
<div style="left:255.51px;top:670px;width:19.8px;height:11px;background:#222222;color:#bdbdbd;font-size:9px;line-height:11px;text-align:center;font-weight:bold">S</div>
<div style="left:255.51px;top:684.4px;width:19.8px;height:11px;background:#242424;"></div>
<svg style="position:absolute;left:260.91px;top:685.4px" width="9" height="9"><circle cx="4.5" cy="4.5" r="3.5" fill="#c4c4c4"/><path d="M5.2 2V5.8" stroke="#2a2a2a" stroke-width="0.9"/><ellipse cx="4.1" cy="5.9" rx="1.2" ry="0.9" fill="#2a2a2a"/></svg>
<div style="left:244.81px;top:701.8px;width:77.5px;height:5.4px;background:#5dffe6;"></div>
<div style="left:323.98px;top:480px;width:77.5px;height:228px;background:#383838;"></div>
<div style="left:323.98px;top:480px;width:77.5px;height:14px;background:#5dffe6;"></div>
<span style="left:327.18px;top:481.5px;color:rgba(0,0,0,0.66);font-size:9px;line-height:12px;-webkit-text-stroke:0.45px currentColor">Bass Drop</span>
<svg style="position:absolute;left:388.98px;top:482px" width="11" height="11"><circle cx="5.5" cy="5.5" r="4.75" fill="none" stroke="rgba(0,0,0,0.7)" stroke-width="1.15"/><path d="M2.7 4.2H8.3L5.5 7.5Z" fill="rgba(0,0,0,0.7)"/></svg>
<div style="left:329.98px;top:500.5px;width:29px;height:10.5px;background:#242424;border-radius:5.5px;color:#c8c8c8;font-size:9px;line-height:11px;text-align:center">-<span style="font-size:12px">&infin;</span></div>
<div style="left:329.98px;top:515.3px;width:29.3px;height:10.6px;background:#242424;color:#c0c0c0;font-size:9px;line-height:10.6px;text-align:center;">-0.2</div>
<svg style="position:absolute;left:362.48px;top:515.9000000000001px" width="10" height="11"><path d="M0 0L9.5 5.3L0 10.6Z" fill="#c2c2c2"/></svg>
<div style="left:369.48px;top:505px;width:2px;height:1px;background:#5c5c5c;"></div>
<div style="left:369.48px;top:520px;width:2px;height:1px;background:#5c5c5c;"></div>
<div style="left:369.48px;top:540px;width:2px;height:1px;background:#5c5c5c;"></div>
<div style="left:369.48px;top:558.5px;width:2px;height:1px;background:#5c5c5c;"></div>
<div style="left:369.48px;top:577.5px;width:2px;height:1px;background:#5c5c5c;"></div>
<div style="left:369.48px;top:596px;width:2px;height:1px;background:#5c5c5c;"></div>
<div style="left:369.48px;top:617px;width:2px;height:1px;background:#5c5c5c;"></div>
<div style="left:369.48px;top:633.5px;width:2px;height:1px;background:#5c5c5c;"></div>
<div style="left:369.48px;top:648.5px;width:2px;height:1px;background:#5c5c5c;"></div>
<div style="left:369.48px;top:661px;width:2px;height:1px;background:#5c5c5c;"></div>
<div style="left:369.48px;top:673px;width:2px;height:1px;background:#5c5c5c;"></div>
<div style="left:369.48px;top:683.5px;width:2px;height:1px;background:#5c5c5c;"></div>
<div style="left:369.48px;top:691px;width:2px;height:1px;background:#5c5c5c;"></div>
<div style="left:373px;top:500px;width:11px;height:194.5px;background:#1c1c1c;"></div>
<div style="left:378px;top:500px;width:1px;height:194.5px;background:#2a2a2a;"></div>
<div style="left:373px;top:520px;width:11px;height:1px;background:#6a6a6a;"></div>
<span style="left:385.98px;top:499.5px;color:#a0a0a0;font-size:9px;line-height:11px">6</span>
<span style="left:385.98px;top:514.5px;color:#a0a0a0;font-size:9px;line-height:11px">0</span>
<span style="left:385.98px;top:534.5px;color:#a0a0a0;font-size:9px;line-height:11px">6</span>
<span style="left:385.98px;top:553.0px;color:#a0a0a0;font-size:9px;line-height:11px">12</span>
<span style="left:385.98px;top:572.0px;color:#a0a0a0;font-size:9px;line-height:11px">18</span>
<span style="left:385.98px;top:590.5px;color:#a0a0a0;font-size:9px;line-height:11px">24</span>
<span style="left:385.98px;top:611.5px;color:#a0a0a0;font-size:9px;line-height:11px">30</span>
<span style="left:385.98px;top:628.0px;color:#a0a0a0;font-size:9px;line-height:11px">36</span>
<span style="left:385.98px;top:643.0px;color:#a0a0a0;font-size:9px;line-height:11px">42</span>
<span style="left:385.98px;top:655.5px;color:#a0a0a0;font-size:9px;line-height:11px">48</span>
<span style="left:385.98px;top:667.5px;color:#a0a0a0;font-size:9px;line-height:11px">54</span>
<span style="left:385.98px;top:678.0px;color:#a0a0a0;font-size:9px;line-height:11px">60</span>
<svg style="position:absolute;left:332.68px;top:619.5px" width="24" height="28"><path d="M6.33 25.07A10.7 10.7 0 0 1 9.4 5.62M14.6 5.62A10.7 10.7 0 0 1 17.67 25.07" fill="none" stroke="#111" stroke-width="1.7"/><path d="M12 3.5V16.5" stroke="#111" stroke-width="1.8"/><path d="M9 0.7H15L12 3.4Z" fill="#111"/></svg>
<div style="left:335.38px;top:648.4px;width:18.4px;height:18.4px;background:#ffa64f;color:#222;font-size:10px;line-height:18.4px;text-align:center;font-weight:bold">9</div>
<div style="left:334.68px;top:670px;width:19.8px;height:11px;background:#222222;color:#bdbdbd;font-size:9px;line-height:11px;text-align:center;font-weight:bold">S</div>
<div style="left:334.68px;top:684.4px;width:19.8px;height:11px;background:#242424;"></div>
<svg style="position:absolute;left:340.08000000000004px;top:685.4px" width="9" height="9"><circle cx="4.5" cy="4.5" r="3.5" fill="#c4c4c4"/><path d="M5.2 2V5.8" stroke="#2a2a2a" stroke-width="0.9"/><ellipse cx="4.1" cy="5.9" rx="1.2" ry="0.9" fill="#2a2a2a"/></svg>
<div style="left:323.98px;top:701.8px;width:77.5px;height:5.4px;background:#5dffe6;"></div>
<div style="left:403.15000000000003px;top:480px;width:77.5px;height:228px;background:#383838;"></div>
<div style="left:403.15000000000003px;top:480px;width:77.5px;height:14px;background:#eef6a8;"></div>
<span style="left:406.35px;top:481.5px;color:rgba(0,0,0,0.66);font-size:9px;line-height:12px;-webkit-text-stroke:0.45px currentColor">Synth Riser</span>
<svg style="position:absolute;left:468.15000000000003px;top:482px" width="11" height="11"><circle cx="5.5" cy="5.5" r="4.75" fill="none" stroke="rgba(0,0,0,0.7)" stroke-width="1.15"/><path d="M2.7 4.2H8.3L5.5 7.5Z" fill="rgba(0,0,0,0.7)"/></svg>
<div style="left:409.15000000000003px;top:500.5px;width:29px;height:10.5px;background:#242424;border-radius:5.5px;color:#c8c8c8;font-size:9px;line-height:11px;text-align:center">-28.2</div>
<div style="left:409.15000000000003px;top:515.3px;width:29.3px;height:10.6px;background:#242424;color:#c0c0c0;font-size:9px;line-height:10.6px;text-align:center;">-18.0</div>
<svg style="position:absolute;left:441.65000000000003px;top:572.7px" width="10" height="11"><path d="M0 0L9.5 5.3L0 10.6Z" fill="#c2c2c2"/></svg>
<div style="left:448.65000000000003px;top:505px;width:2px;height:1px;background:#5c5c5c;"></div>
<div style="left:448.65000000000003px;top:520px;width:2px;height:1px;background:#5c5c5c;"></div>
<div style="left:448.65000000000003px;top:540px;width:2px;height:1px;background:#5c5c5c;"></div>
<div style="left:448.65000000000003px;top:558.5px;width:2px;height:1px;background:#5c5c5c;"></div>
<div style="left:448.65000000000003px;top:577.5px;width:2px;height:1px;background:#5c5c5c;"></div>
<div style="left:448.65000000000003px;top:596px;width:2px;height:1px;background:#5c5c5c;"></div>
<div style="left:448.65000000000003px;top:617px;width:2px;height:1px;background:#5c5c5c;"></div>
<div style="left:448.65000000000003px;top:633.5px;width:2px;height:1px;background:#5c5c5c;"></div>
<div style="left:448.65000000000003px;top:648.5px;width:2px;height:1px;background:#5c5c5c;"></div>
<div style="left:448.65000000000003px;top:661px;width:2px;height:1px;background:#5c5c5c;"></div>
<div style="left:448.65000000000003px;top:673px;width:2px;height:1px;background:#5c5c5c;"></div>
<div style="left:448.65000000000003px;top:683.5px;width:2px;height:1px;background:#5c5c5c;"></div>
<div style="left:448.65000000000003px;top:691px;width:2px;height:1px;background:#5c5c5c;"></div>
<div style="left:452px;top:500px;width:11px;height:194.5px;background:#1c1c1c;"></div>
<div style="left:457px;top:500px;width:1px;height:194.5px;background:#2a2a2a;"></div>
<div style="left:452px;top:520px;width:11px;height:1px;background:#6a6a6a;"></div>
<div style="left:453px;top:624.4px;width:4px;height:70.10000000000002px;background:#1fae4c;"></div>
<div style="left:458px;top:621px;width:4px;height:73.5px;background:#1fae4c;"></div>
<div style="left:453px;top:636.8px;width:4px;height:57.700000000000045px;background:#12f05c;"></div>
<div style="left:458px;top:636.8px;width:4px;height:57.700000000000045px;background:#12f05c;"></div>
<div style="left:453px;top:613.4px;width:4px;height:1px;background:#12f05c;"></div>
<div style="left:458px;top:610.6px;width:4px;height:1px;background:#12f05c;"></div>
<span style="left:465.15000000000003px;top:499.5px;color:#a0a0a0;font-size:9px;line-height:11px">6</span>
<span style="left:465.15000000000003px;top:514.5px;color:#a0a0a0;font-size:9px;line-height:11px">0</span>
<span style="left:465.15000000000003px;top:534.5px;color:#a0a0a0;font-size:9px;line-height:11px">6</span>
<span style="left:465.15000000000003px;top:553.0px;color:#a0a0a0;font-size:9px;line-height:11px">12</span>
<span style="left:465.15000000000003px;top:572.0px;color:#a0a0a0;font-size:9px;line-height:11px">18</span>
<span style="left:465.15000000000003px;top:590.5px;color:#a0a0a0;font-size:9px;line-height:11px">24</span>
<span style="left:465.15000000000003px;top:611.5px;color:#a0a0a0;font-size:9px;line-height:11px">30</span>
<span style="left:465.15000000000003px;top:628.0px;color:#a0a0a0;font-size:9px;line-height:11px">36</span>
<span style="left:465.15000000000003px;top:643.0px;color:#a0a0a0;font-size:9px;line-height:11px">42</span>
<span style="left:465.15000000000003px;top:655.5px;color:#a0a0a0;font-size:9px;line-height:11px">48</span>
<span style="left:465.15000000000003px;top:667.5px;color:#a0a0a0;font-size:9px;line-height:11px">54</span>
<span style="left:465.15000000000003px;top:678.0px;color:#a0a0a0;font-size:9px;line-height:11px">60</span>
<svg style="position:absolute;left:411.85px;top:619.5px" width="24" height="28"><path d="M6.33 25.07A10.7 10.7 0 0 1 9.4 5.62M14.6 5.62A10.7 10.7 0 0 1 17.67 25.07" fill="none" stroke="#111" stroke-width="1.7"/><path d="M12 3.5V16.5" stroke="#111" stroke-width="1.8"/><path d="M9 0.7H15L12 3.4Z" fill="#111"/></svg>
<div style="left:414.55px;top:648.4px;width:18.4px;height:18.4px;background:#ffa64f;color:#222;font-size:10px;line-height:18.4px;text-align:center;font-weight:bold">10</div>
<div style="left:413.85px;top:670px;width:19.8px;height:11px;background:#222222;color:#bdbdbd;font-size:9px;line-height:11px;text-align:center;font-weight:bold">S</div>
<div style="left:413.85px;top:684.4px;width:19.8px;height:11px;background:#242424;"></div>
<svg style="position:absolute;left:419.25000000000006px;top:685.4px" width="9" height="9"><circle cx="4.5" cy="4.5" r="3.5" fill="#c4c4c4"/><path d="M5.2 2V5.8" stroke="#2a2a2a" stroke-width="0.9"/><ellipse cx="4.1" cy="5.9" rx="1.2" ry="0.9" fill="#2a2a2a"/></svg>
<div style="left:403.15000000000003px;top:701.8px;width:77.5px;height:5.4px;background:#eef6a8;"></div>
<div style="left:482.32px;top:480px;width:77.5px;height:228px;background:#383838;"></div>
<div style="left:482.32px;top:480px;width:77.5px;height:14px;background:#f8f47a;"></div>
<span style="left:485.52px;top:481.5px;color:rgba(0,0,0,0.66);font-size:9px;line-height:12px;-webkit-text-stroke:0.45px currentColor">Keys</span>
<div style="left:488.32px;top:500.5px;width:29px;height:10.5px;background:#242424;border-radius:5.5px;color:#c8c8c8;font-size:9px;line-height:11px;text-align:center">-16.0</div>
<div style="left:488.32px;top:515.3px;width:29.3px;height:10.6px;background:#242424;color:#c0c0c0;font-size:9px;line-height:10.6px;text-align:center;">-6.6</div>
<svg style="position:absolute;left:520.8199999999999px;top:536.5px" width="10" height="11"><path d="M0 0L9.5 5.3L0 10.6Z" fill="#c2c2c2"/></svg>
<div style="left:527.8199999999999px;top:505px;width:2px;height:1px;background:#5c5c5c;"></div>
<div style="left:527.8199999999999px;top:520px;width:2px;height:1px;background:#5c5c5c;"></div>
<div style="left:527.8199999999999px;top:540px;width:2px;height:1px;background:#5c5c5c;"></div>
<div style="left:527.8199999999999px;top:558.5px;width:2px;height:1px;background:#5c5c5c;"></div>
<div style="left:527.8199999999999px;top:577.5px;width:2px;height:1px;background:#5c5c5c;"></div>
<div style="left:527.8199999999999px;top:596px;width:2px;height:1px;background:#5c5c5c;"></div>
<div style="left:527.8199999999999px;top:617px;width:2px;height:1px;background:#5c5c5c;"></div>
<div style="left:527.8199999999999px;top:633.5px;width:2px;height:1px;background:#5c5c5c;"></div>
<div style="left:527.8199999999999px;top:648.5px;width:2px;height:1px;background:#5c5c5c;"></div>
<div style="left:527.8199999999999px;top:661px;width:2px;height:1px;background:#5c5c5c;"></div>
<div style="left:527.8199999999999px;top:673px;width:2px;height:1px;background:#5c5c5c;"></div>
<div style="left:527.8199999999999px;top:683.5px;width:2px;height:1px;background:#5c5c5c;"></div>
<div style="left:527.8199999999999px;top:691px;width:2px;height:1px;background:#5c5c5c;"></div>
<div style="left:531px;top:500px;width:11px;height:194.5px;background:#1c1c1c;"></div>
<div style="left:536px;top:500px;width:1px;height:194.5px;background:#2a2a2a;"></div>
<div style="left:531px;top:520px;width:11px;height:1px;background:#6a6a6a;"></div>
<div style="left:532px;top:691px;width:4px;height:3.5px;background:#12f05c;"></div>
<div style="left:537px;top:691px;width:4px;height:3.5px;background:#12f05c;"></div>
<div style="left:532px;top:589px;width:4px;height:1px;background:#12f05c;"></div>
<div style="left:537px;top:572px;width:4px;height:1px;background:#12f05c;"></div>
<span style="left:544.3199999999999px;top:499.5px;color:#a0a0a0;font-size:9px;line-height:11px">6</span>
<span style="left:544.3199999999999px;top:514.5px;color:#a0a0a0;font-size:9px;line-height:11px">0</span>
<span style="left:544.3199999999999px;top:534.5px;color:#a0a0a0;font-size:9px;line-height:11px">6</span>
<span style="left:544.3199999999999px;top:553.0px;color:#a0a0a0;font-size:9px;line-height:11px">12</span>
<span style="left:544.3199999999999px;top:572.0px;color:#a0a0a0;font-size:9px;line-height:11px">18</span>
<span style="left:544.3199999999999px;top:590.5px;color:#a0a0a0;font-size:9px;line-height:11px">24</span>
<span style="left:544.3199999999999px;top:611.5px;color:#a0a0a0;font-size:9px;line-height:11px">30</span>
<span style="left:544.3199999999999px;top:628.0px;color:#a0a0a0;font-size:9px;line-height:11px">36</span>
<span style="left:544.3199999999999px;top:643.0px;color:#a0a0a0;font-size:9px;line-height:11px">42</span>
<span style="left:544.3199999999999px;top:655.5px;color:#a0a0a0;font-size:9px;line-height:11px">48</span>
<span style="left:544.3199999999999px;top:667.5px;color:#a0a0a0;font-size:9px;line-height:11px">54</span>
<span style="left:544.3199999999999px;top:678.0px;color:#a0a0a0;font-size:9px;line-height:11px">60</span>
<svg style="position:absolute;left:491.02px;top:619.5px" width="24" height="28"><path d="M6.33 25.07A10.7 10.7 0 0 1 9.4 5.62M14.6 5.62A10.7 10.7 0 0 1 17.67 25.07" fill="none" stroke="#111" stroke-width="1.7"/><path d="M12 3.5V16.5" stroke="#111" stroke-width="1.8"/><path d="M9 0.7H15L12 3.4Z" fill="#111"/></svg>
<div style="left:493.71999999999997px;top:648.4px;width:18.4px;height:18.4px;background:#ffa64f;color:#222;font-size:10px;line-height:18.4px;text-align:center;font-weight:bold">11</div>
<div style="left:493.02px;top:670px;width:19.8px;height:11px;background:#222222;color:#bdbdbd;font-size:9px;line-height:11px;text-align:center;font-weight:bold">S</div>
<div style="left:493.02px;top:684.4px;width:19.8px;height:11px;background:#242424;"></div>
<svg style="position:absolute;left:498.42px;top:685.4px" width="9" height="9"><circle cx="4.5" cy="4.5" r="3.5" fill="#c4c4c4"/><path d="M5.2 2V5.8" stroke="#2a2a2a" stroke-width="0.9"/><ellipse cx="4.1" cy="5.9" rx="1.2" ry="0.9" fill="#2a2a2a"/></svg>
<div style="left:482.32px;top:701.8px;width:77.5px;height:5.4px;background:#f8f47a;"></div>
<div style="left:561.49px;top:480px;width:77.5px;height:228px;background:#383838;"></div>
<div style="left:561.49px;top:480px;width:77.5px;height:14px;background:#ffa472;"></div>
<span style="left:564.69px;top:481.5px;color:rgba(0,0,0,0.66);font-size:9px;line-height:12px;-webkit-text-stroke:0.45px currentColor">Pads</span>
<svg style="position:absolute;left:626.49px;top:482px" width="11" height="11"><circle cx="5.5" cy="5.5" r="4.75" fill="none" stroke="rgba(0,0,0,0.7)" stroke-width="1.15"/><path d="M3.3 3.7H7.7M3.3 5.5H7.7M3.3 7.3H7.7" stroke="rgba(0,0,0,0.7)" stroke-width="0.9"/></svg>
<div style="left:567.49px;top:500.5px;width:29px;height:10.5px;background:#242424;border-radius:5.5px;color:#c8c8c8;font-size:9px;line-height:11px;text-align:center">-14.4</div>
<div style="left:567.49px;top:515.3px;width:29.3px;height:10.6px;background:#242424;color:#c0c0c0;font-size:9px;line-height:10.6px;text-align:center;">0</div>
<svg style="position:absolute;left:599.99px;top:515.1px" width="10" height="11"><path d="M0 0L9.5 5.3L0 10.6Z" fill="#c2c2c2"/></svg>
<div style="left:606.99px;top:505px;width:2px;height:1px;background:#5c5c5c;"></div>
<div style="left:606.99px;top:520px;width:2px;height:1px;background:#5c5c5c;"></div>
<div style="left:606.99px;top:540px;width:2px;height:1px;background:#5c5c5c;"></div>
<div style="left:606.99px;top:558.5px;width:2px;height:1px;background:#5c5c5c;"></div>
<div style="left:606.99px;top:577.5px;width:2px;height:1px;background:#5c5c5c;"></div>
<div style="left:606.99px;top:596px;width:2px;height:1px;background:#5c5c5c;"></div>
<div style="left:606.99px;top:617px;width:2px;height:1px;background:#5c5c5c;"></div>
<div style="left:606.99px;top:633.5px;width:2px;height:1px;background:#5c5c5c;"></div>
<div style="left:606.99px;top:648.5px;width:2px;height:1px;background:#5c5c5c;"></div>
<div style="left:606.99px;top:661px;width:2px;height:1px;background:#5c5c5c;"></div>
<div style="left:606.99px;top:673px;width:2px;height:1px;background:#5c5c5c;"></div>
<div style="left:606.99px;top:683.5px;width:2px;height:1px;background:#5c5c5c;"></div>
<div style="left:606.99px;top:691px;width:2px;height:1px;background:#5c5c5c;"></div>
<div style="left:610px;top:500px;width:11px;height:194.5px;background:#1c1c1c;"></div>
<div style="left:615px;top:500px;width:1px;height:194.5px;background:#2a2a2a;"></div>
<div style="left:610px;top:520px;width:11px;height:1px;background:#6a6a6a;"></div>
<div style="left:611px;top:634px;width:4px;height:60.5px;background:#12f05c;"></div>
<div style="left:616px;top:630.4px;width:4px;height:64.10000000000002px;background:#12f05c;"></div>
<div style="left:611px;top:566.6px;width:4px;height:1px;background:#70c020;"></div>
<div style="left:616px;top:573px;width:4px;height:1px;background:#70c020;"></div>
<span style="left:623.49px;top:499.5px;color:#a0a0a0;font-size:9px;line-height:11px">6</span>
<span style="left:623.49px;top:514.5px;color:#a0a0a0;font-size:9px;line-height:11px">0</span>
<span style="left:623.49px;top:534.5px;color:#a0a0a0;font-size:9px;line-height:11px">6</span>
<span style="left:623.49px;top:553.0px;color:#a0a0a0;font-size:9px;line-height:11px">12</span>
<span style="left:623.49px;top:572.0px;color:#a0a0a0;font-size:9px;line-height:11px">18</span>
<span style="left:623.49px;top:590.5px;color:#a0a0a0;font-size:9px;line-height:11px">24</span>
<span style="left:623.49px;top:611.5px;color:#a0a0a0;font-size:9px;line-height:11px">30</span>
<span style="left:623.49px;top:628.0px;color:#a0a0a0;font-size:9px;line-height:11px">36</span>
<span style="left:623.49px;top:643.0px;color:#a0a0a0;font-size:9px;line-height:11px">42</span>
<span style="left:623.49px;top:655.5px;color:#a0a0a0;font-size:9px;line-height:11px">48</span>
<span style="left:623.49px;top:667.5px;color:#a0a0a0;font-size:9px;line-height:11px">54</span>
<span style="left:623.49px;top:678.0px;color:#a0a0a0;font-size:9px;line-height:11px">60</span>
<svg style="position:absolute;left:570.19px;top:619.5px" width="24" height="28"><path d="M6.33 25.07A10.7 10.7 0 0 1 9.4 5.62M14.6 5.62A10.7 10.7 0 0 1 17.67 25.07" fill="none" stroke="#111" stroke-width="1.7"/><path d="M12 3.5V16.5" stroke="#111" stroke-width="1.8"/><path d="M9 0.7H15L12 3.4Z" fill="#111"/></svg>
<div style="left:572.89px;top:648.4px;width:18.4px;height:18.4px;background:#ffa64f;color:#222;font-size:10px;line-height:18.4px;text-align:center;font-weight:bold">12</div>
<div style="left:572.19px;top:670px;width:19.8px;height:11px;background:#222222;color:#bdbdbd;font-size:9px;line-height:11px;text-align:center;font-weight:bold">S</div>
<div style="left:561.49px;top:701.8px;width:77.5px;height:5.4px;background:#ffa472;"></div>
<div style="left:640.66px;top:480px;width:77.5px;height:228px;background:#383838;"></div>
<div style="left:640.66px;top:480px;width:77.5px;height:14px;background:#ff93a4;"></div>
<span style="left:643.86px;top:481.5px;color:rgba(0,0,0,0.66);font-size:9px;line-height:12px;-webkit-text-stroke:0.45px currentColor">Ambience</span>
<div style="left:646.66px;top:500.5px;width:29px;height:10.5px;background:#242424;border-radius:5.5px;color:#c8c8c8;font-size:9px;line-height:11px;text-align:center">-29.7</div>
<div style="left:646.66px;top:515.3px;width:29.3px;height:10.6px;background:#242424;color:#c0c0c0;font-size:9px;line-height:10.6px;text-align:center;">-8.3</div>
<svg style="position:absolute;left:679.16px;top:542.0px" width="10" height="11"><path d="M0 0L9.5 5.3L0 10.6Z" fill="#c2c2c2"/></svg>
<div style="left:686.16px;top:505px;width:2px;height:1px;background:#5c5c5c;"></div>
<div style="left:686.16px;top:520px;width:2px;height:1px;background:#5c5c5c;"></div>
<div style="left:686.16px;top:540px;width:2px;height:1px;background:#5c5c5c;"></div>
<div style="left:686.16px;top:558.5px;width:2px;height:1px;background:#5c5c5c;"></div>
<div style="left:686.16px;top:577.5px;width:2px;height:1px;background:#5c5c5c;"></div>
<div style="left:686.16px;top:596px;width:2px;height:1px;background:#5c5c5c;"></div>
<div style="left:686.16px;top:617px;width:2px;height:1px;background:#5c5c5c;"></div>
<div style="left:686.16px;top:633.5px;width:2px;height:1px;background:#5c5c5c;"></div>
<div style="left:686.16px;top:648.5px;width:2px;height:1px;background:#5c5c5c;"></div>
<div style="left:686.16px;top:661px;width:2px;height:1px;background:#5c5c5c;"></div>
<div style="left:686.16px;top:673px;width:2px;height:1px;background:#5c5c5c;"></div>
<div style="left:686.16px;top:683.5px;width:2px;height:1px;background:#5c5c5c;"></div>
<div style="left:686.16px;top:691px;width:2px;height:1px;background:#5c5c5c;"></div>
<div style="left:689px;top:500px;width:11px;height:194.5px;background:#1c1c1c;"></div>
<div style="left:694px;top:500px;width:1px;height:194.5px;background:#2a2a2a;"></div>
<div style="left:689px;top:520px;width:11px;height:1px;background:#6a6a6a;"></div>
<div style="left:690px;top:626.6px;width:4px;height:67.89999999999998px;background:#1fae4c;"></div>
<div style="left:695px;top:632.6px;width:4px;height:61.89999999999998px;background:#1fae4c;"></div>
<div style="left:690px;top:649px;width:4px;height:45.5px;background:#12f05c;"></div>
<div style="left:695px;top:649px;width:4px;height:45.5px;background:#12f05c;"></div>
<div style="left:690px;top:618.9px;width:4px;height:1px;background:#12f05c;"></div>
<div style="left:695px;top:616px;width:4px;height:1px;background:#12f05c;"></div>
<span style="left:702.66px;top:499.5px;color:#a0a0a0;font-size:9px;line-height:11px">6</span>
<span style="left:702.66px;top:514.5px;color:#a0a0a0;font-size:9px;line-height:11px">0</span>
<span style="left:702.66px;top:534.5px;color:#a0a0a0;font-size:9px;line-height:11px">6</span>
<span style="left:702.66px;top:553.0px;color:#a0a0a0;font-size:9px;line-height:11px">12</span>
<span style="left:702.66px;top:572.0px;color:#a0a0a0;font-size:9px;line-height:11px">18</span>
<span style="left:702.66px;top:590.5px;color:#a0a0a0;font-size:9px;line-height:11px">24</span>
<span style="left:702.66px;top:611.5px;color:#a0a0a0;font-size:9px;line-height:11px">30</span>
<span style="left:702.66px;top:628.0px;color:#a0a0a0;font-size:9px;line-height:11px">36</span>
<span style="left:702.66px;top:643.0px;color:#a0a0a0;font-size:9px;line-height:11px">42</span>
<span style="left:702.66px;top:655.5px;color:#a0a0a0;font-size:9px;line-height:11px">48</span>
<span style="left:702.66px;top:667.5px;color:#a0a0a0;font-size:9px;line-height:11px">54</span>
<span style="left:702.66px;top:678.0px;color:#a0a0a0;font-size:9px;line-height:11px">60</span>
<svg style="position:absolute;left:649.36px;top:619.5px" width="24" height="28"><path d="M6.33 25.07A10.7 10.7 0 0 1 9.4 5.62M14.6 5.62A10.7 10.7 0 0 1 17.67 25.07" fill="none" stroke="#111" stroke-width="1.7"/><path d="M12 3.5V16.5" stroke="#111" stroke-width="1.8"/><path d="M9 0.7H15L12 3.4Z" fill="#111"/></svg>
<div style="left:652.06px;top:648.4px;width:18.4px;height:18.4px;background:#ffa64f;color:#222;font-size:10px;line-height:18.4px;text-align:center;font-weight:bold">16</div>
<div style="left:651.36px;top:670px;width:19.8px;height:11px;background:#222222;color:#bdbdbd;font-size:9px;line-height:11px;text-align:center;font-weight:bold">S</div>
<div style="left:651.36px;top:684.4px;width:19.8px;height:11px;background:#242424;"></div>
<svg style="position:absolute;left:656.76px;top:685.4px" width="9" height="9"><circle cx="4.5" cy="4.5" r="3.4" fill="#6a6a6a"/></svg>
<div style="left:640.66px;top:701.8px;width:77.5px;height:5.4px;background:#ff93a4;"></div>
<div style="left:719.8299999999999px;top:480px;width:77.5px;height:228px;background:#383838;"></div>
<div style="left:719.8299999999999px;top:480px;width:77.5px;height:14px;background:#ff93a4;"></div>
<span style="left:723.03px;top:481.5px;color:rgba(0,0,0,0.66);font-size:9px;line-height:12px;-webkit-text-stroke:0.45px currentColor">Drone</span>
<div style="left:725.8299999999999px;top:500.5px;width:29px;height:10.5px;background:#242424;border-radius:5.5px;color:#c8c8c8;font-size:9px;line-height:11px;text-align:center">-25.0</div>
<div style="left:725.8299999999999px;top:515.3px;width:29.3px;height:10.6px;background:#242424;color:#c0c0c0;font-size:9px;line-height:10.6px;text-align:center;">-15.6</div>
<svg style="position:absolute;left:758.3299999999999px;top:565.1px" width="10" height="11"><path d="M0 0L9.5 5.3L0 10.6Z" fill="#c2c2c2"/></svg>
<div style="left:765.3299999999999px;top:505px;width:2px;height:1px;background:#5c5c5c;"></div>
<div style="left:765.3299999999999px;top:520px;width:2px;height:1px;background:#5c5c5c;"></div>
<div style="left:765.3299999999999px;top:540px;width:2px;height:1px;background:#5c5c5c;"></div>
<div style="left:765.3299999999999px;top:558.5px;width:2px;height:1px;background:#5c5c5c;"></div>
<div style="left:765.3299999999999px;top:577.5px;width:2px;height:1px;background:#5c5c5c;"></div>
<div style="left:765.3299999999999px;top:596px;width:2px;height:1px;background:#5c5c5c;"></div>
<div style="left:765.3299999999999px;top:617px;width:2px;height:1px;background:#5c5c5c;"></div>
<div style="left:765.3299999999999px;top:633.5px;width:2px;height:1px;background:#5c5c5c;"></div>
<div style="left:765.3299999999999px;top:648.5px;width:2px;height:1px;background:#5c5c5c;"></div>
<div style="left:765.3299999999999px;top:661px;width:2px;height:1px;background:#5c5c5c;"></div>
<div style="left:765.3299999999999px;top:673px;width:2px;height:1px;background:#5c5c5c;"></div>
<div style="left:765.3299999999999px;top:683.5px;width:2px;height:1px;background:#5c5c5c;"></div>
<div style="left:765.3299999999999px;top:691px;width:2px;height:1px;background:#5c5c5c;"></div>
<div style="left:768px;top:500px;width:11px;height:194.5px;background:#1c1c1c;"></div>
<div style="left:773px;top:500px;width:1px;height:194.5px;background:#2a2a2a;"></div>
<div style="left:768px;top:520px;width:11px;height:1px;background:#6a6a6a;"></div>
<div style="left:769px;top:609px;width:4px;height:85.5px;background:#1fae4c;"></div>
<div style="left:774px;top:614px;width:4px;height:80.5px;background:#1fae4c;"></div>
<div style="left:769px;top:636.2px;width:4px;height:58.299999999999955px;background:#12f05c;"></div>
<div style="left:774px;top:636.2px;width:4px;height:58.299999999999955px;background:#12f05c;"></div>
<div style="left:774px;top:601px;width:4px;height:1px;background:#12f05c;"></div>
<span style="left:781.8299999999999px;top:499.5px;color:#a0a0a0;font-size:9px;line-height:11px">6</span>
<span style="left:781.8299999999999px;top:514.5px;color:#a0a0a0;font-size:9px;line-height:11px">0</span>
<span style="left:781.8299999999999px;top:534.5px;color:#a0a0a0;font-size:9px;line-height:11px">6</span>
<span style="left:781.8299999999999px;top:553.0px;color:#a0a0a0;font-size:9px;line-height:11px">12</span>
<span style="left:781.8299999999999px;top:572.0px;color:#a0a0a0;font-size:9px;line-height:11px">18</span>
<span style="left:781.8299999999999px;top:590.5px;color:#a0a0a0;font-size:9px;line-height:11px">24</span>
<span style="left:781.8299999999999px;top:611.5px;color:#a0a0a0;font-size:9px;line-height:11px">30</span>
<span style="left:781.8299999999999px;top:628.0px;color:#a0a0a0;font-size:9px;line-height:11px">36</span>
<span style="left:781.8299999999999px;top:643.0px;color:#a0a0a0;font-size:9px;line-height:11px">42</span>
<span style="left:781.8299999999999px;top:655.5px;color:#a0a0a0;font-size:9px;line-height:11px">48</span>
<span style="left:781.8299999999999px;top:667.5px;color:#a0a0a0;font-size:9px;line-height:11px">54</span>
<span style="left:781.8299999999999px;top:678.0px;color:#a0a0a0;font-size:9px;line-height:11px">60</span>
<svg style="position:absolute;left:728.53px;top:619.5px" width="24" height="28"><path d="M6.33 25.07A10.7 10.7 0 0 1 9.4 5.62M14.6 5.62A10.7 10.7 0 0 1 17.67 25.07" fill="none" stroke="#111" stroke-width="1.7"/><path d="M12 3.5V16.5" stroke="#111" stroke-width="1.8"/><path d="M9 0.7H15L12 3.4Z" fill="#111"/></svg>
<div style="left:731.2299999999999px;top:648.4px;width:18.4px;height:18.4px;background:#ffa64f;color:#222;font-size:10px;line-height:18.4px;text-align:center;font-weight:bold">17</div>
<div style="left:730.53px;top:670px;width:19.8px;height:11px;background:#222222;color:#bdbdbd;font-size:9px;line-height:11px;text-align:center;font-weight:bold">S</div>
<div style="left:730.53px;top:684.4px;width:19.8px;height:11px;background:#242424;"></div>
<svg style="position:absolute;left:735.93px;top:685.4px" width="9" height="9"><circle cx="4.5" cy="4.5" r="3.4" fill="#6a6a6a"/></svg>
<div style="left:719.8299999999999px;top:701.8px;width:77.5px;height:5.4px;background:#ff93a4;"></div>
<div style="left:799.0px;top:480px;width:77.5px;height:228px;background:#383838;"></div>
<div style="left:799.0px;top:480px;width:77.5px;height:14px;background:#d86ce8;"></div>
<span style="left:802.2px;top:481.5px;color:rgba(0,0,0,0.66);font-size:9px;line-height:12px;-webkit-text-stroke:0.45px currentColor">FX</span>
<div style="left:805.0px;top:500.5px;width:29px;height:10.5px;background:#242424;border-radius:5.5px;color:#c8c8c8;font-size:9px;line-height:11px;text-align:center">-19.6</div>
<div style="left:805.0px;top:515.3px;width:29.3px;height:10.6px;background:#242424;color:#c0c0c0;font-size:9px;line-height:10.6px;text-align:center;">-4.1</div>
<svg style="position:absolute;left:837.5px;top:528.3000000000001px" width="10" height="11"><path d="M0 0L9.5 5.3L0 10.6Z" fill="#c2c2c2"/></svg>
<div style="left:844.5px;top:505px;width:2px;height:1px;background:#5c5c5c;"></div>
<div style="left:844.5px;top:520px;width:2px;height:1px;background:#5c5c5c;"></div>
<div style="left:844.5px;top:540px;width:2px;height:1px;background:#5c5c5c;"></div>
<div style="left:844.5px;top:558.5px;width:2px;height:1px;background:#5c5c5c;"></div>
<div style="left:844.5px;top:577.5px;width:2px;height:1px;background:#5c5c5c;"></div>
<div style="left:844.5px;top:596px;width:2px;height:1px;background:#5c5c5c;"></div>
<div style="left:844.5px;top:617px;width:2px;height:1px;background:#5c5c5c;"></div>
<div style="left:844.5px;top:633.5px;width:2px;height:1px;background:#5c5c5c;"></div>
<div style="left:844.5px;top:648.5px;width:2px;height:1px;background:#5c5c5c;"></div>
<div style="left:844.5px;top:661px;width:2px;height:1px;background:#5c5c5c;"></div>
<div style="left:844.5px;top:673px;width:2px;height:1px;background:#5c5c5c;"></div>
<div style="left:844.5px;top:683.5px;width:2px;height:1px;background:#5c5c5c;"></div>
<div style="left:844.5px;top:691px;width:2px;height:1px;background:#5c5c5c;"></div>
<div style="left:848px;top:500px;width:11px;height:194.5px;background:#1c1c1c;"></div>
<div style="left:853px;top:500px;width:1px;height:194.5px;background:#2a2a2a;"></div>
<div style="left:848px;top:520px;width:11px;height:1px;background:#6a6a6a;"></div>
<div style="left:849px;top:592px;width:4px;height:102.5px;background:#1fae4c;"></div>
<div style="left:854px;top:586px;width:4px;height:108.5px;background:#1fae4c;"></div>
<div style="left:849px;top:614.8px;width:4px;height:79.70000000000005px;background:#12f05c;"></div>
<div style="left:854px;top:608.7px;width:4px;height:85.79999999999995px;background:#12f05c;"></div>
<div style="left:849px;top:587.8px;width:4px;height:1px;background:#12f05c;"></div>
<div style="left:854px;top:583.6px;width:4px;height:1px;background:#12f05c;"></div>
<span style="left:861.0px;top:499.5px;color:#a0a0a0;font-size:9px;line-height:11px">6</span>
<span style="left:861.0px;top:514.5px;color:#a0a0a0;font-size:9px;line-height:11px">0</span>
<span style="left:861.0px;top:534.5px;color:#a0a0a0;font-size:9px;line-height:11px">6</span>
<span style="left:861.0px;top:553.0px;color:#a0a0a0;font-size:9px;line-height:11px">12</span>
<span style="left:861.0px;top:572.0px;color:#a0a0a0;font-size:9px;line-height:11px">18</span>
<span style="left:861.0px;top:590.5px;color:#a0a0a0;font-size:9px;line-height:11px">24</span>
<span style="left:861.0px;top:611.5px;color:#a0a0a0;font-size:9px;line-height:11px">30</span>
<span style="left:861.0px;top:628.0px;color:#a0a0a0;font-size:9px;line-height:11px">36</span>
<span style="left:861.0px;top:643.0px;color:#a0a0a0;font-size:9px;line-height:11px">42</span>
<span style="left:861.0px;top:655.5px;color:#a0a0a0;font-size:9px;line-height:11px">48</span>
<span style="left:861.0px;top:667.5px;color:#a0a0a0;font-size:9px;line-height:11px">54</span>
<span style="left:861.0px;top:678.0px;color:#a0a0a0;font-size:9px;line-height:11px">60</span>
<svg style="position:absolute;left:807.7px;top:619.5px" width="24" height="28"><path d="M6.33 25.07A10.7 10.7 0 0 1 9.4 5.62M14.6 5.62A10.7 10.7 0 0 1 17.67 25.07" fill="none" stroke="#111" stroke-width="1.7"/><path d="M12 3.5V16.5" stroke="#111" stroke-width="1.8"/><path d="M9 0.7H15L12 3.4Z" fill="#111"/></svg>
<div style="left:810.4px;top:648.4px;width:18.4px;height:18.4px;background:#ffa64f;color:#222;font-size:10px;line-height:18.4px;text-align:center;font-weight:bold">18</div>
<div style="left:809.7px;top:670px;width:19.8px;height:11px;background:#222222;color:#bdbdbd;font-size:9px;line-height:11px;text-align:center;font-weight:bold">S</div>
<div style="left:809.7px;top:684.4px;width:19.8px;height:11px;background:#242424;"></div>
<svg style="position:absolute;left:815.1px;top:685.4px" width="9" height="9"><circle cx="4.5" cy="4.5" r="3.4" fill="#6a6a6a"/></svg>
<div style="left:799.0px;top:701.8px;width:77.5px;height:5.4px;background:#d86ce8;"></div>
<div style="left:878.17px;top:480px;width:71px;height:228px;background:#383838;"></div>
<div style="left:878.17px;top:480px;width:71px;height:14px;background:#d86ce8;"></div>
<span style="left:881.37px;top:481.5px;color:rgba(0,0,0,0.66);font-size:9px;line-height:12px;-webkit-text-stroke:0.45px currentColor">Zap</span>
<div style="left:892.37px;top:500.5px;width:29px;height:10.5px;background:#242424;border-radius:5.5px;color:#c8c8c8;font-size:9px;line-height:11px;text-align:center">-24.6</div>
<div style="left:892.37px;top:515.3px;width:29.3px;height:10.6px;background:#242424;color:#c0c0c0;font-size:9px;line-height:10.6px;text-align:center;">-19.4</div>
<svg style="position:absolute;left:924.87px;top:577.6px" width="10" height="11"><path d="M0 0L9.5 5.3L0 10.6Z" fill="#c2c2c2"/></svg>
<div style="left:931.87px;top:505px;width:2px;height:1px;background:#5c5c5c;"></div>
<div style="left:931.87px;top:520px;width:2px;height:1px;background:#5c5c5c;"></div>
<div style="left:931.87px;top:540px;width:2px;height:1px;background:#5c5c5c;"></div>
<div style="left:931.87px;top:558.5px;width:2px;height:1px;background:#5c5c5c;"></div>
<div style="left:931.87px;top:577.5px;width:2px;height:1px;background:#5c5c5c;"></div>
<div style="left:931.87px;top:596px;width:2px;height:1px;background:#5c5c5c;"></div>
<div style="left:931.87px;top:617px;width:2px;height:1px;background:#5c5c5c;"></div>
<div style="left:931.87px;top:633.5px;width:2px;height:1px;background:#5c5c5c;"></div>
<div style="left:931.87px;top:648.5px;width:2px;height:1px;background:#5c5c5c;"></div>
<div style="left:931.87px;top:661px;width:2px;height:1px;background:#5c5c5c;"></div>
<div style="left:931.87px;top:673px;width:2px;height:1px;background:#5c5c5c;"></div>
<div style="left:931.87px;top:683.5px;width:2px;height:1px;background:#5c5c5c;"></div>
<div style="left:931.87px;top:691px;width:2px;height:1px;background:#5c5c5c;"></div>
<div style="left:935px;top:500px;width:11px;height:194.5px;background:#1c1c1c;"></div>
<div style="left:940px;top:500px;width:1px;height:194.5px;background:#2a2a2a;"></div>
<div style="left:935px;top:520px;width:11px;height:1px;background:#6a6a6a;"></div>
<div style="left:936px;top:612px;width:4px;height:82.5px;background:#1fae4c;"></div>
<div style="left:941px;top:608.7px;width:4px;height:85.79999999999995px;background:#1fae4c;"></div>
<div style="left:936px;top:636.2px;width:4px;height:58.299999999999955px;background:#12f05c;"></div>
<div style="left:941px;top:636.2px;width:4px;height:58.299999999999955px;background:#12f05c;"></div>
<div style="left:936px;top:599.6px;width:4px;height:1px;background:#12f05c;"></div>
<div style="left:941px;top:601.8px;width:4px;height:1px;background:#12f05c;"></div>
<span style="left:948.37px;top:499.5px;color:#a0a0a0;font-size:9px;line-height:11px">6</span>
<span style="left:948.37px;top:514.5px;color:#a0a0a0;font-size:9px;line-height:11px">0</span>
<span style="left:948.37px;top:534.5px;color:#a0a0a0;font-size:9px;line-height:11px">6</span>
<span style="left:948.37px;top:553.0px;color:#a0a0a0;font-size:9px;line-height:11px">12</span>
<span style="left:948.37px;top:572.0px;color:#a0a0a0;font-size:9px;line-height:11px">18</span>
<span style="left:948.37px;top:590.5px;color:#a0a0a0;font-size:9px;line-height:11px">24</span>
<span style="left:948.37px;top:611.5px;color:#a0a0a0;font-size:9px;line-height:11px">30</span>
<span style="left:948.37px;top:628.0px;color:#a0a0a0;font-size:9px;line-height:11px">36</span>
<span style="left:948.37px;top:643.0px;color:#a0a0a0;font-size:9px;line-height:11px">42</span>
<span style="left:948.37px;top:655.5px;color:#a0a0a0;font-size:9px;line-height:11px">48</span>
<span style="left:948.37px;top:667.5px;color:#a0a0a0;font-size:9px;line-height:11px">54</span>
<span style="left:948.37px;top:678.0px;color:#a0a0a0;font-size:9px;line-height:11px">60</span>
<svg style="position:absolute;left:895.07px;top:619.5px" width="24" height="28"><path d="M6.33 25.07A10.7 10.7 0 0 1 9.4 5.62M14.6 5.62A10.7 10.7 0 0 1 17.67 25.07" fill="none" stroke="#111" stroke-width="1.7"/><path d="M12 3.5V16.5" stroke="#111" stroke-width="1.8"/><path d="M9 0.7H15L12 3.4Z" fill="#111"/></svg>
<div style="left:897.77px;top:648.4px;width:18.4px;height:18.4px;background:#ffa64f;color:#222;font-size:10px;line-height:18.4px;text-align:center;font-weight:bold">19</div>
<div style="left:897.07px;top:670px;width:19.8px;height:11px;background:#222222;color:#bdbdbd;font-size:9px;line-height:11px;text-align:center;font-weight:bold">S</div>
<div style="left:897.07px;top:684.4px;width:19.8px;height:11px;background:#242424;"></div>
<svg style="position:absolute;left:902.47px;top:685.4px" width="9" height="9"><circle cx="4.5" cy="4.5" r="3.5" fill="#c4c4c4"/><path d="M5.2 2V5.8" stroke="#2a2a2a" stroke-width="0.9"/><ellipse cx="4.1" cy="5.9" rx="1.2" ry="0.9" fill="#2a2a2a"/></svg>
<div style="left:878.17px;top:701.8px;width:71px;height:5.4px;background:#d86ce8;"></div>
<div style="left:951.7px;top:480px;width:77.5px;height:228px;background:#383838;"></div>
<div style="left:951.7px;top:480px;width:77.5px;height:14px;background:#d2d2d2;"></div>
<span style="left:954.9000000000001px;top:481.5px;color:rgba(0,0,0,0.66);font-size:9px;line-height:12px;-webkit-text-stroke:0.45px currentColor">A Reverb</span>
<div style="left:957.7px;top:500.5px;width:29px;height:10.5px;background:#242424;border-radius:5.5px;color:#c8c8c8;font-size:9px;line-height:11px;text-align:center">-50.9</div>
<div style="left:957.7px;top:515.3px;width:29.3px;height:10.6px;background:#242424;color:#c0c0c0;font-size:9px;line-height:10.6px;text-align:center;">0</div>
<svg style="position:absolute;left:990.2px;top:515.2px" width="10" height="11"><path d="M0 0L9.5 5.3L0 10.6Z" fill="#c2c2c2"/></svg>
<div style="left:997.2px;top:505px;width:2px;height:1px;background:#5c5c5c;"></div>
<div style="left:997.2px;top:520px;width:2px;height:1px;background:#5c5c5c;"></div>
<div style="left:997.2px;top:540px;width:2px;height:1px;background:#5c5c5c;"></div>
<div style="left:997.2px;top:558.5px;width:2px;height:1px;background:#5c5c5c;"></div>
<div style="left:997.2px;top:577.5px;width:2px;height:1px;background:#5c5c5c;"></div>
<div style="left:997.2px;top:596px;width:2px;height:1px;background:#5c5c5c;"></div>
<div style="left:997.2px;top:617px;width:2px;height:1px;background:#5c5c5c;"></div>
<div style="left:997.2px;top:633.5px;width:2px;height:1px;background:#5c5c5c;"></div>
<div style="left:997.2px;top:648.5px;width:2px;height:1px;background:#5c5c5c;"></div>
<div style="left:997.2px;top:661px;width:2px;height:1px;background:#5c5c5c;"></div>
<div style="left:997.2px;top:673px;width:2px;height:1px;background:#5c5c5c;"></div>
<div style="left:997.2px;top:683.5px;width:2px;height:1px;background:#5c5c5c;"></div>
<div style="left:997.2px;top:691px;width:2px;height:1px;background:#5c5c5c;"></div>
<div style="left:1000px;top:500px;width:11px;height:194.5px;background:#1c1c1c;"></div>
<div style="left:1005px;top:500px;width:1px;height:194.5px;background:#2a2a2a;"></div>
<div style="left:1000px;top:520px;width:11px;height:1px;background:#6a6a6a;"></div>
<div style="left:1001px;top:672.5px;width:4px;height:22.0px;background:#1fae4c;"></div>
<div style="left:1006px;top:672.5px;width:4px;height:22.0px;background:#1fae4c;"></div>
<div style="left:1001px;top:684.9px;width:4px;height:9.600000000000023px;background:#12f05c;"></div>
<div style="left:1006px;top:684.9px;width:4px;height:9.600000000000023px;background:#12f05c;"></div>
<div style="left:1001px;top:666.5px;width:4px;height:1px;background:#12f05c;"></div>
<div style="left:1006px;top:670.6px;width:4px;height:1px;background:#12f05c;"></div>
<span style="left:1013.7px;top:499.5px;color:#a0a0a0;font-size:9px;line-height:11px">6</span>
<span style="left:1013.7px;top:514.5px;color:#a0a0a0;font-size:9px;line-height:11px">0</span>
<span style="left:1013.7px;top:534.5px;color:#a0a0a0;font-size:9px;line-height:11px">6</span>
<span style="left:1013.7px;top:553.0px;color:#a0a0a0;font-size:9px;line-height:11px">12</span>
<span style="left:1013.7px;top:572.0px;color:#a0a0a0;font-size:9px;line-height:11px">18</span>
<span style="left:1013.7px;top:590.5px;color:#a0a0a0;font-size:9px;line-height:11px">24</span>
<span style="left:1013.7px;top:611.5px;color:#a0a0a0;font-size:9px;line-height:11px">30</span>
<span style="left:1013.7px;top:628.0px;color:#a0a0a0;font-size:9px;line-height:11px">36</span>
<span style="left:1013.7px;top:643.0px;color:#a0a0a0;font-size:9px;line-height:11px">42</span>
<span style="left:1013.7px;top:655.5px;color:#a0a0a0;font-size:9px;line-height:11px">48</span>
<span style="left:1013.7px;top:667.5px;color:#a0a0a0;font-size:9px;line-height:11px">54</span>
<span style="left:1013.7px;top:678.0px;color:#a0a0a0;font-size:9px;line-height:11px">60</span>
<svg style="position:absolute;left:960.4000000000001px;top:619.5px" width="24" height="28"><path d="M6.33 25.07A10.7 10.7 0 0 1 9.4 5.62M14.6 5.62A10.7 10.7 0 0 1 17.67 25.07" fill="none" stroke="#111" stroke-width="1.7"/><path d="M12 3.5V16.5" stroke="#111" stroke-width="1.8"/><path d="M9 0.7H15L12 3.4Z" fill="#111"/></svg>
<div style="left:963.1px;top:648.4px;width:18.4px;height:18.4px;background:#ffa64f;color:#222;font-size:10px;line-height:18.4px;text-align:center;font-weight:bold">A</div>
<div style="left:962.4000000000001px;top:670px;width:19.8px;height:11px;background:#222222;color:#bdbdbd;font-size:9px;line-height:11px;text-align:center;font-weight:bold">S</div>
<div style="left:951.7px;top:701.8px;width:77.5px;height:5.4px;background:#d2d2d2;"></div>
<div style="left:1030.9px;top:480px;width:77.5px;height:228px;background:#383838;"></div>
<div style="left:1030.9px;top:480px;width:77.5px;height:14px;background:#d2d2d2;"></div>
<span style="left:1034.1000000000001px;top:481.5px;color:rgba(0,0,0,0.66);font-size:9px;line-height:12px;-webkit-text-stroke:0.45px currentColor">B Delay</span>
<div style="left:1036.9px;top:500.5px;width:29px;height:10.5px;background:#242424;border-radius:5.5px;color:#c8c8c8;font-size:9px;line-height:11px;text-align:center">-55.2</div>
<div style="left:1036.9px;top:515.3px;width:29.3px;height:10.6px;background:#242424;color:#c0c0c0;font-size:9px;line-height:10.6px;text-align:center;">0</div>
<svg style="position:absolute;left:1069.4px;top:515.2px" width="10" height="11"><path d="M0 0L9.5 5.3L0 10.6Z" fill="#c2c2c2"/></svg>
<div style="left:1076.4px;top:505px;width:2px;height:1px;background:#5c5c5c;"></div>
<div style="left:1076.4px;top:520px;width:2px;height:1px;background:#5c5c5c;"></div>
<div style="left:1076.4px;top:540px;width:2px;height:1px;background:#5c5c5c;"></div>
<div style="left:1076.4px;top:558.5px;width:2px;height:1px;background:#5c5c5c;"></div>
<div style="left:1076.4px;top:577.5px;width:2px;height:1px;background:#5c5c5c;"></div>
<div style="left:1076.4px;top:596px;width:2px;height:1px;background:#5c5c5c;"></div>
<div style="left:1076.4px;top:617px;width:2px;height:1px;background:#5c5c5c;"></div>
<div style="left:1076.4px;top:633.5px;width:2px;height:1px;background:#5c5c5c;"></div>
<div style="left:1076.4px;top:648.5px;width:2px;height:1px;background:#5c5c5c;"></div>
<div style="left:1076.4px;top:661px;width:2px;height:1px;background:#5c5c5c;"></div>
<div style="left:1076.4px;top:673px;width:2px;height:1px;background:#5c5c5c;"></div>
<div style="left:1076.4px;top:683.5px;width:2px;height:1px;background:#5c5c5c;"></div>
<div style="left:1076.4px;top:691px;width:2px;height:1px;background:#5c5c5c;"></div>
<div style="left:1080px;top:500px;width:11px;height:194.5px;background:#1c1c1c;"></div>
<div style="left:1085px;top:500px;width:1px;height:194.5px;background:#2a2a2a;"></div>
<div style="left:1080px;top:520px;width:11px;height:1px;background:#6a6a6a;"></div>
<div style="left:1081px;top:691px;width:4px;height:3.5px;background:#12f05c;"></div>
<div style="left:1086px;top:682.7px;width:4px;height:11.799999999999955px;background:#12f05c;"></div>
<div style="left:1081px;top:676.6px;width:4px;height:1px;background:#12f05c;"></div>
<div style="left:1086px;top:675px;width:4px;height:1px;background:#12f05c;"></div>
<span style="left:1092.9px;top:499.5px;color:#a0a0a0;font-size:9px;line-height:11px">6</span>
<span style="left:1092.9px;top:514.5px;color:#a0a0a0;font-size:9px;line-height:11px">0</span>
<span style="left:1092.9px;top:534.5px;color:#a0a0a0;font-size:9px;line-height:11px">6</span>
<span style="left:1092.9px;top:553.0px;color:#a0a0a0;font-size:9px;line-height:11px">12</span>
<span style="left:1092.9px;top:572.0px;color:#a0a0a0;font-size:9px;line-height:11px">18</span>
<span style="left:1092.9px;top:590.5px;color:#a0a0a0;font-size:9px;line-height:11px">24</span>
<span style="left:1092.9px;top:611.5px;color:#a0a0a0;font-size:9px;line-height:11px">30</span>
<span style="left:1092.9px;top:628.0px;color:#a0a0a0;font-size:9px;line-height:11px">36</span>
<span style="left:1092.9px;top:643.0px;color:#a0a0a0;font-size:9px;line-height:11px">42</span>
<span style="left:1092.9px;top:655.5px;color:#a0a0a0;font-size:9px;line-height:11px">48</span>
<span style="left:1092.9px;top:667.5px;color:#a0a0a0;font-size:9px;line-height:11px">54</span>
<span style="left:1092.9px;top:678.0px;color:#a0a0a0;font-size:9px;line-height:11px">60</span>
<svg style="position:absolute;left:1039.6000000000001px;top:619.5px" width="24" height="28"><path d="M6.33 25.07A10.7 10.7 0 0 1 9.4 5.62M14.6 5.62A10.7 10.7 0 0 1 17.67 25.07" fill="none" stroke="#111" stroke-width="1.7"/><path d="M12 3.5V16.5" stroke="#111" stroke-width="1.8"/><path d="M9 0.7H15L12 3.4Z" fill="#111"/></svg>
<div style="left:1042.3000000000002px;top:648.4px;width:18.4px;height:18.4px;background:#ffa64f;color:#222;font-size:10px;line-height:18.4px;text-align:center;font-weight:bold">B</div>
<div style="left:1041.6000000000001px;top:670px;width:19.8px;height:11px;background:#222222;color:#bdbdbd;font-size:9px;line-height:11px;text-align:center;font-weight:bold">S</div>
<div style="left:1030.9px;top:701.8px;width:77.5px;height:5.4px;background:#d2d2d2;"></div>
<div style="left:1110.1000000000001px;top:480px;width:82.3px;height:228px;background:#383838;"></div>
<div style="left:1110.1000000000001px;top:480px;width:82.3px;height:14px;background:#ffffff;"></div>
<span style="left:1113.3000000000002px;top:481.5px;color:rgba(0,0,0,0.66);font-size:9px;line-height:12px;color:#333;font-size:9px">Main</span>
<div style="left:1118.6000000000001px;top:500.5px;width:29px;height:10.5px;background:#242424;border-radius:5.5px;color:#c8c8c8;font-size:9px;line-height:11px;text-align:center">-0.30</div>
<div style="left:1118.6000000000001px;top:515.3px;width:29.3px;height:10.6px;background:#242424;color:#c0c0c0;font-size:9px;line-height:10.6px;text-align:center;">0</div>
<svg style="position:absolute;left:1151.1000000000001px;top:515.2px" width="10" height="11"><path d="M0 0L9.5 5.3L0 10.6Z" fill="#c2c2c2"/></svg>
<div style="left:1158.1000000000001px;top:505px;width:2px;height:1px;background:#5c5c5c;"></div>
<div style="left:1158.1000000000001px;top:520px;width:2px;height:1px;background:#5c5c5c;"></div>
<div style="left:1158.1000000000001px;top:540px;width:2px;height:1px;background:#5c5c5c;"></div>
<div style="left:1158.1000000000001px;top:558.5px;width:2px;height:1px;background:#5c5c5c;"></div>
<div style="left:1158.1000000000001px;top:577.5px;width:2px;height:1px;background:#5c5c5c;"></div>
<div style="left:1158.1000000000001px;top:596px;width:2px;height:1px;background:#5c5c5c;"></div>
<div style="left:1158.1000000000001px;top:617px;width:2px;height:1px;background:#5c5c5c;"></div>
<div style="left:1158.1000000000001px;top:633.5px;width:2px;height:1px;background:#5c5c5c;"></div>
<div style="left:1158.1000000000001px;top:648.5px;width:2px;height:1px;background:#5c5c5c;"></div>
<div style="left:1158.1000000000001px;top:661px;width:2px;height:1px;background:#5c5c5c;"></div>
<div style="left:1158.1000000000001px;top:673px;width:2px;height:1px;background:#5c5c5c;"></div>
<div style="left:1158.1000000000001px;top:683.5px;width:2px;height:1px;background:#5c5c5c;"></div>
<div style="left:1158.1000000000001px;top:691px;width:2px;height:1px;background:#5c5c5c;"></div>
<div style="left:1161px;top:500px;width:11px;height:194.5px;background:#1c1c1c;"></div>
<div style="left:1166px;top:500px;width:1px;height:194.5px;background:#2a2a2a;"></div>
<div style="left:1161px;top:520px;width:11px;height:1px;background:#6a6a6a;"></div>
<div style="left:1162px;top:567.4px;width:4px;height:127.10000000000002px;background:#1fb04c;"></div>
<div style="left:1162px;top:567.4px;width:4px;height:9px;background:linear-gradient(#b8d018,#70e030);"></div>
<div style="left:1167px;top:567.4px;width:4px;height:127.10000000000002px;background:#1fb04c;"></div>
<div style="left:1167px;top:567.4px;width:4px;height:9px;background:linear-gradient(#b8d018,#70e030);"></div>
<div style="left:1162px;top:576px;width:4px;height:118.5px;background:#12f05c;"></div>
<div style="left:1167px;top:576px;width:4px;height:118.5px;background:#12f05c;"></div>
<div style="left:1161px;top:520px;width:10.6px;height:2px;background:#c03828;"></div>
<span style="left:1174.6000000000001px;top:499.5px;color:#a0a0a0;font-size:9px;line-height:11px">6</span>
<span style="left:1174.6000000000001px;top:514.5px;color:#a0a0a0;font-size:9px;line-height:11px">0</span>
<span style="left:1174.6000000000001px;top:534.5px;color:#a0a0a0;font-size:9px;line-height:11px">6</span>
<span style="left:1174.6000000000001px;top:553.0px;color:#a0a0a0;font-size:9px;line-height:11px">12</span>
<span style="left:1174.6000000000001px;top:572.0px;color:#a0a0a0;font-size:9px;line-height:11px">18</span>
<span style="left:1174.6000000000001px;top:590.5px;color:#a0a0a0;font-size:9px;line-height:11px">24</span>
<span style="left:1174.6000000000001px;top:611.5px;color:#a0a0a0;font-size:9px;line-height:11px">30</span>
<span style="left:1174.6000000000001px;top:628.0px;color:#a0a0a0;font-size:9px;line-height:11px">36</span>
<span style="left:1174.6000000000001px;top:643.0px;color:#a0a0a0;font-size:9px;line-height:11px">42</span>
<span style="left:1174.6000000000001px;top:655.5px;color:#a0a0a0;font-size:9px;line-height:11px">48</span>
<span style="left:1174.6000000000001px;top:667.5px;color:#a0a0a0;font-size:9px;line-height:11px">54</span>
<span style="left:1174.6000000000001px;top:678.0px;color:#a0a0a0;font-size:9px;line-height:11px">60</span>
<svg style="position:absolute;left:1121.3000000000002px;top:619.5px" width="24" height="28"><path d="M6.33 25.07A10.7 10.7 0 0 1 9.4 5.62M14.6 5.62A10.7 10.7 0 0 1 17.67 25.07" fill="none" stroke="#111" stroke-width="1.7"/><path d="M12 3.5V16.5" stroke="#111" stroke-width="1.8"/><path d="M9 0.7H15L12 3.4Z" fill="#111"/></svg>
<div style="left:1123.6000000000001px;top:657px;width:19px;height:9.5px;background:#6a6a6a;color:#2a2a2a;font-size:9px;line-height:9.5px;text-align:center;outline:1px solid #8a8a8a">Solo</div>
<svg style="position:absolute;left:1121.1000000000001px;top:670px" width="24" height="24"><path d="M6 19A9.5 9.5 0 1 1 20 18" fill="none" stroke="#3a78d8" stroke-width="1.8"/><path d="M12 12L20 15" stroke="#111" stroke-width="1.8"/><circle cx="11.5" cy="21" r="2.8" fill="none" stroke="#ccc" stroke-width="1.1"/></svg>
<div style="left:1110.1000000000001px;top:701.8px;width:82.3px;height:5.4px;background:#ffffff;"></div>
<div style="left:949px;top:480px;width:2.7px;height:228px;background:#262626;"></div>
<div style="left:7px;top:701.8px;width:4px;height:5.4px;background:#92a6ff;border-radius:0 0 0 4px"></div>
<div style="left:1185px;top:701.8px;width:7px;height:5.4px;background:#ffffff;border-radius:0 0 4px 0"></div>
<div style="left:0px;top:708px;width:1200px;height:29px;background:#232323;"></div>
<svg style="position:absolute;left:8px;top:715px" width="14" height="14"><circle cx="7" cy="7" r="6.5" fill="#3a3a3a"/><path d="M7 6V11" stroke="#232323" stroke-width="1.6"/><circle cx="7" cy="3.8" r="1" fill="#232323"/></svg>
<div style="left:35px;top:714px;width:750px;height:16px;background:#2e2e2e;border-radius:2px"></div>
<div style="left:794px;top:715px;width:14px;height:14px;background:#2c2c2c;"></div>
<svg style="position:absolute;left:797px;top:718px" width="8" height="8"><path d="M1 0.5V7.5L7 4Z" fill="#c0c0c0"/></svg>
<div style="left:810px;top:714px;width:167px;height:16px;background:#333333;"></div>
<div style="left:815px;top:717.0px;width:3.5px;height:1.2px;background:#1e1e1e;"></div>
<div style="left:820px;top:724.0px;width:3.5px;height:1.2px;background:#1e1e1e;"></div>
<div style="left:824px;top:720.5px;width:3.5px;height:1.2px;background:#1e1e1e;"></div>
<div style="left:829px;top:717.0px;width:3.5px;height:1.2px;background:#1e1e1e;"></div>
<div style="left:833px;top:724.0px;width:3.5px;height:1.2px;background:#1e1e1e;"></div>
<div style="left:838px;top:720.5px;width:3.5px;height:1.2px;background:#1e1e1e;"></div>
<div style="left:843px;top:717.0px;width:3.5px;height:1.2px;background:#1e1e1e;"></div>
<div style="left:847px;top:724.0px;width:3.5px;height:1.2px;background:#1e1e1e;"></div>
<div style="left:852px;top:720.5px;width:3.5px;height:1.2px;background:#1e1e1e;"></div>
<div style="left:856px;top:717.0px;width:3.5px;height:1.2px;background:#1e1e1e;"></div>
<div style="left:861px;top:724.0px;width:3.5px;height:1.2px;background:#1e1e1e;"></div>
<div style="left:866px;top:720.5px;width:3.5px;height:1.2px;background:#1e1e1e;"></div>
<div style="left:870px;top:717.0px;width:3.5px;height:1.2px;background:#1e1e1e;"></div>
<div style="left:875px;top:724.0px;width:3.5px;height:1.2px;background:#1e1e1e;"></div>
<div style="left:879px;top:720.5px;width:3.5px;height:1.2px;background:#1e1e1e;"></div>
<div style="left:884px;top:717.0px;width:3.5px;height:1.2px;background:#1e1e1e;"></div>
<div style="left:889px;top:724.0px;width:3.5px;height:1.2px;background:#1e1e1e;"></div>
<div style="left:893px;top:720.5px;width:3.5px;height:1.2px;background:#1e1e1e;"></div>
<div style="left:898px;top:717.0px;width:3.5px;height:1.2px;background:#1e1e1e;"></div>
<div style="left:902px;top:724.0px;width:3.5px;height:1.2px;background:#1e1e1e;"></div>
<div style="left:907px;top:720.5px;width:3.5px;height:1.2px;background:#1e1e1e;"></div>
<div style="left:912px;top:717.0px;width:3.5px;height:1.2px;background:#1e1e1e;"></div>
<div style="left:916px;top:724.0px;width:3.5px;height:1.2px;background:#1e1e1e;"></div>
<div style="left:921px;top:720.5px;width:3.5px;height:1.2px;background:#1e1e1e;"></div>
<div style="left:925px;top:717.0px;width:3.5px;height:1.2px;background:#1e1e1e;"></div>
<div style="left:930px;top:724.0px;width:3.5px;height:1.2px;background:#1e1e1e;"></div>
<div style="left:935px;top:720.5px;width:3.5px;height:1.2px;background:#1e1e1e;"></div>
<div style="left:939px;top:717.0px;width:3.5px;height:1.2px;background:#1e1e1e;"></div>
<div style="left:944px;top:724.0px;width:3.5px;height:1.2px;background:#1e1e1e;"></div>
<div style="left:948px;top:720.5px;width:3.5px;height:1.2px;background:#1e1e1e;"></div>
<div style="left:953px;top:717.0px;width:3.5px;height:1.2px;background:#1e1e1e;"></div>
<div style="left:958px;top:724.0px;width:3.5px;height:1.2px;background:#1e1e1e;"></div>
<div style="left:962px;top:720.5px;width:3.5px;height:1.2px;background:#1e1e1e;"></div>
<div style="left:967px;top:717.0px;width:3.5px;height:1.2px;background:#1e1e1e;"></div>
<div style="left:971px;top:724.0px;width:3.5px;height:1.2px;background:#1e1e1e;"></div>
<div style="left:976px;top:720.5px;width:3.5px;height:1.2px;background:#1e1e1e;"></div>
<div style="left:939.5px;top:714px;width:1.5px;height:16px;background:#d8d8d8;"></div>
<div style="left:985px;top:715px;width:14px;height:14px;background:#2c2c2c;"></div>
<svg style="position:absolute;left:988px;top:718px" width="8" height="8"><path d="M1 0.5V7.5L7 4Z" fill="#c0c0c0"/></svg>
<div style="left:1001px;top:715px;width:28px;height:14px;background:#2c2c2c;color:#c0c0c0;font-size:9px;line-height:14px;text-align:center;font-weight:bold">Bass</div>
<div style="left:1029px;top:714px;width:125px;height:16px;background:#2b2b2b;"></div>
<div style="left:1030px;top:715px;width:10px;height:14px;background:#1e1e1e;"></div>
<div style="left:1030px;top:716px;width:10px;height:1.5px;background:#2a9ab0;"></div>
<div style="left:1030px;top:724px;width:10px;height:2px;background:#b07a38;"></div>
<div style="left:1042px;top:716px;width:6px;height:12px;background:#333;"></div>
<div style="left:1052px;top:715px;width:34px;height:14px;background:#1c1c1c;"></div>
<div style="left:1054px;top:716px;width:8px;height:1.5px;background:#2a9ab0;"></div>
<div style="left:1053px;top:719px;width:32px;height:0.8px;background:#1f4a50;"></div>
<div style="left:1053px;top:722px;width:32px;height:0.8px;background:#1f4a50;"></div>
<div style="left:1053px;top:725px;width:32px;height:0.8px;background:#1f4a50;"></div>
<div style="left:1087px;top:715px;width:15px;height:14px;background:#303030;"></div>
<div style="left:1102px;top:716px;width:5px;height:3px;background:#c88a40;"></div>
<div style="left:1110px;top:715px;width:12px;height:14px;background:#262626;"></div>
<div style="left:1120px;top:726px;width:12px;height:3px;background:#207a90;"></div>
<div style="left:1126px;top:721px;width:6px;height:1.5px;background:#b08040;"></div>
<div style="left:1136px;top:715px;width:13px;height:14px;background:#1a1a1a;"></div>
<div style="left:1149px;top:716px;width:4px;height:1.5px;background:#b07a38;"></div>
<div style="left:1149px;top:720px;width:4px;height:1.5px;background:#b07a38;"></div>
<div style="left:1167.0px;top:719.7px;width:1.8px;height:8px;background:#ffa64f;"></div>
<div style="left:1170.6px;top:716.7px;width:1.8px;height:11px;background:#ffa64f;"></div>
<div style="left:1174.2px;top:720.2px;width:1.8px;height:7.5px;background:#ffa64f;"></div>
<div style="left:1177.8px;top:718.0px;width:1.8px;height:9.7px;background:#ffa64f;"></div>
<svg style="position:absolute;left:1183px;top:719px" width="6" height="4"><path d="M0 0H6L3 4Z" fill="#555"/></svg>
</div></body></html>
